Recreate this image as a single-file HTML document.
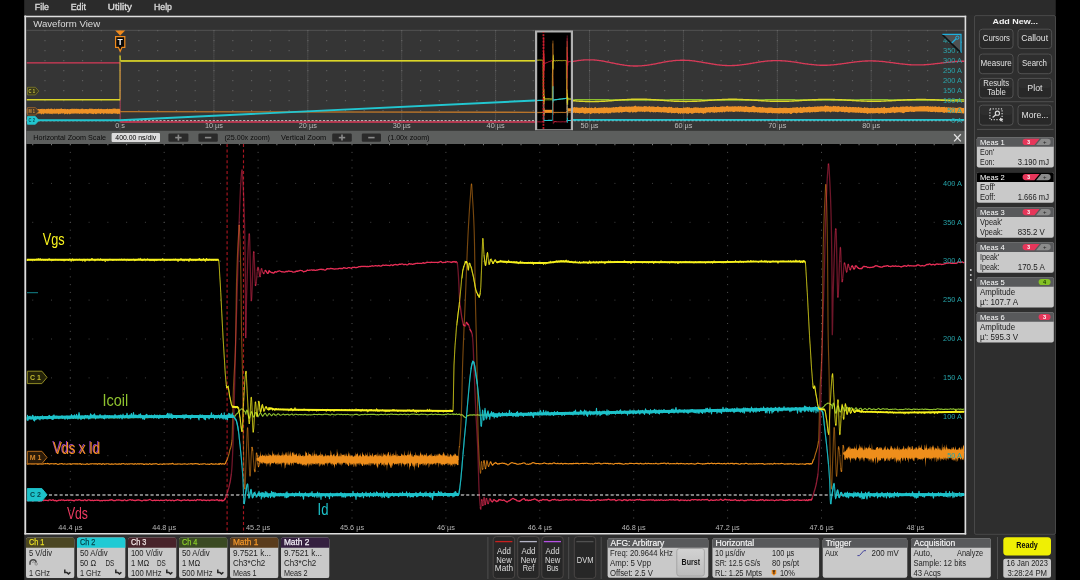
<!DOCTYPE html>
<html><head><meta charset="utf-8"><title>Oscilloscope</title>
<style>html,body{margin:0;padding:0;background:#000;overflow:hidden}svg{display:block;will-change:transform}text{font-family:"Liberation Sans", "DejaVu Sans", sans-serif;}</style>
</head><body>
<svg width="1080" height="580" viewBox="0 0 1080 580">
<rect x="0" y="0" width="1080" height="580" fill="#000" />
<rect x="24.4" y="0" width="1031.1" height="580" fill="#2d2d2d" />
<rect x="24.5" y="0" width="1031" height="15" fill="#2b2b2b" />
<text x="34.8" y="10" font-size="8.6" fill="#e4e4e4" textLength="14.2" lengthAdjust="spacingAndGlyphs" stroke="#e4e4e4" stroke-width="0.3" opacity="0.95">File</text>
<text x="70.7" y="10" font-size="8.6" fill="#e4e4e4" textLength="15.3" lengthAdjust="spacingAndGlyphs" stroke="#e4e4e4" stroke-width="0.3" opacity="0.95">Edit</text>
<text x="107.8" y="10" font-size="8.6" fill="#e4e4e4" textLength="24" lengthAdjust="spacingAndGlyphs" stroke="#e4e4e4" stroke-width="0.3" opacity="0.95">Utility</text>
<text x="154" y="10" font-size="8.6" fill="#e4e4e4" textLength="18" lengthAdjust="spacingAndGlyphs" stroke="#e4e4e4" stroke-width="0.3" opacity="0.95">Help</text>
<rect x="25" y="15.5" width="941.3" height="519" fill="#333333" />
<rect x="26.5" y="17" width="938" height="13.3" fill="#323232" />
<text x="33.2" y="26.7" font-size="9.4" fill="#dcdcdc" textLength="67" lengthAdjust="spacingAndGlyphs" >Waveform View</text>
<rect x="26.5" y="30.3" width="938.0" height="100.50000000000001" fill="#353535" />
<line x1="26.5" y1="30.3" x2="964.5" y2="30.3" stroke="#5a5a5a" stroke-width="0.8" />
<rect x="26.5" y="130.8" width="938" height="13.3" fill="#5c5e5d" />
<text x="33.3" y="139.6" font-size="7.6" fill="#0c0c0c" textLength="72.7" lengthAdjust="spacingAndGlyphs" >Horizontal Zoom Scale</text>
<rect x="111.6" y="133" width="48.4" height="9" fill="#dcdcdc" rx="1" />
<text x="135.8" y="139.8" font-size="7.4" fill="#000" text-anchor="middle" textLength="41" lengthAdjust="spacingAndGlyphs" >400.00 ns/div</text>
<rect x="168.4" y="133.5" width="20" height="8.3" fill="#2a2a2a" rx="1.2" />
<line x1="175.20000000000002" y1="137.6" x2="181.6" y2="137.6" stroke="#8a8a8a" stroke-width="1.6" />
<line x1="178.4" y1="134.6" x2="178.4" y2="140.6" stroke="#8a8a8a" stroke-width="1.6" />
<rect x="198.4" y="133.5" width="19.4" height="8.3" fill="#2a2a2a" rx="1.2" />
<line x1="204.9" y1="137.6" x2="211.29999999999998" y2="137.6" stroke="#8a8a8a" stroke-width="1.6" />
<text x="224.4" y="139.6" font-size="7.6" fill="#0c0c0c" textLength="45.6" lengthAdjust="spacingAndGlyphs" >(25.00x zoom)</text>
<text x="281" y="139.6" font-size="7.6" fill="#0c0c0c" textLength="45.2" lengthAdjust="spacingAndGlyphs" >Vertical Zoom</text>
<rect x="332.2" y="133.5" width="19.6" height="8.3" fill="#2a2a2a" rx="1.2" />
<line x1="338.8" y1="137.6" x2="345.2" y2="137.6" stroke="#8a8a8a" stroke-width="1.6" />
<line x1="342.0" y1="134.6" x2="342.0" y2="140.6" stroke="#8a8a8a" stroke-width="1.6" />
<rect x="361.8" y="133.5" width="19.2" height="8.3" fill="#2a2a2a" rx="1.2" />
<line x1="368.20000000000005" y1="137.6" x2="374.6" y2="137.6" stroke="#8a8a8a" stroke-width="1.6" />
<text x="387.8" y="139.6" font-size="7.6" fill="#0c0c0c" textLength="41.7" lengthAdjust="spacingAndGlyphs" >(1.00x zoom)</text>
<line x1="954.1" y1="134.2" x2="960.8" y2="141.4" stroke="#e4e4e4" stroke-width="1.25" />
<line x1="960.8" y1="134.2" x2="954.1" y2="141.4" stroke="#e4e4e4" stroke-width="1.25" />
<rect x="26.5" y="144" width="938.0" height="389" fill="#000" />
<clipPath id="pc"><rect x="26.5" y="144" width="938.0" height="389"/></clipPath>
<g clip-path="url(#pc)">
<line x1="70.3" y1="151.88" x2="70.3" y2="531" stroke="#525252" stroke-width="1" stroke-dasharray="1 6.780"/>
<line x1="164.2" y1="151.88" x2="164.2" y2="531" stroke="#525252" stroke-width="1" stroke-dasharray="1 6.780"/>
<line x1="258.1" y1="151.88" x2="258.1" y2="531" stroke="#525252" stroke-width="1" stroke-dasharray="1 6.780"/>
<line x1="352.0" y1="151.88" x2="352.0" y2="531" stroke="#525252" stroke-width="1" stroke-dasharray="1 6.780"/>
<line x1="445.9" y1="151.88" x2="445.9" y2="531" stroke="#525252" stroke-width="1" stroke-dasharray="1 6.780"/>
<line x1="539.8" y1="151.88" x2="539.8" y2="531" stroke="#525252" stroke-width="1" stroke-dasharray="1 6.780"/>
<line x1="633.7" y1="151.88" x2="633.7" y2="531" stroke="#525252" stroke-width="1" stroke-dasharray="1 6.780"/>
<line x1="727.6" y1="151.88" x2="727.6" y2="531" stroke="#525252" stroke-width="1" stroke-dasharray="1 6.780"/>
<line x1="821.5" y1="151.88" x2="821.5" y2="531" stroke="#525252" stroke-width="1" stroke-dasharray="1 6.780"/>
<line x1="915.4" y1="151.88" x2="915.4" y2="531" stroke="#525252" stroke-width="1" stroke-dasharray="1 6.780"/>
<line x1="32.24" y1="183.4" x2="964.5" y2="183.4" stroke="#525252" stroke-width="1" stroke-dasharray="1 17.780" opacity="0.8"/>
<line x1="32.24" y1="222.3" x2="964.5" y2="222.3" stroke="#525252" stroke-width="1" stroke-dasharray="1 17.780" opacity="0.8"/>
<line x1="32.24" y1="261.2" x2="964.5" y2="261.2" stroke="#525252" stroke-width="1" stroke-dasharray="1 17.780" opacity="0.8"/>
<line x1="32.24" y1="300.1" x2="964.5" y2="300.1" stroke="#525252" stroke-width="1" stroke-dasharray="1 17.780" opacity="0.8"/>
<line x1="32.24" y1="339.0" x2="964.5" y2="339.0" stroke="#525252" stroke-width="1" stroke-dasharray="1 17.780" opacity="0.8"/>
<line x1="32.24" y1="377.9" x2="964.5" y2="377.9" stroke="#525252" stroke-width="1" stroke-dasharray="1 17.780" opacity="0.8"/>
<line x1="32.24" y1="416.8" x2="964.5" y2="416.8" stroke="#525252" stroke-width="1" stroke-dasharray="1 17.780" opacity="0.8"/>
<line x1="32.24" y1="455.7" x2="964.5" y2="455.7" stroke="#525252" stroke-width="1" stroke-dasharray="1 17.780" opacity="0.8"/>
<line x1="32.24" y1="494.6" x2="964.5" y2="494.6" stroke="#525252" stroke-width="1" stroke-dasharray="1 17.780" opacity="0.8"/>
<line x1="32.24" y1="144.6" x2="964.5" y2="144.6" stroke="#777" stroke-width="1.2" stroke-dasharray="1 17.780"/>
<line x1="27" y1="292.6" x2="38" y2="292.6" stroke="#0f6a70" stroke-width="1.2" />
<line x1="27.5" y1="495" x2="964.5" y2="495" stroke="#7e7e7e" stroke-width="1.9" stroke-dasharray="3.1 2.25"/>
<line x1="227.1" y1="144" x2="227.1" y2="533" stroke="#a81620" stroke-width="1.15" stroke-dasharray="3 2.4"/>
<line x1="243.5" y1="144" x2="243.5" y2="533" stroke="#a81620" stroke-width="1.15" stroke-dasharray="3 2.4"/>
<polyline points="26.5,418.0 27,417.9 27.5,417.8 28,417.5 28.5,417.4 29,417.5 29.5,418.1 30,418.2 30.5,417.8 31,417.6 31.5,417.8 32,418.0 32.5,418.1 33,417.9 33.5,417.9 34,417.8 34.5,417.8 35,417.8 35.5,417.7 36,417.8 36.5,417.7 37,417.5 37.5,417.5 38,417.3 38.5,417.4 39,417.2 39.5,417.5 40,417.6 40.5,417.7 41,417.8 41.5,417.9 42,417.9 42.5,417.5 43,417.5 43.5,417.5 44,417.7 44.5,417.7 45,417.7 45.5,417.7 46,417.7 46.5,417.9 47,417.8 47.5,417.9 48,417.9 48.5,418.2 49,418.0 49.5,417.9 50,417.8 50.5,417.9 51,417.9 51.5,417.8 52,417.7 52.5,417.6 53,417.5 53.5,417.6 54,417.6 54.5,417.5 55,417.5 55.5,417.7 56,418.1 56.5,417.8 57,417.5 57.5,417.5 58,417.7 58.5,417.8 59,417.7 59.5,417.7 60,417.6 60.5,417.7 61,417.6 61.5,417.7 62,417.7 62.5,418.0 63,418.0 63.5,417.8 64,417.6 64.5,417.6 65,417.5 65.5,417.8 66,417.8 66.5,417.9 67,417.8 67.5,417.9 68,417.8 68.5,417.8 69,417.8 69.5,417.8 70,417.7 70.5,417.4 71,417.5 71.5,417.6 72,417.8 72.5,417.7 73,417.6 73.5,417.6 74,417.7 74.5,417.7 75,417.9 75.5,418.0 76,417.7 76.5,417.6 77,417.5 77.5,417.8 78,417.9 78.5,418.0 79,417.9 79.5,418.1 80,418.0 80.5,417.9 81,417.7 81.5,417.5 82,417.8 82.5,417.8 83,418.2 83.5,418.1 84,418.0 84.5,417.7 85,417.5 85.5,417.5 86,417.6 86.5,417.8 87,417.6 87.5,417.5 88,417.5 88.5,417.7 89,417.8 89.5,417.6 90,417.4 90.5,417.6 91,417.6 91.5,417.7 92,417.3 92.5,417.6 93,417.6 93.5,417.7 94,417.7 94.5,417.6 95,417.6 95.5,417.4 96,417.5 96.5,417.6 97,417.7 97.5,417.6 98,417.5 98.5,417.5 99,417.6 99.5,417.4 100,417.2 100.5,417.2 101,417.5 101.5,417.7 102,417.6 102.5,417.6 103,417.6 103.5,417.6 104,417.7 104.5,417.7 105,417.7 105.5,417.5 106,417.5 106.5,417.4 107,417.4 107.5,417.4 108,417.6 108.5,417.8 109,417.8 109.5,417.9 110,417.7 110.5,417.6 111,417.5 111.5,417.8 112,417.8 112.5,417.8 113,417.5 113.5,417.6 114,417.5 114.5,417.7 115,417.5 115.5,417.8 116,417.6 116.5,417.6 117,417.5 117.5,417.7 118,417.8 118.5,417.8 119,417.7 119.5,417.6 120,417.5 120.5,417.5 121,417.3 121.5,417.3 122,417.1 122.5,417.0 123,417.3 123.5,417.5 124,417.7 124.5,417.8 125,417.7 125.5,417.6 126,417.4 126.5,417.4 127,417.6 127.5,417.9 128,417.7 128.5,417.5 129,417.2 129.5,417.5 130,417.6 130.5,417.8 131,417.6 131.5,417.5 132,417.4 132.5,417.6 133,417.5 133.5,417.7 134,417.6 134.5,417.5 135,417.2 135.5,417.1 136,417.2 136.5,417.2 137,417.4 137.5,417.5 138,417.7 138.5,417.5 139,417.1 139.5,417.1 140,417.5 140.5,417.7 141,417.6 141.5,417.4 142,417.4 142.5,417.5 143,417.4 143.5,417.6 144,417.7 144.5,417.7 145,417.8 145.5,417.5 146,417.6 146.5,417.4 147,417.8 147.5,417.7 148,417.6 148.5,417.5 149,417.3 149.5,417.5 150,417.2 150.5,417.5 151,417.4 151.5,417.6 152,417.5 152.5,417.3 153,417.0 153.5,417.2 154,417.3 154.5,417.5 155,417.2 155.5,417.3 156,417.3 156.5,417.5 157,417.4 157.5,417.5 158,417.4 158.5,417.5 159,417.4 159.5,417.3 160,417.4 160.5,417.6 161,417.4 161.5,417.2 162,417.1 162.5,417.2 163,417.1 163.5,416.9 164,417.0 164.5,417.2 165,417.4 165.5,417.3 166,417.3 166.5,417.0 167,417.0 167.5,416.9 168,417.2 168.5,417.3 169,417.4 169.5,417.1 170,417.1 170.5,416.9 171,417.1 171.5,417.1 172,417.0 172.5,417.2 173,417.1 173.5,417.3 174,417.1 174.5,417.3 175,417.3 175.5,417.6 176,417.4 176.5,417.3 177,417.1 177.5,417.0 178,417.0 178.5,417.0 179,417.0 179.5,417.0 180,417.0 180.5,416.9 181,417.0 181.5,416.8 182,417.2 182.5,417.1 183,417.4 183.5,417.0 184,417.1 184.5,416.9 185,417.2 185.5,417.3 186,417.1 186.5,417.1 187,416.8 187.5,417.1 188,417.0 188.5,417.0 189,416.9 189.5,417.0 190,417.0 190.5,416.8 191,416.8 191.5,416.8 192,416.8 192.5,416.9 193,417.0 193.5,417.1 194,417.0 194.5,417.1 195,417.2 195.5,416.8 196,416.7 196.5,416.7 197,416.9 197.5,417.2 198,417.0 198.5,417.0 199,416.8 199.5,417.0 200,417.1 200.5,417.1 201,416.7 201.5,416.7 202,416.7 202.5,416.8 203,416.9 203.5,416.9 204,417.2 204.5,417.0 205,416.7 205.5,416.5 206,416.7 206.5,416.7 207,416.8 207.5,416.7 208,416.7 208.5,416.5 209,416.7 209.5,417.1 210,416.9 210.5,416.7 211,416.3 211.5,416.5 212,416.6 212.5,416.5 213,416.4 213.5,416.3 214,416.5 214.5,416.8 215,416.7 215.5,416.7 216,416.7 216.5,416.7 217,416.6 217.5,416.5 218,416.9 218.25,416.9 218.5,416.8 218.75,416.5 219,416.4 219.25,416.6 219.5,416.4 219.75,416.3 220,416.3 220.25,416.6 220.5,416.7 220.75,416.7 221,416.5 221.25,416.5 221.5,416.3 221.75,416.3 222,416.3 222.25,416.3 222.5,416.4 222.75,416.5 223,416.4 223.25,416.5 223.5,416.7 223.75,416.8 224,416.8 224.25,416.7 224.5,416.5 224.75,416.3 225,416.2 225.25,416.1 225.5,416.2 225.75,416.2 226,416.5 226.25,416.6 226.5,416.7 226.75,416.6 227,416.7 227.25,416.6 227.5,416.7 227.75,416.5 228,416.6 228.25,416.4 228.5,416.5 228.75,416.5 229,416.5 229.25,416.3 229.5,416.1 229.75,416.2 230,416.3 230.25,416.5 230.5,416.7 230.75,416.9 231,416.8 231.25,416.5 231.5,416.2 231.75,416.3 232,416.4 232.25,416.5 232.5,416.3 232.75,416.3 233,416.0 233.25,416.0 233.5,416.0 233.75,416.3 234,416.2 234.25,416.1 234.5,416.1 234.75,416.3 235,416.2 235.25,416.0 235.5,415.5 235.75,415.0 236,414.5 236.25,414.1 236.5,413.9 236.75,413.8 237,413.8 237.25,413.6 237.5,413.2 237.75,413.0 238,412.6 238.25,412.1 238.5,411.7 238.75,411.4 239,411.2 239.25,410.8 239.5,410.2 239.75,410.1 240,410.0 240.25,410.0 240.5,410.0 240.75,409.6 241,409.4 241.25,408.9 241.5,408.9 241.75,409.0 242,409.0 242.25,408.9 242.5,409.1 242.75,409.4 243,409.8 243.25,409.7 243.5,410.0 243.75,410.4 244,410.8 244.25,411.0 244.5,411.0 244.75,411.4 245,411.6 245.25,412.0 245.5,412.4 245.75,414.3 246,413.0 246.25,411.9 246.5,410.8 246.75,410.2 247,410.0 247.25,410.4 247.5,411.4 247.75,412.6 248,413.8 248.25,415.1 248.5,416.3 248.75,417.4 249,418.0 249.25,418.4 249.5,418.1 249.75,417.4 250,416.2 250.25,415.3 250.5,414.3 250.75,413.5 251,412.5 251.25,411.8 251.5,411.6 251.75,411.8 252,412.4 252.25,413.2 252.5,414.1 252.75,415.1 253,416.1 253.25,416.6 253.5,417.0 253.75,416.9 254,416.9 254.25,416.3 254.5,415.8 254.75,415.1 255,414.2 255.25,413.2 255.5,412.5 255.75,412.5 256,412.6 256.25,412.8 256.5,413.1 256.75,413.6 257,414.3 257.25,415.2 257.5,415.9 257.75,416.3 258,416.3 258.25,416.3 258.5,416.1 258.75,415.7 259,415.3 259.25,414.5 259.5,414.0 259.75,413.4 260,413.2 260.25,413.0 260.5,413.1 260.75,413.2 261,413.4 261.25,413.9 261.5,414.5 261.75,415.1 262,415.3 262.25,415.9 262.5,416.1 262.75,416.3 263,415.7 263.25,415.3 263.5,415.0 263.75,414.8 264,414.5 264.25,414.1 264.5,413.6 264.75,413.2 265,413.2 265.25,413.2 265.5,413.5 265.75,413.9 266,414.3 266.25,414.7 266.5,415.2 266.75,415.6 267,415.9 267.25,415.9 267.5,415.8 267.75,415.5 268,415.0 268.25,414.5 268.5,414.0 268.75,413.8 269,413.7 269.25,413.6 269.5,413.6 269.75,413.9 270,414.1 270.25,414.4 270.5,414.7 270.75,414.9 271,415.2 271.25,415.5 271.5,415.7 271.75,415.8 272,415.4 272.25,415.1 272.5,414.7 272.75,414.4 273,414.1 273.25,413.9 273.5,413.9 273.75,413.9 274,414.0 274.25,414.0 274.5,414.5 274.75,414.7 275,415.2 275.5,415.1 276,415.2 276.5,415.0 277,414.6 277.5,414.2 278,413.8 278.5,413.9 279,414.2 279.5,414.6 280,415.1 280.5,415.2 281,415.1 281.5,414.9 282,414.7 282.5,414.4 283,414.1 283.5,414.1 284,414.5 284.5,414.9 285,415.0 285.5,414.6 286,414.7 286.5,414.5 287,414.4 287.5,414.2 288,414.2 288.5,414.8 289,415.1 289.5,415.2 290,414.7 290.5,414.7 291,414.4 291.5,414.1 292,414.0 292.5,414.3 293,414.9 293.5,415.1 294,415.0 294.5,414.6 295,414.3 295.5,414.2 296,414.2 296.5,414.4 297,414.5 297.5,414.8 298,414.8 298.5,414.9 299,414.6 299.5,414.5 300,414.5 300.5,414.6 301,414.5 301.5,414.6 302,414.6 302.5,414.7 303,414.7 303.5,414.9 304,414.8 304.5,414.5 305,414.3 305.5,414.5 306,414.7 306.5,415.0 307,414.7 307.5,414.9 308,414.7 308.5,415.0 309,414.7 309.5,414.7 310,414.7 310.5,415.0 311,414.9 311.5,414.7 312,414.7 312.5,414.8 313,414.7 313.5,414.4 314,414.4 314.5,414.3 315,414.5 315.5,414.5 316,414.5 316.5,414.5 317,414.6 317.5,414.8 318,414.5 318.5,414.3 319,414.4 319.5,414.4 320,414.5 320.5,414.5 321,414.6 321.5,414.6 322,414.5 322.5,414.7 323,414.8 323.5,414.6 324,414.3 324.5,414.2 325,414.1 325.5,414.3 326,414.4 326.5,414.3 327,414.3 327.5,414.2 328,414.5 328.5,414.6 329,414.6 329.5,414.8 330,415.1 330.5,415.0 331,414.8 331.5,414.3 332,414.1 332.5,414.3 333,414.5 333.5,414.7 334,414.7 334.5,414.8 335,414.9 335.5,415.0 336,414.7 336.5,414.5 337,414.2 337.5,414.3 338,414.3 338.5,414.3 339,414.3 339.5,414.5 340,414.7 340.5,414.5 341,414.2 341.5,414.2 342,414.5 342.5,414.6 343,414.7 343.5,414.6 344,414.5 344.5,414.5 345,414.4 345.5,414.8 346,414.6 346.5,414.6 347,414.4 347.5,414.4 348,414.5 348.5,414.5 349,414.7 349.5,414.7 350,414.9 350.5,414.7 351,414.9 351.5,414.8 352,414.8 352.5,414.9 353,415.0 353.5,415.0 354,414.7 354.5,414.5 355,414.4 355.5,414.5 356,414.4 356.5,414.4 357,414.3 357.5,414.6 358,414.7 358.5,415.0 359,415.1 359.5,415.0 360,415.1 360.5,414.8 361,414.8 361.5,414.5 362,414.5 362.5,414.6 363,414.7 363.5,414.7 364,414.5 364.5,414.4 365,414.3 365.5,414.2 366,414.4 366.5,414.6 367,414.7 367.5,414.4 368,414.3 368.5,414.5 369,414.5 369.5,414.5 370,414.2 370.5,414.5 371,414.4 371.5,414.4 372,414.3 372.5,414.4 373,414.2 373.5,414.4 374,414.3 374.5,414.4 375,414.5 375.5,414.6 376,414.9 376.5,414.8 377,414.8 377.5,414.5 378,414.8 378.5,414.9 379,414.9 379.5,414.6 380,414.4 380.5,414.5 381,414.4 381.5,414.4 382,414.4 382.5,414.6 383,414.8 383.5,414.8 384,414.6 384.5,414.3 385,414.2 385.5,414.1 386,414.5 386.5,414.7 387,414.8 387.5,414.5 388,414.3 388.5,414.2 389,414.5 389.5,414.5 390,414.3 390.5,414.1 391,414.1 391.5,414.1 392,414.1 392.5,414.1 393,414.5 393.5,414.5 394,414.5 394.5,414.3 395,414.3 395.5,414.5 396,414.4 396.5,414.2 397,414.4 397.5,414.6 398,414.8 398.5,414.8 399,414.6 399.5,414.5 400,414.1 400.5,414.3 401,414.4 401.5,414.5 402,414.4 402.5,414.6 403,414.6 403.5,414.4 404,414.3 404.5,414.1 405,414.3 405.5,414.3 406,414.7 406.5,414.6 407,414.4 407.5,414.2 408,414.1 408.5,414.5 409,414.6 409.5,414.9 410,414.6 410.5,414.4 411,414.3 411.5,414.1 412,414.1 412.5,414.0 413,414.2 413.5,414.1 414,413.9 414.5,414.1 415,414.2 415.5,414.5 416,414.4 416.5,414.5 417,414.4 417.5,414.3 418,414.4 418.5,414.7 419,414.8 419.5,414.8 420,414.4 420.5,414.4 421,414.1 421.5,414.1 422,414.1 422.5,414.3 423,414.5 423.5,414.3 424,414.2 424.5,414.2 425,414.3 425.5,414.4 426,414.4 426.5,414.6 427,414.6 427.5,414.9 428,414.7 428.5,414.7 429,414.5 429.5,414.5 430,414.4 430.5,414.5 431,414.2 431.5,414.0 432,414.1 432.5,414.5 433,414.8 433.5,414.5 434,414.5 434.5,414.3 435,414.2 435.5,414.1 436,414.3 436.5,414.4 437,414.6 437.5,414.5 438,414.4 438.5,414.2 439,414.4 439.5,414.5 440,414.6 440.5,414.5 441,414.5 441.5,414.7 442,414.7 442.5,414.7 443,414.5 443.5,414.6 444,414.6 444.5,414.7 445,414.4 445.5,414.4 446,414.3 446.5,414.6 447,414.2 447.5,413.9 448,413.8 448.5,414.0 449,414.3 449.5,414.3 450,414.5 450.5,414.4 451,414.2 451.5,414.2 452,414.2 452.25,414.2 452.5,413.9 452.75,414.3 453,414.4 453.25,414.6 453.5,414.0 453.75,413.9 454,413.9 454.25,414.2 454.5,414.4 454.75,414.4 455,414.4 455.25,414.4 455.5,414.5 455.75,414.4 456,414.0 456.25,414.0 456.5,413.8 456.75,414.1 457,414.2 457.25,414.6 457.5,414.5 457.75,414.6 458,414.5 458.25,414.5 458.5,414.3 458.75,414.4 459,414.4 459.25,414.4 459.5,414.1 459.75,414.1 460,414.5 460.25,414.7 460.5,415.1 460.75,415.3 461,415.1 461.25,414.8 461.5,414.5 461.75,414.7 462,414.6 462.25,414.8 462.5,414.9 462.75,415.3 463,415.6 463.25,415.6 463.5,416.1 463.75,416.6 464,416.8 464.25,416.7 464.5,416.7 464.75,417.1 465,417.4 465.25,417.5 465.5,417.6 465.75,417.6 466,417.6 466.25,417.2 466.5,416.7 466.75,416.2 467,416.1 467.25,415.9 467.5,415.7 467.75,415.5 468,415.5 468.25,415.7 468.5,415.4 468.75,415.3 469,415.1 469.25,415.3 469.5,415.2 469.75,414.9 470,414.8 470.25,414.7 470.5,414.9 470.75,415.1 471,415.3 471.25,415.1 471.5,414.9 471.75,414.8 472,415.1 472.25,415.2 472.5,415.2 472.75,414.9 473,414.8 473.25,414.7 473.5,414.9 473.75,414.9 474,414.9 474.25,414.8 474.5,414.8 474.75,414.8 475,415.1 475.25,415.1 475.5,415.2 475.75,415.1 476,415.0 476.25,415.1 476.5,414.9 476.75,415.1 477,414.9 477.25,414.9 477.5,414.6 477.75,414.7 478,414.9 478.25,414.9 478.5,415.1 478.75,415.1 479,415.1 479.25,415.1 479.5,415.1 479.75,415.4 480,414.8 480.25,415.1 480.5,415.0 480.75,415.3 481,415.1 481.25,414.9 481.5,415.0 481.75,415.0 482,415.2 482.25,415.0 482.5,414.8 482.75,414.8 483,415.0 483.25,415.2 483.5,415.1 483.75,414.9 484,415.0 484.25,415.2 484.5,415.2 484.75,415.0 485,415.2 485.25,415.0 485.5,415.1 485.75,414.8 486,415.2 486.25,415.1 486.5,414.9 486.75,414.6 487,414.6 487.25,414.8 487.5,414.9 487.75,414.8 488,414.6 488.25,414.5 488.5,414.5 488.75,414.6 489,414.8 489.25,414.7 489.5,415.0 489.75,414.8 490,415.0 490.25,414.9 490.5,415.3 490.75,415.3 491,415.1 491.25,415.0 491.5,414.9 491.75,415.2 492,415.2 492.25,415.0 492.5,415.0 492.75,415.0 493,415.0 493.25,414.8 493.5,414.8 493.75,414.8 494,414.8 494.25,415.1 494.5,415.2 494.75,415.2 495,414.9 495.25,414.9 495.5,414.7 495.75,414.8 496,414.8 496.25,414.9 496.5,414.9 496.75,414.9 497,414.9 497.25,414.9 497.5,415.0 497.75,414.9 498,415.0 498.25,414.9 498.5,415.0 498.75,414.9 499,415.1 499.25,415.0 499.5,415.0 499.75,414.7 500,414.7 500.5,414.8 501,414.9 501.5,414.9 502,414.8 502.5,414.7 503,414.5 503.5,414.5 504,414.7 504.5,415.0 505,415.1 505.5,415.2 506,415.1 506.5,414.9 507,414.8 507.5,414.7 508,414.3 508.5,414.3 509,414.5 509.5,414.8 510,414.7 510.5,414.7 511,414.8 511.5,414.8 512,414.7 512.5,414.6 513,414.7 513.5,415.0 514,414.8 514.5,414.7 515,414.4 515.5,414.4 516,414.6 516.5,414.7 517,414.7 517.5,414.3 518,414.5 518.5,414.4 519,414.3 519.5,414.2 520,414.3 520.5,414.5 521,414.5 521.5,414.3 522,414.2 522.5,414.2 523,414.1 523.5,414.2 524,414.0 524.5,414.1 525,414.3 525.5,414.4 526,414.5 526.5,414.5 527,414.5 527.5,414.2 528,414.2 528.5,414.0 529,414.2 529.5,414.0 530,414.0 530.5,413.8 531,413.7 531.5,413.9 532,413.9 532.5,414.0 533,414.1 533.5,413.9 534,413.9 534.5,413.9 535,414.3 535.5,414.3 536,414.2 536.5,414.1 537,414.2 537.5,414.6 538,414.7 538.5,414.5 539,414.4 539.5,414.2 540,414.1 540.5,414.0 541,414.1 541.5,413.9 542,414.0 542.5,413.7 543,414.2 543.5,414.1 544,414.2 544.5,414.1 545,414.1 545.5,414.3 546,414.0 546.5,413.9 547,413.6 547.5,413.7 548,413.8 548.5,414.0 549,414.1 549.5,414.1 550,414.2 550.5,414.2 551,414.0 551.5,413.8 552,413.6 552.5,413.6 553,413.7 553.5,413.6 554,413.4 554.5,413.5 555,413.6 555.5,413.7 556,413.6 556.5,413.6 557,413.3 557.5,413.4 558,413.5 558.5,413.7 559,413.9 559.5,413.8 560,413.8 560.5,413.7 561,413.6 561.5,413.6 562,413.7 562.5,413.5 563,413.3 563.5,412.9 564,413.1 564.5,413.0 565,413.2 565.5,413.2 566,413.5 566.5,413.7 567,413.6 567.5,413.4 568,413.3 568.5,413.4 569,413.4 569.5,413.0 570,413.2 570.5,413.3 571,413.4 571.5,413.1 572,412.9 572.5,413.1 573,413.2 573.5,413.2 574,413.1 574.5,413.2 575,413.5 575.5,413.7 576,413.6 576.5,413.5 577,413.3 577.5,413.4 578,413.4 578.5,413.3 579,413.1 579.5,413.0 580,413.2 580.5,413.2 581,413.1 581.5,413.1 582,413.4 582.5,413.3 583,413.2 583.5,413.1 584,413.2 584.5,413.3 585,413.0 585.5,413.0 586,413.0 586.5,413.3 587,413.4 587.5,413.2 588,412.8 588.5,412.6 589,412.8 589.5,413.1 590,413.3 590.5,413.3 591,413.1 591.5,412.9 592,412.7 592.5,412.9 593,412.8 593.5,412.9 594,412.8 594.5,413.1 595,413.0 595.5,413.0 596,412.7 596.5,412.9 597,412.8 597.5,412.9 598,412.7 598.5,412.6 599,412.6 599.5,412.6 600,412.8 600.5,412.8 601,412.8 601.5,412.8 602,412.8 602.5,412.5 603,412.4 603.5,412.3 604,412.5 604.5,412.4 605,412.6 605.5,412.7 606,412.6 606.5,412.7 607,412.7 607.5,413.0 608,412.8 608.5,412.8 609,412.5 609.5,412.7 610,412.7 610.5,412.7 611,412.9 611.5,412.8 612,412.8 612.5,412.6 613,412.6 613.5,412.6 614,412.3 614.5,412.5 615,412.3 615.5,412.4 616,412.3 616.5,412.4 617,412.4 617.5,412.5 618,412.8 618.5,413.0 619,412.9 619.5,412.5 620,412.3 620.5,412.4 621,412.6 621.5,412.8 622,412.8 622.5,412.8 623,412.6 623.5,412.4 624,412.1 624.5,412.1 625,412.2 625.5,412.3 626,412.2 626.5,412.2 627,412.3 627.5,412.4 628,412.1 628.5,411.9 629,411.9 629.5,412.3 630,412.3 630.5,412.4 631,412.2 631.5,412.3 632,412.3 632.5,412.3 633,412.3 633.5,412.2 634,412.3 634.5,412.2 635,412.2 635.5,412.0 636,411.9 636.5,412.0 637,412.2 637.5,412.1 638,411.9 638.5,411.9 639,412.1 639.5,412.2 640,412.1 640.5,412.1 641,412.2 641.5,412.0 642,411.8 642.5,411.8 643,411.8 643.5,412.1 644,411.9 644.5,411.8 645,411.9 645.5,412.0 646,411.9 646.5,411.7 647,411.7 647.5,411.8 648,411.9 648.5,411.7 649,411.7 649.5,411.7 650,411.9 650.5,412.0 651,411.8 651.5,411.5 652,411.6 652.5,411.6 653,411.8 653.5,411.6 654,411.8 654.5,411.8 655,411.7 655.5,411.6 656,411.9 656.5,412.2 657,412.2 657.5,412.0 658,411.5 658.5,411.6 659,411.6 659.5,411.7 660,411.9 660.5,411.9 661,412.0 661.5,411.5 662,411.3 662.5,411.3 663,411.5 663.5,411.4 664,411.2 664.5,411.5 665,411.7 665.5,411.9 666,411.7 666.5,411.8 667,411.4 667.5,411.2 668,411.3 668.5,411.7 669,411.9 669.5,411.6 670,411.2 670.5,411.1 671,411.2 671.5,411.3 672,411.5 672.5,411.6 673,411.6 673.5,411.6 674,411.4 674.5,411.5 675,411.3 675.5,411.6 676,411.4 676.5,411.4 677,411.3 677.5,411.5 678,411.4 678.5,411.1 679,411.0 679.5,411.1 680,411.1 680.5,411.1 681,411.1 681.5,411.3 682,411.1 682.5,411.3 683,411.1 683.5,411.4 684,411.2 684.5,411.5 685,411.2 685.5,411.4 686,411.0 686.5,411.2 687,411.2 687.5,411.2 688,411.4 688.5,411.4 689,411.3 689.5,411.4 690,411.4 690.5,411.4 691,411.2 691.5,411.0 692,411.0 692.5,411.1 693,411.3 693.5,411.3 694,411.1 694.5,410.9 695,410.7 695.5,410.8 696,410.9 696.5,410.9 697,410.9 697.5,410.7 698,410.8 698.5,410.8 699,410.8 699.5,410.8 700,410.9 700.5,411.1 701,410.9 701.5,410.8 702,410.7 702.5,410.8 703,411.0 703.5,411.2 704,411.1 704.5,411.0 705,410.9 705.5,411.1 706,410.9 706.5,410.9 707,410.6 707.5,410.5 708,410.5 708.5,410.7 709,410.8 709.5,410.8 710,410.8 710.5,410.9 711,411.0 711.5,410.8 712,410.9 712.5,410.7 713,410.8 713.5,410.5 714,410.6 714.5,410.5 715,410.6 715.5,410.4 716,410.4 716.5,410.6 717,410.8 717.5,410.7 718,410.5 718.5,410.3 719,410.3 719.5,410.2 720,410.2 720.5,410.4 721,410.6 721.5,410.6 722,410.4 722.5,410.4 723,410.5 723.5,410.7 724,410.6 724.5,410.4 725,410.1 725.5,410.0 726,410.2 726.5,410.2 727,410.2 727.5,410.2 728,410.3 728.5,410.5 729,410.4 729.5,410.3 730,410.3 730.5,410.4 731,410.3 731.5,410.2 732,410.1 732.5,410.0 733,410.1 733.5,410.0 734,410.2 734.5,410.2 735,410.3 735.5,410.1 736,410.1 736.5,410.2 737,410.1 737.5,410.3 738,410.2 738.5,410.0 739,409.7 739.5,409.3 740,409.6 740.5,409.8 741,410.1 741.5,410.0 742,409.9 742.5,409.9 743,409.9 743.5,409.9 744,409.9 744.5,410.1 745,410.2 745.5,410.2 746,410.3 746.5,410.5 747,410.6 747.5,410.5 748,410.2 748.5,410.0 749,409.6 749.5,409.6 750,409.8 750.5,409.9 751,409.8 751.5,409.8 752,410.1 752.5,410.5 753,410.1 753.5,409.9 754,409.7 754.5,409.8 755,409.8 755.5,410.0 756,410.0 756.5,409.9 757,409.5 757.5,409.6 758,409.5 758.5,409.6 759,409.7 759.5,409.8 760,409.8 760.5,409.8 761,409.8 761.5,410.0 762,409.8 762.5,409.5 763,409.4 763.5,409.6 764,409.9 764.5,410.0 765,410.1 765.5,410.0 766,409.8 766.5,409.7 767,409.5 767.5,409.5 768,409.4 768.5,409.5 769,409.7 769.5,409.6 770,409.8 770.5,409.6 771,409.7 771.5,409.4 772,409.7 772.5,409.5 773,409.7 773.5,409.1 774,409.1 774.5,409.2 775,409.6 775.5,409.6 776,409.5 776.5,409.8 777,409.7 777.5,409.5 778,409.2 778.5,409.4 779,409.3 779.5,409.2 780,408.9 780.5,409.0 781,409.2 781.5,409.5 782,409.2 782.5,409.1 783,408.9 783.5,409.2 784,409.4 784.5,409.4 785,409.2 785.5,409.1 786,409.1 786.5,409.3 787,409.5 787.5,409.5 788,409.3 788.5,409.3 789,409.4 789.5,409.6 790,409.3 790.5,409.2 791,409.2 791.5,409.2 792,409.0 792.5,408.9 793,408.8 793.5,409.0 794,409.1 794.5,409.2 795,408.9 795.5,408.8 796,408.7 796.5,408.9 797,409.0 797.5,409.3 798,409.2 798.5,409.2 799,408.8 799.5,409.0 800,409.1 800.5,409.2 801,408.9 801.5,408.9 802,408.9 802.5,409.1 803,409.0 803.5,409.0 804,408.8 804.25,408.9 804.5,409.0 804.75,409.2 805,409.2 805.25,409.2 805.5,409.1 805.75,409.1 806,409.1 806.25,409.1 806.5,408.8 806.75,408.7 807,408.6 807.25,408.6 807.5,408.8 807.75,409.0 808,409.4 808.25,409.3 808.5,409.3 808.75,408.9 809,409.0 809.25,408.6 809.5,408.8 809.75,408.7 810,409.0 810.25,409.0 810.5,409.1 810.75,408.9 811,408.8 811.25,408.6 811.5,408.7 811.75,408.7 812,408.6 812.25,408.7 812.5,408.6 812.75,408.7 813,408.5 813.25,408.6 813.5,408.7 813.75,408.7 814,408.6 814.25,408.4 814.5,408.4 814.75,408.4 815,408.6 815.25,408.8 815.5,408.8 815.75,408.9 816,408.9 816.25,408.9 816.5,408.8 816.75,408.5 817,408.8 817.25,408.4 817.5,408.5 817.75,408.3 818,408.7 818.25,408.7 818.5,408.5 818.75,408.4 819,408.3 819.1,408.7 819.25,408.8 819.5,408.9 819.75,408.7 820,408.6 820.25,408.4 820.5,408.5 820.75,408.4 821,408.4 821.25,408.3 821.5,408.1 821.75,408.0 822,407.8 822.25,408.0 822.5,408.1 822.75,408.0 823,407.4 823.25,407.0 823.5,406.8 823.75,406.6 824,406.4 824.25,406.1 824.5,405.7 824.75,405.1 825,405.0 825.1,405.2 825.25,405.1 825.5,404.8 825.75,404.3 826,404.3 826.25,404.1 826.5,403.9 826.75,403.7 827,403.8 827.25,403.6 827.5,403.2 827.75,403.1 828,403.1 828.25,403.2 828.5,403.2 828.7,403.2 828.75,403.3 829,403.2 829.25,403.4 829.5,403.4 829.75,403.7 830,404.0 830.25,404.4 830.5,404.3 830.75,404.5 831,404.4 831.25,404.7 831.5,405.0 831.75,405.5 832,405.8 832.1,406.0 832.25,408.6 832.5,407.2 832.75,405.5 833,403.9 833.25,403.1 833.5,403.1 833.75,403.8 834,404.6 834.25,405.6 834.5,406.9 834.75,408.5 835,410.1 835.1,410.8 835.25,411.6 835.5,412.7 835.75,413.2 836,413.2 836.25,412.6 836.5,411.8 836.75,410.5 837,408.9 837.25,407.4 837.5,406.5 837.75,406.0 838,405.8 838.25,405.9 838.5,406.4 838.75,407.1 839,408.3 839.25,409.6 839.5,410.9 839.75,411.5 840,411.8 840.25,411.9 840.5,411.8 840.75,411.2 841,410.7 841.25,409.7 841.5,409.1 841.75,408.1 842,407.4 842.25,406.6 842.5,406.6 842.75,406.8 843,407.1 843.25,407.5 843.5,408.2 843.75,409.1 844,410.1 844.25,410.7 844.5,411.1 844.75,411.2 845,411.1 845.25,410.9 845.5,410.3 845.75,409.6 846,408.9 846.25,408.3 846.5,407.6 846.75,407.3 847,407.0 847.25,407.3 847.5,407.7 847.75,408.3 848,409.0 848.25,409.6 848.5,410.2 848.75,410.6 849,410.8 849.25,411.0 849.5,411.0 849.75,410.6 850,410.1 850.25,409.2 850.5,408.5 850.75,407.9 851,407.9 851.25,407.9 851.5,407.9 851.75,407.8 852,408.0 852.25,408.5 852.5,409.2 852.75,409.6 853,409.7 853.25,409.9 853.5,410.0 853.75,410.3 854,410.3 854.25,410.4 854.5,410.1 854.75,409.8 855,409.0 855.25,408.6 855.5,408.2 855.75,408.0 856,407.8 856.25,407.7 856.5,408.3 856.75,408.7 857,409.0 857.25,409.2 857.5,409.7 857.75,409.9 858,410.3 858.25,410.1 858.5,410.2 858.75,409.9 859,409.6 859.25,409.1 859.5,408.7 859.75,408.5 860,408.4 860.25,408.4 860.5,408.2 860.75,408.2 861,408.3 861.25,408.7 861.5,409.0 861.75,409.4 862,409.8 862.5,410.0 863,409.8 863.5,409.5 864,409.1 864.5,408.8 865,408.6 865.5,408.7 866,409.2 866.5,409.4 867,409.8 867.5,409.9 868,409.4 868.5,408.7 869,408.3 869.5,408.5 870,408.6 870.5,409.0 871,409.2 871.5,409.6 872,409.5 872.5,409.6 873,409.1 873.5,409.1 874,408.8 874.5,409.3 875,409.4 875.5,409.8 876,409.6 876.5,409.5 877,409.4 877.5,409.1 878,408.5 878.5,408.4 879,408.6 879.5,409.2 880,409.4 880.5,409.6 881,409.4 881.5,409.3 882,409.1 882.5,408.9 883,408.5 883.5,408.8 884,409.0 884.5,409.2 885,409.0 885.5,409.0 886,409.2 886.5,408.9 887,408.9 887.5,408.9 888,409.3 888.5,409.5 889,409.8 889.5,409.6 890,409.4 890.5,409.2 891,409.4 891.5,409.5 892,409.4 892.5,409.1 893,409.2 893.5,409.3 894,409.3 894.5,409.2 895,408.9 895.5,409.1 896,409.1 896.5,409.4 897,409.5 897.5,409.7 898,409.7 898.5,409.7 899,409.8 899.5,409.5 900,409.4 900.5,409.5 901,409.6 901.5,409.5 902,409.4 902.5,409.6 903,409.6 903.5,409.5 904,409.3 904.5,409.2 905,409.1 905.5,408.9 906,408.9 906.5,409.1 907,409.4 907.5,409.4 908,409.3 908.5,409.0 909,408.9 909.5,409.2 910,409.2 910.5,409.5 911,409.5 911.5,409.8 912,409.6 912.5,409.6 913,409.1 913.5,409.1 914,408.9 914.5,409.3 915,409.4 915.5,409.5 916,409.3 916.5,409.2 917,409.1 917.5,409.3 918,409.4 918.5,409.6 919,409.5 919.5,409.4 920,409.2 920.5,409.2 921,409.2 921.5,409.2 922,409.1 922.5,409.1 923,409.3 923.5,409.5 924,409.6 924.5,409.3 925,409.0 925.5,409.1 926,409.1 926.5,409.5 927,409.3 927.5,409.4 928,409.3 928.5,409.5 929,409.7 929.5,409.6 930,409.8 930.5,409.5 931,409.5 931.5,409.5 932,409.6 932.5,409.7 933,409.6 933.5,409.3 934,409.2 934.5,409.3 935,409.5 935.5,409.6 936,409.3 936.5,409.3 937,408.9 937.5,408.8 938,408.8 938.5,409.0 939,409.0 939.5,409.1 940,409.2 940.5,409.4 941,409.0 941.5,409.1 942,409.1 942.5,409.4 943,409.5 943.5,409.5 944,409.4 944.5,409.3 945,409.4 945.5,409.1 946,409.1 946.5,409.2 947,409.4 947.5,409.4 948,409.3 948.5,409.3 949,409.3 949.5,409.2 950,409.0 950.5,408.9 951,408.9 951.5,409.2 952,409.2 952.5,409.1 953,409.0 953.5,408.8 954,409.2 954.5,409.2 955,409.5 955.5,409.4 956,409.5 956.5,409.3 957,409.3 957.5,409.2 958,409.3 958.5,408.9 959,409.1 959.5,409.2 960,409.4 960.5,409.0 961,409.1 961.5,409.2 962,409.5 962.5,409.4 963,409.3 963.5,409.3 964,409.1 964.5,409.0" fill="none" stroke="#8fc22f" stroke-width="1.1" stroke-linejoin="round" opacity="1" />
<polyline points="26.5,463.4 27,463.7 27.5,464.1 28,464.0 28.5,463.9 29,463.8 29.5,463.8 30,463.7 30.5,463.8 31,463.8 31.5,463.8 32,463.9 32.5,464.0 33,463.9 33.5,463.9 34,463.8 34.5,464.0 35,463.8 35.5,463.7 36,463.4 36.5,463.7 37,464.0 37.5,464.3 38,464.2 38.5,464.1 39,463.9 39.5,463.9 40,463.9 40.5,463.8 41,463.8 41.5,464.0 42,464.2 42.5,464.0 43,463.9 43.5,463.8 44,463.8 44.5,463.7 45,463.7 45.5,463.5 46,463.8 46.5,463.7 47,463.7 47.5,463.4 48,463.6 48.5,463.6 49,464.0 49.5,464.1 50,463.9 50.5,463.7 51,463.6 51.5,463.8 52,463.7 52.5,463.7 53,463.8 53.5,463.8 54,463.8 54.5,463.8 55,463.8 55.5,463.6 56,463.8 56.5,463.7 57,464.0 57.5,464.2 58,464.5 58.5,464.3 59,464.1 59.5,463.8 60,464.0 60.5,463.8 61,463.7 61.5,463.6 62,463.6 62.5,463.9 63,464.0 63.5,464.2 64,464.0 64.5,463.9 65,464.0 65.5,464.0 66,464.0 66.5,464.2 67,464.2 67.5,464.1 68,463.8 68.5,464.0 69,464.0 69.5,463.9 70,463.9 70.5,464.1 71,464.4 71.5,464.1 72,464.0 72.5,463.8 73,463.9 73.5,463.7 74,463.7 74.5,463.8 75,464.1 75.5,463.8 76,463.8 76.5,463.8 77,464.1 77.5,463.9 78,463.8 78.5,464.0 79,464.0 79.5,463.9 80,463.6 80.5,463.8 81,464.2 81.5,464.4 82,464.1 82.5,464.0 83,464.0 83.5,464.2 84,464.2 84.5,464.2 85,464.3 85.5,464.3 86,464.2 86.5,463.9 87,463.8 87.5,463.8 88,464.2 88.5,464.3 89,464.3 89.5,464.1 90,464.0 90.5,463.9 91,463.9 91.5,463.9 92,463.8 92.5,463.7 93,463.8 93.5,464.0 94,463.8 94.5,463.9 95,463.8 95.5,464.0 96,463.7 96.5,463.9 97,463.9 97.5,464.4 98,464.0 98.5,463.8 99,463.6 99.5,463.9 100,463.9 100.5,463.9 101,463.9 101.5,464.3 102,464.3 102.5,464.0 103,463.5 103.5,463.8 104,464.0 104.5,464.4 105,464.1 105.5,464.0 106,463.9 106.5,463.8 107,463.8 107.5,463.7 108,463.7 108.5,463.9 109,464.1 109.5,464.0 110,464.1 110.5,464.3 111,464.4 111.5,463.9 112,463.9 112.5,464.1 113,464.2 113.5,464.3 114,464.0 114.5,464.0 115,463.8 115.5,463.9 116,463.9 116.5,464.2 117,464.1 117.5,464.2 118,464.0 118.5,464.1 119,463.9 119.5,463.9 120,464.1 120.5,464.3 121,464.1 121.5,463.9 122,463.6 122.5,463.7 123,463.7 123.5,463.6 124,463.8 124.5,464.0 125,464.2 125.5,464.1 126,464.0 126.5,463.8 127,464.0 127.5,464.3 128,464.1 128.5,464.0 129,463.7 129.5,464.1 130,464.0 130.5,463.8 131,463.7 131.5,463.7 132,463.9 132.5,463.9 133,463.9 133.5,464.2 134,464.1 134.5,464.1 135,463.6 135.5,463.7 136,464.0 136.5,464.2 137,464.1 137.5,463.7 138,463.8 138.5,463.8 139,464.1 139.5,463.9 140,463.9 140.5,463.8 141,463.7 141.5,463.9 142,463.8 142.5,464.0 143,463.9 143.5,464.4 144,464.4 144.5,464.5 145,464.1 145.5,464.0 146,463.9 146.5,464.1 147,464.0 147.5,464.1 148,464.3 148.5,464.3 149,464.0 149.5,463.6 150,463.7 150.5,464.1 151,464.3 151.5,464.4 152,464.1 152.5,464.1 153,463.9 153.5,463.9 154,464.0 154.5,463.9 155,464.0 155.5,463.8 156,463.6 156.5,463.7 157,463.9 157.5,464.2 158,464.3 158.5,464.5 159,464.5 159.5,464.1 160,464.0 160.5,464.0 161,464.1 161.5,464.2 162,464.3 162.5,464.4 163,464.1 163.5,463.9 164,464.0 164.5,464.1 165,464.1 165.5,464.0 166,464.0 166.5,464.0 167,463.9 167.5,464.0 168,464.1 168.5,464.1 169,463.9 169.5,463.9 170,463.8 170.5,463.9 171,463.9 171.5,463.9 172,463.5 172.5,463.4 173,463.6 173.5,463.9 174,464.2 174.5,464.2 175,464.2 175.5,464.1 176,464.0 176.5,464.2 177,464.1 177.5,464.1 178,463.8 178.5,464.0 179,464.0 179.5,464.0 180,463.9 180.5,464.1 181,464.2 181.5,464.2 182,464.0 182.5,464.2 183,464.0 183.5,464.0 184,463.8 184.5,463.8 185,463.8 185.5,464.0 186,464.0 186.5,464.2 187,464.2 187.5,464.3 188,464.0 188.5,463.9 189,464.0 189.5,464.0 190,463.9 190.5,463.7 191,463.6 191.5,463.8 192,463.8 192.5,464.2 193,463.9 193.5,464.0 194,463.8 194.5,463.8 195,463.6 195.5,463.5 196,463.6 196.5,463.8 197,463.9 197.5,463.7 198,463.8 198.5,464.1 199,464.4 199.5,464.5 200,464.2 200.5,464.0 201,464.0 201.5,464.1 202,464.2 202.5,463.9 203,464.0 203.5,463.9 204,463.8 204.5,463.7 205,463.8 205.5,464.1 206,464.2 206.5,464.3 207,464.2 207.5,464.1 208,464.0 208.5,464.3 209,464.4 209.5,464.4 210,464.1 210.5,464.0 211,463.7 211.5,463.6 212,463.9 212.5,464.1 213,464.1 213.5,464.0 214,464.1 214.5,464.2 215,464.1 215.5,463.9 216,463.8 216.5,464.0 217,464.1 217.5,464.2 218,464.1 218.25,464.0 218.5,463.8 218.75,464.0 219,464.3 219.25,464.5 219.5,464.0 219.75,463.6 220,463.4 220.25,463.5 220.5,463.5 220.75,463.7 221,463.9 221.25,464.0 221.5,464.1 221.75,464.0 222,463.9 222.25,463.8 222.5,463.8 222.75,463.7 223,463.9 223.25,463.9 223.5,463.9 223.75,463.9 224,464.0 224.25,464.1 224.5,464.2 224.75,464.0 225,463.8 225.25,463.6 225.5,463.3 225.75,462.5 226,461.9 226.25,461.3 226.5,461.1 226.75,460.4 226.9,460.2 227,460.1 227.25,459.4" fill="none" stroke="#ee8e1b" stroke-width="1.15" stroke-linejoin="round" opacity="1.0" />
<polyline points="227.25,459.4 227.5,458.8 227.75,457.8 228,456.9 228.25,455.9 228.5,455.5 228.75,454.6 229,453.7 229.25,452.6 229.5,451.7 229.7,450.8 229.75,450.3 230,449.6 230.25,448.8 230.5,448.4 230.75,447.5 231,446.5 231.25,445.4 231.5,443.6 231.75,441.9 232,439.6" fill="none" stroke="#ee8e1b" stroke-width="1.15" stroke-linejoin="round" opacity="0.72" />
<polyline points="232,439.6 232.25,434.4 232.5,425.0 232.7,417.1 232.75,415.1 233,403.2 233.2,394.8 233.25,393.0 233.5,386.5 233.75,381.0 234,376.4 234.25,372.1 234.5,368.1 234.75,363.7 235,358.2 235.25,352.3 235.5,344.8 235.75,332.8 236,315.9 236.25,298.4 236.5,283.8 236.6,279.8 236.75,274.7 237,267.3 237.25,260.5 237.5,254.3 237.75,248.6 238,243.6 238.25,239.0 238.5,235.1 238.75,230.4 239,226.5" fill="none" stroke="#ee8e1b" stroke-width="1.15" stroke-linejoin="round" opacity="0.5" />
<polyline points="239,226.5 239.2,225.0" fill="none" stroke="#ee8e1b" stroke-width="1.15" stroke-linejoin="round" opacity="0.72" />
<polyline points="239.2,225.0 239.25,224.9" fill="none" stroke="#ee8e1b" stroke-width="1.15" stroke-linejoin="round" opacity="1.0" />
<polyline points="239.25,224.9 239.5,228.2 239.75,233.6 239.8,234.8 240,240.1 240.25,248.8 240.5,259.6 240.75,271.9 240.9,279.9 241,286.6 241.25,309.5 241.5,330.1 241.75,342.9 242,352.6 242.25,361.7 242.5,373.6 242.6,379.7 242.75,394.0 243,422.1 243.1,429.7 243.25,438.1 243.5,451.4 243.75,463.3 244,473.1 244.25,481.0 244.5,486.4 244.75,488.9" fill="none" stroke="#ee8e1b" stroke-width="1.15" stroke-linejoin="round" opacity="0.5" />
<polyline points="244.75,488.9 244.8,489.1" fill="none" stroke="#ee8e1b" stroke-width="1.15" stroke-linejoin="round" opacity="1.0" />
<polyline points="244.8,489.1 245,487.7" fill="none" stroke="#ee8e1b" stroke-width="1.15" stroke-linejoin="round" opacity="0.72" />
<polyline points="245,487.7 245.25,483.4 245.5,476.6 245.75,469.1 246,462.1 246.1,460.0 246.25,456.7 246.5,449.8 246.75,442.3 247,435.5 247.25,430.6 247.5,428.0" fill="none" stroke="#ee8e1b" stroke-width="1.15" stroke-linejoin="round" opacity="0.5" />
<polyline points="247.5,428.0 247.6,427.8 247.75,428.5" fill="none" stroke="#ee8e1b" stroke-width="1.15" stroke-linejoin="round" opacity="0.72" />
<polyline points="247.75,428.5 248,433.1 248.25,439.9 248.5,447.5 248.75,454.1 248.8,455.1 249,459.6 249.25,465.2 249.5,470.5 249.75,474.1" fill="none" stroke="#ee8e1b" stroke-width="1.15" stroke-linejoin="round" opacity="0.5" />
<polyline points="249.75,474.1 250,476.0 250.25,474.9" fill="none" stroke="#ee8e1b" stroke-width="1.15" stroke-linejoin="round" opacity="0.72" />
<polyline points="250.25,474.9 250.5,471.6 250.75,466.9 251,461.3 251.25,455.9 251.5,451.2 251.75,448.0" fill="none" stroke="#ee8e1b" stroke-width="1.15" stroke-linejoin="round" opacity="0.5" />
<polyline points="251.75,448.0 252,447.0" fill="none" stroke="#ee8e1b" stroke-width="1.15" stroke-linejoin="round" opacity="0.72" />
<polyline points="252,447.0 252.25,447.5" fill="none" stroke="#ee8e1b" stroke-width="1.15" stroke-linejoin="round" opacity="1.0" />
<polyline points="252.25,447.5 252.5,448.9 252.75,451.2" fill="none" stroke="#ee8e1b" stroke-width="1.15" stroke-linejoin="round" opacity="0.72" />
<polyline points="252.75,451.2 253,454.1 253.25,457.3 253.5,460.3 253.75,463.0 254,466.0 254.25,468.5" fill="none" stroke="#ee8e1b" stroke-width="1.15" stroke-linejoin="round" opacity="0.5" />
<polyline points="254.25,468.5 254.5,470.6 254.75,471.6" fill="none" stroke="#ee8e1b" stroke-width="1.15" stroke-linejoin="round" opacity="0.72" />
<polyline points="254.75,471.6 254.9,471.7 255,471.6" fill="none" stroke="#ee8e1b" stroke-width="1.15" stroke-linejoin="round" opacity="1.0" />
<polyline points="255,471.6 255.25,469.6" fill="none" stroke="#ee8e1b" stroke-width="1.15" stroke-linejoin="round" opacity="0.72" />
<polyline points="255.25,469.6 255.5,465.9 255.75,461.6 256,457.4 256.25,454.3" fill="none" stroke="#ee8e1b" stroke-width="1.15" stroke-linejoin="round" opacity="0.5" />
<polyline points="256.25,454.3 256.5,452.8" fill="none" stroke="#ee8e1b" stroke-width="1.15" stroke-linejoin="round" opacity="0.72" />
<polyline points="256.5,452.8 256.75,453.4" fill="none" stroke="#ee8e1b" stroke-width="1.15" stroke-linejoin="round" opacity="1.0" />
<polyline points="256.75,453.4 257,454.9 257.25,457.0" fill="none" stroke="#ee8e1b" stroke-width="1.15" stroke-linejoin="round" opacity="0.72" />
<polyline points="257.25,457.0 257.5,459.3 257.75,461.9" fill="none" stroke="#ee8e1b" stroke-width="1.15" stroke-linejoin="round" opacity="0.5" />
<polyline points="257.75,461.9 258,464.3 258.25,465.9" fill="none" stroke="#ee8e1b" stroke-width="1.15" stroke-linejoin="round" opacity="0.72" />
<polyline points="258.25,465.9 258.5,466.7 258.75,466.2" fill="none" stroke="#ee8e1b" stroke-width="1.15" stroke-linejoin="round" opacity="1.0" />
<polyline points="258.75,466.2 259,465.3 259.25,464.2 259.5,462.7 259.75,461.2 260,459.5 260.25,458.6" fill="none" stroke="#ee8e1b" stroke-width="1.15" stroke-linejoin="round" opacity="0.72" />
<polyline points="260.25,458.6 260.5,458.3 260.75,458.6 261,458.7 261.25,458.6 261.5,458.6 261.75,458.7 262,458.6 262.25,458.6 262.5,458.5 262.75,458.7 263,458.8 263.25,458.7 263.5,458.7 263.75,458.6 264,458.9 264.25,458.8 264.5,458.7 264.75,458.6 265,458.8 265.25,458.9 265.5,459.0 265.75,458.7 266,458.6 266.25,458.3 266.5,458.4 266.75,458.1 267,458.4 267.25,458.3 267.5,458.5 267.75,458.2 268,458.7 268.25,458.6 268.5,458.8 268.75,458.4 269,458.4 269.25,458.6 269.5,458.8 269.75,458.7 270,458.4 270.25,458.4 270.5,458.8 270.75,458.8 271,458.9 271.25,458.8 271.5,459.2 271.75,459.2 272,458.9 272.25,458.5 272.5,458.6 272.75,458.8 273,458.7 273.25,458.4 273.5,458.3 273.75,458.5 274,458.6 274.25,458.8 274.5,459.0 274.75,458.7 275,458.6 275.5,458.4 276,458.5 276.5,458.6 277,458.5 277.5,458.4 278,458.5 278.5,458.8 279,459.1 279.5,459.0 280,458.8 280.5,458.9 281,458.7 281.5,459.0 282,458.9 282.5,459.0 283,458.9 283.5,458.8 284,458.7 284.5,458.9 285,458.6 285.5,458.8 286,458.5 286.5,459.1 287,459.0 287.5,459.4 288,459.1 288.5,459.2 289,459.1 289.5,459.2 290,459.0 290.5,458.6 291,458.4 291.5,458.1 292,458.4 292.5,458.6 293,458.9 293.5,459.0 294,459.2 294.5,459.0 295,459.0 295.5,458.8 296,458.7 296.5,458.4 297,458.5 297.5,458.5 298,458.7 298.5,458.6 299,458.5 299.5,459.0 300,459.1 300.5,459.1 301,458.7 301.5,458.7 302,458.7 302.5,458.9 303,458.7 303.5,459.0 304,458.8 304.5,458.8 305,459.2 305.5,459.2 306,459.1 306.5,458.6 307,458.5 307.5,458.9 308,459.0 308.5,459.0 309,459.1 309.5,459.0 310,459.0 310.5,458.9 311,459.0 311.5,459.1 312,458.8 312.5,458.7 313,458.7 313.5,458.9 314,459.0 314.5,458.9 315,458.7 315.5,458.6 316,459.0 316.5,459.1 317,459.2 317.5,458.9 318,459.1 318.5,458.9 319,459.1 319.5,458.9 320,458.9 320.5,459.1 321,459.3 321.5,459.2 322,459.1 322.5,459.0 323,459.4 323.5,459.0 324,459.0 324.5,458.8 325,458.9 325.5,458.7 326,459.1 326.5,459.2 327,459.3 327.5,458.8 328,459.0 328.5,459.2 329,459.4 329.5,459.0 330,459.0 330.5,459.0 331,459.0 331.5,459.2 332,459.3 332.5,459.4 333,459.0 333.5,459.0 334,459.3 334.5,459.5 335,459.4 335.5,459.2 336,459.4 336.5,459.3 337,459.4 337.5,459.2 338,459.2 338.5,459.3 339,459.5 339.5,459.2 340,459.1 340.5,459.0 341,459.5 341.5,459.5 342,459.4 342.5,459.3 343,459.4 343.5,459.2 344,459.3 344.5,459.4 345,459.7 345.5,459.7 346,459.5 346.5,459.5 347,459.9 347.5,459.8 348,459.7 348.5,459.5 349,459.3 349.5,459.0 350,458.9 350.5,459.3 351,459.8 351.5,459.8 352,459.8 352.5,459.5 353,459.5 353.5,459.2 354,459.1 354.5,458.9 355,458.9 355.5,459.0 356,458.9 356.5,459.0 357,459.2 357.5,459.2 358,459.1 358.5,459.1 359,459.3 359.5,459.4 360,459.5 360.5,459.6 361,459.6 361.5,459.5 362,459.5 362.5,459.5 363,459.3 363.5,459.3 364,459.4 364.5,459.5 365,459.6 365.5,459.4 366,459.6 366.5,459.7 367,459.8 367.5,459.6 368,459.4 368.5,459.4 369,459.3 369.5,459.4 370,459.2 370.5,459.4 371,459.2 371.5,459.6 372,459.4 372.5,459.7 373,459.6 373.5,459.3 374,459.5 374.5,459.6 375,459.8 375.5,459.4 376,459.4 376.5,459.5 377,459.4 377.5,459.7 378,459.6 378.5,459.8 379,459.7 379.5,459.7 380,459.8 380.5,459.5 381,459.4 381.5,459.2 382,459.4 382.5,459.7 383,459.7 383.5,459.7 384,459.4 384.5,459.6 385,459.5 385.5,459.4 386,459.4 386.5,459.3 387,459.4 387.5,459.4 388,459.5 388.5,459.7 389,459.6 389.5,459.5 390,459.2 390.5,459.3 391,459.2 391.5,459.3 392,459.4 392.5,459.7 393,459.8 393.5,459.8 394,459.6 394.5,459.7 395,459.8 395.5,459.8 396,459.6 396.5,459.3 397,459.4 397.5,459.4 398,459.8 398.5,460.0 399,459.9 399.5,459.7 400,459.5 400.5,459.4 401,459.4 401.5,459.3 402,459.6 402.5,459.6 403,459.6 403.5,459.8 404,459.8 404.5,459.7 405,459.3 405.5,459.6 406,459.6 406.5,459.8 407,459.6 407.5,459.8 408,459.6 408.5,459.3 409,459.2 409.5,459.1 410,459.4 410.5,459.7 411,459.8 411.5,460.0 412,459.5 412.5,460.0 413,459.9 413.5,460.1 414,459.7 414.5,459.6 415,459.7 415.5,459.7 416,459.7 416.5,459.5 417,459.4 417.5,459.6 418,459.7 418.5,459.6 419,459.5 419.5,459.8 420,459.9 420.5,460.1 421,459.8 421.5,459.9 422,459.6 422.5,459.4 423,459.3 423.5,459.5 424,459.9 424.5,460.1 425,459.9 425.5,459.7 426,459.4 426.5,459.5 427,459.7 427.5,459.9 428,459.7 428.5,459.7 429,459.7 429.5,459.8 430,459.8 430.5,459.8 431,459.6 431.5,459.5 432,459.2 432.5,459.3 433,459.4 433.5,459.6 434,459.8 434.5,460.0 435,460.3 435.5,460.1 436,459.9 436.5,459.7 437,459.9 437.5,460.1 438,459.9 438.5,459.8 439,459.3 439.5,459.4 440,459.6 440.5,459.9 441,460.3 441.5,460.3 442,460.1 442.5,459.7 443,459.6 443.5,459.9 444,459.9 444.5,459.7 445,459.5 445.5,459.6 446,459.9 446.5,459.8 447,459.8 447.5,459.7 448,459.8 448.5,460.0 449,459.8 449.5,459.5 450,459.2 450.5,459.3 451,459.5 451.5,459.8 452,459.9 452.25,459.9 452.5,459.6 452.75,459.5 453,459.5 453.25,459.6 453.5,459.6 453.75,459.5 454,459.7 454.25,459.7 454.5,459.5 454.75,459.4 455,459.5 455.25,459.8 455.5,459.8 455.75,459.8 456,459.6 456.25,459.6 456.5,459.9 456.75,459.6 457,459.8 457.25,459.4 457.5,459.8 457.75,459.5 458,459.6 458.25,459.5 458.4,459.8" fill="none" stroke="#ee8e1b" stroke-width="1.15" stroke-linejoin="round" opacity="1.0" />
<polyline points="458.4,459.8 458.5,457.9 458.6,455.1 458.75,452.5 459,449.6 459.25,447.7" fill="none" stroke="#ee8e1b" stroke-width="1.15" stroke-linejoin="round" opacity="0.5" />
<polyline points="459.25,447.7 459.5,445.8" fill="none" stroke="#ee8e1b" stroke-width="1.15" stroke-linejoin="round" opacity="0.72" />
<polyline points="459.5,445.8 459.75,443.0 460,439.5 460.25,435.9 460.5,432.3 460.75,427.8 461,422.3 461.25,416.4 461.5,409.8 461.75,401.2 462,390.0 462.25,378.5 462.5,368.3 462.6,364.8 462.75,360.3 463,353.2 463.25,346.9 463.5,340.8 463.75,334.8 464,328.8 464.25,323.2 464.5,317.8 464.75,312.7 465,307.0 465.25,301.2 465.3,299.8 465.5,295.1 465.75,289.0 466,282.8 466.25,276.3 466.5,269.8 466.75,263.5 467,257.4 467.25,251.3 467.5,245.5 467.75,240.2 468,235.0 468.25,230.5 468.5,225.6 468.75,221.4 469,216.9 469.25,212.7 469.5,208.6 469.75,204.8 470,201.6 470.25,198.2 470.5,195.0 470.75,191.2 471,187.7 471.25,185.0" fill="none" stroke="#ee8e1b" stroke-width="1.15" stroke-linejoin="round" opacity="0.5" />
<polyline points="471.25,185.0 471.5,184.0 471.75,185.4" fill="none" stroke="#ee8e1b" stroke-width="1.15" stroke-linejoin="round" opacity="0.72" />
<polyline points="471.75,185.4 472,188.8 472.25,193.2 472.4,195.9 472.5,197.8 472.75,201.5 473,205.4 473.25,209.7 473.5,214.5 473.75,219.8 474,226.0 474.25,233.2 474.3,235.0 474.5,243.6 474.75,258.5 475,275.4 475.25,291.5 475.4,299.8 475.5,304.7 475.75,315.5 476,324.9 476.25,334.0 476.5,343.1 476.75,353.2 477,364.8 477.25,380.6 477.5,399.5 477.75,417.4 478,430.1 478.25,437.9 478.5,444.4 478.75,450.1 479,455.4 479.25,459.9 479.5,463.2 479.75,466.4 480,469.5 480.25,472.0" fill="none" stroke="#ee8e1b" stroke-width="1.15" stroke-linejoin="round" opacity="0.5" />
<polyline points="480.25,472.0 480.5,473.1 480.75,471.4" fill="none" stroke="#ee8e1b" stroke-width="1.15" stroke-linejoin="round" opacity="0.72" />
<polyline points="480.75,471.4 481,467.3 481.25,463.5" fill="none" stroke="#ee8e1b" stroke-width="1.15" stroke-linejoin="round" opacity="0.5" />
<polyline points="481.25,463.5 481.5,461.6 481.75,463.1" fill="none" stroke="#ee8e1b" stroke-width="1.15" stroke-linejoin="round" opacity="0.72" />
<polyline points="481.75,463.1 482,465.5 482.25,468.2" fill="none" stroke="#ee8e1b" stroke-width="1.15" stroke-linejoin="round" opacity="0.5" />
<polyline points="482.25,468.2 482.5,469.5 482.75,469.2 483,467.8" fill="none" stroke="#ee8e1b" stroke-width="1.15" stroke-linejoin="round" opacity="0.72" />
<polyline points="483,467.8 483.25,465.6 483.5,463.4" fill="none" stroke="#ee8e1b" stroke-width="1.15" stroke-linejoin="round" opacity="0.5" />
<polyline points="483.5,463.4 483.75,461.4 484,460.5" fill="none" stroke="#ee8e1b" stroke-width="1.15" stroke-linejoin="round" opacity="0.72" />
<polyline points="484,460.5 484.25,461.2" fill="none" stroke="#ee8e1b" stroke-width="1.15" stroke-linejoin="round" opacity="1.0" />
<polyline points="484.25,461.2 484.5,462.8 484.75,464.8 485,466.5 485.25,467.8" fill="none" stroke="#ee8e1b" stroke-width="1.15" stroke-linejoin="round" opacity="0.72" />
<polyline points="485.25,467.8 485.5,468.7 485.75,467.9" fill="none" stroke="#ee8e1b" stroke-width="1.15" stroke-linejoin="round" opacity="1.0" />
<polyline points="485.75,467.9 486,466.5 486.25,464.5 486.5,462.8 486.75,461.3" fill="none" stroke="#ee8e1b" stroke-width="1.15" stroke-linejoin="round" opacity="0.72" />
<polyline points="486.75,461.3 487,460.9 487.25,461.4" fill="none" stroke="#ee8e1b" stroke-width="1.15" stroke-linejoin="round" opacity="1.0" />
<polyline points="487.25,461.4 487.5,462.6 487.75,463.9 488,465.1 488.25,466.2" fill="none" stroke="#ee8e1b" stroke-width="1.15" stroke-linejoin="round" opacity="0.72" />
<polyline points="488.25,466.2 488.5,466.5 488.75,466.2 489,465.5" fill="none" stroke="#ee8e1b" stroke-width="1.15" stroke-linejoin="round" opacity="1.0" />
<polyline points="489,465.5 489.25,464.9 489.5,464.2 489.75,463.5 490,463.1" fill="none" stroke="#ee8e1b" stroke-width="1.15" stroke-linejoin="round" opacity="0.72" />
<polyline points="490,463.1 490.25,462.3 490.5,461.8 490.75,461.8 491,462.5 491.25,463.3 491.5,463.8 491.75,464.1 492,464.4 492.25,465.0 492.5,465.2 492.75,465.2 493,464.6 493.25,464.5 493.5,464.2 493.75,464.0 494,463.5 494.25,463.2 494.5,463.3 494.75,463.3 495,463.3 495.25,462.9 495.5,462.7 495.75,462.4 496,462.6 496.25,462.9 496.5,463.4 496.75,463.4 497,463.6 497.25,463.6 497.5,464.1 497.75,464.0 498,464.1 498.25,463.9 498.5,463.8 498.75,463.7 499,463.9 499.25,464.0 499.5,463.8 499.75,463.5 500,463.4 500.5,463.5 501,463.5 501.5,463.3 502,463.0 502.5,463.1 503,463.3 503.5,463.3 504,463.3 504.5,463.4 505,463.6 505.5,463.9 506,463.8 506.5,464.0 507,464.5 507.5,464.9 508,465.0 508.5,464.7 509,464.4 509.5,463.8 510,463.6 510.5,463.3 511,463.0 511.5,462.7 512,462.6 512.5,462.7 513,462.9 513.5,463.2 514,463.3 514.5,463.3 515,463.4 515.5,463.4 516,463.7 516.5,463.9 517,464.1 517.5,464.3 518,464.2 518.5,464.2 519,463.9 519.5,463.9 520,463.9 520.5,463.9 521,463.7 521.5,463.5 522,463.5 522.5,463.4 523,463.0 523.5,463.0 524,462.8 524.5,463.2 525,463.2 525.5,463.7 526,464.0 526.5,464.2 527,464.2 527.5,464.1 528,464.3 528.5,464.4 529,464.2 529.5,463.9 530,463.8 530.5,463.8 531,463.8 531.5,463.4 532,463.0 532.5,462.9 533,462.6 533.5,462.8 534,462.9 534.5,463.1 535,463.3 535.5,463.4 536,463.7 536.5,463.6 537,463.5 537.5,463.5 538,463.5 538.5,463.6 539,463.8 539.5,463.9 540,463.9 540.5,463.7 541,463.8 541.5,463.7 542,463.7 542.5,463.5 543,463.4 543.5,463.2 544,462.9 544.5,463.0 545,463.1 545.5,463.5 546,463.5 546.5,463.6 547,463.7 547.5,463.7 548,463.7 548.5,463.9 549,463.6 549.5,463.6 550,463.4 550.5,463.6 551,463.5 551.5,463.8 552,463.7 552.5,463.7 553,463.1 553.5,463.0 554,462.8 554.5,463.1 555,463.4 555.5,463.5 556,463.6 556.5,463.7 557,463.6 557.5,463.4 558,463.4 558.5,463.6 559,463.7 559.5,463.8 560,463.6 560.5,463.6 561,463.4 561.5,463.3 562,463.6 562.5,463.9 563,464.1 563.5,463.8 564,463.6 564.5,463.5 565,463.4 565.5,463.6 566,463.5 566.5,463.7 567,463.5 567.5,463.7 568,463.7 568.5,464.0 569,463.7 569.5,463.6 570,463.6 570.5,463.5 571,463.8 571.5,463.6 572,463.9 572.5,463.6 573,463.6 573.5,463.4 574,463.6 574.5,463.5 575,463.5 575.5,463.4 576,463.6 576.5,463.4 577,463.4 577.5,463.3 578,463.4 578.5,463.6 579,463.9 579.5,463.8 580,463.7 580.5,463.5 581,463.5 581.5,463.5 582,463.4 582.5,463.5 583,463.4 583.5,463.7 584,463.3 584.5,463.5 585,463.4 585.5,463.5 586,463.2 586.5,463.2 587,463.1 587.5,463.5 588,463.5 588.5,463.7 589,463.6 589.5,463.7 590,463.7 590.5,463.8 591,463.8 591.5,463.7 592,463.8 592.5,463.9 593,464.1 593.5,464.0 594,463.8 594.5,463.5 595,463.4 595.5,463.1 596,463.2 596.5,463.4 597,463.4 597.5,463.4 598,463.1 598.5,463.1 599,463.0 599.5,463.4 600,463.4 600.5,463.8 601,463.8 601.5,463.9 602,463.8 602.5,463.7 603,463.6 603.5,463.2 604,463.2 604.5,463.2 605,463.4 605.5,463.3 606,463.3 606.5,463.6 607,463.5 607.5,463.3 608,463.4 608.5,463.6 609,463.9 609.5,463.7 610,463.4 610.5,463.5 611,463.7 611.5,463.8 612,463.7 612.5,463.7 613,464.1 613.5,464.2 614,464.1 614.5,463.8 615,463.5 615.5,463.5 616,463.4 616.5,463.5 617,463.6 617.5,463.6 618,463.4 618.5,463.4 619,463.4 619.5,463.6 620,463.4 620.5,463.6 621,463.5 621.5,463.9 622,463.7 622.5,464.0 623,464.1 623.5,464.2 624,464.2 624.5,464.0 625,463.8 625.5,463.5 626,463.5 626.5,463.7 627,463.9 627.5,463.8 628,464.0 628.5,463.8 629,463.6 629.5,463.3 630,463.4 630.5,463.4 631,463.5 631.5,463.4 632,463.5 632.5,463.5 633,463.5 633.5,463.7 634,463.7 634.5,463.8 635,463.5 635.5,463.5 636,463.3 636.5,463.3 637,463.5 637.5,463.4 638,463.8 638.5,463.6 639,464.0 639.5,463.8 640,463.4 640.5,463.3 641,463.3 641.5,463.8 642,463.7 642.5,463.8 643,463.8 643.5,463.8 644,463.9 644.5,463.8 645,463.6 645.5,463.2 646,463.4 646.5,463.8 647,463.7 647.5,463.6 648,463.4 648.5,463.4 649,463.5 649.5,463.6 650,463.7 650.5,463.6 651,463.7 651.5,463.5 652,463.7 652.5,463.7 653,463.7 653.5,463.5 654,463.7 654.5,463.8 655,463.7 655.5,463.4 656,463.2 656.5,463.5 657,463.7 657.5,463.9 658,463.9 658.5,463.8 659,463.8 659.5,463.7 660,463.8 660.5,463.4 661,463.4 661.5,463.3 662,463.4 662.5,463.5 663,463.3 663.5,463.4 664,463.0 664.5,463.2 665,463.1 665.5,463.7 666,463.7 666.5,463.9 667,463.3 667.5,463.2 668,463.0 668.5,463.5 669,463.7 669.5,463.9 670,463.7 670.5,463.6 671,463.6 671.5,463.7 672,463.7 672.5,463.7 673,463.5 673.5,463.7 674,463.6 674.5,463.6 675,463.7 675.5,463.8 676,463.9 676.5,463.4 677,463.2 677.5,463.4 678,463.6 678.5,463.9 679,463.6 679.5,463.7 680,463.6 680.5,463.7 681,463.3 681.5,463.5 682,463.6 682.5,463.8 683,463.7 683.5,463.6 684,463.8 684.5,463.8 685,464.0 685.5,463.9 686,463.7 686.5,463.6 687,463.6 687.5,463.6 688,463.8 688.5,463.9 689,464.1 689.5,463.7 690,463.8 690.5,463.6 691,463.7 691.5,463.4 692,463.7 692.5,463.8 693,463.9 693.5,463.9 694,464.0 694.5,464.1 695,464.1 695.5,464.0 696,463.9 696.5,463.6 697,463.5 697.5,463.1 698,463.3 698.5,463.3 699,463.5 699.5,463.5 700,463.6 700.5,463.7 701,463.7 701.5,463.8 702,463.9 702.5,464.1 703,463.9 703.5,463.9 704,463.9 704.5,463.8 705,463.9 705.5,463.6 706,463.6 706.5,463.6 707,463.6 707.5,463.3 708,463.2 708.5,463.4 709,463.6 709.5,463.8 710,463.5 710.5,463.5 711,463.3 711.5,463.1 712,463.4 712.5,463.4 713,463.8 713.5,463.6 714,463.5 714.5,463.4 715,463.5 715.5,463.8 716,463.8 716.5,463.6 717,463.5 717.5,463.4 718,463.5 718.5,463.3 719,463.4 719.5,463.4 720,463.7 720.5,463.7 721,463.6 721.5,463.5 722,463.7 722.5,463.8 723,463.8 723.5,463.6 724,463.5 724.5,463.4 725,463.8 725.5,463.8 726,463.9 726.5,463.9 727,463.5 727.5,463.3 728,463.2 728.5,463.4 729,463.9 729.5,463.8 730,463.7 730.5,463.4 731,463.4 731.5,463.5 732,463.4 732.5,463.6 733,463.4 733.5,463.9 734,463.8 734.5,464.0 735,463.5 735.5,463.5 736,463.3 736.5,463.6 737,463.5 737.5,463.8 738,463.7 738.5,463.9 739,464.1 739.5,464.2 740,464.2 740.5,463.9 741,463.6 741.5,463.6 742,463.7 742.5,463.8 743,463.7 743.5,463.8 744,464.0 744.5,463.9 745,463.6 745.5,463.3 746,463.3 746.5,463.4 747,463.5 747.5,463.7 748,464.0 748.5,464.1 749,464.0 749.5,463.8 750,463.9 750.5,463.9 751,463.9 751.5,463.9 752,464.0 752.5,464.0 753,463.9 753.5,463.7 754,463.8 754.5,463.8 755,463.9 755.5,463.8 756,463.8 756.5,463.5 757,463.8 757.5,463.8 758,463.8 758.5,463.6 759,463.6 759.5,463.8 760,463.7 760.5,463.7 761,463.6 761.5,463.7 762,463.6 762.5,463.6 763,463.8 763.5,463.8 764,464.2 764.5,464.3 765,464.3 765.5,464.0 766,464.0 766.5,464.0 767,463.9 767.5,463.9 768,463.8 768.5,463.8 769,463.7 769.5,463.9 770,464.1 770.5,463.7 771,463.8 771.5,463.7 772,464.1 772.5,464.1 773,464.0 773.5,463.9 774,463.4 774.5,463.4 775,463.6 775.5,463.8 776,463.8 776.5,463.7 777,463.7 777.5,463.7 778,463.6 778.5,463.8 779,463.8 779.5,463.8 780,463.7 780.5,463.6 781,463.6 781.5,463.4 782,463.5 782.5,463.5 783,463.7 783.5,463.8 784,464.1 784.5,464.1 785,464.2 785.5,464.0 786,463.9 786.5,464.0 787,463.9 787.5,464.1 788,463.8 788.5,464.1 789,463.8 789.5,463.9 790,463.9 790.5,463.8 791,463.6 791.5,463.7 792,464.1 792.5,464.2 793,464.1 793.5,463.9 794,463.7 794.5,463.7 795,463.7 795.5,463.9 796,464.1 796.5,464.1 797,464.2 797.5,464.1 798,464.1 798.5,464.4 799,464.2 799.5,464.2 800,463.8 800.5,464.0 801,464.0 801.5,464.0 802,464.0 802.5,463.9 803,464.0 803.5,464.0 804,464.2 804.25,464.3 804.5,464.2 804.75,464.1 805,464.3 805.25,464.2 805.5,464.3 805.75,464.0 806,463.8 806.25,463.6 806.5,463.7 806.75,463.9 807,463.9 807.25,463.8 807.5,463.7 807.75,463.6 808,463.7 808.25,463.5 808.5,463.6 808.75,463.8 809,464.1 809.25,464.2 809.5,464.1 809.75,464.0 810,463.6 810.25,463.7 810.5,463.6 810.75,464.0 811,464.1 811.1,464.2 811.25,463.9 811.5,463.7 811.75,463.5 812,463.5 812.25,462.9 812.5,462.2 812.75,461.5 813,460.8 813.25,460.1 813.5,459.6 813.75,459.2" fill="none" stroke="#ee8e1b" stroke-width="1.15" stroke-linejoin="round" opacity="1.0" />
<polyline points="813.75,459.2 814,459.0 814.25,458.1 814.5,457.3 814.75,456.3 815,455.4 815.25,454.6 815.5,453.6 815.75,452.9 816,452.2 816.25,451.6 816.3,451.5 816.5,450.6 816.75,449.6 817,448.6 817.25,448.0 817.5,447.1 817.75,446.0 818,444.5 818.25,442.9 818.5,441.2" fill="none" stroke="#ee8e1b" stroke-width="1.15" stroke-linejoin="round" opacity="0.72" />
<polyline points="818.5,441.2 818.6,440.1 818.75,437.3 819,428.8 819.25,419.0 819.3,417.3 819.5,408.4 819.75,396.9 819.8,395.1 820,389.2 820.25,383.5 820.5,378.7 820.75,374.8 821,370.9 821.25,367.0 821.5,362.1 821.75,356.2 822,348.7 822.1,345.1 822.25,336.7 822.5,314.0 822.75,286.8 823,262.0 823.2,248.8 823.25,246.6 823.5,236.6 823.75,228.1 824,220.9 824.25,214.5 824.5,208.6 824.75,203.0 825,197.9 825.1,196.3 825.25,193.0 825.5,187.6 825.75,184.3" fill="none" stroke="#ee8e1b" stroke-width="1.15" stroke-linejoin="round" opacity="0.5" />
<polyline points="825.75,184.3 825.8,184.3" fill="none" stroke="#ee8e1b" stroke-width="1.15" stroke-linejoin="round" opacity="1.0" />
<polyline points="825.8,184.3 826,186.2 826.25,191.9 826.4,195.9 826.5,198.7 826.75,206.9 827,217.9 827.25,231.7 827.5,249.0 827.75,281.6 828,320.4 828.1,330.0 828.25,339.6 828.5,350.9 828.75,359.8 829,369.3 829.2,380.0 829.25,384.0 829.5,411.6 829.7,430.2 829.75,432.7 830,446.2 830.25,458.4 830.5,469.4 830.75,478.4 831,484.9 831.25,488.3" fill="none" stroke="#ee8e1b" stroke-width="1.15" stroke-linejoin="round" opacity="0.5" />
<polyline points="831.25,488.3 831.4,488.8 831.5,488.4" fill="none" stroke="#ee8e1b" stroke-width="1.15" stroke-linejoin="round" opacity="0.72" />
<polyline points="831.5,488.4 831.75,485.2 832,479.6 832.25,472.3 832.5,465.1 832.7,459.7 832.75,458.3 833,452.0 833.25,445.0 833.5,438.3 833.75,432.4 834,428.7" fill="none" stroke="#ee8e1b" stroke-width="1.15" stroke-linejoin="round" opacity="0.5" />
<polyline points="834,428.7 834.2,427.7" fill="none" stroke="#ee8e1b" stroke-width="1.15" stroke-linejoin="round" opacity="0.72" />
<polyline points="834.2,427.7 834.25,427.6" fill="none" stroke="#ee8e1b" stroke-width="1.15" stroke-linejoin="round" opacity="1.0" />
<polyline points="834.25,427.6 834.5,430.8 834.75,436.8 835,444.2 835.25,451.1 835.4,454.5 835.5,457.0 835.75,463.2 836,468.9 836.25,473.5 836.5,476.0" fill="none" stroke="#ee8e1b" stroke-width="1.15" stroke-linejoin="round" opacity="0.5" />
<polyline points="836.5,476.0 836.6,476.2 836.75,475.8" fill="none" stroke="#ee8e1b" stroke-width="1.15" stroke-linejoin="round" opacity="0.72" />
<polyline points="836.75,475.8 837,473.2 837.25,469.0 837.5,464.2 837.75,458.8 838,453.9 838.25,449.5" fill="none" stroke="#ee8e1b" stroke-width="1.15" stroke-linejoin="round" opacity="0.5" />
<polyline points="838.25,449.5 838.5,447.2" fill="none" stroke="#ee8e1b" stroke-width="1.15" stroke-linejoin="round" opacity="0.72" />
<polyline points="838.5,447.2 838.6,446.8 838.75,447.1" fill="none" stroke="#ee8e1b" stroke-width="1.15" stroke-linejoin="round" opacity="1.0" />
<polyline points="838.75,447.1 839,448.5 839.25,450.4" fill="none" stroke="#ee8e1b" stroke-width="1.15" stroke-linejoin="round" opacity="0.72" />
<polyline points="839.25,450.4 839.5,452.5 839.75,455.3 840,458.5 840.25,462.1 840.5,464.9 840.75,467.9" fill="none" stroke="#ee8e1b" stroke-width="1.15" stroke-linejoin="round" opacity="0.5" />
<polyline points="840.75,467.9 841,469.8 841.25,471.3" fill="none" stroke="#ee8e1b" stroke-width="1.15" stroke-linejoin="round" opacity="0.72" />
<polyline points="841.25,471.3 841.5,471.7" fill="none" stroke="#ee8e1b" stroke-width="1.15" stroke-linejoin="round" opacity="1.0" />
<polyline points="841.5,471.7 841.75,469.9" fill="none" stroke="#ee8e1b" stroke-width="1.15" stroke-linejoin="round" opacity="0.72" />
<polyline points="841.75,469.9 842,465.6 842.25,459.7 842.5,453.4 842.75,448.2 843,445.4" fill="none" stroke="#ee8e1b" stroke-width="1.15" stroke-linejoin="round" opacity="0.5" />
<polyline points="843,445.4 843.1,445.1" fill="none" stroke="#ee8e1b" stroke-width="1.15" stroke-linejoin="round" opacity="0.72" />
<polyline points="843.1,445.1 843.25,445.3" fill="none" stroke="#ee8e1b" stroke-width="1.15" stroke-linejoin="round" opacity="1.0" />
<polyline points="843.25,445.3 843.5,446.4 843.75,448.8" fill="none" stroke="#ee8e1b" stroke-width="1.15" stroke-linejoin="round" opacity="0.72" />
<polyline points="843.75,448.8 844,451.6 844.25,454.5 844.5,456.7" fill="none" stroke="#ee8e1b" stroke-width="1.15" stroke-linejoin="round" opacity="0.5" />
<polyline points="844.5,456.7 844.75,458.5 845,459.4" fill="none" stroke="#ee8e1b" stroke-width="1.15" stroke-linejoin="round" opacity="0.72" />
<polyline points="845,459.4 845.1,459.5 845.25,459.3" fill="none" stroke="#ee8e1b" stroke-width="1.15" stroke-linejoin="round" opacity="1.0" />
<polyline points="845.25,459.3 845.5,458.6 845.75,457.5 846,455.9 846.25,454.2 846.5,452.9 846.75,452.1" fill="none" stroke="#ee8e1b" stroke-width="1.15" stroke-linejoin="round" opacity="0.72" />
<polyline points="846.75,452.1 847,451.6 847.1,451.5 847.25,451.3 847.5,451.5 847.75,451.5 848,451.4 848.25,451.3 848.5,451.3 848.75,451.5 849,451.4 849.25,451.3 849.5,451.4 849.75,451.4 850,451.5 850.25,451.4 850.5,451.7 850.75,451.5 851,451.8 851.25,451.4 851.5,451.6 851.75,451.2 852,451.4 852.25,451.5 852.5,451.9 852.75,452.0 853,451.9 853.25,451.6 853.5,451.5 853.75,451.5 854,451.5 854.25,451.5 854.5,451.6 854.75,451.4 855,451.4 855.25,451.5 855.5,451.7 855.75,451.8 856,451.6 856.25,451.2 856.5,451.1 856.75,451.1 857,451.3 857.25,451.2 857.5,451.5 857.75,451.6 858,451.9 858.25,451.8 858.5,451.6 858.75,451.4 859,451.5 859.25,451.5 859.5,451.3 859.75,451.1 860,451.2 860.25,451.6 860.5,451.5 860.75,451.8 861,451.4 861.25,451.4 861.5,451.2 861.75,451.5 862,451.6 862.5,451.8 863,452.0 863.5,452.2 864,452.0 864.5,451.9 865,451.6 865.5,451.8 866,451.4 866.5,451.3 867,451.1 867.5,451.3 868,451.6 868.5,451.5 869,451.4 869.5,451.1 870,451.2 870.5,451.2 871,451.5 871.5,451.6 872,451.5 872.5,451.1 873,451.1 873.5,451.4 874,451.5 874.5,451.4 875,451.1 875.5,451.5 876,451.3 876.5,451.4 877,451.3 877.5,451.5 878,451.7 878.5,451.7 879,451.5 879.5,451.4 880,451.2 880.5,451.6 881,451.8 881.5,452.1 882,452.2 882.5,452.1 883,452.1 883.5,452.0 884,452.0 884.5,451.9 885,451.8 885.5,451.9 886,451.7 886.5,451.4 887,451.1 887.5,451.4 888,451.6 888.5,451.6 889,451.3 889.5,451.4 890,451.5 890.5,451.8 891,451.7 891.5,451.8 892,451.5 892.5,451.6 893,451.9 893.5,452.0 894,451.9 894.5,451.7 895,451.6 895.5,451.5 896,451.3 896.5,451.5 897,451.4 897.5,451.6 898,451.6 898.5,451.8 899,451.6 899.5,451.6 900,451.3 900.5,451.5 901,451.3 901.5,451.8 902,451.6 902.5,451.7 903,451.6 903.5,451.9 904,451.9 904.5,451.8 905,451.6 905.5,451.3 906,451.2 906.5,451.1 907,451.3 907.5,451.3 908,451.5 908.5,451.5 909,451.7 909.5,451.6 910,451.6 910.5,451.5 911,451.7 911.5,451.9 912,452.2 912.5,452.0 913,451.9 913.5,451.7 914,451.7 914.5,451.7 915,451.4 915.5,451.3 916,451.2 916.5,451.3 917,451.5 917.5,451.7 918,451.9 918.5,451.8 919,451.9 919.5,452.0 920,452.1 920.5,451.9 921,452.0 921.5,451.8 922,451.6 922.5,451.2 923,451.5 923.5,451.8 924,451.9 924.5,451.4 925,451.4 925.5,451.3 926,451.4 926.5,451.5 927,451.7 927.5,452.2 928,452.0 928.5,452.1 929,451.8 929.5,451.9 930,451.8 930.5,452.0 931,451.9 931.5,451.8 932,451.8 932.5,451.8 933,451.8 933.5,451.8 934,451.9 934.5,452.2 935,452.2 935.5,451.8 936,451.7 936.5,452.0 937,452.3 937.5,452.1 938,451.9 938.5,451.9 939,452.2 939.5,452.1 940,452.3 940.5,452.3 941,452.2 941.5,452.2 942,452.0 942.5,452.3 943,452.2 943.5,452.2 944,452.2 944.5,452.1 945,452.0 945.5,451.9 946,451.9 946.5,452.1 947,452.2 947.5,452.0 948,452.1 948.5,452.0 949,452.4 949.5,452.4 950,452.4 950.5,452.4 951,452.1 951.5,452.3 952,452.5 952.5,452.8 953,452.5 953.5,452.4 954,452.2 954.5,452.5 955,452.4 955.5,452.3 956,452.0 956.5,452.0 957,452.2 957.5,452.3 958,452.5 958.5,452.4 959,452.5 959.5,452.5 960,452.6 960.5,452.7 961,452.7 961.5,452.6 962,452.4 962.5,452.5 963,452.6 963.5,452.6 964,452.6 964.5,452.7" fill="none" stroke="#ee8e1b" stroke-width="1.15" stroke-linejoin="round" opacity="1.0" />
<polygon points="256.5,458.3 256.9,457.4 257.4,458.3 257.8,454.4 258.3,457.7 258.7,457.7 259.2,454.9 259.6,457.2 260.1,455.5 260.5,450.8 261.0,456.4 261.4,455.5 261.9,456.0 262.3,455.1 262.8,454.2 263.2,455.7 263.7,455.5 264.1,456.1 264.6,454.4 265.0,456.2 265.5,456.6 265.9,453.1 266.4,455.4 266.8,455.5 267.3,456.2 267.7,455.4 268.2,452.2 268.6,456.0 269.1,456.1 269.5,454.3 270.0,454.6 270.4,455.5 270.9,454.6 271.3,455.3 271.8,456.4 272.2,455.1 272.7,450.1 273.1,454.3 273.6,454.4 274.0,452.8 274.5,456.0 274.9,455.0 275.4,455.6 275.8,454.2 276.3,454.4 276.7,456.5 277.2,453.4 277.6,454.9 278.1,456.2 278.5,451.6 279.0,456.2 279.4,454.5 279.9,455.3 280.3,455.3 280.8,456.2 281.2,454.8 281.7,456.1 282.1,450.9 282.6,455.1 283.0,455.5 283.5,452.9 283.9,456.5 284.4,454.4 284.8,454.9 285.3,452.0 285.7,454.6 286.2,455.0 286.6,452.7 287.1,451.7 287.5,455.5 288.0,455.9 288.4,455.3 288.9,450.8 289.3,453.9 289.8,455.9 290.2,450.7 290.7,453.4 291.1,456.6 291.6,455.8 292.0,452.7 292.5,452.8 292.9,452.0 293.4,454.9 293.8,451.6 294.3,453.7 294.7,455.2 295.2,454.8 295.6,454.8 296.1,453.5 296.5,453.3 297.0,455.3 297.4,455.9 297.9,456.2 298.3,455.4 298.8,453.8 299.2,452.7 299.7,456.7 300.1,453.9 300.6,454.9 301.0,456.2 301.5,456.0 301.9,456.0 302.4,456.1 302.8,454.8 303.3,454.9 303.7,456.4 304.2,456.4 304.6,455.4 305.1,456.2 305.5,450.8 306.0,452.4 306.4,453.3 306.9,452.0 307.3,455.9 307.8,455.3 308.2,455.5 308.7,451.5 309.1,454.0 309.6,454.3 310.0,453.7 310.5,454.5 310.9,454.9 311.4,456.6 311.8,455.2 312.3,452.0 312.7,456.3 313.2,454.9 313.6,456.4 314.1,449.6 314.5,454.8 315.0,453.6 315.4,454.2 315.9,456.3 316.3,454.8 316.8,453.3 317.2,455.2 317.7,456.0 318.1,455.7 318.6,455.6 319.0,455.1 319.5,454.6 319.9,455.6 320.4,451.1 320.8,456.2 321.3,455.4 321.7,454.0 322.2,453.7 322.6,455.3 323.1,454.8 323.5,456.7 324.0,456.0 324.4,456.5 324.9,455.2 325.3,453.2 325.8,455.7 326.2,456.5 326.7,454.9 327.1,455.6 327.6,454.9 328.0,456.0 328.5,454.8 328.9,455.8 329.4,456.4 329.8,454.9 330.3,455.3 330.7,450.1 331.2,451.9 331.6,454.8 332.1,455.6 332.5,456.4 333.0,454.8 333.4,454.3 333.9,454.4 334.3,456.4 334.8,453.1 335.2,456.1 335.7,456.4 336.1,454.9 336.6,455.5 337.0,448.2 337.5,454.4 337.9,451.8 338.4,456.7 338.8,455.9 339.3,456.4 339.7,455.1 340.2,452.5 340.6,455.9 341.1,456.7 341.5,453.1 342.0,455.2 342.4,454.4 342.9,455.3 343.3,454.6 343.8,455.1 344.2,454.0 344.7,456.4 345.1,453.3 345.6,456.4 346.0,455.3 346.5,453.0 346.9,456.2 347.4,456.3 347.8,456.1 348.3,450.9 348.7,455.0 349.2,452.7 349.6,455.3 350.1,456.8 350.5,454.2 351.0,456.6 351.4,454.9 351.9,456.0 352.3,455.5 352.8,456.4 353.2,456.7 353.7,456.5 354.1,456.4 354.6,454.9 355.0,456.4 355.5,451.9 355.9,456.4 356.4,454.0 356.8,454.2 357.3,453.9 357.7,452.3 358.2,456.5 358.6,456.5 359.1,454.4 359.5,455.6 360.0,455.7 360.4,452.7 360.9,456.2 361.3,456.5 361.8,456.6 362.2,454.0 362.7,451.6 363.1,455.1 363.6,454.2 364.0,455.3 364.5,456.6 364.9,455.5 365.4,452.8 365.8,456.3 366.3,454.5 366.7,455.0 367.2,456.7 367.6,451.5 368.1,456.4 368.5,456.5 369.0,455.6 369.4,456.7 369.9,451.6 370.3,455.6 370.8,455.1 371.2,456.5 371.7,455.4 372.1,454.1 372.6,452.8 373.0,456.6 373.5,456.8 373.9,454.7 374.4,455.2 374.8,455.5 375.3,454.6 375.7,455.1 376.2,454.1 376.6,455.2 377.1,456.8 377.5,454.9 378.0,451.7 378.4,456.6 378.9,455.2 379.3,453.9 379.8,456.3 380.2,456.0 380.7,455.2 381.1,452.5 381.6,456.4 382.0,456.6 382.5,456.5 382.9,454.0 383.4,452.6 383.8,456.0 384.3,454.1 384.7,455.0 385.2,453.4 385.6,455.6 386.1,455.6 386.5,456.4 387.0,453.3 387.4,455.6 387.9,452.7 388.3,451.7 388.8,452.6 389.2,456.7 389.7,454.6 390.1,456.8 390.6,451.7 391.0,455.5 391.5,456.4 391.9,454.2 392.4,453.8 392.8,456.0 393.3,455.4 393.7,452.6 394.2,455.3 394.6,454.9 395.1,455.8 395.5,454.7 396.0,449.8 396.4,456.8 396.9,454.3 397.3,453.9 397.8,456.8 398.2,454.9 398.7,456.3 399.1,455.6 399.6,455.9 400.0,456.2 400.5,455.8 400.9,456.1 401.4,453.9 401.8,453.3 402.3,455.8 402.7,454.3 403.2,454.7 403.6,455.3 404.1,456.6 404.5,450.2 405.0,454.8 405.4,455.4 405.9,455.1 406.3,456.1 406.8,455.3 407.2,454.4 407.7,455.1 408.1,449.9 408.6,455.1 409.0,455.5 409.5,453.5 409.9,455.4 410.4,450.3 410.8,453.3 411.3,454.4 411.7,456.4 412.2,453.6 412.6,456.6 413.1,456.7 413.5,456.7 414.0,455.0 414.4,455.1 414.9,455.5 415.3,455.6 415.8,451.6 416.2,456.1 416.7,454.8 417.1,454.7 417.6,456.0 418.0,455.5 418.5,456.6 418.9,454.2 419.4,455.4 419.8,456.7 420.3,451.1 420.7,453.5 421.2,453.4 421.6,455.4 422.1,455.3 422.5,454.1 423.0,455.6 423.4,456.5 423.9,454.2 424.3,455.4 424.8,453.9 425.2,455.2 425.7,455.5 426.1,452.9 426.6,453.4 427.0,456.7 427.5,455.7 427.9,456.4 428.4,455.0 428.8,456.3 429.3,454.5 429.7,455.6 430.2,453.8 430.6,455.1 431.1,456.8 431.5,452.6 432.0,456.3 432.4,455.1 432.9,456.6 433.3,455.7 433.8,455.9 434.2,456.1 434.7,454.8 435.1,453.8 435.6,456.6 436.0,455.8 436.5,453.9 436.9,456.6 437.4,453.6 437.8,455.9 438.3,455.3 438.7,453.7 439.2,453.7 439.6,453.6 440.1,455.1 440.5,454.3 441.0,455.7 441.4,455.2 441.9,455.2 442.3,453.5 442.8,456.4 443.2,452.3 443.7,452.3 444.1,455.3 444.6,452.9 445.0,456.2 445.5,455.9 445.9,455.3 446.4,455.6 446.8,455.7 447.3,456.7 447.7,453.1 448.2,454.0 448.6,456.8 449.1,456.8 449.5,456.5 450.0,454.6 450.4,454.6 450.9,453.9 451.3,456.7 451.8,454.4 452.2,455.6 452.7,456.8 453.1,455.9 453.6,454.5 454.0,455.1 454.5,452.9 454.9,455.7 455.4,453.4 455.8,454.1 456.3,455.5 456.7,456.1 457.2,455.2 457.6,456.0 458.1,455.9 458.5,456.9 458.5,465.2 458.1,465.0 457.6,464.9 457.2,465.4 456.7,463.4 456.3,464.6 455.8,464.1 455.4,463.4 454.9,467.3 454.5,463.7 454.0,463.5 453.6,464.8 453.1,464.2 452.7,463.6 452.2,466.9 451.8,464.4 451.3,465.7 450.9,463.9 450.4,467.0 450.0,463.1 449.5,465.1 449.1,464.3 448.6,465.8 448.2,463.3 447.7,462.7 447.3,465.6 446.8,463.8 446.4,463.6 445.9,463.8 445.5,464.5 445.0,463.5 444.6,465.6 444.1,464.9 443.7,464.0 443.2,464.2 442.8,466.2 442.3,464.3 441.9,463.8 441.4,465.4 441.0,464.4 440.5,462.7 440.1,465.6 439.6,463.1 439.2,463.6 438.7,463.1 438.3,468.0 437.8,463.1 437.4,462.7 436.9,462.8 436.5,463.2 436.0,465.3 435.6,463.0 435.1,465.4 434.7,462.9 434.2,463.4 433.8,463.6 433.3,464.3 432.9,463.8 432.4,465.6 432.0,463.5 431.5,464.8 431.1,463.3 430.6,464.0 430.2,465.1 429.7,463.2 429.3,466.2 428.8,468.1 428.4,463.0 427.9,463.2 427.5,463.6 427.0,464.6 426.6,465.8 426.1,463.9 425.7,466.4 425.2,462.8 424.8,465.6 424.3,464.5 423.9,462.7 423.4,464.8 423.0,466.2 422.5,463.1 422.1,464.6 421.6,463.7 421.2,463.9 420.7,463.8 420.3,465.6 419.8,464.6 419.4,463.4 418.9,467.3 418.5,467.8 418.0,467.3 417.6,463.0 417.1,462.7 416.7,463.3 416.2,466.4 415.8,466.3 415.3,462.7 414.9,466.0 414.4,471.1 414.0,464.1 413.5,467.0 413.1,466.6 412.6,465.7 412.2,464.0 411.7,462.5 411.3,463.5 410.8,466.0 410.4,466.1 409.9,466.9 409.5,470.4 409.0,463.3 408.6,462.9 408.1,464.3 407.7,462.6 407.2,467.8 406.8,463.0 406.3,464.0 405.9,464.3 405.4,464.7 405.0,464.3 404.5,467.1 404.1,463.7 403.6,464.8 403.2,463.4 402.7,464.1 402.3,462.5 401.8,463.8 401.4,467.7 400.9,462.9 400.5,462.8 400.0,465.8 399.6,463.4 399.1,462.9 398.7,463.5 398.2,466.5 397.8,463.8 397.3,463.4 396.9,464.2 396.4,464.6 396.0,463.2 395.5,464.2 395.1,464.1 394.6,465.0 394.2,464.2 393.7,462.7 393.3,463.6 392.8,463.5 392.4,466.8 391.9,464.4 391.5,468.0 391.0,467.4 390.6,467.9 390.1,465.8 389.7,463.8 389.2,466.1 388.8,462.7 388.3,462.5 387.9,465.8 387.4,464.1 387.0,471.3 386.5,464.5 386.1,464.7 385.6,465.5 385.2,464.3 384.7,462.6 384.3,467.5 383.8,462.9 383.4,466.2 382.9,464.5 382.5,464.5 382.0,464.7 381.6,466.1 381.1,462.5 380.7,463.6 380.2,462.6 379.8,464.4 379.3,464.8 378.9,463.2 378.4,464.2 378.0,468.3 377.5,466.3 377.1,469.1 376.6,462.4 376.2,466.6 375.7,464.0 375.3,462.9 374.8,464.9 374.4,465.3 373.9,463.6 373.5,463.0 373.0,465.2 372.6,463.0 372.1,463.8 371.7,462.7 371.2,464.7 370.8,466.4 370.3,463.3 369.9,462.6 369.4,465.0 369.0,466.1 368.5,464.7 368.1,463.1 367.6,465.3 367.2,464.3 366.7,463.8 366.3,465.8 365.8,464.7 365.4,464.2 364.9,464.4 364.5,466.0 364.0,463.7 363.6,463.4 363.1,465.5 362.7,466.1 362.2,465.9 361.8,465.3 361.3,464.0 360.9,464.4 360.4,463.6 360.0,462.6 359.5,465.9 359.1,462.6 358.6,465.2 358.2,462.7 357.7,463.7 357.3,463.6 356.8,467.5 356.4,463.3 355.9,463.7 355.5,467.5 355.0,464.9 354.6,462.9 354.1,466.8 353.7,466.9 353.2,463.1 352.8,463.9 352.3,464.6 351.9,465.7 351.4,463.2 351.0,465.5 350.5,464.5 350.1,463.3 349.6,462.6 349.2,465.5 348.7,466.2 348.3,465.9 347.8,464.8 347.4,464.5 346.9,463.9 346.5,462.7 346.0,465.2 345.6,464.0 345.1,462.5 344.7,463.1 344.2,462.8 343.8,462.6 343.3,462.9 342.9,463.3 342.4,464.9 342.0,462.6 341.5,466.4 341.1,462.8 340.6,463.9 340.2,465.6 339.7,462.4 339.3,464.7 338.8,464.3 338.4,462.4 337.9,462.7 337.5,462.8 337.0,464.1 336.6,466.0 336.1,463.5 335.7,464.3 335.2,464.2 334.8,466.1 334.3,468.4 333.9,464.2 333.4,465.0 333.0,463.9 332.5,463.0 332.1,466.2 331.6,464.3 331.2,463.6 330.7,464.4 330.3,462.8 329.8,462.4 329.4,462.7 328.9,463.8 328.5,463.4 328.0,462.6 327.6,466.9 327.1,462.5 326.7,464.6 326.2,462.5 325.8,463.6 325.3,463.2 324.9,463.6 324.4,465.7 324.0,465.3 323.5,464.1 323.1,464.7 322.6,466.0 322.2,463.4 321.7,464.7 321.3,463.3 320.8,466.1 320.4,464.4 319.9,463.1 319.5,466.3 319.0,466.7 318.6,462.9 318.1,463.3 317.7,464.9 317.2,463.2 316.8,463.3 316.3,465.0 315.9,462.6 315.4,464.9 315.0,463.9 314.5,464.3 314.1,463.7 313.6,463.4 313.2,465.0 312.7,462.7 312.3,464.9 311.8,462.7 311.4,465.7 310.9,465.0 310.5,463.1 310.0,465.9 309.6,464.7 309.1,463.5 308.7,468.3 308.2,463.2 307.8,463.3 307.3,464.5 306.9,464.5 306.4,465.6 306.0,466.7 305.5,464.7 305.1,464.8 304.6,464.0 304.2,466.5 303.7,464.1 303.3,465.3 302.8,464.9 302.4,466.1 301.9,463.6 301.5,464.1 301.0,465.8 300.6,463.7 300.1,463.7 299.7,464.2 299.2,462.4 298.8,464.4 298.3,464.0 297.9,463.2 297.4,464.3 297.0,464.1 296.5,462.7 296.1,462.3 295.6,463.2 295.2,462.8 294.7,462.5 294.3,463.0 293.8,462.3 293.4,466.0 292.9,463.0 292.5,463.8 292.0,462.4 291.6,464.3 291.1,466.2 290.7,462.5 290.2,463.1 289.8,464.2 289.3,465.8 288.9,464.5 288.4,464.9 288.0,462.7 287.5,465.5 287.1,462.3 286.6,463.5 286.2,464.8 285.7,464.8 285.3,467.8 284.8,468.8 284.4,463.1 283.9,462.5 283.5,462.5 283.0,464.0 282.6,462.8 282.1,462.8 281.7,467.9 281.2,462.5 280.8,463.0 280.3,464.7 279.9,463.1 279.4,464.5 279.0,463.7 278.5,464.8 278.1,462.3 277.6,465.4 277.2,462.3 276.7,465.1 276.3,463.1 275.8,463.5 275.4,464.5 274.9,462.7 274.5,462.3 274.0,462.7 273.6,463.9 273.1,462.9 272.7,462.9 272.2,463.3 271.8,464.0 271.3,462.6 270.9,464.1 270.4,465.4 270.0,467.2 269.5,463.2 269.1,462.4 268.6,464.8 268.2,462.8 267.7,463.4 267.3,464.1 266.8,467.1 266.4,463.0 265.9,464.6 265.5,462.9 265.0,463.2 264.6,462.7 264.1,463.9 263.7,462.6 263.2,462.6 262.8,462.3 262.3,464.6 261.9,463.4 261.4,462.6 261.0,464.6 260.5,462.7 260.1,461.8 259.6,461.9 259.2,462.0 258.7,461.5 258.3,461.1 257.8,460.8 257.4,460.8 256.9,460.4 256.5,462.3" fill="#ee8e1b" opacity="1" />
<polygon points="843.1,452.8 843.6,452.1 844.0,452.4 844.5,451.9 844.9,450.7 845.4,451.7 845.8,450.7 846.3,449.9 846.7,449.6 847.2,447.2 847.6,450.0 848.1,447.1 848.5,447.7 849.0,446.0 849.4,449.8 849.9,445.6 850.3,450.1 850.8,447.2 851.2,448.6 851.7,449.0 852.1,448.4 852.6,448.8 853.0,448.2 853.5,448.7 853.9,449.2 854.4,448.1 854.8,445.9 855.3,449.6 855.7,447.7 856.2,449.9 856.6,443.6 857.1,450.3 857.5,450.2 858.0,449.5 858.4,447.5 858.9,449.3 859.3,447.4 859.8,443.4 860.2,448.7 860.7,446.0 861.1,447.2 861.6,448.4 862.0,444.9 862.5,449.6 862.9,447.4 863.4,450.2 863.8,450.2 864.3,445.0 864.7,449.7 865.2,449.6 865.6,447.7 866.1,447.1 866.5,448.3 867.0,447.4 867.4,449.4 867.9,448.1 868.3,446.4 868.8,448.8 869.2,443.8 869.7,448.6 870.1,448.1 870.6,448.1 871.0,448.7 871.5,450.2 871.9,442.9 872.4,449.3 872.8,449.8 873.3,450.3 873.7,448.7 874.2,449.4 874.6,449.9 875.1,449.7 875.5,450.1 876.0,448.0 876.4,447.9 876.9,446.8 877.3,447.1 877.8,446.9 878.2,447.7 878.7,449.4 879.1,447.7 879.6,447.3 880.0,449.2 880.5,447.5 880.9,446.9 881.4,448.7 881.8,447.1 882.3,449.5 882.7,450.3 883.2,449.2 883.6,450.2 884.1,446.2 884.5,449.0 885.0,447.0 885.4,445.4 885.9,449.8 886.3,449.4 886.8,449.7 887.2,449.1 887.7,447.1 888.1,448.4 888.6,449.0 889.0,449.9 889.5,449.3 889.9,450.1 890.4,445.2 890.8,449.1 891.3,446.1 891.7,445.7 892.2,449.4 892.6,447.8 893.1,447.9 893.5,450.3 894.0,448.7 894.4,448.7 894.9,446.5 895.3,450.3 895.8,447.5 896.2,449.5 896.7,449.3 897.1,445.3 897.6,447.1 898.0,449.7 898.5,449.6 898.9,447.5 899.4,447.6 899.8,450.4 900.3,449.2 900.7,449.0 901.2,450.2 901.6,448.4 902.1,449.6 902.5,448.1 903.0,449.2 903.4,446.8 903.9,445.5 904.3,448.7 904.8,450.1 905.2,448.5 905.7,447.9 906.1,449.5 906.6,448.3 907.0,448.7 907.5,446.2 907.9,450.4 908.4,446.5 908.8,445.2 909.3,447.5 909.7,447.6 910.2,446.7 910.6,450.3 911.1,445.5 911.5,449.3 912.0,449.0 912.4,446.1 912.9,446.2 913.3,449.7 913.8,449.7 914.2,449.4 914.7,448.0 915.1,449.8 915.6,447.5 916.0,448.7 916.5,447.0 916.9,447.3 917.4,450.1 917.8,448.5 918.3,448.7 918.7,445.9 919.2,445.2 919.6,448.0 920.1,447.8 920.5,448.0 921.0,446.8 921.4,444.0 921.9,448.9 922.3,449.4 922.8,448.7 923.2,450.1 923.7,449.8 924.1,450.3 924.6,445.4 925.0,444.6 925.5,449.0 925.9,447.9 926.4,443.2 926.8,447.8 927.3,448.5 927.7,450.3 928.2,449.1 928.6,447.7 929.1,449.4 929.5,448.1 930.0,446.2 930.4,449.8 930.9,445.4 931.3,450.4 931.8,446.8 932.2,447.6 932.7,445.0 933.1,447.6 933.6,444.8 934.0,448.9 934.5,450.5 934.9,447.2 935.4,447.7 935.8,448.7 936.3,448.3 936.7,448.6 937.2,449.9 937.6,445.7 938.1,445.8 938.5,448.1 939.0,449.6 939.4,447.4 939.9,450.1 940.3,450.2 940.8,448.1 941.2,450.4 941.7,450.2 942.1,443.0 942.6,449.9 943.0,447.0 943.5,446.9 943.9,450.0 944.4,447.3 944.8,444.6 945.3,450.2 945.7,448.2 946.2,444.0 946.6,447.3 947.1,447.6 947.5,449.8 948.0,447.5 948.4,449.5 948.9,449.0 949.3,448.5 949.8,449.3 950.2,449.7 950.7,448.7 951.1,450.3 951.6,446.9 952.0,449.5 952.5,448.8 952.9,446.9 953.4,447.0 953.8,448.6 954.3,448.7 954.7,450.2 955.2,448.0 955.6,446.1 956.1,450.2 956.5,449.6 957.0,449.5 957.4,449.6 957.9,449.7 958.3,449.7 958.8,447.9 959.2,448.0 959.7,446.9 960.1,448.3 960.6,449.6 961.0,450.3 961.5,446.0 961.9,449.7 962.4,449.0 962.8,447.4 963.3,444.4 963.7,445.7 964.2,447.3 964.2,463.6 963.7,457.5 963.3,460.0 962.8,459.6 962.4,460.0 961.9,458.3 961.5,458.0 961.0,460.7 960.6,459.1 960.1,459.3 959.7,457.6 959.2,458.2 958.8,458.0 958.3,458.3 957.9,461.7 957.4,460.2 957.0,458.1 956.5,459.3 956.1,462.3 955.6,459.9 955.2,457.5 954.7,461.1 954.3,459.7 953.8,458.6 953.4,461.0 952.9,459.4 952.5,460.5 952.0,457.7 951.6,457.8 951.1,460.3 950.7,457.1 950.2,458.5 949.8,457.7 949.3,457.4 948.9,460.5 948.4,457.5 948.0,459.4 947.5,457.6 947.1,459.3 946.6,457.8 946.2,460.9 945.7,459.8 945.3,457.3 944.8,459.8 944.4,458.5 943.9,457.3 943.5,459.9 943.0,460.3 942.6,458.6 942.1,459.0 941.7,458.3 941.2,459.8 940.8,461.5 940.3,457.9 939.9,459.9 939.4,457.4 939.0,457.2 938.5,460.9 938.1,458.8 937.6,458.6 937.2,461.1 936.7,462.3 936.3,457.4 935.8,457.5 935.4,457.7 934.9,462.0 934.5,457.3 934.0,458.7 933.6,457.1 933.1,458.7 932.7,458.6 932.2,457.9 931.8,461.8 931.3,457.7 930.9,458.6 930.4,458.8 930.0,459.8 929.5,457.5 929.1,460.3 928.6,457.2 928.2,458.4 927.7,457.8 927.3,458.8 926.8,457.5 926.4,458.1 925.9,459.7 925.5,467.4 925.0,459.4 924.6,457.5 924.1,457.6 923.7,458.7 923.2,458.9 922.8,458.2 922.3,461.0 921.9,458.5 921.4,459.9 921.0,458.4 920.5,460.3 920.1,458.8 919.6,459.4 919.2,459.0 918.7,458.5 918.3,459.8 917.8,460.8 917.4,457.9 916.9,458.2 916.5,457.2 916.0,458.7 915.6,457.7 915.1,457.6 914.7,458.1 914.2,461.5 913.8,460.6 913.3,460.9 912.9,457.6 912.4,459.8 912.0,459.6 911.5,457.4 911.1,459.1 910.6,459.4 910.2,458.7 909.7,457.4 909.3,459.4 908.8,457.9 908.4,463.0 907.9,459.9 907.5,459.5 907.0,457.4 906.6,457.7 906.1,457.9 905.7,460.4 905.2,461.3 904.8,458.7 904.3,457.7 903.9,457.4 903.4,459.2 903.0,461.0 902.5,460.4 902.1,458.4 901.6,457.4 901.2,458.6 900.7,459.6 900.3,464.2 899.8,459.9 899.4,460.6 898.9,462.0 898.5,460.6 898.0,458.8 897.6,461.6 897.1,459.4 896.7,463.4 896.2,460.9 895.8,457.3 895.3,460.2 894.9,462.3 894.4,457.7 894.0,457.6 893.5,458.9 893.1,459.2 892.6,459.2 892.2,459.2 891.7,459.8 891.3,457.2 890.8,458.1 890.4,458.9 889.9,461.3 889.5,461.1 889.0,458.1 888.6,461.0 888.1,459.8 887.7,457.3 887.2,461.6 886.8,458.1 886.3,458.9 885.9,460.2 885.4,461.3 885.0,460.2 884.5,462.1 884.1,458.7 883.6,457.6 883.2,459.0 882.7,457.8 882.3,459.9 881.8,458.0 881.4,458.0 880.9,460.5 880.5,460.1 880.0,460.7 879.6,461.0 879.1,459.3 878.7,459.7 878.2,461.6 877.8,463.4 877.3,461.8 876.9,457.6 876.4,457.0 876.0,460.3 875.5,465.0 875.1,457.8 874.6,458.6 874.2,458.6 873.7,463.2 873.3,461.1 872.8,459.5 872.4,463.1 871.9,459.6 871.5,458.0 871.0,463.4 870.6,458.3 870.1,460.0 869.7,458.7 869.2,461.2 868.8,461.3 868.3,457.8 867.9,459.8 867.4,458.0 867.0,458.6 866.5,458.4 866.1,458.1 865.6,457.6 865.2,458.0 864.7,458.1 864.3,462.1 863.8,458.1 863.4,462.1 862.9,457.8 862.5,457.2 862.0,460.4 861.6,457.9 861.1,457.2 860.7,461.3 860.2,457.6 859.8,461.9 859.3,458.5 858.9,457.8 858.4,459.3 858.0,457.4 857.5,457.0 857.1,457.4 856.6,457.8 856.2,459.7 855.7,459.4 855.3,461.3 854.8,458.0 854.4,458.6 853.9,460.1 853.5,458.1 853.0,457.7 852.6,459.4 852.1,457.7 851.7,459.0 851.2,457.5 850.8,463.5 850.3,459.7 849.9,459.8 849.4,457.9 849.0,457.5 848.5,456.9 848.1,458.9 847.6,459.8 847.2,457.8 846.7,458.5 846.3,457.8 845.8,457.1 845.4,457.8 844.9,458.8 844.5,455.6 844.0,454.9 843.6,454.5 843.1,454.2" fill="#ee8e1b" opacity="1" />
<polyline points="26.5,500.5 27,500.5 27.5,500.6 28,500.6 28.5,500.5 29,499.8 29.5,499.7 30,499.7 30.5,500.1 31,500.0 31.5,500.1 32,500.5 32.5,500.9 33,501.0 33.5,500.7 34,500.4 34.5,500.0 35,500.3 35.5,500.3 36,500.4 36.5,500.3 37,500.2 37.5,500.2 38,500.4 38.5,501.0 39,501.2 39.5,501.2 40,500.7 40.5,500.5 41,500.7 41.5,500.6 42,500.7 42.5,500.3 43,500.5 43.5,500.4 44,500.5 44.5,500.2 45,500.2 45.5,500.3 46,500.4 46.5,500.3 47,500.3 47.5,500.5 48,500.8 48.5,500.2 49,500.2 49.5,499.8 50,499.9 50.5,499.9 51,500.4 51.5,500.3 52,500.1 52.5,499.8 53,500.0 53.5,500.0 54,500.5 54.5,500.6 55,500.7 55.5,500.3 56,500.6 56.5,501.0 57,501.0 57.5,500.7 58,500.5 58.5,500.4 59,500.2 59.5,500.2 60,500.3 60.5,500.4 61,499.9 61.5,499.9 62,500.1 62.5,500.2 63,500.1 63.5,499.9 64,500.3 64.5,500.5 65,500.5 65.5,500.3 66,500.3 66.5,500.4 67,500.1 67.5,500.1 68,500.0 68.5,500.5 69,500.2 69.5,500.4 70,500.2 70.5,500.1 71,500.2 71.5,500.2 72,500.5 72.5,500.3 73,500.5 73.5,500.6 74,500.9 74.5,500.8 75,500.3 75.5,499.9 76,499.8 76.5,499.9 77,500.3 77.5,500.2 78,500.2 78.5,499.9 79,499.7 79.5,499.8 80,499.9 80.5,500.2 81,500.6 81.5,500.5 82,500.3 82.5,500.3 83,500.6 83.5,500.7 84,500.1 84.5,499.8 85,499.8 85.5,500.1 86,500.6 86.5,500.5 87,500.7 87.5,500.2 88,500.0 88.5,499.8 89,499.9 89.5,500.0 90,500.2 90.5,500.4 91,500.6 91.5,500.3 92,500.3 92.5,500.1 93,500.6 93.5,500.6 94,500.6 94.5,500.2 95,500.3 95.5,500.3 96,500.3 96.5,500.2 97,500.1 97.5,500.3 98,500.2 98.5,500.3 99,500.2 99.5,500.7 100,500.8 100.5,500.8 101,500.4 101.5,500.5 102,500.7 102.5,500.9 103,500.4 103.5,500.3 104,500.3 104.5,500.5 105,500.4 105.5,500.5 106,500.4 106.5,500.4 107,500.4 107.5,500.3 108,500.6 108.5,500.3 109,500.4 109.5,500.0 110,500.1 110.5,499.8 111,500.1 111.5,499.6 112,499.9 112.5,500.0 113,500.5 113.5,500.7 114,500.4 114.5,500.6 115,500.6 115.5,500.6 116,500.2 116.5,499.9 117,500.1 117.5,500.2 118,499.9 118.5,500.0 119,499.9 119.5,500.2 120,500.2 120.5,500.2 121,500.6 121.5,500.5 122,500.5 122.5,500.5 123,500.6 123.5,500.5 124,500.1 124.5,499.8 125,500.0 125.5,500.3 126,500.6 126.5,500.6 127,500.7 127.5,500.4 128,500.2 128.5,500.2 129,500.0 129.5,499.8 130,499.5 130.5,499.7 131,500.0 131.5,500.3 132,499.9 132.5,499.9 133,500.1 133.5,500.3 134,500.3 134.5,500.5 135,500.4 135.5,500.5 136,500.4 136.5,500.1 137,500.3 137.5,499.9 138,500.1 138.5,499.8 139,500.1 139.5,500.2 140,500.4 140.5,500.4 141,500.6 141.5,500.8 142,500.9 142.5,500.8 143,500.5 143.5,500.2 144,500.1 144.5,500.2 145,500.5 145.5,500.1 146,500.6 146.5,500.2 147,500.5 147.5,500.2 148,500.2 148.5,500.1 149,499.6 149.5,499.6 150,499.4 150.5,499.7 151,500.0 151.5,500.3 152,500.5 152.5,500.7 153,500.7 153.5,500.5 154,500.2 154.5,500.1 155,500.4 155.5,500.5 156,500.5 156.5,500.2 157,500.3 157.5,500.3 158,500.3 158.5,500.2 159,500.5 159.5,500.7 160,500.5 160.5,500.2 161,500.1 161.5,500.3 162,500.4 162.5,500.4 163,500.6 163.5,500.4 164,500.4 164.5,500.4 165,500.2 165.5,500.0 166,499.7 166.5,500.2 167,500.4 167.5,500.7 168,500.4 168.5,500.3 169,500.1 169.5,500.2 170,500.2 170.5,500.6 171,500.5 171.5,500.6 172,500.3 172.5,500.2 173,500.2 173.5,500.5 174,500.9 174.5,500.7 175,500.5 175.5,500.2 176,500.3 176.5,500.1 177,499.9 177.5,499.7 178,499.9 178.5,500.0 179,500.3 179.5,500.2 180,500.3 180.5,500.7 181,500.7 181.5,500.8 182,500.3 182.5,500.4 183,500.2 183.5,500.2 184,500.0 184.5,499.9 185,500.0 185.5,500.3 186,500.5 186.5,500.3 187,500.3 187.5,499.8 188,500.0 188.5,500.0 189,500.4 189.5,500.5 190,500.4 190.5,500.5 191,500.3 191.5,500.4 192,500.2 192.5,500.3 193,500.5 193.5,500.4 194,500.3 194.5,500.0 195,500.1 195.5,500.7 196,500.7 196.5,500.3 197,499.7 197.5,499.5 198,499.8 198.5,499.9 199,500.0 199.5,500.0 200,499.7 200.5,499.8 201,499.8 201.5,500.3 202,500.5 202.5,500.5 203,500.2 203.5,500.0 204,500.3 204.5,500.1 205,500.1 205.5,500.3 206,500.5 206.5,500.6 207,500.3 207.5,500.1 208,500.2 208.5,500.2 209,500.5 209.5,500.4 210,500.5 210.5,500.2 211,500.1 211.5,499.9 212,500.2 212.5,500.0 213,500.0 213.5,500.1 214,500.2 214.5,500.3 215,500.1 215.5,500.2 216,500.2 216.5,499.9 217,499.7 217.5,499.7 218,500.2 218.25,500.5 218.5,500.4 218.75,500.6 219,500.4 219.25,500.7 219.5,500.2 219.75,500.1 220,500.3 220.25,500.3 220.5,500.4 220.75,500.4 221,500.7 221.25,500.5 221.5,500.2 221.75,500.0 222,500.5 222.25,501.0 222.5,500.9 222.75,500.7 223,500.4 223.25,500.6 223.5,500.5 223.75,500.5 224,500.2 224.25,499.8 224.5,499.2 224.75,499.1 225,499.3 225.25,498.6 225.5,497.7" fill="none" stroke="#e62e56" stroke-width="1.3" stroke-linejoin="round" opacity="1.0" />
<polyline points="225.5,497.7 225.75,496.9 226,496.1 226.25,495.7 226.5,495.1 226.75,494.3 227,493.5 227.25,492.4 227.5,492.3 227.75,491.4 228,490.5 228.25,489.4 228.5,488.7 228.75,487.9 229,487.0 229.25,485.6 229.5,484.6 229.75,483.5 230,482.8 230.25,481.4 230.5,479.9 230.75,478.0 231,476.4 231.25,474.5 231.4,473.2" fill="none" stroke="#e62e56" stroke-width="1.3" stroke-linejoin="round" opacity="0.62" />
<polyline points="231.4,473.2 231.5,472.5 231.75,469.8 232,466.1 232.25,461.2 232.5,456.2 232.75,450.4 233,444.2 233.25,436.2 233.5,428.2 233.75,418.8 234,410.0 234.25,400.8 234.5,391.0 234.75,380.3 235,369.8 235.25,359.4 235.5,349.4 235.6,345.1 235.75,339.4 236,330.7 236.25,322.0 236.5,313.6 236.75,304.9 237,297.0 237.25,288.6 237.5,280.4 237.75,271.5 238,262.4 238.25,253.2 238.5,244.1 238.75,235.2 239,226.9 239.25,219.8 239.4,215.7 239.5,213.1 239.75,205.8 240,199.6 240.25,193.6 240.5,188.6 240.75,183.9 241,180.0 241.25,176.6 241.5,173.4 241.75,171.0" fill="none" stroke="#e62e56" stroke-width="1.3" stroke-linejoin="round" opacity="0.48" />
<polyline points="241.75,171.0 242,169.9 242.25,171.2" fill="none" stroke="#e62e56" stroke-width="1.3" stroke-linejoin="round" opacity="0.62" />
<polyline points="242.25,171.2 242.5,174.9 242.75,179.3 242.9,182.1 243,183.8 243.25,188.1 243.5,193.4 243.75,198.7 244,205.8 244.25,213.4 244.3,215.3 244.5,222.2 244.75,233.2 245,247.3 245.25,266.2 245.4,280.2 245.5,299.7 245.7,338.1" fill="none" stroke="#e62e56" stroke-width="1.3" stroke-linejoin="round" opacity="0.48" />
<polyline points="245.7,338.1 245.75,337.7" fill="none" stroke="#e62e56" stroke-width="1.3" stroke-linejoin="round" opacity="0.62" />
<polyline points="245.75,337.7 246,328.6 246.25,313.1 246.5,300.3 246.75,291.6 247,283.2 247.25,275.1 247.5,267.0 247.75,259.3 248,252.2 248.25,246.4 248.5,241.6 248.75,237.7 249,235.0" fill="none" stroke="#e62e56" stroke-width="1.3" stroke-linejoin="round" opacity="0.48" />
<polyline points="249,235.0 249.25,233.8" fill="none" stroke="#e62e56" stroke-width="1.3" stroke-linejoin="round" opacity="0.62" />
<polyline points="249.25,233.8 249.3,233.6" fill="none" stroke="#e62e56" stroke-width="1.3" stroke-linejoin="round" opacity="1.0" />
<polyline points="249.3,233.6 249.5,235.3 249.75,241.9 250,252.4 250.25,264.8 250.5,277.3 250.75,288.8 251,297.1 251.25,301.1" fill="none" stroke="#e62e56" stroke-width="1.3" stroke-linejoin="round" opacity="0.48" />
<polyline points="251.25,301.1 251.3,301.1" fill="none" stroke="#e62e56" stroke-width="1.3" stroke-linejoin="round" opacity="1.0" />
<polyline points="251.3,301.1 251.5,300.5" fill="none" stroke="#e62e56" stroke-width="1.3" stroke-linejoin="round" opacity="0.62" />
<polyline points="251.5,300.5 251.75,297.2 252,291.9 252.25,285.4 252.5,278.2 252.75,271.0 253,263.9 253.25,258.1 253.5,253.6" fill="none" stroke="#e62e56" stroke-width="1.3" stroke-linejoin="round" opacity="0.48" />
<polyline points="253.5,253.6 253.75,251.7" fill="none" stroke="#e62e56" stroke-width="1.3" stroke-linejoin="round" opacity="0.62" />
<polyline points="253.75,251.7 253.8,251.5" fill="none" stroke="#e62e56" stroke-width="1.3" stroke-linejoin="round" opacity="1.0" />
<polyline points="253.8,251.5 254,253.2" fill="none" stroke="#e62e56" stroke-width="1.3" stroke-linejoin="round" opacity="0.62" />
<polyline points="254,253.2 254.25,257.9 254.5,264.8 254.75,271.9 255,278.8 255.25,283.8" fill="none" stroke="#e62e56" stroke-width="1.3" stroke-linejoin="round" opacity="0.48" />
<polyline points="255.25,283.8 255.5,285.8" fill="none" stroke="#e62e56" stroke-width="1.3" stroke-linejoin="round" opacity="0.62" />
<polyline points="255.5,285.8 255.75,285.5" fill="none" stroke="#e62e56" stroke-width="1.3" stroke-linejoin="round" opacity="1.0" />
<polyline points="255.75,285.5 256,283.9 256.25,282.0" fill="none" stroke="#e62e56" stroke-width="1.3" stroke-linejoin="round" opacity="0.62" />
<polyline points="256.25,282.0 256.5,279.8 256.75,277.2 257,274.4 257.25,271.2" fill="none" stroke="#e62e56" stroke-width="1.3" stroke-linejoin="round" opacity="0.48" />
<polyline points="257.25,271.2 257.5,269.2 257.75,267.5" fill="none" stroke="#e62e56" stroke-width="1.3" stroke-linejoin="round" opacity="0.62" />
<polyline points="257.75,267.5 258,267.4 258.25,267.7" fill="none" stroke="#e62e56" stroke-width="1.3" stroke-linejoin="round" opacity="1.0" />
<polyline points="258.25,267.7 258.5,268.7 258.75,269.8 259,271.3 259.25,273.2 259.5,275.1 259.75,276.3" fill="none" stroke="#e62e56" stroke-width="1.3" stroke-linejoin="round" opacity="0.62" />
<polyline points="259.75,276.3 260,276.5 260.25,275.7" fill="none" stroke="#e62e56" stroke-width="1.3" stroke-linejoin="round" opacity="1.0" />
<polyline points="260.25,275.7 260.5,274.4 260.75,272.3 261,270.7 261.25,269.4" fill="none" stroke="#e62e56" stroke-width="1.3" stroke-linejoin="round" opacity="0.62" />
<polyline points="261.25,269.4 261.5,268.8 261.75,269.1 262,269.3" fill="none" stroke="#e62e56" stroke-width="1.3" stroke-linejoin="round" opacity="1.0" />
<polyline points="262,269.3 262.25,270.5 262.5,271.4 262.75,272.3 263,272.9" fill="none" stroke="#e62e56" stroke-width="1.3" stroke-linejoin="round" opacity="0.62" />
<polyline points="263,272.9 263.25,273.0 263.5,273.3 263.75,273.5 264,273.2 264.25,272.7" fill="none" stroke="#e62e56" stroke-width="1.3" stroke-linejoin="round" opacity="1.0" />
<polyline points="264.25,272.7 264.5,272.0 264.75,271.4" fill="none" stroke="#e62e56" stroke-width="1.3" stroke-linejoin="round" opacity="0.62" />
<polyline points="264.75,271.4 265,270.8 265.25,270.5 265.5,270.4 265.75,270.5 266,271.0 266.25,271.2 266.5,272.0 266.75,272.0 267,272.7 267.25,272.9 267.5,273.3 267.75,273.4 268,273.0 268.25,273.1 268.5,272.6 268.75,271.5 269,270.6 269.25,270.7 269.5,271.2 269.75,271.5 270,271.5 270.25,271.7 270.5,272.0 270.75,272.1 271,272.1 271.25,272.5 271.5,272.7 271.75,272.6 272,272.7 272.25,272.4 272.5,272.6 272.75,272.7 273,273.0 273.25,273.2 273.5,273.0 273.75,273.1 274,273.0 274.25,272.6 274.5,272.4 274.75,271.8 275,271.7 275.5,271.7 276,272.1 276.5,272.2 277,271.7 277.5,271.3 278,271.4 278.5,271.2 279,271.0 279.5,270.8 280,271.0 280.5,271.3 281,271.5 281.5,271.8 282,271.7 282.5,271.9 283,271.8 283.5,271.9 284,272.1 284.5,272.1 285,272.0 285.5,271.7 286,271.4 286.5,271.5 287,271.5 287.5,271.7 288,271.2 288.5,271.0 289,271.0 289.5,271.2 290,271.4 290.5,271.4 291,271.3 291.5,271.4 292,271.4 292.5,272.0 293,272.2 293.5,272.2 294,272.1 294.5,271.9 295,271.8 295.5,271.8 296,271.2 296.5,271.4 297,271.1 297.5,271.4 298,271.0 298.5,271.0 299,270.8 299.5,270.7 300,270.4 300.5,270.3 301,270.5 301.5,270.7 302,270.7 302.5,270.9 303,271.4 303.5,271.9 304,271.6 304.5,271.5 305,271.3 305.5,271.4 306,271.2 306.5,270.7 307,270.4 307.5,270.0 308,270.4 308.5,270.3 309,270.4 309.5,270.1 310,270.1 310.5,270.2 311,270.0 311.5,269.8 312,270.0 312.5,270.1 313,270.3 313.5,269.9 314,270.0 314.5,270.1 315,270.4 315.5,270.3 316,270.3 316.5,270.0 317,270.3 317.5,269.9 318,269.9 318.5,269.7 319,269.6 319.5,269.5 320,269.3 320.5,269.3 321,269.2 321.5,269.4 322,269.5 322.5,269.5 323,269.4 323.5,269.5 324,269.8 324.5,270.0 325,270.1 325.5,270.1 326,269.7 326.5,269.3 327,268.6 327.5,268.9 328,268.7 328.5,268.9 329,268.8 329.5,268.9 330,268.7 330.5,268.4 331,268.7 331.5,268.5 332,268.6 332.5,268.6 333,268.9 333.5,268.9 334,269.0 334.5,269.1 335,269.1 335.5,268.8 336,268.9 336.5,268.8 337,268.9 337.5,268.8 338,268.9 338.5,268.6 339,268.5 339.5,268.3 340,268.4 340.5,268.5 341,268.4 341.5,268.5 342,268.6 342.5,268.6 343,268.3 343.5,267.7 344,267.7 344.5,267.8 345,268.2 345.5,268.0 346,268.3 346.5,268.4 347,268.3 347.5,268.1 348,267.7 348.5,267.7 349,267.6 349.5,267.6 350,267.8 350.5,268.0 351,268.2 351.5,268.3 352,267.7 352.5,267.3 353,267.3 353.5,267.3 354,267.5 354.5,267.2 355,267.3 355.5,267.7 356,267.7 356.5,267.6 357,267.3 357.5,267.3 358,267.1 358.5,266.8 359,266.6 359.5,266.7 360,266.8 360.5,266.6 361,266.4 361.5,266.4 362,266.5 362.5,266.4 363,266.3 363.5,266.3 364,266.6 364.5,266.4 365,266.3 365.5,266.3 366,266.7 366.5,266.5 367,266.6 367.5,266.4 368,266.6 368.5,266.6 369,266.5 369.5,266.3 370,266.1 370.5,266.3 371,266.3 371.5,266.0 372,265.7 372.5,265.8 373,266.2 373.5,266.2 374,266.0 374.5,265.8 375,265.9 375.5,265.7 376,265.7 376.5,265.8 377,265.9 377.5,266.0 378,265.8 378.5,265.6 379,265.5 379.5,265.8 380,266.1 380.5,266.2 381,266.2 381.5,265.9 382,265.7 382.5,265.2 383,265.2 383.5,265.1 384,265.3 384.5,265.4 385,265.4 385.5,265.2 386,265.1 386.5,265.1 387,265.3 387.5,265.4 388,265.3 388.5,265.3 389,265.4 389.5,265.6 390,265.6 390.5,265.1 391,264.8 391.5,264.8 392,265.1 392.5,265.5 393,265.4 393.5,265.2 394,264.7 394.5,264.7 395,264.6 395.5,264.5 396,264.6 396.5,264.7 397,265.1 397.5,264.8 398,264.8 398.5,264.7 399,264.4 399.5,264.1 400,264.1 400.5,264.4 401,264.3 401.5,264.0 402,263.8 402.5,264.0 403,264.3 403.5,264.4 404,264.8 404.5,264.4 405,264.4 405.5,264.3 406,264.4 406.5,264.8 407,264.8 407.5,264.8 408,264.7 408.5,264.1 409,263.7 409.5,263.6 410,263.9 410.5,264.1 411,263.9 411.5,264.0 412,264.2 412.5,264.4 413,264.3 413.5,264.0 414,264.0 414.5,263.9 415,263.7 415.5,263.5 416,263.5 416.5,263.3 417,263.3 417.5,263.2 418,263.5 418.5,263.3 419,263.4 419.5,263.4 420,263.4 420.5,263.3 421,263.3 421.5,263.5 422,263.3 422.5,262.9 423,262.8 423.5,262.7 424,263.3 424.5,263.1 425,263.1 425.5,262.8 426,262.8 426.5,262.5 427,262.4 427.5,262.3 428,262.5 428.5,262.3 429,262.3 429.5,262.3 430,262.5 430.5,262.5 431,262.3 431.5,262.2 432,262.4 432.5,262.4 433,262.3 433.5,262.4 434,262.3 434.5,262.5 435,262.3 435.5,262.4 436,262.3 436.5,262.4 437,262.4 437.5,262.5 438,262.5 438.5,262.4 439,262.1 439.5,262.1 440,261.7 440.5,261.5 441,261.5 441.5,261.8 442,262.4 442.5,262.5 443,262.7 443.5,262.4 444,262.3 444.5,262.3 445,262.5 445.5,262.4 446,262.2 446.5,262.0 447,261.8 447.5,261.5 448,261.7 448.5,261.8 449,261.9 449.5,261.9 450,261.8 450.5,262.1 451,262.3 451.5,262.5 452,262.2 452.25,261.6 452.5,261.9 452.75,262.1 453,262.1 453.25,262.0 453.5,261.6 453.75,261.7 454,261.5 454.25,261.7 454.5,261.6 454.75,262.0 455,262.0 455.25,262.3 455.5,261.9 455.75,261.7 456,261.5 456.25,261.6 456.5,262.0 456.75,262.0 456.9,262.0 457,261.9" fill="none" stroke="#e62e56" stroke-width="1.3" stroke-linejoin="round" opacity="1.0" />
<polyline points="457,261.9 457.25,263.2 457.5,264.6" fill="none" stroke="#e62e56" stroke-width="1.3" stroke-linejoin="round" opacity="0.62" />
<polyline points="457.5,264.6 457.75,267.2 458,269.6 458.25,273.1 458.5,276.9 458.75,281.9 459,287.3 459.25,293.2 459.5,297.7 459.7,300.1 459.75,300.4 460,303.2 460.25,305.7" fill="none" stroke="#e62e56" stroke-width="1.3" stroke-linejoin="round" opacity="0.48" />
<polyline points="460.25,305.7 460.5,307.8 460.75,309.7 461,311.8 461.25,313.6 461.5,315.5 461.75,317.1 462,318.5 462.25,319.7 462.5,321.0 462.75,322.0 463,323.3 463.25,324.1" fill="none" stroke="#e62e56" stroke-width="1.3" stroke-linejoin="round" opacity="0.62" />
<polyline points="463.25,324.1 463.5,325.1 463.6,324.7 463.75,325.1 464,325.2 464.25,325.6 464.5,325.5 464.75,325.5 465,325.8 465.25,325.9 465.5,325.6" fill="none" stroke="#e62e56" stroke-width="1.3" stroke-linejoin="round" opacity="1.0" />
<polyline points="465.5,325.6 465.75,324.7 466,323.7" fill="none" stroke="#e62e56" stroke-width="1.3" stroke-linejoin="round" opacity="0.62" />
<polyline points="466,323.7 466.25,322.8 466.5,322.3 466.75,322.4 467,322.8 467.25,323.1 467.5,323.6 467.75,324.1 468,324.6 468.1,324.3 468.25,324.4 468.5,324.9 468.75,325.5" fill="none" stroke="#e62e56" stroke-width="1.3" stroke-linejoin="round" opacity="1.0" />
<polyline points="468.75,325.5 469,325.8 469.25,326.8 469.5,327.8 469.75,328.7" fill="none" stroke="#e62e56" stroke-width="1.3" stroke-linejoin="round" opacity="0.62" />
<polyline points="469.75,328.7 470,329.3 470.25,329.9 470.5,330.5 470.75,330.7 471,331.1 471.25,331.8 471.5,332.4" fill="none" stroke="#e62e56" stroke-width="1.3" stroke-linejoin="round" opacity="1.0" />
<polyline points="471.5,332.4 471.75,332.9 472,333.7 472.25,334.6 472.5,336.9" fill="none" stroke="#e62e56" stroke-width="1.3" stroke-linejoin="round" opacity="0.62" />
<polyline points="472.5,336.9 472.75,339.6 473,343.4 473.1,344.9 473.25,347.9 473.5,354.5 473.7,360.1 473.75,361.3 474,368.1 474.25,374.7 474.3,376.2 474.5,380.7 474.75,386.8 475,392.6 475.25,398.4 475.5,403.9 475.75,409.4 476,414.9 476.25,420.0 476.5,424.3 476.75,429.0 477,433.4 477.25,438.3 477.5,443.3 477.6,445.4 477.75,449.0 478,456.1 478.25,464.6 478.5,473.3 478.75,481.9 479,489.2 479.25,494.3 479.3,494.9 479.5,497.8 479.75,501.1 480,504.3 480.25,506.8" fill="none" stroke="#e62e56" stroke-width="1.3" stroke-linejoin="round" opacity="0.48" />
<polyline points="480.25,506.8 480.5,508.7 480.75,509.4" fill="none" stroke="#e62e56" stroke-width="1.3" stroke-linejoin="round" opacity="0.62" />
<polyline points="480.75,509.4 480.8,509.4" fill="none" stroke="#e62e56" stroke-width="1.3" stroke-linejoin="round" opacity="1.0" />
<polyline points="480.8,509.4 481,508.3" fill="none" stroke="#e62e56" stroke-width="1.3" stroke-linejoin="round" opacity="0.62" />
<polyline points="481,508.3 481.25,505.0 481.5,501.2" fill="none" stroke="#e62e56" stroke-width="1.3" stroke-linejoin="round" opacity="0.48" />
<polyline points="481.5,501.2 481.75,499.2" fill="none" stroke="#e62e56" stroke-width="1.3" stroke-linejoin="round" opacity="0.62" />
<polyline points="481.75,499.2 481.8,499.3" fill="none" stroke="#e62e56" stroke-width="1.3" stroke-linejoin="round" opacity="1.0" />
<polyline points="481.8,499.3 482,500.3 482.25,502.3" fill="none" stroke="#e62e56" stroke-width="1.3" stroke-linejoin="round" opacity="0.62" />
<polyline points="482.25,502.3 482.5,504.6" fill="none" stroke="#e62e56" stroke-width="1.3" stroke-linejoin="round" opacity="0.48" />
<polyline points="482.5,504.6 482.75,505.8" fill="none" stroke="#e62e56" stroke-width="1.3" stroke-linejoin="round" opacity="0.62" />
<polyline points="482.75,505.8 482.8,505.9" fill="none" stroke="#e62e56" stroke-width="1.3" stroke-linejoin="round" opacity="1.0" />
<polyline points="482.8,505.9 483,505.3 483.25,503.6" fill="none" stroke="#e62e56" stroke-width="1.3" stroke-linejoin="round" opacity="0.62" />
<polyline points="483.25,503.6 483.5,501.1" fill="none" stroke="#e62e56" stroke-width="1.3" stroke-linejoin="round" opacity="0.48" />
<polyline points="483.5,501.1 483.75,498.9 484,497.4 484.25,497.8 484.5,500.1 484.75,502.7 485,504.7 485.2,504.9" fill="none" stroke="#e62e56" stroke-width="1.3" stroke-linejoin="round" opacity="0.62" />
<polyline points="485.2,504.9 485.25,505.0" fill="none" stroke="#e62e56" stroke-width="1.3" stroke-linejoin="round" opacity="1.0" />
<polyline points="485.25,505.0 485.5,503.8 485.75,501.9 486,499.7 486.25,498.5 486.5,498.4" fill="none" stroke="#e62e56" stroke-width="1.3" stroke-linejoin="round" opacity="0.62" />
<polyline points="486.5,498.4 486.75,499.1" fill="none" stroke="#e62e56" stroke-width="1.3" stroke-linejoin="round" opacity="1.0" />
<polyline points="486.75,499.1 487,500.0 487.25,500.8 487.5,502.1 487.75,503.0" fill="none" stroke="#e62e56" stroke-width="1.3" stroke-linejoin="round" opacity="0.62" />
<polyline points="487.75,503.0 488,503.6 488.25,503.2 488.5,502.7" fill="none" stroke="#e62e56" stroke-width="1.3" stroke-linejoin="round" opacity="1.0" />
<polyline points="488.5,502.7 488.75,501.9 489,501.0 489.25,500.0 489.5,499.4" fill="none" stroke="#e62e56" stroke-width="1.3" stroke-linejoin="round" opacity="0.62" />
<polyline points="489.5,499.4 489.75,499.0 490,499.2 490.25,499.0 490.5,499.5 490.75,499.8 491,500.7 491.25,500.9 491.5,501.2 491.75,501.3 492,501.8 492.25,501.8 492.5,501.9 492.75,501.5 493,501.0 493.25,500.4 493.5,499.8 493.75,499.8 494,499.7 494.25,499.9 494.5,499.9 494.75,500.0 495,500.5 495.25,500.4 495.5,500.8 495.75,500.9 496,501.1 496.25,501.2 496.5,501.2 496.75,501.6 497,501.3 497.25,501.3 497.5,500.9 497.75,500.9 498,500.9 498.25,500.9 498.5,500.4 498.75,499.7 499,499.4 499.25,499.8 499.5,499.8 499.75,499.6 500,499.6 500.5,499.8 501,500.2 501.5,500.0 502,500.3 502.5,500.4 503,500.3 503.5,500.0 504,500.0 504.5,500.4 505,500.8 505.5,501.1 506,501.3 506.5,501.8 507,502.0 507.5,501.9 508,501.4 508.5,500.9 509,500.8 509.5,500.6 510,500.3 510.5,500.1 511,499.5 511.5,499.4 512,498.9 512.5,498.7 513,498.4 513.5,498.7 514,498.9 514.5,499.4 515,499.4 515.5,499.6 516,499.8 516.5,500.3 517,500.8 517.5,500.9 518,500.9 518.5,501.1 519,501.2 519.5,501.3 520,500.8 520.5,500.8 521,500.1 521.5,500.0 522,499.3 522.5,499.3 523,499.0 523.5,498.8 524,498.6 524.5,499.0 525,499.6 525.5,500.3 526,500.3 526.5,500.0 527,500.0 527.5,500.0 528,500.5 528.5,500.5 529,500.4 529.5,500.2 530,500.4 530.5,500.4 531,500.3 531.5,499.8 532,499.7 532.5,499.7 533,499.7 533.5,499.3 534,499.1 534.5,499.0 535,498.9 535.5,499.3 536,499.6 536.5,500.0 537,499.9 537.5,500.2 538,500.8 538.5,501.1 539,501.2 539.5,500.6 540,500.4 540.5,500.2 541,500.5 541.5,500.4 542,500.0 542.5,499.6 543,499.4 543.5,499.7 544,499.8 544.5,499.9 545,499.7 545.5,499.9 546,499.8 546.5,499.8 547,499.4 547.5,499.9 548,500.2 548.5,500.7 549,500.6 549.5,500.8 550,500.5 550.5,500.7 551,500.2 551.5,500.2 552,499.6 552.5,499.7 553,499.6 553.5,499.8 554,499.6 554.5,499.4 555,499.4 555.5,499.7 556,500.1 556.5,500.1 557,500.1 557.5,499.8 558,499.8 558.5,500.0 559,500.5 559.5,500.4 560,500.4 560.5,500.3 561,500.5 561.5,500.1 562,499.9 562.5,499.8 563,500.0 563.5,500.1 564,499.9 564.5,499.8 565,499.7 565.5,499.9 566,499.7 566.5,499.6 567,499.5 567.5,499.8 568,500.1 568.5,500.0 569,500.2 569.5,499.8 570,499.9 570.5,499.7 571,500.0 571.5,500.0 572,499.9 572.5,499.8 573,499.8 573.5,499.5 574,499.3 574.5,499.2 575,499.6 575.5,500.0 576,500.5 576.5,500.4 577,500.2 577.5,499.8 578,499.9 578.5,500.2 579,500.0 579.5,499.9 580,499.9 580.5,499.9 581,499.7 581.5,499.9 582,499.8 582.5,500.0 583,499.7 583.5,500.2 584,500.3 584.5,500.1 585,500.0 585.5,499.8 586,500.3 586.5,500.3 587,500.4 587.5,500.3 588,500.0 588.5,500.0 589,500.0 589.5,500.1 590,500.5 590.5,500.5 591,500.7 591.5,500.7 592,500.5 592.5,500.3 593,500.2 593.5,500.1 594,500.0 594.5,500.2 595,500.3 595.5,500.6 596,500.1 596.5,500.0 597,499.7 597.5,499.7 598,499.7 598.5,499.8 599,499.8 599.5,500.2 600,500.4 600.5,500.4 601,500.0 601.5,500.0 602,500.2 602.5,500.2 603,500.2 603.5,499.9 604,499.9 604.5,500.0 605,499.8 605.5,499.8 606,499.6 606.5,500.0 607,499.9 607.5,499.6 608,499.3 608.5,499.2 609,499.4 609.5,499.7 610,499.9 610.5,499.9 611,500.1 611.5,499.8 612,499.8 612.5,499.7 613,499.9 613.5,499.8 614,499.5 614.5,499.6 615,499.9 615.5,500.6 616,500.6 616.5,500.7 617,500.4 617.5,500.2 618,500.0 618.5,499.8 619,499.9 619.5,499.8 620,499.8 620.5,500.0 621,500.2 621.5,500.5 622,500.4 622.5,500.5 623,500.4 623.5,500.0 624,499.6 624.5,499.7 625,500.0 625.5,499.9 626,500.0 626.5,500.0 627,500.5 627.5,500.5 628,500.4 628.5,500.1 629,499.8 629.5,499.8 630,499.7 630.5,499.9 631,500.3 631.5,500.2 632,500.2 632.5,500.0 633,500.1 633.5,500.2 634,500.1 634.5,500.4 635,500.1 635.5,500.0 636,499.9 636.5,499.7 637,499.7 637.5,499.5 638,499.8 638.5,499.9 639,499.6 639.5,499.4 640,499.6 640.5,500.0 641,500.0 641.5,500.0 642,499.9 642.5,500.3 643,500.1 643.5,500.3 644,500.1 644.5,500.4 645,500.4 645.5,500.2 646,500.0 646.5,499.8 647,500.2 647.5,500.0 648,499.9 648.5,499.8 649,500.1 649.5,500.0 650,499.8 650.5,499.8 651,499.8 651.5,500.0 652,500.0 652.5,500.2 653,499.7 653.5,499.8 654,500.0 654.5,500.6 655,500.6 655.5,500.1 656,500.1 656.5,500.0 657,500.5 657.5,500.2 658,500.1 658.5,499.9 659,500.2 659.5,500.3 660,500.3 660.5,499.8 661,499.8 661.5,499.9 662,500.1 662.5,500.2 663,500.3 663.5,500.3 664,500.2 664.5,500.1 665,500.2 665.5,500.3 666,500.3 666.5,500.0 667,500.0 667.5,500.2 668,500.1 668.5,500.1 669,499.8 669.5,499.7 670,499.6 670.5,499.8 671,500.0 671.5,499.9 672,499.9 672.5,499.9 673,499.8 673.5,499.6 674,499.9 674.5,500.2 675,500.1 675.5,500.0 676,499.9 676.5,499.9 677,499.8 677.5,499.6 678,499.8 678.5,499.9 679,500.6 679.5,500.6 680,500.5 680.5,500.0 681,499.9 681.5,500.1 682,500.2 682.5,500.2 683,500.1 683.5,500.2 684,500.5 684.5,500.4 685,500.2 685.5,500.0 686,500.3 686.5,500.5 687,500.6 687.5,500.3 688,500.2 688.5,500.1 689,500.2 689.5,500.5 690,500.7 690.5,500.2 691,500.1 691.5,499.7 692,499.7 692.5,499.6 693,499.7 693.5,500.0 694,499.7 694.5,499.6 695,499.6 695.5,499.6 696,499.7 696.5,499.8 697,500.0 697.5,500.0 698,500.0 698.5,499.9 699,499.6 699.5,499.7 700,500.0 700.5,500.2 701,500.1 701.5,500.0 702,499.6 702.5,499.6 703,499.5 703.5,499.8 704,499.9 704.5,499.9 705,499.7 705.5,499.7 706,499.8 706.5,499.6 707,499.5 707.5,499.4 708,500.0 708.5,500.3 709,500.6 709.5,500.6 710,500.4 710.5,500.1 711,499.7 711.5,500.0 712,500.1 712.5,500.4 713,500.3 713.5,500.3 714,500.2 714.5,500.2 715,500.3 715.5,500.1 716,499.9 716.5,499.7 717,500.0 717.5,500.2 718,500.2 718.5,500.2 719,500.1 719.5,499.9 720,499.6 720.5,499.2 721,499.5 721.5,499.6 722,500.0 722.5,500.4 723,500.4 723.5,500.3 724,499.9 724.5,499.5 725,499.4 725.5,499.3 726,499.8 726.5,499.8 727,499.7 727.5,499.8 728,499.9 728.5,500.0 729,499.8 729.5,499.7 730,500.0 730.5,500.4 731,500.2 731.5,500.3 732,500.0 732.5,500.3 733,500.3 733.5,500.1 734,500.2 734.5,499.8 735,499.9 735.5,499.6 736,500.1 736.5,500.5 737,500.7 737.5,500.5 738,500.2 738.5,500.4 739,500.5 739.5,500.7 740,500.4 740.5,500.1 741,500.0 741.5,500.2 742,500.1 742.5,500.2 743,500.2 743.5,500.5 744,500.8 744.5,500.6 745,500.5 745.5,500.5 746,500.5 746.5,500.5 747,500.2 747.5,499.8 748,500.0 748.5,500.0 749,500.2 749.5,500.1 750,500.0 750.5,499.9 751,499.7 751.5,499.8 752,500.1 752.5,500.2 753,500.4 753.5,500.4 754,500.3 754.5,500.2 755,500.1 755.5,500.1 756,500.2 756.5,500.6 757,500.6 757.5,500.4 758,500.2 758.5,500.1 759,500.5 759.5,500.1 760,500.0 760.5,499.6 761,500.0 761.5,500.0 762,499.9 762.5,499.6 763,499.6 763.5,500.1 764,500.7 764.5,500.6 765,500.4 765.5,500.0 766,499.9 766.5,500.0 767,500.2 767.5,500.4 768,500.2 768.5,500.2 769,500.3 769.5,500.3 770,500.2 770.5,500.2 771,500.2 771.5,500.0 772,500.1 772.5,500.1 773,500.1 773.5,500.2 774,500.5 774.5,500.8 775,500.5 775.5,500.3 776,500.0 776.5,500.0 777,500.0 777.5,500.2 778,500.3 778.5,500.1 779,500.2 779.5,499.8 780,500.0 780.5,499.8 781,499.9 781.5,499.8 782,499.9 782.5,500.0 783,500.3 783.5,500.1 784,500.4 784.5,500.4 785,500.4 785.5,500.5 786,500.1 786.5,500.3 787,500.1 787.5,500.4 788,500.1 788.5,499.9 789,499.6 789.5,499.9 790,500.1 790.5,500.2 791,500.2 791.5,500.0 792,499.8 792.5,499.8 793,500.0 793.5,500.4 794,500.4 794.5,500.5 795,500.1 795.5,500.3 796,499.9 796.5,500.2 797,499.9 797.5,499.9 798,499.8 798.5,500.2 799,500.2 799.5,500.4 800,500.2 800.5,500.4 801,500.3 801.5,500.4 802,500.2 802.5,500.1 803,500.1 803.5,500.2 804,500.2 804.25,500.0 804.5,500.2 804.75,500.0 805,500.2 805.25,500.2 805.5,500.5 805.75,500.4 806,500.2 806.25,500.2 806.5,499.8 806.75,500.1 807,500.2 807.25,500.5 807.5,500.4 807.75,500.3 808,500.5 808.25,500.0 808.5,499.8 808.75,499.7 809,500.0 809.25,500.0 809.5,500.0 809.75,499.6 810,499.7 810.25,499.6 810.5,500.0 810.6,500.0 810.75,500.1 811,500.0 811.25,500.1 811.5,499.6 811.75,499.4 812,498.6 812.25,497.9" fill="none" stroke="#e62e56" stroke-width="1.3" stroke-linejoin="round" opacity="1.0" />
<polyline points="812.25,497.9 812.5,496.8 812.75,496.2 813,495.3 813.25,494.9 813.5,494.0 813.75,493.3 814,492.1 814.25,491.3 814.5,490.5 814.6,490.4 814.75,489.8 815,488.9 815.25,488.0 815.5,486.9 815.75,486.1 816,485.1 816.25,484.0 816.5,482.5 816.75,481.2 817,479.7 817.25,478.5 817.5,477.1 817.75,475.4 818,473.2" fill="none" stroke="#e62e56" stroke-width="1.3" stroke-linejoin="round" opacity="0.62" />
<polyline points="818,473.2 818.25,470.7 818.5,467.5 818.75,463.1 819,457.7 819.1,455.4 819.25,452.5 819.5,446.5 819.75,439.1 820,430.9 820.25,422.1 820.5,413.5 820.6,409.7 820.75,404.3 821,394.9 821.25,384.4 821.5,373.7 821.75,363.0 822,353.1 822.2,345.3 822.25,343.6 822.5,334.5 822.75,325.8 823,317.3 823.25,308.6 823.5,300.7 823.75,291.8 824,283.2 824.1,279.7 824.25,274.4 824.5,265.1 824.75,255.0 825,244.8 825.25,234.9 825.5,225.3 825.75,216.8 826,209.3 826.25,202.6 826.5,195.9 826.75,189.7 827,183.9 827.25,178.9 827.5,174.6 827.6,173.7 827.75,171.5 828,168.1 828.25,165.0" fill="none" stroke="#e62e56" stroke-width="1.3" stroke-linejoin="round" opacity="0.48" />
<polyline points="828.25,165.0 828.5,163.7" fill="none" stroke="#e62e56" stroke-width="1.3" stroke-linejoin="round" opacity="0.62" />
<polyline points="828.5,163.7 828.6,163.7" fill="none" stroke="#e62e56" stroke-width="1.3" stroke-linejoin="round" opacity="1.0" />
<polyline points="828.6,163.7 828.75,164.2" fill="none" stroke="#e62e56" stroke-width="1.3" stroke-linejoin="round" opacity="0.62" />
<polyline points="828.75,164.2 829,167.3 829.25,171.5 829.5,176.1 829.75,180.6 830,185.4 830.25,191.0 830.5,197.0 830.75,204.4 830.9,209.1 831,212.8 831.25,222.9 831.5,235.9 831.75,253.0 832,275.7 832.25,331.3 832.3,334.7 832.5,329.9 832.75,315.3 833,300.1 833.1,296.0 833.25,290.9 833.5,282.6 833.75,274.0 834,265.7 834.25,257.9 834.5,250.5 834.75,243.8 835,237.9 835.25,233.2 835.5,230.2" fill="none" stroke="#e62e56" stroke-width="1.3" stroke-linejoin="round" opacity="0.48" />
<polyline points="835.5,230.2 835.75,228.7" fill="none" stroke="#e62e56" stroke-width="1.3" stroke-linejoin="round" opacity="0.62" />
<polyline points="835.75,228.7 835.9,228.6" fill="none" stroke="#e62e56" stroke-width="1.3" stroke-linejoin="round" opacity="1.0" />
<polyline points="835.9,228.6 836,229.0" fill="none" stroke="#e62e56" stroke-width="1.3" stroke-linejoin="round" opacity="0.62" />
<polyline points="836,229.0 836.25,233.8 836.5,243.1 836.75,255.2 837,268.0 837.25,280.1 837.5,290.0 837.75,296.1" fill="none" stroke="#e62e56" stroke-width="1.3" stroke-linejoin="round" opacity="0.48" />
<polyline points="837.75,296.1 837.9,297.4" fill="none" stroke="#e62e56" stroke-width="1.3" stroke-linejoin="round" opacity="0.62" />
<polyline points="837.9,297.4 838,297.0" fill="none" stroke="#e62e56" stroke-width="1.3" stroke-linejoin="round" opacity="1.0" />
<polyline points="838,297.0 838.25,294.4 838.5,289.8 838.75,283.7 839,276.7 839.25,269.2 839.5,261.9 839.75,255.6 840,251.1 840.25,248.0" fill="none" stroke="#e62e56" stroke-width="1.3" stroke-linejoin="round" opacity="0.48" />
<polyline points="840.25,248.0 840.4,247.4 840.5,247.7" fill="none" stroke="#e62e56" stroke-width="1.3" stroke-linejoin="round" opacity="0.62" />
<polyline points="840.5,247.7 840.75,251.3 841,257.4 841.25,264.3 841.5,271.9 841.75,278.0 842,281.9" fill="none" stroke="#e62e56" stroke-width="1.3" stroke-linejoin="round" opacity="0.48" />
<polyline points="842,281.9 842.1,282.0" fill="none" stroke="#e62e56" stroke-width="1.3" stroke-linejoin="round" opacity="0.62" />
<polyline points="842.1,282.0 842.25,281.8" fill="none" stroke="#e62e56" stroke-width="1.3" stroke-linejoin="round" opacity="1.0" />
<polyline points="842.25,281.8 842.5,280.5 842.75,278.8" fill="none" stroke="#e62e56" stroke-width="1.3" stroke-linejoin="round" opacity="0.62" />
<polyline points="842.75,278.8 843,276.3 843.25,273.7 843.5,270.6 843.75,267.8 844,264.9" fill="none" stroke="#e62e56" stroke-width="1.3" stroke-linejoin="round" opacity="0.48" />
<polyline points="844,264.9 844.25,263.4 844.5,262.6" fill="none" stroke="#e62e56" stroke-width="1.3" stroke-linejoin="round" opacity="0.62" />
<polyline points="844.5,262.6 844.6,263.0 844.75,263.5" fill="none" stroke="#e62e56" stroke-width="1.3" stroke-linejoin="round" opacity="1.0" />
<polyline points="844.75,263.5 845,264.1 845.25,265.4 845.5,266.5 845.75,268.3 846,269.9 846.25,271.0 846.5,271.6" fill="none" stroke="#e62e56" stroke-width="1.3" stroke-linejoin="round" opacity="0.62" />
<polyline points="846.5,271.6 846.6,272.1 846.75,272.1" fill="none" stroke="#e62e56" stroke-width="1.3" stroke-linejoin="round" opacity="1.0" />
<polyline points="846.75,272.1 847,271.3 847.25,269.0 847.5,267.1 847.75,265.4 848,264.6" fill="none" stroke="#e62e56" stroke-width="1.3" stroke-linejoin="round" opacity="0.62" />
<polyline points="848,264.6 848.1,264.4 848.25,264.4 848.5,264.9" fill="none" stroke="#e62e56" stroke-width="1.3" stroke-linejoin="round" opacity="1.0" />
<polyline points="848.5,264.9 848.75,265.8 849,267.0 849.25,267.7 849.5,268.1 849.75,268.5" fill="none" stroke="#e62e56" stroke-width="1.3" stroke-linejoin="round" opacity="0.62" />
<polyline points="849.75,268.5 850,269.1 850.1,269.6 850.25,269.8 850.5,269.4 850.75,269.1" fill="none" stroke="#e62e56" stroke-width="1.3" stroke-linejoin="round" opacity="1.0" />
<polyline points="850.75,269.1 851,268.3 851.25,267.4" fill="none" stroke="#e62e56" stroke-width="1.3" stroke-linejoin="round" opacity="0.62" />
<polyline points="851.25,267.4 851.5,266.7 851.75,266.2 852,266.2 852.1,265.8 852.25,265.7 852.5,265.9 852.75,266.6 853,267.2 853.25,267.8 853.5,268.5 853.75,269.0 854,268.9 854.1,269.0 854.25,268.8 854.5,268.8 854.75,268.2 855,267.7 855.25,266.0 855.5,265.8 855.75,265.8 856,266.1 856.1,266.2 856.25,266.1 856.5,266.0 856.75,266.2 857,266.8 857.25,267.3 857.5,267.5 857.75,267.4 858,267.6 858.1,267.6 858.25,268.0 858.5,268.3 858.75,268.4 859,268.4 859.25,268.3 859.5,268.6 859.75,268.8 860,268.8 860.25,268.8 860.5,268.6 860.75,268.4 861,268.2 861.1,268.1 861.25,268.3 861.5,268.5 861.75,268.7 862,268.2 862.5,267.7 863,266.8 863.5,266.7 864,266.2 864.5,266.6 865,266.7 865.5,266.7 866,266.6 866.5,266.6 867,267.2 867.5,267.4 868,267.5 868.5,267.3 869,267.4 869.5,267.6 870,267.6 870.5,267.3 871,267.4 871.5,267.3 872,267.3 872.5,267.1 873,267.0 873.5,267.1 874,266.6 874.5,266.6 875,266.0 875.5,265.9 876,265.6 876.5,265.8 877,266.0 877.5,266.0 878,266.3 878.5,266.4 879,266.8 879.5,266.7 880,266.9 880.5,267.0 881,267.1 881.5,267.2 882,267.2 882.5,266.9 883,266.6 883.5,266.4 884,266.2 884.5,266.3 885,266.1 885.5,266.1 886,266.0 886.5,266.1 887,265.7 887.5,265.6 888,265.6 888.5,266.3 889,266.4 889.5,266.3 890,266.3 890.5,266.6 891,266.5 891.5,266.3 892,266.0 892.5,265.9 893,266.0 893.5,266.1 894,266.3 894.5,266.3 895,265.9 895.5,266.0 896,266.0 896.5,266.3 897,266.3 897.5,266.3 898,266.2 898.5,266.2 899,266.4 899.5,266.3 900,266.5 900.5,266.7 901,267.0 901.5,266.9 902,266.6 902.5,266.3 903,266.4 903.5,266.0 904,266.1 904.5,265.7 905,265.9 905.5,265.9 906,266.2 906.5,266.4 907,266.0 907.5,265.7 908,265.2 908.5,265.4 909,265.7 909.5,265.9 910,266.0 910.5,265.7 911,265.7 911.5,265.8 912,266.0 912.5,265.8 913,265.9 913.5,265.9 914,266.2 914.5,265.9 915,265.8 915.5,265.8 916,266.0 916.5,265.5 917,265.1 917.5,265.0 918,265.0 918.5,265.0 919,265.1 919.5,265.5 920,265.8 920.5,265.9 921,266.0 921.5,265.7 922,265.7 922.5,265.5 923,265.8 923.5,265.8 924,265.8 924.5,265.9 925,265.6 925.5,265.3 926,264.9 926.5,264.7 927,264.4 927.5,264.5 928,264.4 928.5,264.6 929,264.2 929.5,263.8 930,264.0 930.5,264.3 931,264.8 931.5,264.6 932,264.9 932.5,264.4 933,264.4 933.5,264.3 934,264.6 934.5,264.9 935,265.0 935.5,264.6 936,264.2 936.5,264.0 937,264.0 937.5,264.0 938,264.3 938.5,264.2 939,264.3 939.5,264.2 940,264.1 940.5,264.2 941,264.3 941.5,264.5 942,264.5 942.5,264.3 943,264.4 943.5,264.2 944,264.0 944.5,263.8 945,263.6 945.5,263.7 946,263.4 946.5,263.2 947,263.0 947.5,263.3 948,263.0 948.5,263.2 949,262.8 949.5,262.9 950,263.0 950.5,263.0 951,263.4 951.5,263.2 952,263.4 952.5,263.2 953,263.3 953.5,263.4 954,263.3 954.5,263.2 955,263.3 955.5,263.2 956,263.5 956.5,263.1 957,263.0 957.5,262.3 958,262.2 958.5,261.9 959,262.1 959.5,262.3 960,262.5 960.5,262.5 961,262.2 961.5,262.1 962,261.9 962.5,261.9 963,262.3 963.5,262.6 964,262.6 964.5,262.1" fill="none" stroke="#e62e56" stroke-width="1.3" stroke-linejoin="round" opacity="1.0" />
<polyline points="26.5,417.9 70,417.1 117.5,416.7 179,416.4 232.5,416.4 233,416.5 233.75,416.9" fill="none" stroke="#1dc2ca" stroke-width="3.0" stroke-linejoin="round" opacity="1" />
<polyline points="233.75,416.9 234.5,417.7 235.5,419.1 236.25,420.4 237.25,424.1 238.5,431.3" fill="none" stroke="#1dc2ca" stroke-width="1.3" stroke-linejoin="round" opacity="0.85" />
<polyline points="238.5,431.3 240.75,452.1 242.25,468.9 243,480.0 243.75,501.1 244,504.0" fill="none" stroke="#1dc2ca" stroke-width="1.1" stroke-linejoin="round" opacity="0.62" />
<polyline points="244,504.0 244.25,503.5 244.5,502.0" fill="none" stroke="#1dc2ca" stroke-width="1.3" stroke-linejoin="round" opacity="0.85" />
<polyline points="244.5,502.0 245.25,495.7" fill="none" stroke="#1dc2ca" stroke-width="1.1" stroke-linejoin="round" opacity="0.62" />
<polyline points="245.25,495.7 246.5,487.6 247,485.0 247.25,484.3 247.5,484.0 247.75,485.0" fill="none" stroke="#1dc2ca" stroke-width="1.3" stroke-linejoin="round" opacity="0.85" />
<polyline points="247.75,485.0 248.5,494.4 248.75,497.0" fill="none" stroke="#1dc2ca" stroke-width="1.1" stroke-linejoin="round" opacity="0.62" />
<polyline points="248.75,497.0 249,498.0 249.25,497.7 249.5,496.8 250.5,491.2 250.75,490.3 251,490.0 251.25,490.6 252.25,496.9 252.5,497.5 252.75,497.3 253,496.7 254,493.3 254.25,492.7 254.5,492.5" fill="none" stroke="#1dc2ca" stroke-width="1.3" stroke-linejoin="round" opacity="0.85" />
<polyline points="254.5,492.5 254.75,492.7" fill="none" stroke="#1dc2ca" stroke-width="3.0" stroke-linejoin="round" opacity="1" />
<polyline points="254.75,492.7 255,493.0 256,495.5 256.25,495.8" fill="none" stroke="#1dc2ca" stroke-width="1.3" stroke-linejoin="round" opacity="0.85" />
<polyline points="256.25,495.8 256.5,496.0 257,495.7" fill="none" stroke="#1dc2ca" stroke-width="3.0" stroke-linejoin="round" opacity="1" />
<polyline points="257,495.7 258,494.3" fill="none" stroke="#1dc2ca" stroke-width="1.3" stroke-linejoin="round" opacity="0.85" />
<polyline points="258,494.3 258.5,494.0 262.5,494.7 458.6,494.5" fill="none" stroke="#1dc2ca" stroke-width="3.0" stroke-linejoin="round" opacity="1" />
<polyline points="458.6,494.5 458.75,494.3 459,493.2 459.75,488.3" fill="none" stroke="#1dc2ca" stroke-width="1.3" stroke-linejoin="round" opacity="0.85" />
<polyline points="459.75,488.3 461,477.4 464.25,439.9 470,377.7 471,369.4" fill="none" stroke="#1dc2ca" stroke-width="1.1" stroke-linejoin="round" opacity="0.62" />
<polyline points="471,369.4 471.75,364.9 472.5,362.1 472.75,361.7" fill="none" stroke="#1dc2ca" stroke-width="1.3" stroke-linejoin="round" opacity="0.85" />
<polyline points="472.75,361.7 473.1,361.4" fill="none" stroke="#1dc2ca" stroke-width="3.0" stroke-linejoin="round" opacity="1" />
<polyline points="473.1,361.4 473.5,361.8 474,363.1 474.75,366.6 477.25,383.8" fill="none" stroke="#1dc2ca" stroke-width="1.3" stroke-linejoin="round" opacity="0.85" />
<polyline points="477.25,383.8 478.25,392.7 479.9,410.0 481,424.6" fill="none" stroke="#1dc2ca" stroke-width="1.1" stroke-linejoin="round" opacity="0.62" />
<polyline points="481,424.6 481.3,426.0 481.5,425.0" fill="none" stroke="#1dc2ca" stroke-width="1.3" stroke-linejoin="round" opacity="0.85" />
<polyline points="481.5,425.0 482.5,411.3" fill="none" stroke="#1dc2ca" stroke-width="1.1" stroke-linejoin="round" opacity="0.62" />
<polyline points="482.5,411.3 482.6,411.0 482.75,411.5" fill="none" stroke="#1dc2ca" stroke-width="1.3" stroke-linejoin="round" opacity="0.85" />
<polyline points="482.75,411.5 483.5,419.2" fill="none" stroke="#1dc2ca" stroke-width="1.1" stroke-linejoin="round" opacity="0.62" />
<polyline points="483.5,419.2 483.7,420.0 484,418.7" fill="none" stroke="#1dc2ca" stroke-width="1.3" stroke-linejoin="round" opacity="0.85" />
<polyline points="484,418.7 484.75,411.4" fill="none" stroke="#1dc2ca" stroke-width="1.1" stroke-linejoin="round" opacity="0.62" />
<polyline points="484.75,411.4 485,410.5 485.25,411.2 486,416.6 486.3,417.5 486.5,417.3 486.75,416.4 487.5,413.0 487.8,412.5" fill="none" stroke="#1dc2ca" stroke-width="1.3" stroke-linejoin="round" opacity="0.85" />
<polyline points="487.8,412.5 488,412.6" fill="none" stroke="#1dc2ca" stroke-width="3.0" stroke-linejoin="round" opacity="1" />
<polyline points="488,412.6 488.25,413.2 489,415.5 489.25,416.1 489.5,416.3" fill="none" stroke="#1dc2ca" stroke-width="1.3" stroke-linejoin="round" opacity="0.85" />
<polyline points="489.5,416.3 490,415.9" fill="none" stroke="#1dc2ca" stroke-width="3.0" stroke-linejoin="round" opacity="1" />
<polyline points="490,415.9 491,414.2" fill="none" stroke="#1dc2ca" stroke-width="1.3" stroke-linejoin="round" opacity="0.85" />
<polyline points="491,414.2 491.5,413.8 492,414.0 493.5,415.1 494,415.3 498,414.8 510,414.5 809.25,408.7 819.25,408.6 820,408.8 820.75,409.4" fill="none" stroke="#1dc2ca" stroke-width="3.0" stroke-linejoin="round" opacity="1" />
<polyline points="820.75,409.4 821.5,410.3 822.25,411.5 822.75,412.5 823.25,415.4" fill="none" stroke="#1dc2ca" stroke-width="1.3" stroke-linejoin="round" opacity="0.85" />
<polyline points="823.25,415.4 827,448.7 828.75,467.6 829.6,480.0 830.25,498.6 830.6,504.0" fill="none" stroke="#1dc2ca" stroke-width="1.1" stroke-linejoin="round" opacity="0.62" />
<polyline points="830.6,504.0 830.75,503.8 831,502.7" fill="none" stroke="#1dc2ca" stroke-width="1.3" stroke-linejoin="round" opacity="0.85" />
<polyline points="831,502.7 832,494.6" fill="none" stroke="#1dc2ca" stroke-width="1.1" stroke-linejoin="round" opacity="0.62" />
<polyline points="832,494.6 833.25,486.7 833.75,484.5 834.1,484.0 834.25,484.4" fill="none" stroke="#1dc2ca" stroke-width="1.3" stroke-linejoin="round" opacity="0.85" />
<polyline points="834.25,484.4 834.5,486.5 835.25,496.1" fill="none" stroke="#1dc2ca" stroke-width="1.1" stroke-linejoin="round" opacity="0.62" />
<polyline points="835.25,496.1 835.6,498.0 836,497.2 837,491.7 837.25,490.6 837.6,490.0 837.75,490.2 838,491.3 838.75,496.5 839.1,497.5 839.5,497.0 840.5,493.6 840.75,492.9 841.1,492.5 841.5,492.9 842.5,495.2 842.75,495.7 843.1,496.0" fill="none" stroke="#1dc2ca" stroke-width="1.3" stroke-linejoin="round" opacity="0.85" />
<polyline points="843.1,496.0 843.5,495.8" fill="none" stroke="#1dc2ca" stroke-width="3.0" stroke-linejoin="round" opacity="1" />
<polyline points="843.5,495.8 844.5,494.4" fill="none" stroke="#1dc2ca" stroke-width="1.3" stroke-linejoin="round" opacity="0.85" />
<polyline points="844.5,494.4 845.1,494.0 849.1,494.7 964.5,494.6" fill="none" stroke="#1dc2ca" stroke-width="3.0" stroke-linejoin="round" opacity="1" />
<polyline points="26.5,418.4 27,420.2 27.5,415.2 28,420.4 28.5,417.8 29,416.6 29.5,416.6 30,416.2 30.5,417.5 31,419.1 31.5,418.7 32,418.7 32.5,415.2 33,415.4 33.5,420.1 34,419.2 34.5,421.0 35,419.5 35.5,416.2 36,419.6 36.5,418.6 37,418.0 37.5,416.4 38,417.7 38.5,417.4 39,419.0 39.5,417.8 40,420.0 40.5,416.5 41,418.3 41.5,418.3 42,416.3 42.5,415.8 43,419.1 43.5,418.3 44,417.3 44.5,418.1 45,416.5 45.5,417.9 46,416.6 46.5,417.8 47,419.0 47.5,417.0 48,418.8 48.5,415.9 49,417.0 49.5,415.4 50,417.3 50.5,417.6 51,417.1 51.5,417.0 52,419.4 52.5,419.5 53,415.6 53.5,419.1 54,414.8 54.5,416.3 55,417.1 55.5,417.5 56,415.8 56.5,416.3 57,417.4 57.5,416.3 58,416.3 58.5,418.3 59,418.7 59.5,417.2 60,417.3 60.5,417.2 61,416.6 61.5,416.5 62,415.7 62.5,418.2 63,417.1 63.5,417.0 64,417.5 64.5,418.0 65,419.3 65.5,416.8 66,416.6 66.5,417.5 67,415.9 67.5,419.1 68,418.6 68.5,418.2 69,417.0 69.5,418.3 70,418.7 70.5,417.9 71,416.7 71.5,414.6 72,418.5 72.5,416.6 73,415.8 73.5,418.4 74,417.6 74.5,414.9 75,416.9 75.5,416.7 76,418.5 76.5,414.2 77,416.5 77.5,416.8 78,419.2 78.5,415.4 79,412.6 79.5,414.9 80,417.4 80.5,418.2 81,419.6 81.5,417.6 82,415.8 82.5,418.3 83,417.0 83.5,416.7 84,417.0 84.5,418.9 85,415.6 85.5,415.4 86,416.8 86.5,416.8 87,415.7 87.5,415.6 88,417.5 88.5,418.9 89,418.0 89.5,417.9 90,418.8 90.5,413.9 91,414.6 91.5,415.8 92,415.1 92.5,415.4 93,417.0 93.5,414.9 94,416.2 94.5,413.8 95,415.4 95.5,418.9 96,416.0 96.5,417.3 97,417.9 97.5,416.1 98,417.7 98.5,417.1 99,417.9 99.5,415.9 100,414.6 100.5,415.3 101,416.0 101.5,417.6 102,416.5 102.5,416.2 103,416.5 103.5,418.4 104,415.9 104.5,419.0 105,414.9 105.5,415.9 106,418.0 106.5,417.5 107,415.5 107.5,416.6 108,415.7 108.5,418.0 109,417.5 109.5,415.6 110,417.3 110.5,416.2 111,416.6 111.5,416.8 112,415.9 112.5,417.3 113,417.4 113.5,417.3 114,418.3 114.5,416.3 115,414.5 115.5,415.9 116,417.0 116.5,416.7 117,417.5 117.5,417.9 118,416.5 118.5,416.5 119,415.2 119.5,418.2 120,416.2 120.5,415.0 121,415.0 121.5,416.0 122,419.0 122.5,417.8 123,414.1 123.5,416.4 124,417.0 124.5,417.6 125,417.1 125.5,415.6 126,417.2 126.5,415.8 127,413.2 127.5,415.5 128,415.6 128.5,418.0 129,418.2 129.5,415.0 130,416.8 130.5,416.7 131,414.4 131.5,413.5 132,416.4 132.5,416.8 133,415.7 133.5,412.5 134,416.5 134.5,415.7 135,415.2 135.5,416.1 136,414.9 136.5,417.4 137,416.6 137.5,415.7 138,417.0 138.5,416.5 139,414.3 139.5,416.3 140,415.9 140.5,413.9 141,415.6 141.5,417.2 142,415.6 142.5,418.6 143,419.1 143.5,416.1 144,417.3 144.5,419.5 145,416.0 145.5,415.2 146,415.9 146.5,414.4 147,414.5 147.5,416.8 148,415.9 148.5,416.9 149,417.2 149.5,415.4 150,416.2 150.5,416.1 151,415.5 151.5,415.2 152,417.0 152.5,416.3 153,417.0 153.5,418.0 154,418.0 154.5,414.8 155,415.2 155.5,416.1 156,416.7 156.5,417.9 157,415.0 157.5,415.8 158,416.8 158.5,418.3 159,418.5 159.5,415.0 160,416.1 160.5,415.3 161,417.7 161.5,417.1 162,415.9 162.5,415.5 163,416.9 163.5,417.9 164,415.3 164.5,416.0 165,416.6 165.5,416.5 166,417.0 166.5,414.9 167,415.6 167.5,413.3 168,416.5 168.5,418.1 169,413.4 169.5,415.5 170,417.8 170.5,416.2 171,413.6 171.5,418.2 172,414.3 172.5,418.5 173,415.6 173.5,415.4 174,416.5 174.5,416.4 175,417.3 175.5,417.2 176,416.2 176.5,418.4 177,417.5 177.5,416.8 178,416.6 178.5,416.3 179,416.3 179.5,417.4 180,417.1 180.5,416.5 181,417.9 181.5,416.0 182,417.1 182.5,417.7 183,414.7 183.5,416.0 184,418.9 184.5,415.0 185,418.1 185.5,414.8 186,417.0 186.5,414.8 187,415.5 187.5,415.9 188,415.6 188.5,417.9 189,417.7 189.5,417.7 190,416.7 190.5,418.9 191,418.0 191.5,416.9 192,414.8 192.5,417.4 193,417.4 193.5,416.6 194,417.5 194.5,417.6 195,416.0 195.5,417.3 196,416.9 196.5,416.9 197,415.9 197.5,415.7 198,416.6 198.5,418.6 199,419.9 199.5,415.9 200,414.8 200.5,415.9 201,415.2 201.5,415.8 202,417.0 202.5,415.0 203,417.3 203.5,417.6 204,418.7 204.5,419.1 205,417.9 205.5,419.8 206,415.7 206.5,416.8 207,416.7 207.5,417.1 208,417.9 208.5,415.9 209,419.0 209.5,418.3 210,416.9 210.5,417.1 211,415.0 211.5,412.7 212,416.3 212.5,416.9 213,416.8 213.5,414.8 214,415.7 214.5,419.0 215,417.5 215.5,417.3 216,416.0 216.5,417.5 217,418.3 217.5,417.6 218,415.8 218.25,416.8 218.5,415.1 218.75,416.0 219,417.3 219.25,415.6 219.5,416.1 219.75,418.6 220,416.2 220.25,417.6 220.5,416.0 220.75,414.7 221,416.4 221.25,415.9 221.5,413.4 221.75,414.6 222,415.8 222.25,418.6 222.5,415.6 222.75,416.4 223,417.4 223.25,416.9 223.5,415.9 223.75,419.0 224,418.4 224.25,412.8 224.5,417.9 224.75,417.2 225,417.9 225.25,416.6 225.5,417.7 225.75,419.3 226,419.0 226.25,419.1 226.5,418.0 226.75,417.8 227,417.8 227.25,414.8 227.5,419.8 227.75,416.8 228,416.9 228.25,416.6 228.5,417.1 228.75,413.3 229,416.8 229.25,414.5 229.5,415.0 229.75,413.7 230,413.9 230.25,417.3 230.5,415.7 230.75,416.3 231,416.2 231.25,414.7 231.5,415.4 231.75,414.5 232,416.0 232.25,413.1 232.5,415.8 232.75,416.8 233,416.9 233.25,417.0 233.5,416.9 233.75,416.6 234,417.5 234.25,417.6 234.5,417.8 234.75,417.6 235,418.5 235.25,419.2 235.5,419.4 235.75,419.4 236,420.1 236.25,420.4 236.5,421.2 236.75,422.3" fill="none" stroke="#1dc2ca" stroke-width="1.1" stroke-linejoin="round" opacity="1" />
<polyline points="236.75,422.3 237,423.1 237.25,424.2 237.5,425.5 237.75,426.3 238,427.6 238.25,429.7 238.5,431.1 238.75,433.6 239,434.9 239.25,438.3 239.5,440.2 239.75,443.3 240,444.1 240.25,446.7 240.5,450.2 240.75,452.1 241,454.7 241.25,457.3 241.5,460.1 241.75,463.1 242,465.4" fill="none" stroke="#1dc2ca" stroke-width="1.1" stroke-linejoin="round" opacity="0.8" />
<polyline points="242,465.4 242.25,468.8 242.5,472.7 242.75,476.0 243,479.8 243.25,486.2 243.5,494.6 243.75,501.0" fill="none" stroke="#1dc2ca" stroke-width="1.1" stroke-linejoin="round" opacity="0.6" />
<polyline points="243.75,501.0 244,503.9" fill="none" stroke="#1dc2ca" stroke-width="1.1" stroke-linejoin="round" opacity="0.8" />
<polyline points="244,503.9 244.25,503.6" fill="none" stroke="#1dc2ca" stroke-width="1.1" stroke-linejoin="round" opacity="1" />
<polyline points="244.25,503.6 244.5,502.4 244.75,500.6 245,497.8 245.25,495.9 245.5,494.4 245.75,491.8 246,490.9 246.25,489.3 246.5,487.5 246.75,485.8 247,485.2" fill="none" stroke="#1dc2ca" stroke-width="1.1" stroke-linejoin="round" opacity="0.8" />
<polyline points="247,485.2 247.25,484.7 247.5,484.0" fill="none" stroke="#1dc2ca" stroke-width="1.1" stroke-linejoin="round" opacity="1" />
<polyline points="247.5,484.0 247.75,484.9 248,487.6" fill="none" stroke="#1dc2ca" stroke-width="1.1" stroke-linejoin="round" opacity="0.8" />
<polyline points="248,487.6 248.25,491.6 248.5,494.8" fill="none" stroke="#1dc2ca" stroke-width="1.1" stroke-linejoin="round" opacity="0.6" />
<polyline points="248.5,494.8 248.75,497.0 249,497.6" fill="none" stroke="#1dc2ca" stroke-width="1.1" stroke-linejoin="round" opacity="0.8" />
<polyline points="249,497.6 249.25,497.2 249.5,496.6" fill="none" stroke="#1dc2ca" stroke-width="1.1" stroke-linejoin="round" opacity="1" />
<polyline points="249.5,496.6 249.75,495.4 250,494.1 250.25,492.1 250.5,491.2" fill="none" stroke="#1dc2ca" stroke-width="1.1" stroke-linejoin="round" opacity="0.8" />
<polyline points="250.5,491.2 250.75,490.6 251,489.4 251.25,491.4" fill="none" stroke="#1dc2ca" stroke-width="1.1" stroke-linejoin="round" opacity="1" />
<polyline points="251.25,491.4 251.5,492.2 251.75,494.0 252,495.1 252.25,496.6" fill="none" stroke="#1dc2ca" stroke-width="1.1" stroke-linejoin="round" opacity="0.8" />
<polyline points="252.25,496.6 252.5,497.9 252.75,497.6 253,495.8 253.25,496.4 253.5,495.3 253.75,494.3 254,492.9 254.25,492.8 254.5,492.3 254.75,492.9 255,493.7 255.25,493.9 255.5,494.6 255.75,494.8 256,495.1 256.25,495.9 256.5,496.4 256.75,496.5 257,495.7 257.25,495.5 257.5,494.9 257.75,494.0 258,494.4 258.25,494.2 258.5,493.4 258.75,493.8 259,491.4 259.25,494.2 259.5,496.2 259.75,494.2 260,495.2 260.25,495.0 260.5,493.3 260.75,494.8 261,493.3 261.25,499.0 261.5,495.0 261.75,493.1 262,492.4 262.25,497.0 262.5,495.7 262.75,495.4 263,492.7 263.25,493.9 263.5,493.0 263.75,496.4 264,494.0 264.25,497.7 264.5,495.5 264.75,494.3 265,496.8 265.25,491.6 265.5,493.5 265.75,494.2 266,496.4 266.25,496.4 266.5,495.3 266.75,492.1 267,494.0 267.25,493.1 267.5,496.6 267.75,494.1 268,495.6 268.25,497.5 268.5,494.7 268.75,495.8 269,494.2 269.25,494.8 269.5,494.8 269.75,494.8 270,494.9 270.25,494.2 270.5,497.6 270.75,493.8 271,495.1 271.25,494.3 271.5,491.4 271.75,496.2 272,495.1 272.25,492.7 272.5,493.7 272.75,492.3 273,495.2 273.25,497.1 273.5,496.6 273.75,492.8 274,492.2 274.25,495.5 274.5,497.3 274.75,494.8 275,496.3 275.5,492.7 276,494.6 276.5,495.4 277,494.1 277.5,494.4 278,495.8 278.5,493.8 279,493.3 279.5,495.9 280,495.1 280.5,493.2 281,495.4 281.5,493.9 282,495.7 282.5,494.7 283,494.3 283.5,493.6 284,495.0 284.5,494.7 285,497.6 285.5,494.7 286,492.7 286.5,497.8 287,491.7 287.5,497.2 288,493.4 288.5,496.8 289,494.5 289.5,495.5 290,494.8 290.5,494.6 291,495.5 291.5,493.8 292,495.4 292.5,493.1 293,493.6 293.5,494.0 294,494.6 294.5,496.5 295,493.5 295.5,493.4 296,493.0 296.5,494.1 297,495.6 297.5,493.6 298,494.3 298.5,493.8 299,494.8 299.5,491.7 300,495.6 300.5,496.1 301,493.5 301.5,494.6 302,493.3 302.5,496.2 303,495.7 303.5,499.1 304,494.4 304.5,493.4 305,494.0 305.5,492.8 306,495.0 306.5,495.2 307,496.1 307.5,495.3 308,494.1 308.5,496.7 309,495.6 309.5,496.0 310,493.0 310.5,493.5 311,493.8 311.5,494.1 312,491.5 312.5,496.5 313,494.4 313.5,496.0 314,495.9 314.5,497.0 315,495.6 315.5,495.3 316,493.6 316.5,494.9 317,497.4 317.5,492.1 318,493.7 318.5,495.2 319,497.2 319.5,493.1 320,494.1 320.5,495.0 321,499.4 321.5,493.5 322,494.6 322.5,495.9 323,493.7 323.5,495.4 324,495.4 324.5,494.3 325,495.3 325.5,497.4 326,495.0 326.5,494.2 327,493.7 327.5,495.2 328,496.4 328.5,495.0 329,495.3 329.5,498.8 330,493.7 330.5,493.2 331,495.2 331.5,494.5 332,495.7 332.5,496.7 333,495.4 333.5,494.5 334,495.6 334.5,495.6 335,494.7 335.5,494.0 336,495.8 336.5,494.5 337,493.1 337.5,495.8 338,494.0 338.5,494.0 339,495.8 339.5,493.6 340,494.6 340.5,493.3 341,492.5 341.5,495.3 342,497.1 342.5,493.5 343,496.5 343.5,496.4 344,497.1 344.5,493.2 345,493.8 345.5,497.3 346,494.7 346.5,494.8 347,495.9 347.5,495.7 348,494.0 348.5,494.5 349,495.8 349.5,495.2 350,493.7 350.5,496.7 351,496.1 351.5,494.3 352,494.0 352.5,496.2 353,491.2 353.5,495.0 354,493.9 354.5,493.8 355,496.2 355.5,495.3 356,499.4 356.5,494.5 357,495.4 357.5,492.8 358,496.4 358.5,494.0 359,495.2 359.5,496.8 360,496.6 360.5,495.6 361,496.8 361.5,494.2 362,493.5 362.5,492.6 363,495.7 363.5,497.8 364,494.4 364.5,494.9 365,494.4 365.5,495.6 366,492.1 366.5,496.1 367,496.5 367.5,493.8 368,493.3 368.5,493.5 369,495.7 369.5,497.0 370,493.4 370.5,492.5 371,495.0 371.5,495.2 372,495.9 372.5,493.8 373,495.9 373.5,496.5 374,492.4 374.5,494.4 375,495.7 375.5,496.0 376,494.0 376.5,491.9 377,493.6 377.5,492.7 378,494.0 378.5,496.3 379,493.8 379.5,494.9 380,493.0 380.5,496.2 381,493.8 381.5,493.2 382,497.6 382.5,495.3 383,495.8 383.5,491.8 384,496.9 384.5,497.3 385,494.6 385.5,494.3 386,493.9 386.5,496.4 387,492.4 387.5,495.2 388,497.7 388.5,495.0 389,497.7 389.5,494.8 390,494.3 390.5,496.1 391,494.6 391.5,494.9 392,494.1 392.5,492.9 393,494.3 393.5,495.8 394,496.4 394.5,494.6 395,495.2 395.5,493.3 396,494.5 396.5,494.5 397,494.5 397.5,494.8 398,495.3 398.5,496.6 399,495.9 399.5,495.5 400,492.9 400.5,493.5 401,494.8 401.5,494.9 402,495.8 402.5,492.1 403,495.0 403.5,494.9 404,494.2 404.5,493.6 405,495.1 405.5,494.5 406,495.4 406.5,491.7 407,493.4 407.5,497.0 408,495.1 408.5,493.6 409,494.3 409.5,492.8 410,496.9 410.5,496.9 411,496.1 411.5,496.5 412,495.4 412.5,496.7 413,495.7 413.5,496.9 414,494.7 414.5,494.6 415,493.9 415.5,494.0 416,492.4 416.5,496.7 417,496.8 417.5,495.8 418,496.2 418.5,495.1 419,495.5 419.5,492.7 420,494.6 420.5,492.1 421,493.7 421.5,494.3 422,494.3 422.5,493.2 423,496.6 423.5,496.2 424,494.0 424.5,492.9 425,494.0 425.5,496.1 426,491.9 426.5,495.9 427,494.5 427.5,494.1 428,496.2 428.5,494.7 429,494.2 429.5,496.6 430,492.4 430.5,497.1 431,493.5 431.5,493.5 432,497.1 432.5,499.7 433,496.5 433.5,493.5 434,491.5 434.5,495.1 435,494.7 435.5,493.8 436,494.5 436.5,493.7 437,496.0 437.5,494.6 438,494.4 438.5,491.4 439,495.1 439.5,492.5 440,495.8 440.5,494.6 441,491.7 441.5,494.2 442,492.9 442.5,495.5 443,495.3 443.5,496.2 444,493.5 444.5,495.4 445,492.6 445.5,495.1 446,494.3 446.5,495.0 447,494.6 447.5,496.2 448,494.1 448.5,494.4 449,496.7 449.5,494.5 450,493.9 450.5,493.3 451,494.7 451.5,494.6 452,495.6 452.25,494.4 452.5,495.7 452.75,494.2 453,497.0 453.25,494.6 453.5,495.6 453.75,495.2 454,492.7 454.25,496.2 454.5,494.0 454.75,496.0 455,491.7 455.25,491.9 455.5,491.6 455.75,491.9 456,494.0 456.25,494.5 456.5,493.1 456.75,494.1 457,493.6 457.25,495.7 457.5,495.6 457.75,495.0 458,495.5 458.25,495.2 458.5,494.8 458.6,494.0 458.75,494.2" fill="none" stroke="#1dc2ca" stroke-width="1.1" stroke-linejoin="round" opacity="1" />
<polyline points="458.75,494.2 459,493.1 459.25,492.0 459.5,490.2 459.75,488.7 460,485.9 460.25,485.0 460.5,482.2 460.75,480.3 461,477.6 461.25,474.5 461.5,471.8 461.75,469.6 462,466.9 462.25,463.2 462.5,460.2 462.75,456.8" fill="none" stroke="#1dc2ca" stroke-width="1.1" stroke-linejoin="round" opacity="0.8" />
<polyline points="462.75,456.8 463,454.3" fill="none" stroke="#1dc2ca" stroke-width="1.1" stroke-linejoin="round" opacity="0.6" />
<polyline points="463,454.3 463.25,451.3 463.5,448.5 463.75,445.9 464,442.6 464.25,439.5 464.5,437.0 464.75,434.5 465,432.0 465.2,430.1 465.25,429.5 465.5,427.3 465.75,424.4 466,421.5 466.25,419.1 466.5,417.0 466.75,413.2 467,411.6 467.25,407.6 467.5,405.2 467.75,401.4 468,399.1 468.25,396.8 468.5,393.0 468.75,390.3 469,388.0 469.25,385.3 469.5,382.1 469.75,379.7 470,377.8 470.25,375.6 470.5,373.6 470.75,371.2 471,369.7 471.25,368.2 471.5,365.8 471.75,365.3 472,364.0" fill="none" stroke="#1dc2ca" stroke-width="1.1" stroke-linejoin="round" opacity="0.8" />
<polyline points="472,364.0 472.25,363.3 472.5,362.0 472.75,361.6 473,361.5 473.1,361.2 473.25,361.8 473.5,361.8 473.75,361.9 474,363.2 474.25,363.7" fill="none" stroke="#1dc2ca" stroke-width="1.1" stroke-linejoin="round" opacity="1" />
<polyline points="474.25,363.7 474.5,364.7 474.75,366.2 475,368.0 475.25,369.6 475.5,371.2 475.75,373.2 476,375.5 476.25,376.2 476.5,378.6 476.75,380.3 477,381.6 477.25,383.6 477.5,385.9 477.75,388.0 478,390.0 478.25,393.0 478.5,395.3 478.75,398.0 479,401.0 479.25,402.6 479.5,406.1 479.75,408.6 479.9,409.7 480,411.1" fill="none" stroke="#1dc2ca" stroke-width="1.1" stroke-linejoin="round" opacity="0.8" />
<polyline points="480,411.1 480.25,414.4 480.5,417.9 480.75,422.2" fill="none" stroke="#1dc2ca" stroke-width="1.1" stroke-linejoin="round" opacity="0.6" />
<polyline points="480.75,422.2 481,424.4 481.25,425.2" fill="none" stroke="#1dc2ca" stroke-width="1.1" stroke-linejoin="round" opacity="0.8" />
<polyline points="481.25,425.2 481.3,426.3" fill="none" stroke="#1dc2ca" stroke-width="1.1" stroke-linejoin="round" opacity="1" />
<polyline points="481.3,426.3 481.5,424.9" fill="none" stroke="#1dc2ca" stroke-width="1.1" stroke-linejoin="round" opacity="0.8" />
<polyline points="481.5,424.9 481.75,422.0 482,417.7 482.25,413.6" fill="none" stroke="#1dc2ca" stroke-width="1.1" stroke-linejoin="round" opacity="0.6" />
<polyline points="482.25,413.6 482.5,411.1" fill="none" stroke="#1dc2ca" stroke-width="1.1" stroke-linejoin="round" opacity="0.8" />
<polyline points="482.5,411.1 482.6,410.1 482.75,411.3" fill="none" stroke="#1dc2ca" stroke-width="1.1" stroke-linejoin="round" opacity="1" />
<polyline points="482.75,411.3 483,412.0" fill="none" stroke="#1dc2ca" stroke-width="1.1" stroke-linejoin="round" opacity="0.8" />
<polyline points="483,412.0 483.25,417.5" fill="none" stroke="#1dc2ca" stroke-width="1.1" stroke-linejoin="round" opacity="0.6" />
<polyline points="483.25,417.5 483.5,418.1" fill="none" stroke="#1dc2ca" stroke-width="1.1" stroke-linejoin="round" opacity="0.8" />
<polyline points="483.5,418.1 483.7,419.0 483.75,420.1" fill="none" stroke="#1dc2ca" stroke-width="1.1" stroke-linejoin="round" opacity="1" />
<polyline points="483.75,420.1 484,417.0 484.25,415.3 484.5,412.9 484.75,412.0" fill="none" stroke="#1dc2ca" stroke-width="1.1" stroke-linejoin="round" opacity="0.8" />
<polyline points="484.75,412.0 485,408.4 485.25,412.3" fill="none" stroke="#1dc2ca" stroke-width="1.1" stroke-linejoin="round" opacity="1" />
<polyline points="485.25,412.3 485.5,412.6 485.75,414.1 486,417.0" fill="none" stroke="#1dc2ca" stroke-width="1.1" stroke-linejoin="round" opacity="0.8" />
<polyline points="486,417.0 486.25,418.9 486.3,419.2 486.5,415.7 486.75,418.4" fill="none" stroke="#1dc2ca" stroke-width="1.1" stroke-linejoin="round" opacity="1" />
<polyline points="486.75,418.4 487,415.3 487.25,415.9 487.5,411.5" fill="none" stroke="#1dc2ca" stroke-width="1.1" stroke-linejoin="round" opacity="0.8" />
<polyline points="487.5,411.5 487.75,412.3 487.8,412.3 488,410.8 488.25,412.5 488.5,415.2 488.75,416.4 489,416.5 489.25,416.5 489.5,415.6 489.75,419.2 490,413.9 490.25,413.7 490.5,413.9 490.75,414.8 491,413.5 491.25,415.0 491.5,411.5 491.75,415.0 492,416.5 492.25,415.4 492.5,413.9 492.75,413.7 493,416.3 493.25,412.5 493.5,414.0 493.75,412.8 494,415.1 494.25,418.0 494.5,414.6 494.75,416.8 495,413.6 495.25,414.4 495.5,414.3 495.75,416.6 496,413.8 496.25,414.0 496.5,415.0 496.75,417.2 497,415.0 497.25,417.4 497.5,415.4 497.75,414.4 498,416.5 498.25,413.9 498.5,413.4 498.75,414.9 499,412.5 499.25,413.0 499.5,413.6 499.75,414.8 500,416.2 500.5,416.4 501,414.4 501.5,415.0 502,414.2 502.5,412.6 503,415.3 503.5,413.6 504,415.7 504.5,413.8 505,413.1 505.5,415.1 506,413.8 506.5,412.7 507,416.1 507.5,415.0 508,415.0 508.5,414.7 509,413.7 509.5,410.4 510,413.7 510.5,413.9 511,415.1 511.5,412.6 512,415.2 512.5,414.5 513,416.6 513.5,413.4 514,414.4 514.5,414.8 515,415.3 515.5,416.3 516,415.1 516.5,412.3 517,416.8 517.5,411.5 518,415.3 518.5,416.3 519,413.3 519.5,414.3 520,414.2 520.5,412.7 521,414.9 521.5,412.9 522,414.8 522.5,415.2 523,415.9 523.5,416.3 524,414.9 524.5,415.0 525,413.9 525.5,414.1 526,415.5 526.5,415.4 527,414.9 527.5,414.2 528,415.7 528.5,412.5 529,413.4 529.5,414.5 530,415.8 530.5,412.3 531,412.6 531.5,412.4 532,415.2 532.5,415.3 533,416.3 533.5,417.4 534,412.3 534.5,413.8 535,413.3 535.5,412.5 536,414.1 536.5,413.2 537,414.2 537.5,413.5 538,411.9 538.5,414.9 539,414.8 539.5,413.3 540,410.8 540.5,410.6 541,411.9 541.5,414.5 542,414.9 542.5,414.0 543,414.0 543.5,410.2 544,414.4 544.5,412.9 545,413.5 545.5,412.4 546,410.9 546.5,414.9 547,414.4 547.5,412.3 548,411.5 548.5,412.9 549,415.1 549.5,414.6 550,413.8 550.5,415.1 551,414.2 551.5,412.3 552,414.7 552.5,413.6 553,412.5 553.5,415.4 554,414.3 554.5,411.6 555,414.8 555.5,413.9 556,413.1 556.5,413.0 557,412.1 557.5,411.5 558,414.0 558.5,414.3 559,413.1 559.5,414.0 560,413.0 560.5,413.0 561,414.3 561.5,414.3 562,415.6 562.5,412.9 563,414.0 563.5,413.3 564,413.8 564.5,415.3 565,414.1 565.5,412.3 566,412.8 566.5,412.6 567,413.1 567.5,412.5 568,412.7 568.5,413.2 569,413.9 569.5,412.2 570,413.5 570.5,413.4 571,414.6 571.5,413.7 572,414.1 572.5,413.7 573,415.0 573.5,413.1 574,411.2 574.5,413.8 575,411.9 575.5,410.1 576,413.9 576.5,413.2 577,413.5 577.5,413.9 578,412.9 578.5,414.7 579,413.3 579.5,412.7 580,413.2 580.5,410.2 581,413.9 581.5,411.0 582,413.7 582.5,412.9 583,413.2 583.5,411.9 584,415.5 584.5,410.1 585,412.9 585.5,411.8 586,410.8 586.5,415.1 587,413.3 587.5,416.5 588,414.1 588.5,413.7 589,413.8 589.5,411.1 590,411.1 590.5,415.0 591,414.1 591.5,411.9 592,413.1 592.5,413.2 593,414.7 593.5,413.4 594,411.9 594.5,414.1 595,412.1 595.5,413.7 596,412.1 596.5,408.4 597,415.2 597.5,411.5 598,414.3 598.5,413.7 599,412.1 599.5,411.2 600,415.6 600.5,413.2 601,414.6 601.5,413.3 602,414.1 602.5,413.1 603,411.0 603.5,411.7 604,413.3 604.5,411.1 605,412.3 605.5,412.6 606,414.3 606.5,415.0 607,409.8 607.5,413.3 608,415.3 608.5,410.7 609,411.1 609.5,414.3 610,412.9 610.5,411.9 611,412.9 611.5,413.7 612,412.8 612.5,413.2 613,412.9 613.5,413.2 614,412.9 614.5,413.2 615,412.4 615.5,414.2 616,412.2 616.5,411.9 617,410.6 617.5,411.5 618,412.8 618.5,412.3 619,413.4 619.5,410.9 620,411.7 620.5,409.7 621,412.1 621.5,413.9 622,413.2 622.5,411.9 623,413.2 623.5,412.9 624,411.2 624.5,411.0 625,411.1 625.5,413.1 626,413.2 626.5,413.0 627,412.0 627.5,415.1 628,412.1 628.5,413.1 629,412.6 629.5,413.8 630,409.9 630.5,413.1 631,412.0 631.5,412.2 632,410.8 632.5,411.2 633,414.0 633.5,413.5 634,410.2 634.5,412.6 635,411.5 635.5,413.7 636,412.9 636.5,413.3 637,412.1 637.5,412.3 638,411.2 638.5,410.0 639,411.3 639.5,413.9 640,414.0 640.5,410.9 641,410.9 641.5,411.0 642,411.0 642.5,410.4 643,411.1 643.5,413.0 644,413.1 644.5,414.4 645,411.8 645.5,408.9 646,411.2 646.5,410.4 647,411.4 647.5,410.9 648,413.3 648.5,410.7 649,411.9 649.5,414.4 650,411.8 650.5,409.5 651,413.1 651.5,412.5 652,412.6 652.5,412.8 653,410.4 653.5,410.4 654,412.0 654.5,409.4 655,410.6 655.5,413.4 656,409.9 656.5,412.2 657,413.2 657.5,411.6 658,411.1 658.5,413.5 659,409.7 659.5,414.0 660,410.4 660.5,411.7 661,410.1 661.5,410.1 662,413.0 662.5,411.7 663,412.3 663.5,409.7 664,411.1 664.5,409.8 665,411.5 665.5,412.2 666,412.2 666.5,412.3 667,410.6 667.5,412.3 668,410.9 668.5,413.4 669,411.2 669.5,413.2 670,410.9 670.5,412.4 671,411.8 671.5,409.3 672,412.4 672.5,410.1 673,408.9 673.5,411.6 674,413.0 674.5,412.4 675,410.2 675.5,408.9 676,407.5 676.5,410.4 677,410.6 677.5,411.1 678,413.1 678.5,411.0 679,409.7 679.5,409.7 680,409.9 680.5,410.3 681,411.7 681.5,410.8 682,411.1 682.5,411.4 683,411.5 683.5,412.1 684,412.8 684.5,409.8 685,410.7 685.5,411.0 686,410.9 686.5,412.3 687,412.2 687.5,410.2 688,413.5 688.5,411.8 689,412.1 689.5,410.2 690,412.2 690.5,410.6 691,409.7 691.5,411.2 692,409.6 692.5,409.5 693,411.7 693.5,412.1 694,410.0 694.5,412.4 695,412.7 695.5,412.6 696,411.5 696.5,410.5 697,413.1 697.5,410.4 698,411.6 698.5,412.5 699,413.4 699.5,411.4 700,411.3 700.5,411.7 701,411.2 701.5,412.5 702,412.4 702.5,413.4 703,410.8 703.5,411.9 704,409.9 704.5,410.3 705,412.9 705.5,410.5 706,408.2 706.5,410.1 707,410.1 707.5,408.2 708,411.1 708.5,412.0 709,410.0 709.5,412.2 710,407.8 710.5,411.8 711,410.7 711.5,413.9 712,410.8 712.5,410.7 713,410.7 713.5,410.2 714,410.1 714.5,411.7 715,411.1 715.5,411.1 716,411.0 716.5,409.7 717,413.3 717.5,409.2 718,411.9 718.5,410.4 719,412.1 719.5,410.3 720,412.1 720.5,411.3 721,412.2 721.5,413.4 722,410.9 722.5,410.8 723,407.2 723.5,410.6 724,411.8 724.5,410.2 725,410.6 725.5,410.3 726,407.8 726.5,411.7 727,409.5 727.5,408.6 728,411.8 728.5,411.0 729,411.2 729.5,410.6 730,409.5 730.5,411.7 731,409.2 731.5,410.8 732,409.0 732.5,408.8 733,411.5 733.5,409.3 734,412.6 734.5,408.5 735,411.8 735.5,409.9 736,411.4 736.5,411.3 737,407.7 737.5,411.1 738,409.8 738.5,409.0 739,411.7 739.5,410.8 740,410.8 740.5,412.2 741,411.7 741.5,410.4 742,409.1 742.5,412.3 743,409.3 743.5,407.9 744,412.9 744.5,413.1 745,407.9 745.5,410.7 746,408.2 746.5,411.0 747,409.5 747.5,408.2 748,411.4 748.5,408.9 749,410.6 749.5,409.1 750,412.5 750.5,411.6 751,409.4 751.5,407.0 752,410.5 752.5,408.7 753,411.7 753.5,412.2 754,410.0 754.5,411.2 755,408.1 755.5,410.8 756,412.2 756.5,408.0 757,410.9 757.5,410.2 758,411.1 758.5,410.0 759,409.7 759.5,411.5 760,409.9 760.5,410.5 761,407.9 761.5,410.3 762,410.7 762.5,409.6 763,409.7 763.5,406.9 764,408.3 764.5,409.3 765,409.3 765.5,412.8 766,410.8 766.5,408.0 767,412.9 767.5,407.7 768,408.0 768.5,408.4 769,409.6 769.5,413.3 770,409.2 770.5,410.4 771,407.5 771.5,409.0 772,413.2 772.5,411.4 773,410.9 773.5,411.7 774,410.4 774.5,410.3 775,408.0 775.5,407.4 776,408.6 776.5,409.0 777,408.4 777.5,410.5 778,412.1 778.5,409.5 779,407.2 779.5,407.7 780,410.9 780.5,410.6 781,409.8 781.5,410.3 782,411.0 782.5,409.5 783,409.8 783.5,408.9 784,406.5 784.5,409.5 785,409.3 785.5,409.9 786,408.5 786.5,409.9 787,409.8 787.5,408.7 788,407.8 788.5,408.3 789,409.7 789.5,410.5 790,411.8 790.5,409.1 791,409.9 791.5,410.9 792,407.7 792.5,410.1 793,408.5 793.5,408.6 794,410.2 794.5,408.8 795,409.6 795.5,407.5 796,409.0 796.5,407.8 797,408.6 797.5,413.2 798,409.1 798.5,408.7 799,408.4 799.5,407.9 800,411.6 800.5,408.0 801,412.4 801.5,408.6 802,410.7 802.5,409.1 803,408.0 803.5,408.6 804,410.8 804.25,408.6 804.5,406.1 804.75,411.6 805,407.8 805.25,408.4 805.5,411.0 805.75,406.4 806,408.1 806.25,409.8 806.5,409.8 806.75,409.7 807,407.4 807.25,410.2 807.5,408.2 807.75,409.1 808,407.4 808.25,411.4 808.5,408.3 808.75,408.7 809,408.0 809.25,409.4 809.5,406.8 809.75,408.6 810,408.4 810.25,411.2 810.5,408.3 810.75,408.5 811,409.0 811.25,410.3 811.5,411.8 811.75,409.4 812,409.5 812.25,411.2 812.5,408.9 812.75,409.4 813,407.9 813.25,408.6 813.5,407.6 813.75,412.0 814,409.9 814.25,409.8 814.5,407.3 814.75,408.9 815,407.7 815.25,407.7 815.5,406.7 815.75,407.8 816,412.7 816.25,407.8 816.5,409.8 816.75,410.2 817,409.4 817.25,409.9 817.5,407.2 817.75,411.1 818,411.9 818.25,408.8 818.5,407.7 818.75,407.5 819,406.7 819.1,409.6 819.25,409.0 819.5,409.3 819.75,408.3 820,409.2 820.25,409.3 820.5,409.1 820.75,409.1 821,409.8 821.25,410.8 821.5,409.8 821.75,410.5 822,410.9 822.25,411.4 822.5,412.3 822.6,411.9 822.75,411.7" fill="none" stroke="#1dc2ca" stroke-width="1.1" stroke-linejoin="round" opacity="1" />
<polyline points="822.75,411.7 823,413.3 823.25,415.0 823.5,417.7 823.75,420.0 824,422.0 824.25,425.1 824.5,426.5 824.6,427.9 824.75,429.7 825,430.7 825.25,433.6 825.5,435.8 825.75,437.4 826,439.7 826.25,441.3 826.5,444.2 826.6,444.6 826.75,446.2 827,448.9 827.25,451.0 827.5,453.2 827.75,456.2 828,458.8 828.1,459.7 828.25,461.0 828.5,464.5" fill="none" stroke="#1dc2ca" stroke-width="1.1" stroke-linejoin="round" opacity="0.8" />
<polyline points="828.5,464.5 828.75,467.9 829,470.6 829.25,474.2 829.5,478.1 829.6,480.2 829.75,482.8 830,491.3 830.25,499.4 830.5,503.7" fill="none" stroke="#1dc2ca" stroke-width="1.1" stroke-linejoin="round" opacity="0.6" />
<polyline points="830.5,503.7 830.6,504.0" fill="none" stroke="#1dc2ca" stroke-width="1.1" stroke-linejoin="round" opacity="0.8" />
<polyline points="830.6,504.0 830.75,504.0" fill="none" stroke="#1dc2ca" stroke-width="1.1" stroke-linejoin="round" opacity="1" />
<polyline points="830.75,504.0 831,502.9 831.25,500.8 831.5,498.7 831.75,496.5 832,494.8 832.1,494.7 832.25,493.2 832.5,492.3 832.75,489.5 833,488.5 833.25,486.4 833.5,485.5" fill="none" stroke="#1dc2ca" stroke-width="1.1" stroke-linejoin="round" opacity="0.8" />
<polyline points="833.5,485.5 833.75,484.5 834,483.3 834.1,483.9 834.25,484.6" fill="none" stroke="#1dc2ca" stroke-width="1.1" stroke-linejoin="round" opacity="1" />
<polyline points="834.25,484.6 834.5,486.6" fill="none" stroke="#1dc2ca" stroke-width="1.1" stroke-linejoin="round" opacity="0.8" />
<polyline points="834.5,486.6 834.75,489.1 835,492.5" fill="none" stroke="#1dc2ca" stroke-width="1.1" stroke-linejoin="round" opacity="0.6" />
<polyline points="835,492.5 835.25,496.3 835.5,497.5" fill="none" stroke="#1dc2ca" stroke-width="1.1" stroke-linejoin="round" opacity="0.8" />
<polyline points="835.5,497.5 835.6,498.8 835.75,498.0 836,497.3" fill="none" stroke="#1dc2ca" stroke-width="1.1" stroke-linejoin="round" opacity="1" />
<polyline points="836,497.3 836.25,496.0 836.5,494.3 836.75,493.2 837,491.7 837.25,491.2" fill="none" stroke="#1dc2ca" stroke-width="1.1" stroke-linejoin="round" opacity="0.8" />
<polyline points="837.25,491.2 837.5,490.1 837.6,490.1 837.75,490.6" fill="none" stroke="#1dc2ca" stroke-width="1.1" stroke-linejoin="round" opacity="1" />
<polyline points="837.75,490.6 838,491.7 838.25,492.3 838.5,495.6 838.75,495.9" fill="none" stroke="#1dc2ca" stroke-width="1.1" stroke-linejoin="round" opacity="0.8" />
<polyline points="838.75,495.9 839,497.0 839.1,497.4 839.25,497.1 839.5,497.7 839.75,496.3 840,495.0 840.25,494.3 840.5,493.3 840.75,492.7 841,492.7 841.1,492.7 841.25,492.5 841.5,492.4 841.75,493.1 842,494.3 842.25,494.9 842.5,495.1 842.75,496.0 843,495.3 843.1,495.8 843.25,496.0 843.5,495.9 843.75,495.9 844,495.2 844.25,494.9 844.5,494.5 844.75,493.8 845,494.0 845.1,496.2 845.25,495.1 845.5,493.6 845.75,494.1 846,496.7 846.25,496.6 846.5,497.1 846.75,496.3 847,494.2 847.25,494.2 847.5,492.1 847.75,496.5 848,496.5 848.25,498.0 848.5,493.6 848.75,497.4 849,495.6 849.1,495.0 849.25,495.2 849.5,493.1 849.75,494.7 850,493.3 850.25,494.1 850.5,495.2 850.75,494.1 851,495.9 851.25,493.8 851.5,494.0 851.75,494.0 852,495.1 852.25,495.2 852.5,496.3 852.75,494.4 853,493.9 853.25,495.3 853.5,497.5 853.75,496.2 854,492.1 854.25,495.0 854.5,494.3 854.75,494.6 855,496.1 855.25,495.0 855.5,494.7 855.75,492.5 856,494.7 856.25,493.8 856.5,495.3 856.75,496.5 857,493.6 857.25,494.5 857.5,495.8 857.75,492.5 858,493.8 858.25,492.7 858.5,494.0 858.75,494.7 859,494.4 859.25,497.0 859.5,496.1 859.75,495.2 860,496.6 860.25,497.7 860.5,494.3 860.75,494.6 861,495.4 861.25,496.5 861.5,491.9 861.75,494.8 862,498.9 862.5,495.0 863,497.8 863.5,498.6 864,496.1 864.5,498.4 865,495.0 865.5,492.3 866,494.2 866.5,497.2 867,499.0 867.5,495.8 868,492.5 868.5,495.0 869,491.9 869.5,495.1 870,497.4 870.5,493.6 871,493.6 871.5,494.2 872,494.4 872.5,495.8 873,495.5 873.5,496.1 874,493.4 874.5,496.8 875,495.9 875.5,493.6 876,494.2 876.5,494.0 877,492.3 877.5,497.9 878,495.9 878.5,495.0 879,496.7 879.5,494.7 880,494.7 880.5,496.9 881,493.4 881.5,493.6 882,492.4 882.5,493.9 883,496.5 883.5,494.1 884,497.3 884.5,494.1 885,495.2 885.5,493.3 886,496.0 886.5,498.0 887,494.5 887.5,492.5 888,494.8 888.5,496.0 889,493.6 889.5,497.8 890,492.9 890.5,495.8 891,497.1 891.5,495.3 892,496.8 892.5,495.6 893,494.3 893.5,494.2 894,497.7 894.5,492.2 895,495.2 895.5,493.6 896,494.2 896.5,496.2 897,493.5 897.5,492.5 898,496.7 898.5,496.8 899,494.9 899.5,493.5 900,493.3 900.5,495.3 901,495.5 901.5,495.6 902,495.8 902.5,494.8 903,495.7 903.5,494.7 904,495.4 904.5,494.4 905,495.2 905.5,493.3 906,494.4 906.5,493.0 907,495.6 907.5,493.9 908,493.7 908.5,493.8 909,493.4 909.5,493.3 910,495.6 910.5,495.5 911,496.1 911.5,493.8 912,495.1 912.5,491.7 913,496.1 913.5,493.2 914,496.7 914.5,495.8 915,497.9 915.5,495.5 916,493.7 916.5,498.1 917,496.7 917.5,496.5 918,497.5 918.5,494.7 919,491.2 919.5,494.5 920,493.9 920.5,495.8 921,494.2 921.5,495.7 922,493.5 922.5,496.5 923,495.8 923.5,493.7 924,496.9 924.5,497.1 925,495.7 925.5,493.9 926,495.4 926.5,495.0 927,494.1 927.5,494.7 928,494.6 928.5,492.7 929,494.7 929.5,493.2 930,494.7 930.5,494.5 931,496.1 931.5,494.0 932,495.0 932.5,492.5 933,496.5 933.5,498.1 934,494.6 934.5,495.6 935,495.8 935.5,494.5 936,496.2 936.5,494.0 937,494.6 937.5,494.7 938,493.8 938.5,492.6 939,496.3 939.5,494.9 940,493.6 940.5,493.0 941,494.5 941.5,493.2 942,495.6 942.5,494.8 943,495.4 943.5,496.3 944,495.0 944.5,495.7 945,496.5 945.5,495.5 946,491.3 946.5,496.5 947,495.1 947.5,495.6 948,497.1 948.5,494.4 949,495.5 949.5,491.5 950,497.0 950.5,494.6 951,494.4 951.5,494.3 952,495.6 952.5,491.9 953,497.6 953.5,494.9 954,494.6 954.5,496.9 955,496.1 955.5,495.5 956,493.3 956.5,496.4 957,495.1 957.5,493.5 958,494.4 958.5,495.1 959,493.6 959.5,496.0 960,493.9 960.5,496.1 961,495.1 961.5,495.4 962,493.2 962.5,494.8 963,495.6 963.5,495.2 964,494.1 964.5,495.2" fill="none" stroke="#1dc2ca" stroke-width="1.1" stroke-linejoin="round" opacity="1" />
<polyline points="26.5,259.8 218.5,259.8" fill="none" stroke="#f8f21e" stroke-width="1.9" stroke-linejoin="round" opacity="1" />
<polyline points="218.5,259.8 218.75,260.8" fill="none" stroke="#f8f21e" stroke-width="1.1" stroke-linejoin="round" opacity="0.7" />
<polyline points="218.75,260.8 219.25,266.9 220.75,292.7 223.25,341.1 225.25,373.0 226.25,384.8" fill="none" stroke="#f8f21e" stroke-width="1.0" stroke-linejoin="round" opacity="0.45" />
<polyline points="226.25,384.8 226.75,387.6 227,388.0 228,386.5 228.25,387.0 229.25,393.5 230.5,400.1 231.25,403.8 232,406.2 232.25,406.6" fill="none" stroke="#f8f21e" stroke-width="1.1" stroke-linejoin="round" opacity="0.7" />
<polyline points="232.25,406.6 232.5,406.8 237.75,407.1 238,407.1" fill="none" stroke="#f8f21e" stroke-width="1.9" stroke-linejoin="round" opacity="1" />
<polyline points="238,407.1 238.25,407.4 238.75,409.3 240,417.3 241.5,429.7 241.75,430.9 242,431.3 242.25,429.9" fill="none" stroke="#f8f21e" stroke-width="1.1" stroke-linejoin="round" opacity="0.7" />
<polyline points="242.25,429.9 242.5,426.2 243.5,404.3 244.75,382.4 245.5,374.0" fill="none" stroke="#f8f21e" stroke-width="1.0" stroke-linejoin="round" opacity="0.45" />
<polyline points="245.5,374.0 245.75,372.1 246,371.3 246.25,373.3" fill="none" stroke="#f8f21e" stroke-width="1.1" stroke-linejoin="round" opacity="0.7" />
<polyline points="246.25,373.3 248.25,412.8 249,422.3" fill="none" stroke="#f8f21e" stroke-width="1.0" stroke-linejoin="round" opacity="0.45" />
<polyline points="249,422.3 249.3,423.3 249.5,422.6" fill="none" stroke="#f8f21e" stroke-width="1.1" stroke-linejoin="round" opacity="0.7" />
<polyline points="249.5,422.6 249.75,419.9 250.75,402.1 251,398.9" fill="none" stroke="#f8f21e" stroke-width="1.0" stroke-linejoin="round" opacity="0.45" />
<polyline points="251,398.9 251.3,397.3 251.5,398.4" fill="none" stroke="#f8f21e" stroke-width="1.1" stroke-linejoin="round" opacity="0.7" />
<polyline points="251.5,398.4 251.75,402.3 252.75,427.3 253,431.2" fill="none" stroke="#f8f21e" stroke-width="1.0" stroke-linejoin="round" opacity="0.45" />
<polyline points="253,431.2 253.2,432.3 253.5,430.9" fill="none" stroke="#f8f21e" stroke-width="1.1" stroke-linejoin="round" opacity="0.7" />
<polyline points="253.5,430.9 253.75,427.9 254.75,409.6 255.25,403.0" fill="none" stroke="#f8f21e" stroke-width="1.0" stroke-linejoin="round" opacity="0.45" />
<polyline points="255.25,403.0 255.5,402.0 255.75,403.1" fill="none" stroke="#f8f21e" stroke-width="1.1" stroke-linejoin="round" opacity="0.7" />
<polyline points="255.75,403.1 256.75,415.5" fill="none" stroke="#f8f21e" stroke-width="1.0" stroke-linejoin="round" opacity="0.45" />
<polyline points="256.75,415.5 257,416.6 257.25,415.8 257.5,413.7" fill="none" stroke="#f8f21e" stroke-width="1.1" stroke-linejoin="round" opacity="0.7" />
<polyline points="257.5,413.7 258.5,402.4" fill="none" stroke="#f8f21e" stroke-width="1.0" stroke-linejoin="round" opacity="0.45" />
<polyline points="258.5,402.4 258.8,401.3 259,401.7 259.25,403.2 260,409.8 260.25,411.5 260.5,412.1 260.75,411.7 261,410.8 262,405.8 262.3,405.3 262.5,405.5 262.75,406.3 263.5,409.7 263.75,410.5 264,410.8" fill="none" stroke="#f8f21e" stroke-width="1.1" stroke-linejoin="round" opacity="0.7" />
<polyline points="264,410.8 264.25,410.6" fill="none" stroke="#f8f21e" stroke-width="1.9" stroke-linejoin="round" opacity="1" />
<polyline points="264.25,410.6 264.5,410.2 265.5,407.4 265.75,407.0" fill="none" stroke="#f8f21e" stroke-width="1.1" stroke-linejoin="round" opacity="0.7" />
<polyline points="265.75,407.0 266,406.8" fill="none" stroke="#f8f21e" stroke-width="1.9" stroke-linejoin="round" opacity="1" />
<polyline points="266,406.8 266.5,407.3 267.5,409.3 268,409.8" fill="none" stroke="#f8f21e" stroke-width="1.1" stroke-linejoin="round" opacity="0.7" />
<polyline points="268,409.8 268.5,409.6 270,408.5 270.5,408.3 271.5,408.4 273.5,409.1 274.5,409.3 292,409.7 453,411.0" fill="none" stroke="#f8f21e" stroke-width="1.9" stroke-linejoin="round" opacity="1" />
<polyline points="453,411.0 453.25,404.8 454,365.0 455.25,342.9 456.75,325.4" fill="none" stroke="#f8f21e" stroke-width="1.0" stroke-linejoin="round" opacity="0.45" />
<polyline points="456.75,325.4 459.5,302.0" fill="none" stroke="#f8f21e" stroke-width="1.1" stroke-linejoin="round" opacity="0.7" />
<polyline points="459.5,302.0 461.75,278.7" fill="none" stroke="#f8f21e" stroke-width="1.0" stroke-linejoin="round" opacity="0.45" />
<polyline points="461.75,278.7 462.75,271.2 464.25,265.1 465,263.0 465.5,262.2" fill="none" stroke="#f8f21e" stroke-width="1.1" stroke-linejoin="round" opacity="0.7" />
<polyline points="465.5,262.2 465.9,262.0 467,262.0" fill="none" stroke="#f8f21e" stroke-width="1.9" stroke-linejoin="round" opacity="1" />
<polyline points="467,262.0 467.25,262.8 468,268.9 468.3,270.0 468.5,269.3 469.25,263.1" fill="none" stroke="#f8f21e" stroke-width="1.1" stroke-linejoin="round" opacity="0.7" />
<polyline points="469.25,263.1 469.5,263.1" fill="none" stroke="#f8f21e" stroke-width="1.9" stroke-linejoin="round" opacity="1" />
<polyline points="469.5,263.1 470,264.1 470.75,266.2 472,270.7 473.25,276.1 475.25,286.9 476,290.0 477,293.0 477.75,294.6 478.75,296.0" fill="none" stroke="#f8f21e" stroke-width="1.1" stroke-linejoin="round" opacity="0.7" />
<polyline points="478.75,296.0 479.25,296.3 479.5,296.1" fill="none" stroke="#f8f21e" stroke-width="1.9" stroke-linejoin="round" opacity="1" />
<polyline points="479.5,296.1 479.75,295.4 480.25,292.8" fill="none" stroke="#f8f21e" stroke-width="1.1" stroke-linejoin="round" opacity="0.7" />
<polyline points="480.25,292.8 480.75,287.7 482.5,242.9 482.75,239.1" fill="none" stroke="#f8f21e" stroke-width="1.0" stroke-linejoin="round" opacity="0.45" />
<polyline points="482.75,239.1 482.9,238.4" fill="none" stroke="#f8f21e" stroke-width="1.1" stroke-linejoin="round" opacity="0.7" />
<polyline points="482.9,238.4 483.25,241.6 484,255.0" fill="none" stroke="#f8f21e" stroke-width="1.0" stroke-linejoin="round" opacity="0.45" />
<polyline points="484,255.0 485,263.9 485.25,265.1 485.5,265.5 485.75,265.0 486,263.5 487,255.0 487.25,253.5 487.5,253.0 487.75,253.9" fill="none" stroke="#f8f21e" stroke-width="1.1" stroke-linejoin="round" opacity="0.7" />
<polyline points="487.75,253.9 488.75,263.6" fill="none" stroke="#f8f21e" stroke-width="1.0" stroke-linejoin="round" opacity="0.45" />
<polyline points="488.75,263.6 489,264.5 489.25,264.3 489.5,263.6 490.5,259.9 490.75,259.2 491,259.0" fill="none" stroke="#f8f21e" stroke-width="1.1" stroke-linejoin="round" opacity="0.7" />
<polyline points="491,259.0 491.25,259.2" fill="none" stroke="#f8f21e" stroke-width="1.9" stroke-linejoin="round" opacity="1" />
<polyline points="491.25,259.2 491.5,259.6 492.5,262.4 492.75,262.8" fill="none" stroke="#f8f21e" stroke-width="1.1" stroke-linejoin="round" opacity="0.7" />
<polyline points="492.75,262.8 493,263.0 493.5,262.6" fill="none" stroke="#f8f21e" stroke-width="1.9" stroke-linejoin="round" opacity="1" />
<polyline points="493.5,262.6 494.5,260.9" fill="none" stroke="#f8f21e" stroke-width="1.1" stroke-linejoin="round" opacity="0.7" />
<polyline points="494.5,260.9 495,260.5 495.5,260.8" fill="none" stroke="#f8f21e" stroke-width="1.9" stroke-linejoin="round" opacity="1" />
<polyline points="495.5,260.8 496.5,262.0" fill="none" stroke="#f8f21e" stroke-width="1.1" stroke-linejoin="round" opacity="0.7" />
<polyline points="496.5,262.0 497,262.3 497.75,262.2 499.5,261.6 501,261.5 505.5,261.7 518.5,262.8 540.5,263.0 547.5,262.9 558,261.5 562,261.3 566,261.5 575.5,262.4 580,262.6 617.5,262.0 702.5,262.3 755,261.6 805.1,261.5" fill="none" stroke="#f8f21e" stroke-width="1.9" stroke-linejoin="round" opacity="1" />
<polyline points="805.1,261.5 805.25,261.9 805.5,263.8" fill="none" stroke="#f8f21e" stroke-width="1.1" stroke-linejoin="round" opacity="0.7" />
<polyline points="805.5,263.8 806,271.2 807.25,292.3 809.5,335.3 811.5,367.5 812.25,378.4 813,385.9" fill="none" stroke="#f8f21e" stroke-width="1.0" stroke-linejoin="round" opacity="0.45" />
<polyline points="813,385.9 813.25,387.3 813.5,387.9" fill="none" stroke="#f8f21e" stroke-width="1.1" stroke-linejoin="round" opacity="0.7" />
<polyline points="813.5,387.9 813.75,387.9" fill="none" stroke="#f8f21e" stroke-width="1.9" stroke-linejoin="round" opacity="1" />
<polyline points="813.75,387.9 814.25,386.9 814.6,386.5 814.75,386.7 815,387.6 816,394.4 817.75,404.8 818.25,407.2 818.75,408.7 819.1,409.1" fill="none" stroke="#f8f21e" stroke-width="1.1" stroke-linejoin="round" opacity="0.7" />
<polyline points="819.1,409.1 824.6,409.4" fill="none" stroke="#f8f21e" stroke-width="1.9" stroke-linejoin="round" opacity="1" />
<polyline points="824.6,409.4 825,410.1 825.5,412.5 826.75,420.6 828,431.3 828.5,433.5" fill="none" stroke="#f8f21e" stroke-width="1.1" stroke-linejoin="round" opacity="0.7" />
<polyline points="828.5,433.5 828.6,433.6" fill="none" stroke="#f8f21e" stroke-width="1.9" stroke-linejoin="round" opacity="1" />
<polyline points="828.6,433.6 828.75,433.1" fill="none" stroke="#f8f21e" stroke-width="1.1" stroke-linejoin="round" opacity="0.7" />
<polyline points="828.75,433.1 829,430.2 830,408.5 831.25,386.1 832,377.3" fill="none" stroke="#f8f21e" stroke-width="1.0" stroke-linejoin="round" opacity="0.45" />
<polyline points="832,377.3 832.25,375.0 832.6,373.6 832.75,374.4" fill="none" stroke="#f8f21e" stroke-width="1.1" stroke-linejoin="round" opacity="0.7" />
<polyline points="832.75,374.4 833,378.4 834.75,413.3 835.5,423.8" fill="none" stroke="#f8f21e" stroke-width="1.0" stroke-linejoin="round" opacity="0.45" />
<polyline points="835.5,423.8 835.75,425.3 835.9,425.6 836.25,423.5" fill="none" stroke="#f8f21e" stroke-width="1.1" stroke-linejoin="round" opacity="0.7" />
<polyline points="836.25,423.5 837.5,402.3 837.75,400.0" fill="none" stroke="#f8f21e" stroke-width="1.0" stroke-linejoin="round" opacity="0.45" />
<polyline points="837.75,400.0 837.9,399.6 838.25,402.7" fill="none" stroke="#f8f21e" stroke-width="1.1" stroke-linejoin="round" opacity="0.7" />
<polyline points="838.25,402.7 839.25,427.5 839.5,432.3" fill="none" stroke="#f8f21e" stroke-width="1.0" stroke-linejoin="round" opacity="0.45" />
<polyline points="839.5,432.3 839.8,434.6 840,434.0" fill="none" stroke="#f8f21e" stroke-width="1.1" stroke-linejoin="round" opacity="0.7" />
<polyline points="840,434.0 840.25,431.6 841.5,409.4 842,404.5" fill="none" stroke="#f8f21e" stroke-width="1.0" stroke-linejoin="round" opacity="0.45" />
<polyline points="842,404.5 842.1,404.3 842.25,404.7 842.5,406.9" fill="none" stroke="#f8f21e" stroke-width="1.1" stroke-linejoin="round" opacity="0.7" />
<polyline points="842.5,406.9 843.25,416.9" fill="none" stroke="#f8f21e" stroke-width="1.0" stroke-linejoin="round" opacity="0.45" />
<polyline points="843.25,416.9 843.6,418.9 843.75,418.6 844,417.0" fill="none" stroke="#f8f21e" stroke-width="1.1" stroke-linejoin="round" opacity="0.7" />
<polyline points="844,417.0 845,405.5" fill="none" stroke="#f8f21e" stroke-width="1.0" stroke-linejoin="round" opacity="0.45" />
<polyline points="845,405.5 845.25,403.9 845.4,403.6 845.75,404.8 846.75,413.2 847.1,414.4 847.5,413.5 848.5,408.5 848.9,407.6 849.25,408.2 850.25,412.5 850.6,413.1 851,412.7 852,410.0 852.25,409.4 852.6,409.1" fill="none" stroke="#f8f21e" stroke-width="1.1" stroke-linejoin="round" opacity="0.7" />
<polyline points="852.6,409.1 853,409.4" fill="none" stroke="#f8f21e" stroke-width="1.9" stroke-linejoin="round" opacity="1" />
<polyline points="853,409.4 854,411.5 854.25,411.9" fill="none" stroke="#f8f21e" stroke-width="1.1" stroke-linejoin="round" opacity="0.7" />
<polyline points="854.25,411.9 854.6,412.1 855.25,411.8" fill="none" stroke="#f8f21e" stroke-width="1.9" stroke-linejoin="round" opacity="1" />
<polyline points="855.25,411.8 856.5,410.8" fill="none" stroke="#f8f21e" stroke-width="1.1" stroke-linejoin="round" opacity="0.7" />
<polyline points="856.5,410.8 857.1,410.6 858,410.7 860.25,411.5 861.1,411.6 897.5,412.6 934.5,412.3 964.5,411.7" fill="none" stroke="#f8f21e" stroke-width="1.9" stroke-linejoin="round" opacity="1" />
<polyline points="26.5,259.8 27,260.4 27.5,261.0 28,260.1 28.5,259.4 29,259.4 29.5,259.8 30,260.0 30.5,260.1 31,259.3 31.5,259.7 32,260.5 32.5,260.1 33,260.1 33.5,259.6 34,259.8 34.5,260.4 35,260.1 35.5,259.6 36,260.0 36.5,259.7 37,258.7 37.5,259.3 38,259.7 38.5,258.6 39,258.5 39.5,259.2 40,259.0 40.5,258.6 41,259.1 41.5,260.2 42,260.1 42.5,259.3 43,259.6 43.5,260.3 44,260.0 44.5,259.9 45,260.5 45.5,260.2 46,259.3 46.5,259.6 47,260.1 47.5,260.4 48,259.7 48.5,258.9 49,259.1 49.5,258.6 50,259.1 50.5,260.1 51,259.7 51.5,260.1 52,260.8 52.5,260.5 53,260.3 53.5,260.4 54,259.6 54.5,259.5 55,260.4 55.5,259.3 56,259.1 56.5,259.8 57,260.0 57.5,260.0 58,259.6 58.5,260.0 59,259.6 59.5,259.7 60,260.0 60.5,260.0 61,259.8 61.5,260.1 62,260.6 62.5,260.0 63,260.0 63.5,260.7 64,261.2 64.5,259.9 65,259.5 65.5,260.4 66,260.0 66.5,259.3 67,259.9 67.5,259.8 68,259.5 68.5,260.7 69,259.7 69.5,258.9 70,259.1 70.5,259.3 71,260.6 71.5,261.4 72,259.9 72.5,258.7 73,259.9 73.5,260.9 74,260.7 74.5,259.6 75,259.6 75.5,259.9 76,259.7 76.5,259.4 77,259.6 77.5,260.1 78,259.9 78.5,259.7 79,259.1 79.5,259.0 80,260.1 80.5,260.3 81,259.0 81.5,259.8 82,260.7 82.5,261.0 83,260.8 83.5,259.6 84,258.9 84.5,259.7 85,261.6 85.5,260.6 86,259.1 86.5,259.8 87,259.7 87.5,259.3 88,259.5 88.5,259.7 89,260.4 89.5,260.3 90,260.2 90.5,260.0 91,259.8 91.5,259.0 92,258.1 92.5,259.5 93,259.9 93.5,259.8 94,260.3 94.5,260.7 95,260.8 95.5,260.6 96,260.2 96.5,259.4 97,259.1 97.5,259.2 98,259.0 98.5,259.0 99,259.5 99.5,259.9 100,259.8 100.5,258.7 101,258.9 101.5,259.9 102,260.4 102.5,260.6 103,259.8 103.5,259.2 104,260.4 104.5,261.1 105,261.0 105.5,261.6 106,260.4 106.5,259.6 107,260.2 107.5,260.3 108,260.3 108.5,260.1 109,260.0 109.5,259.2 110,259.0 110.5,259.4 111,259.5 111.5,259.6 112,259.9 112.5,260.5 113,260.3 113.5,260.1 114,260.0 114.5,259.6 115,259.5 115.5,259.5 116,259.7 116.5,260.0 117,260.1 117.5,259.5 118,259.6 118.5,259.9 119,259.1 119.5,259.4 120,259.4 120.5,259.7 121,259.7 121.5,259.0 122,258.9 122.5,260.0 123,260.4 123.5,259.3 124,259.3 124.5,259.1 125,259.9 125.5,259.9 126,259.3 126.5,260.3 127,259.4 127.5,259.3 128,260.4 128.5,260.5 129,260.1 129.5,260.4 130,260.3 130.5,260.0 131,259.9 131.5,260.0 132,259.7 132.5,259.7 133,259.9 133.5,259.1 134,259.5 134.5,260.8 135,261.0 135.5,260.0 136,259.9 136.5,259.9 137,259.5 137.5,259.8 138,258.8 138.5,258.8 139,259.4 139.5,259.0 140,258.8 140.5,258.4 141,258.7 141.5,259.7 142,261.0 142.5,260.6 143,260.3 143.5,260.2 144,258.8 144.5,259.0 145,260.1 145.5,259.8 146,259.7 146.5,260.2 147,259.7 147.5,258.7 148,259.0 148.5,259.6 149,259.5 149.5,260.1 150,261.1 150.5,260.4 151,259.9 151.5,260.6 152,260.6 152.5,260.6 153,260.1 153.5,260.0 154,261.1 154.5,261.1 155,259.9 155.5,259.8 156,260.7 156.5,260.6 157,259.7 157.5,260.3 158,259.9 158.5,259.5 159,260.0 159.5,259.2 160,259.8 160.5,260.5 161,259.4 161.5,259.5 162,259.9 162.5,258.7 163,258.6 163.5,259.6 164,260.2 164.5,260.2 165,259.9 165.5,260.0 166,259.9 166.5,260.2 167,260.4 167.5,260.0 168,260.2 168.5,259.6 169,259.0 169.5,260.2 170,260.7 170.5,259.8 171,259.8 171.5,259.7 172,259.7 172.5,259.6 173,259.6 173.5,259.2 174,259.7 174.5,260.2 175,258.8 175.5,259.0 176,259.5 176.5,259.7 177,259.3 177.5,259.5 178,261.7 178.5,260.9 179,259.4 179.5,259.8 180,259.7 180.5,259.0 181,258.4 181.5,259.5 182,260.0 182.5,260.5 183,260.2 183.5,259.6 184,261.2 184.5,260.8 185,259.0 185.5,259.4 186,259.8 186.5,260.2 187,260.3 187.5,259.5 188,259.5 188.5,261.1 189,261.6 189.5,259.1 190,258.4 190.5,259.3 191,259.7 191.5,260.0 192,260.6 192.5,261.1 193,260.6 193.5,260.3 194,259.9 194.5,259.9 195,260.6 195.5,260.7 196,259.9 196.5,260.2 197,260.5 197.5,259.9 198,259.4 198.5,259.2 199,259.2 199.5,258.2 200,259.0 200.5,260.5 201,260.0 201.5,260.2 202,260.5 202.5,260.2 203,258.8 203.5,258.5 204,259.9 204.5,260.8 205,261.4 205.5,261.3 206,259.9 206.5,258.2 207,259.0 207.5,260.1 208,260.3 208.5,260.2 209,259.8 209.5,259.2 210,259.3 210.5,259.8 211,259.8 211.5,260.2 212,260.0 212.5,259.9 213,259.9 213.5,260.1 214,260.4 214.5,259.8 215,259.3 215.5,260.3 216,260.6 216.5,260.2 217,260.4 217.5,259.7 218,259.2 218.25,259.5 218.5,260.0" fill="none" stroke="#f8f21e" stroke-width="0.9" stroke-linejoin="round" opacity="1" />
<polyline points="218.5,260.0 218.75,261.2" fill="none" stroke="#f8f21e" stroke-width="0.9" stroke-linejoin="round" opacity="0.7" />
<polyline points="218.75,261.2 219,263.0 219.25,266.1 219.5,270.9 219.75,276.4 220,279.4 220.25,282.9 220.5,288.0 220.75,292.6 221,297.4 221.25,302.4 221.5,308.4 221.75,313.5 222,318.0 222.25,323.1 222.5,327.4 222.75,332.3 223,337.0 223.25,340.6 223.5,344.6 223.75,348.7 224,353.1 224.25,357.3 224.5,360.8 224.75,365.6 225,370.3 225.25,374.0 225.5,377.4 225.75,379.9 226,382.3 226.25,384.5" fill="none" stroke="#f8f21e" stroke-width="0.9" stroke-linejoin="round" opacity="0.5" />
<polyline points="226.25,384.5 226.5,386.8 226.75,388.1" fill="none" stroke="#f8f21e" stroke-width="0.9" stroke-linejoin="round" opacity="0.7" />
<polyline points="226.75,388.1 227,387.4 227.25,387.1 227.5,386.6 227.75,386.2 228,386.0 228.25,385.8" fill="none" stroke="#f8f21e" stroke-width="0.9" stroke-linejoin="round" opacity="1" />
<polyline points="228.25,385.8 228.5,387.6 228.75,389.9 229,390.9 229.25,393.1 229.5,396.4 229.75,396.5 230,397.7 230.25,399.4 230.5,399.6 230.75,401.1 231,401.9 231.25,403.7 231.5,405.6 231.75,405.5 232,405.7" fill="none" stroke="#f8f21e" stroke-width="0.9" stroke-linejoin="round" opacity="0.7" />
<polyline points="232,405.7 232.25,405.8 232.5,405.9 232.75,407.1 233,406.5 233.25,405.9 233.5,406.8 233.75,407.5 234,408.0 234.25,407.3 234.5,406.4 234.75,406.8 235,407.0 235.25,406.6 235.5,407.3 235.75,408.2 236,407.9 236.25,407.0 236.5,407.2 236.75,406.4 237,406.1 237.25,406.5 237.5,407.7 237.75,408.5 238,407.5 238.25,407.4" fill="none" stroke="#f8f21e" stroke-width="0.9" stroke-linejoin="round" opacity="1" />
<polyline points="238.25,407.4 238.5,406.9 238.75,408.5 239,411.8 239.25,412.8 239.5,414.0 239.75,416.4 240,416.9 240.25,418.7 240.5,422.2" fill="none" stroke="#f8f21e" stroke-width="0.9" stroke-linejoin="round" opacity="0.7" />
<polyline points="240.5,422.2 240.75,424.2 241,425.9" fill="none" stroke="#f8f21e" stroke-width="0.9" stroke-linejoin="round" opacity="0.5" />
<polyline points="241,425.9 241.25,428.2 241.5,429.3 241.75,430.2" fill="none" stroke="#f8f21e" stroke-width="0.9" stroke-linejoin="round" opacity="0.7" />
<polyline points="241.75,430.2 242,431.8" fill="none" stroke="#f8f21e" stroke-width="0.9" stroke-linejoin="round" opacity="1" />
<polyline points="242,431.8 242.25,429.8" fill="none" stroke="#f8f21e" stroke-width="0.9" stroke-linejoin="round" opacity="0.7" />
<polyline points="242.25,429.8 242.5,426.1 242.75,421.3 243,414.0 243.25,408.3 243.5,403.8 243.75,399.5 244,394.7 244.25,390.5 244.5,386.4 244.75,382.2 245,379.2 245.25,376.1 245.5,374.4" fill="none" stroke="#f8f21e" stroke-width="0.9" stroke-linejoin="round" opacity="0.5" />
<polyline points="245.5,374.4 245.75,372.7 246,371.2 246.25,372.6" fill="none" stroke="#f8f21e" stroke-width="0.9" stroke-linejoin="round" opacity="0.7" />
<polyline points="246.25,372.6 246.5,378.2 246.75,385.1 247,389.5 247.25,393.6 247.5,398.1 247.75,402.4 248,407.4 248.25,412.6 248.5,417.1 248.75,419.8" fill="none" stroke="#f8f21e" stroke-width="0.9" stroke-linejoin="round" opacity="0.5" />
<polyline points="248.75,419.8 249,422.3 249.25,424.0" fill="none" stroke="#f8f21e" stroke-width="0.9" stroke-linejoin="round" opacity="0.7" />
<polyline points="249.25,424.0 249.3,423.7" fill="none" stroke="#f8f21e" stroke-width="0.9" stroke-linejoin="round" opacity="1" />
<polyline points="249.3,423.7 249.5,423.1" fill="none" stroke="#f8f21e" stroke-width="0.9" stroke-linejoin="round" opacity="0.7" />
<polyline points="249.5,423.1 249.75,420.3 250,415.8 250.25,411.4 250.5,406.7 250.75,402.5 251,398.7" fill="none" stroke="#f8f21e" stroke-width="0.9" stroke-linejoin="round" opacity="0.5" />
<polyline points="251,398.7 251.25,397.4" fill="none" stroke="#f8f21e" stroke-width="0.9" stroke-linejoin="round" opacity="0.7" />
<polyline points="251.25,397.4 251.3,397.6" fill="none" stroke="#f8f21e" stroke-width="0.9" stroke-linejoin="round" opacity="1" />
<polyline points="251.3,397.6 251.5,397.9" fill="none" stroke="#f8f21e" stroke-width="0.9" stroke-linejoin="round" opacity="0.7" />
<polyline points="251.5,397.9 251.75,401.5 252,407.7 252.25,415.7 252.5,422.6 252.75,428.2 253,430.9" fill="none" stroke="#f8f21e" stroke-width="0.9" stroke-linejoin="round" opacity="0.5" />
<polyline points="253,430.9 253.2,431.2" fill="none" stroke="#f8f21e" stroke-width="0.9" stroke-linejoin="round" opacity="0.7" />
<polyline points="253.2,431.2 253.25,431.7" fill="none" stroke="#f8f21e" stroke-width="0.9" stroke-linejoin="round" opacity="1" />
<polyline points="253.25,431.7 253.5,430.2" fill="none" stroke="#f8f21e" stroke-width="0.9" stroke-linejoin="round" opacity="0.7" />
<polyline points="253.5,430.2 253.75,428.0 254,424.5 254.25,419.2 254.5,414.4 254.75,409.3 255,404.8 255.25,402.2" fill="none" stroke="#f8f21e" stroke-width="0.9" stroke-linejoin="round" opacity="0.5" />
<polyline points="255.25,402.2 255.5,401.8 255.75,403.5" fill="none" stroke="#f8f21e" stroke-width="0.9" stroke-linejoin="round" opacity="0.7" />
<polyline points="255.75,403.5 256,406.2 256.25,410.1 256.5,412.7 256.75,414.6" fill="none" stroke="#f8f21e" stroke-width="0.9" stroke-linejoin="round" opacity="0.5" />
<polyline points="256.75,414.6 257,416.4 257.25,415.2 257.5,412.8" fill="none" stroke="#f8f21e" stroke-width="0.9" stroke-linejoin="round" opacity="0.7" />
<polyline points="257.5,412.8 257.75,411.1 258,408.7 258.25,405.7 258.5,403.0" fill="none" stroke="#f8f21e" stroke-width="0.9" stroke-linejoin="round" opacity="0.5" />
<polyline points="258.5,403.0 258.75,401.3" fill="none" stroke="#f8f21e" stroke-width="0.9" stroke-linejoin="round" opacity="0.7" />
<polyline points="258.75,401.3 258.8,401.7 259,402.0" fill="none" stroke="#f8f21e" stroke-width="0.9" stroke-linejoin="round" opacity="1" />
<polyline points="259,402.0 259.25,403.2 259.5,406.1" fill="none" stroke="#f8f21e" stroke-width="0.9" stroke-linejoin="round" opacity="0.7" />
<polyline points="259.5,406.1 259.75,408.1" fill="none" stroke="#f8f21e" stroke-width="0.9" stroke-linejoin="round" opacity="0.5" />
<polyline points="259.75,408.1 260,409.4 260.25,411.2 260.5,412.4" fill="none" stroke="#f8f21e" stroke-width="0.9" stroke-linejoin="round" opacity="0.7" />
<polyline points="260.5,412.4 260.75,412.2" fill="none" stroke="#f8f21e" stroke-width="0.9" stroke-linejoin="round" opacity="1" />
<polyline points="260.75,412.2 261,411.1 261.25,409.9 261.5,407.7 261.75,405.7 262,405.5" fill="none" stroke="#f8f21e" stroke-width="0.9" stroke-linejoin="round" opacity="0.7" />
<polyline points="262,405.5 262.25,405.0 262.3,404.2 262.5,404.3" fill="none" stroke="#f8f21e" stroke-width="0.9" stroke-linejoin="round" opacity="1" />
<polyline points="262.5,404.3 262.75,405.3 263,406.8 263.25,408.0 263.5,409.3 263.75,411.4" fill="none" stroke="#f8f21e" stroke-width="0.9" stroke-linejoin="round" opacity="0.7" />
<polyline points="263.75,411.4 264,411.5 264.25,411.2 264.5,410.9" fill="none" stroke="#f8f21e" stroke-width="0.9" stroke-linejoin="round" opacity="1" />
<polyline points="264.5,410.9 264.75,409.1 265,408.2 265.25,407.5 265.5,407.3" fill="none" stroke="#f8f21e" stroke-width="0.9" stroke-linejoin="round" opacity="0.7" />
<polyline points="265.5,407.3 265.75,406.8 266,406.9 266.25,407.8 266.5,406.6 266.75,407.2 267,409.4 267.25,409.2 267.5,409.4 267.75,409.3 268,409.1 268.25,409.1 268.5,409.1 268.75,408.9 269,407.2 269.25,408.0 269.5,410.1 269.75,409.4 270,408.6 270.25,408.8 270.5,408.2 270.75,408.4 271,409.4 271.25,408.6 271.5,408.1 271.75,408.9 272,408.1 272.25,408.8 272.5,410.4 272.75,409.3 273,409.3 273.25,409.9 273.5,409.1 273.75,409.8 274,410.0 274.25,409.5 274.5,410.2 274.75,410.6 275,410.3 275.5,409.1 276,408.0 276.5,409.2 277,409.5 277.5,409.0 278,409.0 278.5,408.9 279,408.8 279.5,409.6 280,409.8 280.5,409.0 281,409.4 281.5,410.0 282,409.4 282.5,408.9 283,409.5 283.5,409.7 284,410.1 284.5,409.6 285,409.5 285.5,409.6 286,409.7 286.5,409.8 287,409.3 287.5,409.3 288,409.8 288.5,410.9 289,410.5 289.5,409.6 290,410.5 290.5,409.4 291,408.0 291.5,408.4 292,409.1 292.5,410.8 293,411.1 293.5,410.5 294,410.2 294.5,408.5 295,407.6 295.5,409.2 296,410.4 296.5,409.3 297,409.7 297.5,409.6 298,409.6 298.5,411.0 299,410.1 299.5,409.0 300,409.7 300.5,409.7 301,409.7 301.5,409.7 302,409.7 302.5,410.3 303,409.7 303.5,409.3 304,409.6 304.5,409.1 305,408.9 305.5,409.6 306,410.0 306.5,409.6 307,410.1 307.5,410.5 308,409.2 308.5,410.0 309,411.3 309.5,410.6 310,409.4 310.5,409.5 311,409.6 311.5,409.5 312,410.5 312.5,410.8 313,410.2 313.5,410.2 314,410.1 314.5,410.3 315,410.8 315.5,410.2 316,409.8 316.5,411.1 317,411.3 317.5,410.1 318,410.8 318.5,410.9 319,409.5 319.5,409.8 320,409.9 320.5,409.4 321,409.9 321.5,410.1 322,409.6 322.5,409.4 323,409.5 323.5,410.3 324,410.2 324.5,409.4 325,410.7 325.5,410.7 326,410.5 326.5,411.4 327,410.6 327.5,409.3 328,409.6 328.5,410.6 329,410.9 329.5,410.6 330,410.7 330.5,411.3 331,410.3 331.5,410.3 332,410.9 332.5,409.9 333,409.7 333.5,410.9 334,411.5 334.5,409.8 335,409.3 335.5,410.1 336,410.0 336.5,409.8 337,409.2 337.5,409.9 338,410.1 338.5,409.6 339,409.7 339.5,409.6 340,410.2 340.5,410.7 341,410.1 341.5,409.4 342,409.5 342.5,410.4 343,410.7 343.5,410.4 344,410.2 344.5,409.9 345,410.2 345.5,409.5 346,410.1 346.5,410.6 347,409.6 347.5,410.6 348,411.0 348.5,410.4 349,410.0 349.5,409.3 350,409.6 350.5,410.9 351,410.4 351.5,410.5 352,410.4 352.5,409.4 353,410.2 353.5,410.5 354,410.6 354.5,410.3 355,409.5 355.5,409.0 356,408.9 356.5,409.2 357,409.1 357.5,409.8 358,410.2 358.5,409.1 359,410.6 359.5,411.1 360,409.4 360.5,410.3 361,411.5 361.5,410.3 362,409.1 362.5,409.2 363,410.4 363.5,410.7 364,409.8 364.5,410.0 365,410.9 365.5,410.3 366,409.5 366.5,409.6 367,410.7 367.5,412.2 368,411.7 368.5,410.8 369,410.6 369.5,409.7 370,409.5 370.5,409.9 371,409.2 371.5,409.5 372,409.9 372.5,410.5 373,411.0 373.5,410.9 374,410.1 374.5,410.3 375,410.7 375.5,410.9 376,410.6 376.5,408.7 377,408.9 377.5,411.2 378,411.7 378.5,410.6 379,410.8 379.5,411.1 380,410.9 380.5,410.4 381,410.3 381.5,410.6 382,410.3 382.5,409.7 383,410.0 383.5,411.0 384,411.2 384.5,411.0 385,411.0 385.5,411.9 386,411.8 386.5,411.1 387,411.9 387.5,411.4 388,410.7 388.5,411.1 389,411.8 389.5,411.5 390,410.8 390.5,410.7 391,410.0 391.5,410.5 392,410.9 392.5,409.6 393,409.7 393.5,409.7 394,409.3 394.5,410.1 395,410.1 395.5,410.6 396,410.4 396.5,410.0 397,411.0 397.5,411.5 398,411.7 398.5,411.1 399,410.7 399.5,410.6 400,411.1 400.5,410.8 401,410.6 401.5,410.8 402,410.7 402.5,410.6 403,411.5 403.5,411.3 404,410.5 404.5,410.9 405,411.1 405.5,411.1 406,411.1 406.5,411.3 407,410.4 407.5,410.0 408,410.1 408.5,410.2 409,410.2 409.5,409.7 410,410.2 410.5,411.3 411,411.6 411.5,411.1 412,411.5 412.5,410.9 413,409.3 413.5,409.6 414,410.4 414.5,411.2 415,412.3 415.5,411.1 416,411.3 416.5,412.6 417,411.9 417.5,411.3 418,412.1 418.5,411.9 419,410.6 419.5,410.6 420,410.2 420.5,410.4 421,411.0 421.5,410.9 422,411.1 422.5,410.5 423,410.9 423.5,411.0 424,410.8 424.5,410.5 425,410.3 425.5,410.6 426,410.5 426.5,410.6 427,409.6 427.5,409.3 428,410.4 428.5,411.2 429,410.5 429.5,409.2 430,409.5 430.5,410.4 431,410.5 431.5,410.2 432,410.9 432.5,411.8 433,411.7 433.5,410.8 434,410.5 434.5,410.9 435,410.2 435.5,410.7 436,411.4 436.5,410.8 437,411.4 437.5,412.0 438,411.7 438.5,411.9 439,411.9 439.5,410.7 440,410.2 440.5,411.3 441,411.1 441.5,410.6 442,411.2 442.5,411.8 443,412.3 443.5,412.0 444,411.3 444.5,411.3 445,411.7 445.5,411.2 446,411.6 446.5,411.9 447,410.9 447.5,411.2 448,411.5 448.5,411.2 449,410.6 449.5,410.3 450,410.6 450.5,410.1 451,409.7 451.5,411.1 452,411.9 452.25,411.1 452.5,411.6 452.75,411.5 453,411.2" fill="none" stroke="#f8f21e" stroke-width="0.9" stroke-linejoin="round" opacity="1" />
<polyline points="453,411.2 453.25,404.4 453.5,390.1 453.75,375.1 454,365.0 454.25,360.2 454.5,354.6 454.75,349.2 455,345.4 455.25,342.8 455.5,340.0 455.75,336.6 456,332.5 456.25,328.3 456.5,326.3 456.75,325.0 457,322.7" fill="none" stroke="#f8f21e" stroke-width="0.9" stroke-linejoin="round" opacity="0.5" />
<polyline points="457,322.7 457.25,320.8 457.5,318.9 457.75,316.1 458,313.8 458.25,312.4 458.5,310.8 458.75,308.6 459,307.5 459.25,305.2" fill="none" stroke="#f8f21e" stroke-width="0.9" stroke-linejoin="round" opacity="0.7" />
<polyline points="459.25,305.2 459.5,301.9 459.7,299.6 459.75,298.9 460,297.0 460.25,294.8 460.5,291.8 460.75,289.0 461,286.4 461.25,282.8 461.5,278.7 461.75,278.3" fill="none" stroke="#f8f21e" stroke-width="0.9" stroke-linejoin="round" opacity="0.5" />
<polyline points="461.75,278.3 462,278.0 462.25,274.9 462.5,271.9 462.75,269.8 463,270.0 463.25,268.3 463.5,266.5 463.75,267.2 464,266.5 464.25,265.5 464.5,264.6 464.75,264.7" fill="none" stroke="#f8f21e" stroke-width="0.9" stroke-linejoin="round" opacity="0.7" />
<polyline points="464.75,264.7 465,263.7 465.25,261.4 465.5,261.7 465.75,262.8 465.9,262.6 466,262.5 466.25,262.2 466.5,261.2 466.75,262.1 467,263.4" fill="none" stroke="#f8f21e" stroke-width="0.9" stroke-linejoin="round" opacity="1" />
<polyline points="467,263.4 467.25,264.2 467.5,265.1" fill="none" stroke="#f8f21e" stroke-width="0.9" stroke-linejoin="round" opacity="0.7" />
<polyline points="467.5,265.1 467.75,266.2" fill="none" stroke="#f8f21e" stroke-width="0.9" stroke-linejoin="round" opacity="0.5" />
<polyline points="467.75,266.2 468,267.8 468.25,269.3" fill="none" stroke="#f8f21e" stroke-width="0.9" stroke-linejoin="round" opacity="0.7" />
<polyline points="468.25,269.3 468.3,270.2" fill="none" stroke="#f8f21e" stroke-width="0.9" stroke-linejoin="round" opacity="1" />
<polyline points="468.3,270.2 468.5,269.8 468.75,266.6" fill="none" stroke="#f8f21e" stroke-width="0.9" stroke-linejoin="round" opacity="0.7" />
<polyline points="468.75,266.6 469,263.9" fill="none" stroke="#f8f21e" stroke-width="0.9" stroke-linejoin="round" opacity="0.5" />
<polyline points="469,263.9 469.25,263.1" fill="none" stroke="#f8f21e" stroke-width="0.9" stroke-linejoin="round" opacity="0.7" />
<polyline points="469.25,263.1 469.3,263.1 469.5,263.1 469.75,263.4 470,264.3" fill="none" stroke="#f8f21e" stroke-width="0.9" stroke-linejoin="round" opacity="1" />
<polyline points="470,264.3 470.25,265.1 470.5,265.7 470.75,266.0 471,266.8 471.25,268.0 471.5,267.7 471.75,269.0 472,270.8 472.25,272.1 472.5,273.2 472.75,273.8 473,275.1 473.25,276.2 473.5,277.2 473.75,277.7 474,280.1 474.25,281.6 474.5,282.0 474.75,284.4 475,286.1 475.25,287.3 475.5,288.7 475.75,290.0 476,290.7 476.25,292.3 476.5,292.4 476.75,291.9 477,292.9" fill="none" stroke="#f8f21e" stroke-width="0.9" stroke-linejoin="round" opacity="0.7" />
<polyline points="477,292.9 477.25,293.2 477.5,294.0 477.75,295.4 478,295.3 478.25,294.7 478.5,295.7 478.75,296.6 479,297.4 479.25,297.7 479.3,296.9 479.5,296.1" fill="none" stroke="#f8f21e" stroke-width="0.9" stroke-linejoin="round" opacity="1" />
<polyline points="479.5,296.1 479.75,295.4 480,294.3 480.25,292.0 480.5,290.4" fill="none" stroke="#f8f21e" stroke-width="0.9" stroke-linejoin="round" opacity="0.7" />
<polyline points="480.5,290.4 480.75,287.6 481,282.1 481.25,275.7 481.5,270.6 481.75,264.8 482,257.1 482.25,249.2 482.5,242.1 482.75,238.5" fill="none" stroke="#f8f21e" stroke-width="0.9" stroke-linejoin="round" opacity="0.5" />
<polyline points="482.75,238.5 482.9,238.4 483,238.7" fill="none" stroke="#f8f21e" stroke-width="0.9" stroke-linejoin="round" opacity="0.7" />
<polyline points="483,238.7 483.25,241.4 483.5,246.7 483.75,251.9 484,254.7 484.25,256.8 484.5,259.4" fill="none" stroke="#f8f21e" stroke-width="0.9" stroke-linejoin="round" opacity="0.5" />
<polyline points="484.5,259.4 484.75,261.9 485,263.4 485.25,264.4" fill="none" stroke="#f8f21e" stroke-width="0.9" stroke-linejoin="round" opacity="0.7" />
<polyline points="485.25,264.4 485.5,265.7 485.75,265.3" fill="none" stroke="#f8f21e" stroke-width="0.9" stroke-linejoin="round" opacity="1" />
<polyline points="485.75,265.3 486,263.1 486.25,260.8" fill="none" stroke="#f8f21e" stroke-width="0.9" stroke-linejoin="round" opacity="0.7" />
<polyline points="486.25,260.8 486.5,259.0 486.75,257.2" fill="none" stroke="#f8f21e" stroke-width="0.9" stroke-linejoin="round" opacity="0.5" />
<polyline points="486.75,257.2 487,255.6 487.25,253.9" fill="none" stroke="#f8f21e" stroke-width="0.9" stroke-linejoin="round" opacity="0.7" />
<polyline points="487.25,253.9 487.5,252.3" fill="none" stroke="#f8f21e" stroke-width="0.9" stroke-linejoin="round" opacity="1" />
<polyline points="487.5,252.3 487.75,253.9 488,256.8" fill="none" stroke="#f8f21e" stroke-width="0.9" stroke-linejoin="round" opacity="0.7" />
<polyline points="488,256.8 488.25,259.1 488.5,261.8" fill="none" stroke="#f8f21e" stroke-width="0.9" stroke-linejoin="round" opacity="0.5" />
<polyline points="488.5,261.8 488.75,263.3 489,263.9" fill="none" stroke="#f8f21e" stroke-width="0.9" stroke-linejoin="round" opacity="0.7" />
<polyline points="489,263.9 489.25,264.2 489.5,264.2" fill="none" stroke="#f8f21e" stroke-width="0.9" stroke-linejoin="round" opacity="1" />
<polyline points="489.5,264.2 489.75,263.3 490,260.3 490.25,259.2 490.5,259.9" fill="none" stroke="#f8f21e" stroke-width="0.9" stroke-linejoin="round" opacity="0.7" />
<polyline points="490.5,259.9 490.75,260.0 491,259.9 491.25,260.7 491.5,261.4" fill="none" stroke="#f8f21e" stroke-width="0.9" stroke-linejoin="round" opacity="1" />
<polyline points="491.5,261.4 491.75,261.6 492,262.1 492.25,261.5 492.5,262.1" fill="none" stroke="#f8f21e" stroke-width="0.9" stroke-linejoin="round" opacity="0.7" />
<polyline points="492.5,262.1 492.75,263.5 493,263.0 493.25,262.9 493.5,263.1 493.75,262.2 494,261.5 494.25,261.1 494.5,260.9 494.75,260.5 495,260.6 495.25,259.9 495.5,259.8 495.75,260.2 496,260.4 496.25,261.7 496.5,262.3 496.75,262.2 497,262.3 497.25,263.0 497.5,262.5 497.75,262.1 498,261.8 498.25,261.1 498.5,261.8 498.75,261.5 499,261.4 499.25,262.1 499.5,261.3 499.75,260.9 500,261.3 500.5,260.4 501,260.5 501.5,261.1 502,261.8 502.5,261.8 503,262.0 503.5,262.1 504,262.3 504.5,262.8 505,262.2 505.5,262.3 506,262.6 506.5,262.9 507,263.3 507.5,262.5 508,261.2 508.5,260.2 509,260.6 509.5,262.2 510,262.6 510.5,262.4 511,262.1 511.5,261.8 512,261.9 512.5,262.4 513,261.8 513.5,262.0 514,262.1 514.5,261.8 515,262.2 515.5,262.1 516,262.0 516.5,261.6 517,262.0 517.5,262.1 518,263.4 518.5,263.7 519,262.3 519.5,262.2 520,262.0 520.5,261.2 521,261.5 521.5,262.8 522,262.3 522.5,262.1 523,262.3 523.5,262.3 524,263.0 524.5,263.2 525,263.3 525.5,262.7 526,263.0 526.5,263.1 527,262.8 527.5,263.4 528,263.1 528.5,262.2 529,262.6 529.5,262.7 530,262.0 530.5,262.0 531,262.8 531.5,263.2 532,261.8 532.5,262.2 533,264.2 533.5,264.7 534,263.5 534.5,262.7 535,263.2 535.5,263.6 536,263.4 536.5,262.5 537,262.8 537.5,263.6 538,262.6 538.5,262.2 539,262.9 539.5,263.1 540,263.2 540.5,263.6 541,263.6 541.5,263.2 542,262.3 542.5,262.6 543,263.9 543.5,264.6 544,263.9 544.5,263.0 545,263.6 545.5,264.3 546,263.8 546.5,263.4 547,262.9 547.5,262.8 548,262.7 548.5,262.3 549,262.6 549.5,262.4 550,261.4 550.5,261.2 551,262.3 551.5,262.6 552,262.1 552.5,262.3 553,262.7 553.5,262.9 554,262.1 554.5,261.6 555,261.8 555.5,261.3 556,260.7 556.5,261.0 557,261.2 557.5,262.2 558,262.5 558.5,261.3 559,261.1 559.5,262.1 560,261.8 560.5,260.8 561,260.9 561.5,260.9 562,261.2 562.5,261.8 563,261.1 563.5,260.6 564,262.1 564.5,261.9 565,261.1 565.5,260.9 566,259.8 566.5,260.2 567,262.0 567.5,261.9 568,260.5 568.5,260.9 569,261.9 569.5,262.3 570,262.7 570.5,262.2 571,262.0 571.5,261.3 572,261.7 572.5,262.7 573,262.7 573.5,263.2 574,262.6 574.5,262.1 575,261.9 575.5,261.0 576,261.4 576.5,262.5 577,262.1 577.5,262.3 578,262.9 578.5,262.8 579,262.4 579.5,261.4 580,262.1 580.5,263.2 581,262.8 581.5,262.3 582,262.3 582.5,262.4 583,262.3 583.5,261.4 584,262.0 584.5,262.2 585,261.7 585.5,262.3 586,262.5 586.5,261.9 587,262.3 587.5,263.4 588,263.2 588.5,263.5 589,262.7 589.5,260.7 590,261.2 590.5,263.3 591,263.6 591.5,262.8 592,262.2 592.5,262.5 593,261.7 593.5,261.3 594,261.8 594.5,262.9 595,262.8 595.5,262.8 596,263.1 596.5,261.6 597,262.6 597.5,262.9 598,262.2 598.5,263.4 599,262.9 599.5,261.5 600,262.2 600.5,262.8 601,261.7 601.5,261.2 602,261.6 602.5,262.5 603,262.5 603.5,262.4 604,263.3 604.5,263.6 605,263.4 605.5,263.4 606,262.0 606.5,262.0 607,262.9 607.5,262.2 608,261.6 608.5,260.9 609,260.9 609.5,261.6 610,261.5 610.5,261.2 611,261.4 611.5,262.1 612,262.2 612.5,261.9 613,262.6 613.5,262.5 614,262.2 614.5,261.8 615,261.7 615.5,262.2 616,262.2 616.5,261.9 617,261.3 617.5,261.4 618,261.6 618.5,262.3 619,262.9 619.5,261.9 620,261.7 620.5,262.1 621,262.0 621.5,262.0 622,261.1 622.5,261.8 623,262.7 623.5,261.6 624,260.6 624.5,260.9 625,261.2 625.5,261.3 626,262.1 626.5,263.0 627,262.5 627.5,262.5 628,263.2 628.5,262.3 629,261.0 629.5,261.6 630,262.7 630.5,263.4 631,263.8 631.5,263.0 632,263.2 632.5,262.3 633,261.6 633.5,262.0 634,262.7 634.5,263.1 635,260.9 635.5,261.2 636,262.3 636.5,262.0 637,262.2 637.5,261.9 638,262.5 638.5,262.4 639,261.7 639.5,262.3 640,262.9 640.5,262.2 641,262.4 641.5,262.1 642,262.7 642.5,263.1 643,262.3 643.5,262.4 644,261.8 644.5,261.1 645,261.6 645.5,262.4 646,262.9 646.5,262.9 647,261.8 647.5,261.8 648,262.7 648.5,263.0 649,262.7 649.5,261.7 650,262.1 650.5,262.3 651,262.0 651.5,261.7 652,261.7 652.5,262.1 653,262.3 653.5,263.5 654,263.5 654.5,262.1 655,261.2 655.5,261.3 656,262.0 656.5,262.6 657,262.4 657.5,262.4 658,262.6 658.5,262.7 659,263.2 659.5,262.9 660,262.2 660.5,261.4 661,260.7 661.5,261.2 662,261.3 662.5,261.7 663,262.8 663.5,262.5 664,261.8 664.5,261.7 665,262.0 665.5,262.0 666,262.1 666.5,262.5 667,262.5 667.5,262.7 668,262.6 668.5,262.3 669,263.1 669.5,263.0 670,262.6 670.5,262.6 671,262.0 671.5,261.8 672,261.6 672.5,261.8 673,261.9 673.5,261.7 674,262.6 674.5,262.7 675,262.7 675.5,262.9 676,262.8 676.5,262.4 677,262.0 677.5,263.5 678,263.9 678.5,263.1 679,262.8 679.5,262.8 680,262.1 680.5,261.3 681,262.1 681.5,262.8 682,262.4 682.5,262.0 683,262.0 683.5,262.0 684,261.6 684.5,261.0 685,261.6 685.5,261.4 686,261.0 686.5,261.5 687,261.5 687.5,261.9 688,262.2 688.5,262.0 689,261.8 689.5,261.5 690,262.2 690.5,262.7 691,262.2 691.5,262.2 692,262.5 692.5,262.4 693,263.1 693.5,262.8 694,262.3 694.5,262.7 695,262.4 695.5,261.6 696,262.0 696.5,262.7 697,262.4 697.5,262.3 698,262.3 698.5,261.9 699,262.0 699.5,261.6 700,261.4 700.5,261.6 701,261.4 701.5,262.4 702,262.5 702.5,261.9 703,262.3 703.5,262.4 704,261.9 704.5,261.9 705,262.8 705.5,263.2 706,262.8 706.5,261.9 707,262.0 707.5,261.9 708,261.8 708.5,261.9 709,262.6 709.5,262.3 710,262.0 710.5,263.1 711,261.7 711.5,261.2 712,262.7 712.5,263.4 713,261.9 713.5,261.1 714,261.4 714.5,261.1 715,261.4 715.5,262.7 716,263.0 716.5,262.1 717,261.9 717.5,262.3 718,262.7 718.5,262.0 719,262.3 719.5,262.3 720,261.4 720.5,262.1 721,263.1 721.5,262.7 722,262.0 722.5,262.8 723,262.9 723.5,262.8 724,263.0 724.5,262.6 725,262.4 725.5,262.7 726,262.4 726.5,262.7 727,261.8 727.5,260.6 728,262.2 728.5,262.8 729,261.8 729.5,261.8 730,262.6 730.5,262.2 731,262.0 731.5,262.2 732,261.8 732.5,261.8 733,262.4 733.5,261.9 734,261.2 734.5,262.0 735,261.6 735.5,260.5 736,261.3 736.5,262.1 737,261.7 737.5,261.8 738,261.4 738.5,262.7 739,262.7 739.5,261.1 740,260.9 740.5,260.9 741,262.3 741.5,262.4 742,262.0 742.5,261.8 743,262.3 743.5,262.6 744,261.2 744.5,261.5 745,261.9 745.5,261.8 746,262.0 746.5,261.8 747,261.8 747.5,261.3 748,260.5 748.5,261.4 749,262.0 749.5,261.7 750,261.5 750.5,260.5 751,260.1 751.5,261.7 752,261.9 752.5,261.0 753,260.7 753.5,260.7 754,261.2 754.5,261.3 755,261.4 755.5,261.2 756,261.0 756.5,261.3 757,261.7 757.5,261.6 758,262.3 758.5,262.4 759,261.7 759.5,261.3 760,261.7 760.5,261.5 761,260.3 761.5,260.3 762,261.4 762.5,261.3 763,261.6 763.5,262.1 764,260.8 764.5,260.7 765,262.2 765.5,261.9 766,260.5 766.5,261.1 767,262.4 767.5,262.6 768,261.8 768.5,261.4 769,261.7 769.5,262.2 770,263.0 770.5,262.4 771,262.0 771.5,261.9 772,261.6 772.5,261.3 773,260.7 773.5,261.3 774,261.3 774.5,261.5 775,261.6 775.5,261.3 776,261.5 776.5,261.3 777,261.4 777.5,262.0 778,263.4 778.5,262.4 779,261.1 779.5,261.5 780,261.0 780.5,261.2 781,261.2 781.5,261.0 782,262.0 782.5,261.1 783,260.6 783.5,261.8 784,261.2 784.5,261.3 785,261.9 785.5,261.5 786,261.9 786.5,261.4 787,261.1 787.5,261.6 788,260.9 788.5,260.9 789,261.2 789.5,261.7 790,261.1 790.5,260.7 791,261.1 791.5,262.0 792,261.7 792.5,261.4 793,261.1 793.5,260.8 794,261.5 794.5,261.6 795,261.3 795.5,260.2 796,259.8 796.5,261.3 797,262.1 797.5,261.1 798,261.4 798.5,261.5 799,260.7 799.5,260.5 800,261.4 800.5,262.9 801,261.9 801.5,261.1 802,262.0 802.5,262.9 803,261.3 803.5,260.4 804,261.8 804.25,261.0 804.5,260.9 804.75,261.7 805,261.8 805.1,261.5 805.25,261.7" fill="none" stroke="#f8f21e" stroke-width="0.9" stroke-linejoin="round" opacity="1" />
<polyline points="805.25,261.7 805.5,263.7" fill="none" stroke="#f8f21e" stroke-width="0.9" stroke-linejoin="round" opacity="0.7" />
<polyline points="805.5,263.7 805.75,267.0 806,271.5 806.25,275.5 806.5,279.0 806.6,281.5 806.75,285.0 807,288.8 807.25,292.3 807.5,296.3 807.75,302.2 808,307.6 808.25,311.3 808.5,315.9 808.75,321.3 809,326.0 809.25,330.2 809.5,335.3 809.75,340.3 810,343.6 810.1,344.1 810.25,346.2 810.5,350.8 810.75,355.5 811,359.5 811.25,363.7 811.5,368.0 811.75,371.1 812,373.4 812.25,376.5 812.5,380.1 812.75,383.1" fill="none" stroke="#f8f21e" stroke-width="0.9" stroke-linejoin="round" opacity="0.5" />
<polyline points="812.75,383.1 813,385.9 813.25,388.0 813.5,388.5" fill="none" stroke="#f8f21e" stroke-width="0.9" stroke-linejoin="round" opacity="0.7" />
<polyline points="813.5,388.5 813.6,387.4 813.75,388.4 814,388.6 814.25,386.9 814.5,386.2 814.6,385.7 814.75,386.3" fill="none" stroke="#f8f21e" stroke-width="0.9" stroke-linejoin="round" opacity="1" />
<polyline points="814.75,386.3 815,388.0 815.25,389.9 815.5,392.1 815.75,393.6 816,395.4 816.1,395.4 816.25,395.4 816.5,396.9 816.75,398.1 817,399.6 817.25,401.6 817.5,403.5 817.75,405.0 818,405.1 818.25,406.3 818.5,408.7 818.75,408.5" fill="none" stroke="#f8f21e" stroke-width="0.9" stroke-linejoin="round" opacity="0.7" />
<polyline points="818.75,408.5 819,407.8 819.1,408.7 819.25,408.5 819.5,408.2 819.75,408.9 820,408.5 820.25,408.7 820.5,409.5 820.75,408.8 821,408.6 821.25,409.7 821.5,409.6 821.75,409.3 822,409.7 822.25,409.4 822.5,409.6 822.75,409.9 823,409.0 823.25,409.0 823.5,409.9 823.75,410.1 824,409.4 824.25,409.2 824.5,410.2 824.6,410.1 824.75,410.1 825,411.2" fill="none" stroke="#f8f21e" stroke-width="0.9" stroke-linejoin="round" opacity="1" />
<polyline points="825,411.2 825.25,411.7 825.5,412.7 825.75,414.2 826,416.0 826.25,417.8 826.5,418.7 826.6,419.3 826.75,420.5 827,422.7" fill="none" stroke="#f8f21e" stroke-width="0.9" stroke-linejoin="round" opacity="0.7" />
<polyline points="827,422.7 827.25,425.2 827.5,426.8" fill="none" stroke="#f8f21e" stroke-width="0.9" stroke-linejoin="round" opacity="0.5" />
<polyline points="827.5,426.8 827.75,428.5 828,431.2 828.25,433.1 828.5,433.8" fill="none" stroke="#f8f21e" stroke-width="0.9" stroke-linejoin="round" opacity="0.7" />
<polyline points="828.5,433.8 828.6,434.8" fill="none" stroke="#f8f21e" stroke-width="0.9" stroke-linejoin="round" opacity="1" />
<polyline points="828.6,434.8 828.75,434.8" fill="none" stroke="#f8f21e" stroke-width="0.9" stroke-linejoin="round" opacity="0.7" />
<polyline points="828.75,434.8 829,430.7 829.25,425.8 829.5,420.8 829.75,414.7 830,407.8 830.1,405.8 830.25,404.0 830.5,400.3 830.75,394.8 831,390.0 831.25,386.8 831.5,383.1 831.6,381.9 831.75,379.9 832,377.9" fill="none" stroke="#f8f21e" stroke-width="0.9" stroke-linejoin="round" opacity="0.5" />
<polyline points="832,377.9 832.25,375.6 832.5,374.3" fill="none" stroke="#f8f21e" stroke-width="0.9" stroke-linejoin="round" opacity="0.7" />
<polyline points="832.5,374.3 832.6,374.1" fill="none" stroke="#f8f21e" stroke-width="0.9" stroke-linejoin="round" opacity="1" />
<polyline points="832.6,374.1 832.75,374.2" fill="none" stroke="#f8f21e" stroke-width="0.9" stroke-linejoin="round" opacity="0.7" />
<polyline points="832.75,374.2 833,378.1 833.25,383.8 833.5,389.5 833.6,392.2 833.75,394.3 834,397.5 834.25,402.9 834.5,409.4 834.75,414.6 835,418.7 835.25,422.4 835.5,424.1" fill="none" stroke="#f8f21e" stroke-width="0.9" stroke-linejoin="round" opacity="0.5" />
<polyline points="835.5,424.1 835.75,425.1" fill="none" stroke="#f8f21e" stroke-width="0.9" stroke-linejoin="round" opacity="0.7" />
<polyline points="835.75,425.1 835.9,424.4 836,423.9" fill="none" stroke="#f8f21e" stroke-width="0.9" stroke-linejoin="round" opacity="1" />
<polyline points="836,423.9 836.25,423.5" fill="none" stroke="#f8f21e" stroke-width="0.9" stroke-linejoin="round" opacity="0.7" />
<polyline points="836.25,423.5 836.5,419.6 836.75,413.8 837,409.1 837.25,405.6 837.5,403.0 837.75,401.8" fill="none" stroke="#f8f21e" stroke-width="0.9" stroke-linejoin="round" opacity="0.5" />
<polyline points="837.75,401.8 837.9,401.5 838,399.9" fill="none" stroke="#f8f21e" stroke-width="0.9" stroke-linejoin="round" opacity="0.7" />
<polyline points="838,399.9 838.25,401.0 838.5,406.9 838.75,414.9 839,421.0 839.25,426.5 839.5,431.8 839.75,434.4" fill="none" stroke="#f8f21e" stroke-width="0.9" stroke-linejoin="round" opacity="0.5" />
<polyline points="839.75,434.4 839.8,434.6" fill="none" stroke="#f8f21e" stroke-width="0.9" stroke-linejoin="round" opacity="1" />
<polyline points="839.8,434.6 840,434.2" fill="none" stroke="#f8f21e" stroke-width="0.9" stroke-linejoin="round" opacity="0.7" />
<polyline points="840,434.2 840.25,432.4 840.5,428.5 840.75,423.8 841,419.8 841.25,414.2 841.5,408.5 841.75,406.0" fill="none" stroke="#f8f21e" stroke-width="0.9" stroke-linejoin="round" opacity="0.5" />
<polyline points="841.75,406.0 842,405.6" fill="none" stroke="#f8f21e" stroke-width="0.9" stroke-linejoin="round" opacity="0.7" />
<polyline points="842,405.6 842.1,405.3" fill="none" stroke="#f8f21e" stroke-width="0.9" stroke-linejoin="round" opacity="1" />
<polyline points="842.1,405.3 842.25,405.4 842.5,407.3" fill="none" stroke="#f8f21e" stroke-width="0.9" stroke-linejoin="round" opacity="0.7" />
<polyline points="842.5,407.3 842.75,410.5 843,414.0 843.25,417.0" fill="none" stroke="#f8f21e" stroke-width="0.9" stroke-linejoin="round" opacity="0.5" />
<polyline points="843.25,417.0 843.5,419.3" fill="none" stroke="#f8f21e" stroke-width="0.9" stroke-linejoin="round" opacity="0.7" />
<polyline points="843.5,419.3 843.6,419.3 843.75,419.5" fill="none" stroke="#f8f21e" stroke-width="0.9" stroke-linejoin="round" opacity="1" />
<polyline points="843.75,419.5 844,418.2" fill="none" stroke="#f8f21e" stroke-width="0.9" stroke-linejoin="round" opacity="0.7" />
<polyline points="844,418.2 844.25,414.6 844.5,411.5 844.75,407.8 845,405.3" fill="none" stroke="#f8f21e" stroke-width="0.9" stroke-linejoin="round" opacity="0.5" />
<polyline points="845,405.3 845.25,405.7" fill="none" stroke="#f8f21e" stroke-width="0.9" stroke-linejoin="round" opacity="0.7" />
<polyline points="845.25,405.7 845.4,405.2 845.5,404.3" fill="none" stroke="#f8f21e" stroke-width="0.9" stroke-linejoin="round" opacity="1" />
<polyline points="845.5,404.3 845.75,405.1 846,407.2" fill="none" stroke="#f8f21e" stroke-width="0.9" stroke-linejoin="round" opacity="0.7" />
<polyline points="846,407.2 846.25,409.3 846.5,411.5" fill="none" stroke="#f8f21e" stroke-width="0.9" stroke-linejoin="round" opacity="0.5" />
<polyline points="846.5,411.5 846.75,413.5 847,414.1" fill="none" stroke="#f8f21e" stroke-width="0.9" stroke-linejoin="round" opacity="0.7" />
<polyline points="847,414.1 847.1,414.4 847.25,414.4" fill="none" stroke="#f8f21e" stroke-width="0.9" stroke-linejoin="round" opacity="1" />
<polyline points="847.25,414.4 847.5,412.8 847.75,412.6 848,412.1 848.25,409.0 848.5,408.3 848.75,408.3" fill="none" stroke="#f8f21e" stroke-width="0.9" stroke-linejoin="round" opacity="0.7" />
<polyline points="848.75,408.3 848.9,407.8 849,408.2 849.25,408.2" fill="none" stroke="#f8f21e" stroke-width="0.9" stroke-linejoin="round" opacity="1" />
<polyline points="849.25,408.2 849.5,407.5 849.75,409.1 850,411.7 850.25,413.2" fill="none" stroke="#f8f21e" stroke-width="0.9" stroke-linejoin="round" opacity="0.7" />
<polyline points="850.25,413.2 850.5,413.3 850.6,412.7 850.75,413.2 851,412.8 851.25,412.0" fill="none" stroke="#f8f21e" stroke-width="0.9" stroke-linejoin="round" opacity="1" />
<polyline points="851.25,412.0 851.5,411.5 851.75,410.4 852,410.4" fill="none" stroke="#f8f21e" stroke-width="0.9" stroke-linejoin="round" opacity="0.7" />
<polyline points="852,410.4 852.25,409.8 852.5,408.8 852.6,409.1 852.75,408.8 853,409.4 853.25,410.7 853.5,411.6 853.75,412.0 854,411.6 854.25,412.2 854.5,411.9 854.6,411.6 854.75,412.5 855,412.6 855.25,411.7 855.5,410.5 855.75,411.6 856,411.9 856.25,410.1 856.5,409.6 856.75,410.2 857,411.3 857.1,411.2 857.25,411.3 857.5,411.4 857.75,411.1 858,411.5 858.25,411.2 858.5,410.9 858.75,411.0 859,410.7 859.25,411.2 859.5,411.2 859.75,411.0 860,411.1 860.25,411.1 860.5,411.3 860.75,411.9 861,412.2 861.1,411.7 861.25,412.5 861.5,411.1 861.75,409.8 862,409.9 862.5,410.4 863,411.9 863.5,412.2 864,412.2 864.5,411.5 865,412.2 865.5,412.7 866,411.8 866.5,411.2 867,411.5 867.5,411.8 868,411.4 868.5,411.7 869,412.0 869.5,411.6 870,412.0 870.5,412.0 871,410.9 871.5,411.5 872,412.1 872.5,412.0 873,411.7 873.5,411.7 874,411.7 874.5,410.9 875,411.5 875.5,411.8 876,411.4 876.5,412.2 877,412.3 877.5,413.3 878,412.6 878.5,411.0 879,411.7 879.5,412.7 880,412.6 880.5,411.3 881,412.0 881.5,412.2 882,411.6 882.5,412.5 883,412.3 883.5,411.7 884,412.2 884.5,412.4 885,412.3 885.5,412.0 886,411.8 886.5,411.7 887,411.1 887.5,412.4 888,413.4 888.5,413.0 889,412.4 889.5,411.9 890,412.3 890.5,411.7 891,412.0 891.5,412.4 892,412.0 892.5,411.7 893,412.3 893.5,413.3 894,413.1 894.5,412.3 895,411.9 895.5,412.9 896,413.0 896.5,412.6 897,412.8 897.5,412.1 898,412.8 898.5,412.4 899,411.8 899.5,412.7 900,411.8 900.5,412.0 901,413.0 901.5,412.9 902,412.2 902.5,412.4 903,413.3 903.5,413.2 904,413.5 904.5,413.8 905,413.4 905.5,413.6 906,412.9 906.5,412.0 907,412.6 907.5,413.1 908,413.5 908.5,413.8 909,413.2 909.5,412.8 910,412.6 910.5,412.3 911,412.2 911.5,412.8 912,412.8 912.5,412.2 913,412.5 913.5,412.4 914,412.2 914.5,411.4 915,411.7 915.5,412.6 916,412.5 916.5,412.8 917,411.9 917.5,412.8 918,413.7 918.5,412.7 919,411.8 919.5,412.0 920,413.0 920.5,412.6 921,412.5 921.5,413.3 922,413.0 922.5,412.0 923,412.8 923.5,413.3 924,412.6 924.5,413.6 925,413.7 925.5,412.6 926,412.6 926.5,412.5 927,412.5 927.5,412.7 928,412.3 928.5,412.1 929,412.6 929.5,412.9 930,413.0 930.5,413.2 931,413.0 931.5,412.9 932,412.6 932.5,412.2 933,412.9 933.5,412.0 934,411.7 934.5,414.1 935,413.1 935.5,412.3 936,412.3 936.5,411.8 937,413.3 937.5,413.8 938,412.6 938.5,411.3 939,411.1 939.5,412.0 940,412.5 940.5,412.1 941,412.4 941.5,412.6 942,412.7 942.5,412.6 943,411.6 943.5,412.2 944,411.6 944.5,411.5 945,412.5 945.5,411.8 946,411.9 946.5,411.8 947,412.0 947.5,412.0 948,411.5 948.5,412.0 949,412.3 949.5,412.5 950,412.7 950.5,411.7 951,412.0 951.5,412.7 952,412.0 952.5,411.5 953,412.6 953.5,412.2 954,411.1 954.5,411.7 955,411.5 955.5,410.3 956,410.0 956.5,411.3 957,412.4 957.5,412.5 958,412.4 958.5,411.5 959,411.6 959.5,412.7 960,412.1 960.5,412.0 961,412.1 961.5,411.7 962,412.1 962.5,411.3 963,411.8 963.5,412.0 964,411.3 964.5,411.5" fill="none" stroke="#f8f21e" stroke-width="0.9" stroke-linejoin="round" opacity="1" />
</g>
<text x="42.8" y="244.9" font-size="16.6" fill="#f8f21e" textLength="21.9" lengthAdjust="spacingAndGlyphs" >Vgs</text>
<text x="102.5" y="405.7" font-size="16.6" fill="#8fc22f" textLength="25.7" lengthAdjust="spacingAndGlyphs" >Icoil</text>
<text x="53.2" y="453.8" font-size="16.6" fill="#ee8e1b" textLength="47" lengthAdjust="spacingAndGlyphs" style="filter:drop-shadow(-0.7px -0.7px 0 #9440c0)">Vds x Id</text>
<text x="66.9" y="518.7" font-size="16.6" fill="#ea3a60" textLength="21.1" lengthAdjust="spacingAndGlyphs" >Vds</text>
<text x="317.6" y="515.1" font-size="16.6" fill="#1dc2ca" textLength="10.9" lengthAdjust="spacingAndGlyphs" >Id</text>
<text x="70.3" y="530.2" font-size="7.3" fill="#b4b4b4" text-anchor="middle" >44.4 µs</text>
<text x="164.2" y="530.2" font-size="7.3" fill="#b4b4b4" text-anchor="middle" >44.8 µs</text>
<text x="258.1" y="530.2" font-size="7.3" fill="#b4b4b4" text-anchor="middle" >45.2 µs</text>
<text x="352.00000000000006" y="530.2" font-size="7.3" fill="#b4b4b4" text-anchor="middle" >45.6 µs</text>
<text x="445.90000000000003" y="530.2" font-size="7.3" fill="#b4b4b4" text-anchor="middle" >46 µs</text>
<text x="539.8" y="530.2" font-size="7.3" fill="#b4b4b4" text-anchor="middle" >46.4 µs</text>
<text x="633.7" y="530.2" font-size="7.3" fill="#b4b4b4" text-anchor="middle" >46.8 µs</text>
<text x="727.6" y="530.2" font-size="7.3" fill="#b4b4b4" text-anchor="middle" >47.2 µs</text>
<text x="821.5" y="530.2" font-size="7.3" fill="#b4b4b4" text-anchor="middle" >47.6 µs</text>
<text x="915.4" y="530.2" font-size="7.3" fill="#b4b4b4" text-anchor="middle" >48 µs</text>
<text x="962" y="185.6" font-size="7.4" fill="#25a2a8" text-anchor="end" >400 A</text>
<text x="962" y="224.5" font-size="7.4" fill="#25a2a8" text-anchor="end" >350 A</text>
<text x="962" y="263.4" font-size="7.4" fill="#25a2a8" text-anchor="end" >300 A</text>
<text x="962" y="302.3" font-size="7.4" fill="#25a2a8" text-anchor="end" >250 A</text>
<text x="962" y="341.2" font-size="7.4" fill="#25a2a8" text-anchor="end" >200 A</text>
<text x="962" y="380.09999999999997" font-size="7.4" fill="#25a2a8" text-anchor="end" >150 A</text>
<text x="962" y="419.0" font-size="7.4" fill="#25a2a8" text-anchor="end" >100 A</text>
<text x="962" y="457.9" font-size="7.4" fill="#25a2a8" text-anchor="end" >50 A</text>
<text x="962" y="496.79999999999995" font-size="7.4" fill="#25a2a8" text-anchor="end" >0 A</text>
<polygon points="27.3,371.2 41.9,371.2 47.0,377.4 41.9,383.6 27.3,383.6" fill="#242208" stroke="#8f8a24" stroke-width="1"/>
<text x="35.5" y="380.0" font-size="7" fill="#c4bc32" text-anchor="middle" font-weight="bold" >C 1</text>
<polygon points="27.3,451.3 41.9,451.3 47.0,457.5 41.9,463.7 27.3,463.7" fill="#2a1a08" stroke="#b46c1c" stroke-width="1"/>
<text x="35.5" y="460.1" font-size="7" fill="#d4862a" text-anchor="middle" font-weight="bold" >M 1</text>
<polygon points="27.3,488.6 41.9,488.6 47.0,494.8 41.9,501.0 27.3,501.0" fill="#1dc2ca" stroke="#1dc2ca" stroke-width="1"/>
<text x="35.5" y="497.40000000000003" font-size="7" fill="#06444a" text-anchor="middle" font-weight="bold" >C 2</text>
<clipPath id="oc"><rect x="26.5" y="30.3" width="938.0" height="100.00000000000001"/></clipPath>
<g clip-path="url(#oc)">
<line x1="26.1" y1="30.3" x2="26.1" y2="130.3" stroke="#626262" stroke-width="1" stroke-dasharray="1.2 0.8" opacity="0.8"/>
<line x1="120.0" y1="30.3" x2="120.0" y2="130.3" stroke="#626262" stroke-width="1" stroke-dasharray="1.2 0.8" opacity="0.8"/>
<line x1="213.9" y1="30.3" x2="213.9" y2="130.3" stroke="#626262" stroke-width="1" stroke-dasharray="1.2 0.8" opacity="0.8"/>
<line x1="307.8" y1="30.3" x2="307.8" y2="130.3" stroke="#626262" stroke-width="1" stroke-dasharray="1.2 0.8" opacity="0.8"/>
<line x1="401.7" y1="30.3" x2="401.7" y2="130.3" stroke="#626262" stroke-width="1" stroke-dasharray="1.2 0.8" opacity="0.8"/>
<line x1="495.6" y1="30.3" x2="495.6" y2="130.3" stroke="#626262" stroke-width="1" stroke-dasharray="1.2 0.8" opacity="0.8"/>
<line x1="589.5" y1="30.3" x2="589.5" y2="130.3" stroke="#626262" stroke-width="1" stroke-dasharray="1.2 0.8" opacity="0.8"/>
<line x1="683.4" y1="30.3" x2="683.4" y2="130.3" stroke="#626262" stroke-width="1" stroke-dasharray="1.2 0.8" opacity="0.8"/>
<line x1="777.3" y1="30.3" x2="777.3" y2="130.3" stroke="#626262" stroke-width="1" stroke-dasharray="1.2 0.8" opacity="0.8"/>
<line x1="871.2" y1="30.3" x2="871.2" y2="130.3" stroke="#626262" stroke-width="1" stroke-dasharray="1.2 0.8" opacity="0.8"/>
<line x1="965.1" y1="30.3" x2="965.1" y2="130.3" stroke="#626262" stroke-width="1" stroke-dasharray="1.2 0.8" opacity="0.8"/>
<line x1="44.38" y1="30.7" x2="964.5" y2="30.7" stroke="#777" stroke-width="1" stroke-dasharray="1.2 17.580" opacity="0.75"/>
<line x1="44.38" y1="40.7" x2="964.5" y2="40.7" stroke="#777" stroke-width="1" stroke-dasharray="1.2 17.580" opacity="0.75"/>
<line x1="44.38" y1="50.7" x2="964.5" y2="50.7" stroke="#777" stroke-width="1" stroke-dasharray="1.2 17.580" opacity="0.75"/>
<line x1="44.38" y1="60.7" x2="964.5" y2="60.7" stroke="#777" stroke-width="1" stroke-dasharray="1.2 17.580" opacity="0.75"/>
<line x1="44.38" y1="70.7" x2="964.5" y2="70.7" stroke="#777" stroke-width="1" stroke-dasharray="1.2 17.580" opacity="0.75"/>
<line x1="44.38" y1="80.7" x2="964.5" y2="80.7" stroke="#777" stroke-width="1" stroke-dasharray="1.2 17.580" opacity="0.75"/>
<line x1="44.38" y1="90.7" x2="964.5" y2="90.7" stroke="#777" stroke-width="1" stroke-dasharray="1.2 17.580" opacity="0.75"/>
<line x1="44.38" y1="100.7" x2="964.5" y2="100.7" stroke="#777" stroke-width="1" stroke-dasharray="1.2 17.580" opacity="0.75"/>
<line x1="44.38" y1="110.7" x2="964.5" y2="110.7" stroke="#777" stroke-width="1" stroke-dasharray="1.2 17.580" opacity="0.75"/>
<line x1="44.38" y1="120.7" x2="964.5" y2="120.7" stroke="#777" stroke-width="1" stroke-dasharray="1.2 17.580" opacity="0.75"/>
<line x1="26.5" y1="120.7" x2="964.5" y2="120.7" stroke="#b0b0b0" stroke-width="1.3" stroke-dasharray="2.2 1.6"/>
<polyline points="26.5,62.9 120,62.9" fill="none" stroke="#d83a58" stroke-width="1.4" stroke-linejoin="round" opacity="1" />
<polyline points="120.3,122.0 535.1,122.0" fill="none" stroke="#d83a58" stroke-width="1.4" stroke-linejoin="round" opacity="1" />
<polyline points="120.2,62.9 120.2,122.0" fill="none" stroke="#d83a58" stroke-width="0.9" stroke-linejoin="round" opacity="0.7" />
<polygon points="26.5,108.9 27.1,108.6 27.7,109.2 28.3,109.1 28.9,108.7 29.5,109.2 30.1,109.0 30.7,108.9 31.3,108.9 31.9,108.5 32.5,109.2 33.1,108.7 33.7,108.8 34.3,108.5 34.9,109.2 35.5,108.4 36.1,109.3 36.7,108.7 37.3,109.0 37.9,109.1 38.5,108.9 39.1,109.0 39.7,109.3 40.3,109.0 40.9,109.1 41.5,108.9 42.1,108.5 42.7,109.2 43.3,108.8 43.9,109.2 44.5,108.7 45.1,109.3 45.7,109.3 46.3,109.1 46.9,108.8 47.5,109.1 48.1,108.8 48.7,108.6 49.3,109.2 49.9,108.7 50.5,108.7 51.1,108.9 51.7,108.3 52.3,109.2 52.9,108.7 53.5,109.3 54.1,109.3 54.7,108.3 55.3,109.2 55.9,109.2 56.5,108.8 57.1,108.7 57.7,108.9 58.3,108.8 58.9,109.1 59.5,108.9 60.1,108.6 60.7,109.0 61.3,108.1 61.9,109.0 62.5,108.9 63.1,108.9 63.7,109.0 64.3,109.3 64.9,108.6 65.5,109.1 66.1,109.2 66.7,109.3 67.3,109.0 67.9,109.1 68.5,109.2 69.1,109.2 69.7,109.2 70.3,108.9 70.9,108.9 71.5,108.7 72.1,108.7 72.7,108.7 73.3,108.8 73.9,109.1 74.5,108.8 75.1,108.7 75.7,109.1 76.3,108.8 76.9,108.7 77.5,109.0 78.1,108.7 78.7,109.1 79.3,109.3 79.9,109.1 80.5,109.3 81.1,108.6 81.7,109.0 82.3,108.7 82.9,108.4 83.5,109.2 84.1,109.1 84.7,109.2 85.3,109.1 85.9,109.1 86.5,108.9 87.1,109.0 87.7,109.2 88.3,109.1 88.9,109.2 89.5,108.3 90.1,109.1 90.7,108.5 91.3,108.4 91.9,109.1 92.5,108.8 93.1,108.8 93.7,109.3 94.3,109.0 94.9,109.0 95.5,108.8 96.1,109.3 96.7,108.8 97.3,109.1 97.9,109.1 98.5,108.4 99.1,108.7 99.7,109.2 100.3,109.1 100.9,108.8 101.5,108.8 102.1,109.3 102.7,109.1 103.3,109.0 103.9,109.3 104.5,108.9 105.1,109.2 105.7,108.9 106.3,109.1 106.9,109.1 107.5,108.4 108.1,109.0 108.7,109.2 109.3,108.9 109.9,108.8 110.5,109.1 111.1,108.9 111.7,109.0 112.3,108.5 112.9,109.3 113.5,108.6 114.1,108.3 114.7,108.8 115.3,108.8 115.9,108.6 116.5,109.3 117.1,108.4 117.7,109.1 118.3,109.0 118.9,108.5 119.5,108.9 120.1,109.2 120.1,114.0 119.5,113.8 118.9,113.9 118.3,113.4 117.7,114.3 117.1,113.8 116.5,113.4 115.9,113.7 115.3,113.5 114.7,113.6 114.1,113.6 113.5,113.3 112.9,113.9 112.3,113.8 111.7,113.8 111.1,114.1 110.5,113.6 109.9,113.7 109.3,113.4 108.7,113.7 108.1,113.8 107.5,113.6 106.9,113.7 106.3,113.8 105.7,113.3 105.1,113.4 104.5,113.5 103.9,113.6 103.3,114.5 102.7,113.3 102.1,113.3 101.5,113.3 100.9,113.9 100.3,113.9 99.7,113.4 99.1,113.4 98.5,113.4 97.9,113.5 97.3,113.4 96.7,113.7 96.1,114.2 95.5,114.0 94.9,113.7 94.3,113.3 93.7,113.9 93.1,114.2 92.5,113.7 91.9,113.9 91.3,113.6 90.7,113.5 90.1,113.5 89.5,113.3 88.9,113.5 88.3,113.7 87.7,114.0 87.1,113.8 86.5,113.8 85.9,113.4 85.3,113.4 84.7,113.5 84.1,113.5 83.5,113.5 82.9,113.4 82.3,114.1 81.7,113.8 81.1,113.4 80.5,113.6 79.9,113.7 79.3,113.9 78.7,113.4 78.1,113.6 77.5,113.5 76.9,114.0 76.3,113.3 75.7,113.6 75.1,113.4 74.5,113.5 73.9,113.7 73.3,113.6 72.7,113.5 72.1,113.8 71.5,113.4 70.9,113.8 70.3,113.9 69.7,114.5 69.1,113.7 68.5,113.3 67.9,114.4 67.3,113.9 66.7,113.4 66.1,114.0 65.5,113.9 64.9,113.4 64.3,114.7 63.7,113.3 63.1,113.3 62.5,113.7 61.9,113.3 61.3,113.4 60.7,113.9 60.1,113.5 59.5,113.7 58.9,114.2 58.3,114.2 57.7,113.4 57.1,113.6 56.5,113.7 55.9,113.6 55.3,113.8 54.7,113.9 54.1,113.3 53.5,113.6 52.9,114.4 52.3,113.6 51.7,114.0 51.1,113.8 50.5,114.0 49.9,113.3 49.3,114.2 48.7,113.4 48.1,113.6 47.5,113.7 46.9,113.5 46.3,113.8 45.7,113.5 45.1,113.3 44.5,113.6 43.9,113.8 43.3,114.6 42.7,113.8 42.1,113.6 41.5,114.4 40.9,114.2 40.3,113.3 39.7,113.4 39.1,113.4 38.5,113.6 37.9,113.5 37.3,113.6 36.7,114.5 36.1,114.0 35.5,113.8 34.9,113.8 34.3,113.8 33.7,114.3 33.1,114.1 32.5,113.6 31.9,113.7 31.3,113.4 30.7,113.9 30.1,113.8 29.5,113.6 28.9,113.8 28.3,113.4 27.7,113.8 27.1,113.5 26.5,113.4" fill="#ee9226" opacity="1" />
<polyline points="120,111.6 535.1,112.3" fill="none" stroke="#b9742a" stroke-width="1.3" stroke-linejoin="round" opacity="1" />
<polyline points="26.5,120.3 120,120.3 535.1,100.5" fill="none" stroke="#22c6d0" stroke-width="1.9" stroke-linejoin="round" opacity="1" />
<polyline points="26.5,99.8 120,99.8" fill="none" stroke="#dcd628" stroke-width="1.5" stroke-linejoin="round" opacity="1" />
<polyline points="120,99.8 120,55.5 120.4,60.0 121,60.9 535.1,60.8" fill="none" stroke="#dcd628" stroke-width="1.0" stroke-linejoin="round" opacity="0.8" />
<polyline points="120.6,60.9 535.1,60.8" fill="none" stroke="#dcd628" stroke-width="1.5" stroke-linejoin="round" opacity="1" />
<polyline points="572.5,99.8 573.5,99.8 574.5,99.8 575.5,99.7 576.5,99.7 577.5,99.7 578.5,99.7 579.5,99.7 580.5,99.7 581.5,99.6 582.5,99.6 583.5,99.6 584.5,99.6 585.5,99.6 586.5,99.6 587.5,99.6 588.5,99.6 589.5,99.6 590.5,99.6 591.5,99.6 592.5,99.6 593.5,99.6 594.5,99.6 595.5,99.6 596.5,99.6 597.5,99.6 598.5,99.6 599.5,99.6 600.5,99.6 601.5,99.6 602.5,99.6 603.5,99.7 604.5,99.7 605.5,99.7 606.5,99.7 607.5,99.7 608.5,99.7 609.5,99.8 610.5,99.8 611.5,99.8 612.5,99.8 613.5,99.9 614.5,99.9 615.5,99.9 616.5,99.9 617.5,99.9 618.5,100.0 619.5,100.0 620.5,100.0 621.5,100.0 622.5,100.0 623.5,100.1 624.5,100.1 625.5,100.1 626.5,100.1 627.5,100.1 628.5,100.2 629.5,100.2 630.5,100.2 631.5,100.2 632.5,100.2 633.5,100.2 634.5,100.2 635.5,100.2 636.5,100.2 637.5,100.2 638.5,100.2 639.5,100.2 640.5,100.2 641.5,100.2 642.5,100.2 643.5,100.2 644.5,100.2 645.5,100.2 646.5,100.2 647.5,100.2 648.5,100.2 649.5,100.1 650.5,100.1 651.5,100.1 652.5,100.1 653.5,100.1 654.5,100.1 655.5,100.0 656.5,100.0 657.5,100.0 658.5,100.0 659.5,100.0 660.5,99.9 661.5,99.9 662.5,99.9 663.5,99.9 664.5,99.9 665.5,99.8 666.5,99.8 667.5,99.8 668.5,99.8 669.5,99.8 670.5,99.7 671.5,99.7 672.5,99.7 673.5,99.7 674.5,99.7 675.5,99.7 676.5,99.6 677.5,99.6 678.5,99.6 679.5,99.6 680.5,99.6 681.5,99.6 682.5,99.6 683.5,99.6 684.5,99.6 685.5,99.6 686.5,99.6 687.5,99.6 688.5,99.6 689.5,99.6 690.5,99.6 691.5,99.6 692.5,99.6 693.5,99.6 694.5,99.6 695.5,99.7 696.5,99.7 697.5,99.7 698.5,99.7 699.5,99.7 700.5,99.7 701.5,99.7 702.5,99.8 703.5,99.8 704.5,99.8 705.5,99.8 706.5,99.8 707.5,99.9 708.5,99.9 709.5,99.9 710.5,99.9 711.5,99.9 712.5,100.0 713.5,100.0 714.5,100.0 715.5,100.0 716.5,100.0 717.5,100.1 718.5,100.1 719.5,100.1 720.5,100.1 721.5,100.1 722.5,100.1 723.5,100.1 724.5,100.1 725.5,100.2 726.5,100.2 727.5,100.2 728.5,100.2 729.5,100.2 730.5,100.2 731.5,100.2 732.5,100.2 733.5,100.2 734.5,100.2 735.5,100.2 736.5,100.2 737.5,100.2 738.5,100.2 739.5,100.2 740.5,100.2 741.5,100.1 742.5,100.1 743.5,100.1 744.5,100.1 745.5,100.1 746.5,100.1 747.5,100.1 748.5,100.0 749.5,100.0 750.5,100.0 751.5,100.0 752.5,100.0 753.5,100.0 754.5,99.9 755.5,99.9 756.5,99.9 757.5,99.9 758.5,99.9 759.5,99.8 760.5,99.8 761.5,99.8 762.5,99.8 763.5,99.8 764.5,99.8 765.5,99.7 766.5,99.7 767.5,99.7 768.5,99.7 769.5,99.7 770.5,99.7 771.5,99.7 772.5,99.7 773.5,99.6 774.5,99.6 775.5,99.6 776.5,99.6 777.5,99.6 778.5,99.6 779.5,99.6 780.5,99.6 781.5,99.6 782.5,99.6 783.5,99.6 784.5,99.6 785.5,99.6 786.5,99.6 787.5,99.7 788.5,99.7 789.5,99.7 790.5,99.7 791.5,99.7 792.5,99.7 793.5,99.7 794.5,99.7 795.5,99.8 796.5,99.8 797.5,99.8 798.5,99.8 799.5,99.8 800.5,99.8 801.5,99.9 802.5,99.9 803.5,99.9 804.5,99.9 805.5,99.9 806.5,100.0 807.5,100.0 808.5,100.0 809.5,100.0 810.5,100.0 811.5,100.0 812.5,100.1 813.5,100.1 814.5,100.1 815.5,100.1 816.5,100.1 817.5,100.1 818.5,100.1 819.5,100.1 820.5,100.1 821.5,100.1 822.5,100.2 823.5,100.2 824.5,100.2 825.5,100.2 826.5,100.2 827.5,100.2 828.5,100.2 829.5,100.2 830.5,100.2 831.5,100.2 832.5,100.1 833.5,100.1 834.5,100.1 835.5,100.1 836.5,100.1 837.5,100.1 838.5,100.1 839.5,100.1 840.5,100.1 841.5,100.0 842.5,100.0 843.5,100.0 844.5,100.0 845.5,100.0 846.5,100.0 847.5,100.0 848.5,99.9 849.5,99.9 850.5,99.9 851.5,99.9 852.5,99.9 853.5,99.8 854.5,99.8 855.5,99.8 856.5,99.8 857.5,99.8 858.5,99.8 859.5,99.8 860.5,99.7 861.5,99.7 862.5,99.7 863.5,99.7 864.5,99.7 865.5,99.7 866.5,99.7 867.5,99.7 868.5,99.7 869.5,99.7 870.5,99.7 871.5,99.7 872.5,99.7 873.5,99.6 874.5,99.6 875.5,99.7 876.5,99.7 877.5,99.7 878.5,99.7 879.5,99.7 880.5,99.7 881.5,99.7 882.5,99.7 883.5,99.7 884.5,99.7 885.5,99.7 886.5,99.7 887.5,99.7 888.5,99.8 889.5,99.8 890.5,99.8 891.5,99.8 892.5,99.8 893.5,99.8 894.5,99.9 895.5,99.9 896.5,99.9 897.5,99.9 898.5,99.9 899.5,99.9 900.5,99.9 901.5,100.0 902.5,100.0 903.5,100.0 904.5,100.0 905.5,100.0 906.5,100.0 907.5,100.0 908.5,100.1 909.5,100.1 910.5,100.1 911.5,100.1 912.5,100.1 913.5,100.1 914.5,100.1 915.5,100.1 916.5,100.1 917.5,100.1 918.5,100.1 919.5,100.1 920.5,100.1 921.5,100.1 922.5,100.1 923.5,100.1 924.5,100.1 925.5,100.1 926.5,100.1 927.5,100.1 928.5,100.1 929.5,100.1 930.5,100.1 931.5,100.1 932.5,100.1 933.5,100.1 934.5,100.0 935.5,100.0 936.5,100.0 937.5,100.0 938.5,100.0 939.5,100.0 940.5,100.0 941.5,99.9 942.5,99.9 943.5,99.9 944.5,99.9 945.5,99.9 946.5,99.9 947.5,99.9 948.5,99.8 949.5,99.8 950.5,99.8 951.5,99.8 952.5,99.8 953.5,99.8 954.5,99.8 955.5,99.7 956.5,99.7 957.5,99.7 958.5,99.7 959.5,99.7 960.5,99.7 961.5,99.7 962.5,99.7 963.5,99.7 964.5,99.7" fill="none" stroke="#8cbf30" stroke-width="1.3" stroke-linejoin="round" opacity="1" />
<polygon points="572.5,107.2 573.5,107.5 574.5,106.9 575.5,107.4 576.5,107.2 577.5,107.6 578.5,107.7 579.5,107.8 580.5,107.8 581.5,107.6 582.5,107.0 583.5,107.4 584.5,108.1 585.5,106.9 586.5,107.8 587.5,108.1 588.5,107.9 589.5,107.5 590.5,108.0 591.5,107.5 592.5,108.1 593.5,108.2 594.5,107.5 595.5,107.1 596.5,108.2 597.5,108.0 598.5,107.8 599.5,107.7 600.5,107.8 601.5,107.5 602.5,107.8 603.5,107.5 604.5,107.1 605.5,107.7 606.5,107.2 607.5,107.6 608.5,107.8 609.5,107.6 610.5,107.7 611.5,107.5 612.5,107.6 613.5,107.1 614.5,107.5 615.5,107.1 616.5,107.0 617.5,107.3 618.5,107.0 619.5,106.4 620.5,106.6 621.5,106.6 622.5,107.0 623.5,106.8 624.5,106.9 625.5,106.5 626.5,106.6 627.5,106.7 628.5,106.4 629.5,106.4 630.5,106.8 631.5,106.5 632.5,106.6 633.5,106.5 634.5,106.0 635.5,105.5 636.5,106.6 637.5,106.4 638.5,106.2 639.5,106.5 640.5,106.6 641.5,106.4 642.5,106.7 643.5,106.4 644.5,105.9 645.5,106.3 646.5,106.2 647.5,106.7 648.5,106.5 649.5,106.1 650.5,106.8 651.5,106.5 652.5,106.5 653.5,106.4 654.5,106.7 655.5,106.9 656.5,106.9 657.5,106.2 658.5,106.6 659.5,107.1 660.5,107.1 661.5,107.2 662.5,107.3 663.5,106.8 664.5,106.8 665.5,107.1 666.5,107.1 667.5,107.6 668.5,107.1 669.5,106.7 670.5,107.3 671.5,106.7 672.5,107.8 673.5,107.8 674.5,107.9 675.5,107.5 676.5,107.8 677.5,107.2 678.5,107.9 679.5,108.1 680.5,107.9 681.5,108.1 682.5,108.2 683.5,107.3 684.5,107.8 685.5,107.5 686.5,107.5 687.5,107.1 688.5,107.5 689.5,107.3 690.5,108.2 691.5,107.8 692.5,108.2 693.5,107.6 694.5,107.5 695.5,107.2 696.5,107.4 697.5,107.4 698.5,107.6 699.5,107.9 700.5,107.5 701.5,107.8 702.5,107.7 703.5,107.8 704.5,107.7 705.5,107.1 706.5,107.2 707.5,107.4 708.5,107.1 709.5,107.2 710.5,107.1 711.5,106.9 712.5,107.0 713.5,106.5 714.5,107.2 715.5,106.2 716.5,106.9 717.5,106.9 718.5,106.9 719.5,107.0 720.5,106.5 721.5,106.5 722.5,106.2 723.5,106.6 724.5,106.4 725.5,106.7 726.5,106.1 727.5,105.8 728.5,106.4 729.5,106.4 730.5,106.5 731.5,106.4 732.5,106.2 733.5,106.6 734.5,106.3 735.5,106.2 736.5,106.5 737.5,106.5 738.5,106.0 739.5,106.6 740.5,105.9 741.5,106.6 742.5,106.6 743.5,106.6 744.5,106.8 745.5,106.1 746.5,106.3 747.5,106.7 748.5,106.7 749.5,106.9 750.5,107.0 751.5,106.7 752.5,105.9 753.5,105.8 754.5,106.3 755.5,106.8 756.5,107.2 757.5,107.2 758.5,107.3 759.5,107.0 760.5,107.1 761.5,107.4 762.5,106.7 763.5,107.4 764.5,107.5 765.5,107.7 766.5,107.8 767.5,107.8 768.5,107.6 769.5,107.5 770.5,107.6 771.5,107.6 772.5,107.7 773.5,108.1 774.5,108.0 775.5,108.0 776.5,108.0 777.5,108.0 778.5,108.0 779.5,107.8 780.5,107.7 781.5,108.0 782.5,108.0 783.5,107.8 784.5,107.7 785.5,107.8 786.5,107.7 787.5,108.0 788.5,108.1 789.5,108.0 790.5,107.7 791.5,108.1 792.5,107.6 793.5,107.5 794.5,107.4 795.5,107.6 796.5,107.3 797.5,106.9 798.5,107.7 799.5,107.7 800.5,106.7 801.5,107.6 802.5,107.6 803.5,106.8 804.5,107.0 805.5,107.4 806.5,107.0 807.5,106.9 808.5,106.7 809.5,106.6 810.5,106.9 811.5,107.1 812.5,106.8 813.5,106.9 814.5,106.6 815.5,106.6 816.5,106.8 817.5,106.3 818.5,106.6 819.5,106.5 820.5,106.3 821.5,106.2 822.5,106.2 823.5,106.5 824.5,106.1 825.5,105.2 826.5,106.1 827.5,105.8 828.5,106.0 829.5,106.4 830.5,106.3 831.5,106.6 832.5,106.5 833.5,105.8 834.5,106.3 835.5,106.0 836.5,106.5 837.5,106.2 838.5,106.1 839.5,106.4 840.5,106.9 841.5,106.4 842.5,106.8 843.5,106.3 844.5,107.0 845.5,106.8 846.5,106.2 847.5,107.0 848.5,107.2 849.5,106.8 850.5,107.1 851.5,107.3 852.5,107.0 853.5,106.9 854.5,107.3 855.5,107.0 856.5,107.2 857.5,107.4 858.5,106.7 859.5,107.6 860.5,107.4 861.5,107.6 862.5,107.9 863.5,107.9 864.5,106.9 865.5,107.7 866.5,107.7 867.5,107.4 868.5,108.1 869.5,108.2 870.5,107.9 871.5,108.1 872.5,108.0 873.5,107.8 874.5,108.2 875.5,108.0 876.5,107.9 877.5,107.5 878.5,107.8 879.5,108.1 880.5,108.1 881.5,107.3 882.5,108.1 883.5,107.3 884.5,106.8 885.5,108.0 886.5,108.0 887.5,107.9 888.5,107.8 889.5,107.9 890.5,107.3 891.5,107.4 892.5,106.9 893.5,106.4 894.5,107.3 895.5,107.2 896.5,106.6 897.5,107.1 898.5,107.3 899.5,107.2 900.5,106.6 901.5,106.8 902.5,106.4 903.5,106.6 904.5,106.8 905.5,106.6 906.5,106.3 907.5,106.2 908.5,106.7 909.5,106.8 910.5,106.0 911.5,106.6 912.5,106.5 913.5,106.7 914.5,106.7 915.5,106.6 916.5,106.6 917.5,106.6 918.5,106.4 919.5,106.2 920.5,106.2 921.5,106.2 922.5,106.3 923.5,106.3 924.5,105.9 925.5,106.4 926.5,106.3 927.5,106.1 928.5,106.2 929.5,106.7 930.5,106.2 931.5,106.8 932.5,106.2 933.5,106.7 934.5,106.5 935.5,106.2 936.5,106.8 937.5,106.9 938.5,106.6 939.5,106.4 940.5,107.2 941.5,106.9 942.5,107.1 943.5,106.9 944.5,106.7 945.5,107.4 946.5,107.0 947.5,107.4 948.5,107.3 949.5,107.6 950.5,107.3 951.5,107.7 952.5,107.5 953.5,107.5 954.5,107.7 955.5,107.8 956.5,108.0 957.5,107.7 958.5,107.5 959.5,107.2 960.5,107.2 961.5,107.7 962.5,108.0 963.5,108.0 964.5,107.6 964.5,113.2 963.5,113.5 962.5,113.3 961.5,113.3 960.5,113.0 959.5,112.9 958.5,113.1 957.5,112.7 956.5,113.2 955.5,112.8 954.5,112.8 953.5,112.7 952.5,113.1 951.5,112.6 950.5,113.3 949.5,112.8 948.5,112.3 947.5,112.6 946.5,112.8 945.5,112.3 944.5,113.1 943.5,112.7 942.5,112.3 941.5,112.1 940.5,112.2 939.5,112.2 938.5,112.2 937.5,112.3 936.5,111.8 935.5,112.4 934.5,111.8 933.5,111.8 932.5,111.9 931.5,111.9 930.5,112.1 929.5,111.6 928.5,112.0 927.5,111.5 926.5,111.4 925.5,111.4 924.5,111.4 923.5,111.6 922.5,111.6 921.5,111.5 920.5,111.5 919.5,111.5 918.5,111.6 917.5,111.6 916.5,111.6 915.5,111.6 914.5,112.0 913.5,111.9 912.5,111.7 911.5,112.0 910.5,111.6 909.5,111.7 908.5,111.9 907.5,111.9 906.5,112.1 905.5,111.9 904.5,112.8 903.5,113.2 902.5,112.9 901.5,112.4 900.5,112.5 899.5,112.3 898.5,112.2 897.5,112.5 896.5,112.4 895.5,112.7 894.5,113.2 893.5,112.5 892.5,112.5 891.5,112.8 890.5,112.9 889.5,113.1 888.5,112.7 887.5,112.7 886.5,113.4 885.5,112.8 884.5,114.1 883.5,113.2 882.5,113.3 881.5,113.0 880.5,113.2 879.5,113.5 878.5,113.6 877.5,113.0 876.5,113.0 875.5,113.2 874.5,113.3 873.5,113.2 872.5,113.4 871.5,113.1 870.5,113.6 869.5,113.2 868.5,113.2 867.5,113.9 866.5,113.3 865.5,112.9 864.5,113.2 863.5,113.1 862.5,112.8 861.5,112.9 860.5,113.1 859.5,112.6 858.5,113.1 857.5,112.5 856.5,112.7 855.5,112.7 854.5,112.6 853.5,112.6 852.5,112.5 851.5,112.3 850.5,112.3 849.5,112.8 848.5,112.8 847.5,112.3 846.5,112.1 845.5,112.3 844.5,112.4 843.5,111.8 842.5,111.9 841.5,112.1 840.5,111.6 839.5,111.6 838.5,112.1 837.5,112.2 836.5,111.7 835.5,112.1 834.5,111.5 833.5,111.7 832.5,111.6 831.5,111.7 830.5,112.4 829.5,111.8 828.5,111.6 827.5,111.7 826.5,111.5 825.5,112.4 824.5,111.6 823.5,111.4 822.5,111.6 821.5,111.5 820.5,111.8 819.5,111.6 818.5,112.1 817.5,111.9 816.5,112.1 815.5,112.2 814.5,112.2 813.5,111.8 812.5,112.4 811.5,111.9 810.5,112.5 809.5,112.8 808.5,112.0 807.5,112.4 806.5,112.6 805.5,112.3 804.5,112.4 803.5,112.4 802.5,113.0 801.5,113.0 800.5,112.9 799.5,112.8 798.5,112.5 797.5,112.9 796.5,113.5 795.5,113.0 794.5,112.7 793.5,112.7 792.5,112.9 791.5,113.9 790.5,114.0 789.5,113.2 788.5,112.9 787.5,113.5 786.5,113.2 785.5,113.4 784.5,113.0 783.5,113.4 782.5,113.4 781.5,113.1 780.5,113.3 779.5,113.4 778.5,113.4 777.5,113.3 776.5,113.3 775.5,113.2 774.5,113.2 773.5,113.0 772.5,113.4 771.5,112.9 770.5,112.8 769.5,112.9 768.5,113.0 767.5,113.6 766.5,112.8 765.5,113.0 764.5,112.6 763.5,112.7 762.5,112.8 761.5,112.8 760.5,112.8 759.5,112.7 758.5,112.3 757.5,112.8 756.5,112.1 755.5,112.3 754.5,112.6 753.5,112.2 752.5,112.1 751.5,112.2 750.5,112.1 749.5,112.5 748.5,112.2 747.5,112.1 746.5,111.7 745.5,112.0 744.5,112.3 743.5,111.8 742.5,111.8 741.5,111.7 740.5,111.5 739.5,111.9 738.5,111.4 737.5,111.7 736.5,111.6 735.5,111.5 734.5,112.0 733.5,111.9 732.5,111.8 731.5,111.4 730.5,111.7 729.5,111.5 728.5,112.0 727.5,111.5 726.5,111.6 725.5,111.7 724.5,112.5 723.5,111.6 722.5,112.5 721.5,112.2 720.5,111.9 719.5,112.5 718.5,111.9 717.5,112.3 716.5,112.7 715.5,112.3 714.5,113.0 713.5,112.5 712.5,112.4 711.5,112.1 710.5,112.7 709.5,112.8 708.5,112.3 707.5,112.6 706.5,112.6 705.5,113.4 704.5,113.0 703.5,114.0 702.5,113.2 701.5,113.0 700.5,112.8 699.5,113.3 698.5,113.3 697.5,112.8 696.5,113.1 695.5,112.8 694.5,113.1 693.5,113.2 692.5,113.7 691.5,113.8 690.5,113.1 689.5,113.1 688.5,113.9 687.5,113.4 686.5,113.7 685.5,113.1 684.5,113.6 683.5,113.3 682.5,113.7 681.5,113.0 680.5,113.9 679.5,113.0 678.5,114.1 677.5,112.9 676.5,112.8 675.5,112.9 674.5,113.2 673.5,113.1 672.5,113.1 671.5,113.5 670.5,112.6 669.5,112.7 668.5,113.0 667.5,113.1 666.5,112.4 665.5,112.6 664.5,112.6 663.5,112.4 662.5,112.1 661.5,112.7 660.5,112.3 659.5,112.2 658.5,112.3 657.5,112.0 656.5,112.1 655.5,112.5 654.5,112.1 653.5,112.5 652.5,111.9 651.5,111.8 650.5,112.4 649.5,112.0 648.5,111.5 647.5,111.7 646.5,111.5 645.5,111.8 644.5,112.2 643.5,111.5 642.5,111.9 641.5,111.6 640.5,111.8 639.5,111.8 638.5,111.4 637.5,111.8 636.5,112.3 635.5,112.4 634.5,112.1 633.5,112.3 632.5,112.7 631.5,111.6 630.5,112.5 629.5,112.5 628.5,112.2 627.5,112.0 626.5,111.8 625.5,111.8 624.5,112.0 623.5,112.0 622.5,112.2 621.5,112.8 620.5,112.0 619.5,112.8 618.5,112.7 617.5,112.3 616.5,112.4 615.5,112.5 614.5,112.7 613.5,112.7 612.5,112.5 611.5,112.6 610.5,113.6 609.5,113.1 608.5,113.4 607.5,113.2 606.5,112.7 605.5,113.2 604.5,113.2 603.5,113.6 602.5,113.1 601.5,113.3 600.5,113.1 599.5,113.7 598.5,113.5 597.5,113.1 596.5,113.3 595.5,113.3 594.5,113.4 593.5,113.1 592.5,113.2 591.5,113.4 590.5,114.3 589.5,113.3 588.5,113.0 587.5,113.4 586.5,113.3 585.5,113.7 584.5,113.7 583.5,113.3 582.5,112.8 581.5,113.0 580.5,113.0 579.5,113.4 578.5,112.9 577.5,113.0 576.5,112.7 575.5,113.3 574.5,112.6 573.5,113.1 572.5,112.8" fill="#ee9226" opacity="1" />
<polyline points="572.5,119.9 573.5,119.9 574.5,119.9 575.5,119.9 576.5,119.9 577.5,119.9 578.5,119.9 579.5,119.9 580.5,119.9 581.5,119.9 582.5,119.9 583.5,119.9 584.5,119.9 585.5,119.9 586.5,119.9 587.5,119.9 588.5,119.9 589.5,119.9 590.5,119.9 591.5,119.9 592.5,119.9 593.5,119.9 594.5,119.9 595.5,119.9 596.5,119.9 597.5,119.9 598.5,119.9 599.5,119.9 600.5,119.9 601.5,119.9 602.5,119.9 603.5,119.9 604.5,119.9 605.5,119.9 606.5,119.9 607.5,119.9 608.5,119.9 609.5,119.9 610.5,119.9 611.5,119.9 612.5,119.9 613.5,119.9 614.5,119.9 615.5,119.9 616.5,119.9 617.5,119.9 618.5,119.9 619.5,119.9 620.5,119.9 621.5,119.9 622.5,119.9 623.5,119.9 624.5,119.9 625.5,119.9 626.5,119.9 627.5,119.9 628.5,119.9 629.5,119.9 630.5,119.9 631.5,119.9 632.5,119.9 633.5,119.9 634.5,119.9 635.5,119.9 636.5,119.9 637.5,119.9 638.5,119.9 639.5,119.9 640.5,119.9 641.5,119.9 642.5,119.9 643.5,119.9 644.5,119.9 645.5,119.9 646.5,119.9 647.5,119.9 648.5,119.9 649.5,119.9 650.5,119.9 651.5,119.9 652.5,119.9 653.5,119.9 654.5,119.9 655.5,119.9 656.5,119.9 657.5,119.9 658.5,119.9 659.5,119.9 660.5,119.9 661.5,119.9 662.5,119.9 663.5,119.9 664.5,119.9 665.5,119.9 666.5,119.9 667.5,119.9 668.5,119.9 669.5,119.9 670.5,119.9 671.5,119.9 672.5,119.9 673.5,119.9 674.5,119.9 675.5,119.9 676.5,119.9 677.5,119.9 678.5,119.9 679.5,119.9 680.5,119.9 681.5,119.9 682.5,119.9 683.5,119.9 684.5,119.9 685.5,119.9 686.5,119.9 687.5,119.9 688.5,119.9 689.5,119.9 690.5,119.9 691.5,119.9 692.5,119.9 693.5,119.9 694.5,119.9 695.5,119.9 696.5,119.9 697.5,119.9 698.5,119.9 699.5,119.9 700.5,119.9 701.5,119.9 702.5,119.9 703.5,119.9 704.5,119.9 705.5,119.9 706.5,119.9 707.5,119.9 708.5,119.9 709.5,119.9 710.5,119.9 711.5,119.9 712.5,119.9 713.5,119.9 714.5,119.9 715.5,119.9 716.5,119.9 717.5,119.9 718.5,119.9 719.5,119.9 720.5,119.9 721.5,119.9 722.5,119.9 723.5,119.9 724.5,119.9 725.5,119.9 726.5,119.9 727.5,119.9 728.5,119.9 729.5,119.9 730.5,119.9 731.5,119.9 732.5,119.9 733.5,119.9 734.5,119.9 735.5,119.9 736.5,119.9 737.5,119.9 738.5,119.9 739.5,119.9 740.5,119.9 741.5,119.9 742.5,119.9 743.5,119.9 744.5,119.9 745.5,119.9 746.5,119.9 747.5,119.9 748.5,119.9 749.5,119.9 750.5,119.9 751.5,119.9 752.5,119.9 753.5,119.9 754.5,119.9 755.5,119.9 756.5,119.9 757.5,119.9 758.5,119.9 759.5,119.9 760.5,119.9 761.5,119.9 762.5,119.9 763.5,119.9 764.5,119.9 765.5,119.9 766.5,119.9 767.5,119.9 768.5,119.9 769.5,119.9 770.5,119.9 771.5,119.9 772.5,119.9 773.5,119.9 774.5,119.9 775.5,119.9 776.5,119.9 777.5,119.9 778.5,119.9 779.5,119.9 780.5,119.9 781.5,119.9 782.5,119.9 783.5,119.9 784.5,119.9 785.5,119.9 786.5,119.9 787.5,119.9 788.5,119.9 789.5,119.9 790.5,119.9 791.5,119.9 792.5,119.9 793.5,119.9 794.5,119.9 795.5,119.9 796.5,119.9 797.5,119.9 798.5,119.9 799.5,119.9 800.5,119.9 801.5,119.9 802.5,119.9 803.5,119.9 804.5,119.9 805.5,119.9 806.5,119.9 807.5,119.9 808.5,119.9 809.5,119.9 810.5,119.9 811.5,119.9 812.5,119.9 813.5,119.9 814.5,119.9 815.5,119.9 816.5,119.9 817.5,119.9 818.5,119.9 819.5,119.9 820.5,119.9 821.5,119.9 822.5,119.9 823.5,119.9 824.5,119.9 825.5,119.9 826.5,119.9 827.5,119.9 828.5,119.9 829.5,119.9 830.5,119.9 831.5,119.9 832.5,119.9 833.5,119.9 834.5,119.9 835.5,119.9 836.5,119.9 837.5,119.9 838.5,119.9 839.5,119.9 840.5,119.9 841.5,119.9 842.5,119.9 843.5,119.9 844.5,119.9 845.5,119.9 846.5,119.9 847.5,119.9 848.5,119.9 849.5,119.9 850.5,119.9 851.5,119.9 852.5,119.9 853.5,119.9 854.5,119.9 855.5,119.9 856.5,119.9 857.5,119.9 858.5,119.9 859.5,119.9 860.5,119.9 861.5,119.9 862.5,119.9 863.5,119.9 864.5,119.9 865.5,119.9 866.5,119.9 867.5,119.9 868.5,119.9 869.5,119.9 870.5,119.9 871.5,119.9 872.5,119.9 873.5,119.9 874.5,119.9 875.5,119.9 876.5,119.9 877.5,119.9 878.5,119.9 879.5,119.9 880.5,119.9 881.5,119.9 882.5,119.9 883.5,119.9 884.5,119.9 885.5,119.9 886.5,119.9 887.5,119.9 888.5,119.9 889.5,119.9 890.5,119.9 891.5,119.9 892.5,119.9 893.5,119.9 894.5,119.9 895.5,119.9 896.5,119.9 897.5,119.9 898.5,119.9 899.5,119.9 900.5,119.9 901.5,119.9 902.5,119.9 903.5,119.9 904.5,119.9 905.5,119.9 906.5,119.9 907.5,119.9 908.5,119.9 909.5,119.9 910.5,119.9 911.5,119.9 912.5,119.9 913.5,119.9 914.5,119.9 915.5,119.9 916.5,119.9 917.5,119.9 918.5,119.9 919.5,119.9 920.5,119.9 921.5,119.9 922.5,119.9 923.5,119.9 924.5,119.9 925.5,119.9 926.5,119.9 927.5,119.9 928.5,119.9 929.5,119.9 930.5,119.9 931.5,119.9 932.5,119.9 933.5,119.9 934.5,119.9 935.5,119.9 936.5,119.9 937.5,119.9 938.5,119.9 939.5,119.9 940.5,119.9 941.5,119.9 942.5,119.9 943.5,119.9 944.5,119.9 945.5,119.9 946.5,119.9 947.5,119.9 948.5,119.9 949.5,119.9 950.5,119.9 951.5,119.9 952.5,119.9 953.5,119.9 954.5,119.9 955.5,119.9 956.5,119.9 957.5,119.9 958.5,119.9 959.5,119.9 960.5,119.9 961.5,119.9 962.5,119.9 963.5,119.9 964.5,119.9" fill="none" stroke="#22c6d0" stroke-width="1.7" stroke-linejoin="round" opacity="1" />
<polyline points="572.5,61.5 573.5,61.3 574.5,61.1 575.5,61.0 576.5,60.8 577.5,60.6 578.5,60.5 579.5,60.4 580.5,60.3 581.5,60.1 582.5,60.1 583.5,60.0 584.5,59.9 585.5,59.9 586.5,59.8 587.5,59.8 588.5,59.8 589.5,59.8 590.5,59.8 591.5,59.8 592.5,59.9 593.5,59.9 594.5,60.0 595.5,60.1 596.5,60.2 597.5,60.3 598.5,60.4 599.5,60.6 600.5,60.7 601.5,60.9 602.5,61.0 603.5,61.2 604.5,61.4 605.5,61.6 606.5,61.8 607.5,62.0 608.5,62.2 609.5,62.4 610.5,62.6 611.5,62.8 612.5,63.0 613.5,63.2 614.5,63.4 615.5,63.6 616.5,63.8 617.5,64.0 618.5,64.2 619.5,64.4 620.5,64.6 621.5,64.7 622.5,64.9 623.5,65.0 624.5,65.2 625.5,65.3 626.5,65.4 627.5,65.6 628.5,65.7 629.5,65.7 630.5,65.8 631.5,65.9 632.5,65.9 633.5,66.0 634.5,66.0 635.5,66.0 636.5,66.0 637.5,66.0 638.5,65.9 639.5,65.9 640.5,65.8 641.5,65.8 642.5,65.7 643.5,65.6 644.5,65.5 645.5,65.4 646.5,65.3 647.5,65.1 648.5,65.0 649.5,64.8 650.5,64.7 651.5,64.5 652.5,64.3 653.5,64.1 654.5,64.0 655.5,63.8 656.5,63.6 657.5,63.4 658.5,63.2 659.5,63.0 660.5,62.8 661.5,62.6 662.5,62.4 663.5,62.2 664.5,62.1 665.5,61.9 666.5,61.7 667.5,61.5 668.5,61.4 669.5,61.2 670.5,61.1 671.5,61.0 672.5,60.8 673.5,60.7 674.5,60.6 675.5,60.5 676.5,60.4 677.5,60.4 678.5,60.3 679.5,60.3 680.5,60.2 681.5,60.2 682.5,60.2 683.5,60.2 684.5,60.2 685.5,60.3 686.5,60.3 687.5,60.4 688.5,60.4 689.5,60.5 690.5,60.6 691.5,60.7 692.5,60.8 693.5,60.9 694.5,61.0 695.5,61.2 696.5,61.3 697.5,61.5 698.5,61.6 699.5,61.8 700.5,61.9 701.5,62.1 702.5,62.3 703.5,62.5 704.5,62.6 705.5,62.8 706.5,63.0 707.5,63.2 708.5,63.4 709.5,63.5 710.5,63.7 711.5,63.9 712.5,64.0 713.5,64.2 714.5,64.4 715.5,64.5 716.5,64.6 717.5,64.8 718.5,64.9 719.5,65.0 720.5,65.1 721.5,65.2 722.5,65.3 723.5,65.4 724.5,65.4 725.5,65.5 726.5,65.5 727.5,65.6 728.5,65.6 729.5,65.6 730.5,65.6 731.5,65.6 732.5,65.5 733.5,65.5 734.5,65.5 735.5,65.4 736.5,65.3 737.5,65.2 738.5,65.2 739.5,65.1 740.5,64.9 741.5,64.8 742.5,64.7 743.5,64.6 744.5,64.4 745.5,64.3 746.5,64.1 747.5,64.0 748.5,63.8 749.5,63.7 750.5,63.5 751.5,63.3 752.5,63.2 753.5,63.0 754.5,62.8 755.5,62.7 756.5,62.5 757.5,62.3 758.5,62.2 759.5,62.0 760.5,61.9 761.5,61.7 762.5,61.6 763.5,61.5 764.5,61.4 765.5,61.2 766.5,61.1 767.5,61.0 768.5,60.9 769.5,60.9 770.5,60.8 771.5,60.7 772.5,60.7 773.5,60.6 774.5,60.6 775.5,60.6 776.5,60.6 777.5,60.6 778.5,60.6 779.5,60.6 780.5,60.7 781.5,60.7 782.5,60.8 783.5,60.8 784.5,60.9 785.5,61.0 786.5,61.1 787.5,61.2 788.5,61.3 789.5,61.4 790.5,61.5 791.5,61.7 792.5,61.8 793.5,61.9 794.5,62.1 795.5,62.2 796.5,62.4 797.5,62.5 798.5,62.7 799.5,62.8 800.5,63.0 801.5,63.2 802.5,63.3 803.5,63.5 804.5,63.6 805.5,63.8 806.5,63.9 807.5,64.0 808.5,64.2 809.5,64.3 810.5,64.4 811.5,64.5 812.5,64.6 813.5,64.7 814.5,64.8 815.5,64.9 816.5,65.0 817.5,65.1 818.5,65.1 819.5,65.2 820.5,65.2 821.5,65.2 822.5,65.2 823.5,65.2 824.5,65.2 825.5,65.2 826.5,65.2 827.5,65.2 828.5,65.1 829.5,65.1 830.5,65.0 831.5,64.9 832.5,64.9 833.5,64.8 834.5,64.7 835.5,64.6 836.5,64.5 837.5,64.4 838.5,64.2 839.5,64.1 840.5,64.0 841.5,63.9 842.5,63.7 843.5,63.6 844.5,63.4 845.5,63.3 846.5,63.1 847.5,63.0 848.5,62.9 849.5,62.7 850.5,62.6 851.5,62.4 852.5,62.3 853.5,62.2 854.5,62.0 855.5,61.9 856.5,61.8 857.5,61.7 858.5,61.6 859.5,61.5 860.5,61.4 861.5,61.3 862.5,61.2 863.5,61.1 864.5,61.1 865.5,61.0 866.5,61.0 867.5,61.0 868.5,60.9 869.5,60.9 870.5,60.9 871.5,60.9 872.5,60.9 873.5,61.0 874.5,61.0 875.5,61.0 876.5,61.1 877.5,61.1 878.5,61.2 879.5,61.3 880.5,61.3 881.5,61.4 882.5,61.5 883.5,61.6 884.5,61.7 885.5,61.8 886.5,62.0 887.5,62.1 888.5,62.2 889.5,62.3 890.5,62.5 891.5,62.6 892.5,62.7 893.5,62.9 894.5,63.0 895.5,63.1 896.5,63.3 897.5,63.4 898.5,63.5 899.5,63.7 900.5,63.8 901.5,63.9 902.5,64.0 903.5,64.1 904.5,64.2 905.5,64.3 906.5,64.4 907.5,64.5 908.5,64.6 909.5,64.7 910.5,64.7 911.5,64.8 912.5,64.8 913.5,64.9 914.5,64.9 915.5,64.9 916.5,64.9 917.5,64.9 918.5,64.9 919.5,64.9 920.5,64.9 921.5,64.9 922.5,64.8 923.5,64.8 924.5,64.7 925.5,64.7 926.5,64.6 927.5,64.5 928.5,64.5 929.5,64.4 930.5,64.3 931.5,64.2 932.5,64.1 933.5,64.0 934.5,63.9 935.5,63.7 936.5,63.6 937.5,63.5 938.5,63.4 939.5,63.3 940.5,63.1 941.5,63.0 942.5,62.9 943.5,62.8 944.5,62.6 945.5,62.5 946.5,62.4 947.5,62.3 948.5,62.2 949.5,62.1 950.5,62.0 951.5,61.9 952.5,61.8 953.5,61.7 954.5,61.6 955.5,61.5 956.5,61.5 957.5,61.4 958.5,61.3 959.5,61.3 960.5,61.3 961.5,61.2 962.5,61.2 963.5,61.2 964.5,61.2" fill="none" stroke="#d83a58" stroke-width="1.35" stroke-linejoin="round" opacity="1" />
<polyline points="572.5,100.7 573.5,100.8 574.5,100.8 575.5,100.9 576.5,101.0 577.5,101.1 578.5,101.1 579.5,101.2 580.5,101.2 581.5,101.3 582.5,101.3 583.5,101.4 584.5,101.4 585.5,101.5 586.5,101.5 587.5,101.5 588.5,101.5 589.5,101.6 590.5,101.6 591.5,101.6 592.5,101.6 593.5,101.6 594.5,101.6 595.5,101.5 596.5,101.5 597.5,101.5 598.5,101.5 599.5,101.4 600.5,101.4 601.5,101.3 602.5,101.3 603.5,101.2 604.5,101.2 605.5,101.1 606.5,101.0 607.5,101.0 608.5,100.9 609.5,100.8 610.5,100.7 611.5,100.7 612.5,100.6 613.5,100.5 614.5,100.4 615.5,100.3 616.5,100.3 617.5,100.2 618.5,100.1 619.5,100.0 620.5,100.0 621.5,99.9 622.5,99.8 623.5,99.7 624.5,99.7 625.5,99.6 626.5,99.6 627.5,99.5 628.5,99.5 629.5,99.4 630.5,99.4 631.5,99.3 632.5,99.3 633.5,99.3 634.5,99.2 635.5,99.2 636.5,99.2 637.5,99.2 638.5,99.2 639.5,99.2 640.5,99.2 641.5,99.2 642.5,99.2 643.5,99.2 644.5,99.3 645.5,99.3 646.5,99.3 647.5,99.4 648.5,99.4 649.5,99.5 650.5,99.5 651.5,99.6 652.5,99.6 653.5,99.7 654.5,99.8 655.5,99.8 656.5,99.9 657.5,100.0 658.5,100.0 659.5,100.1 660.5,100.2 661.5,100.3 662.5,100.3 663.5,100.4 664.5,100.5 665.5,100.6 666.5,100.6 667.5,100.7 668.5,100.8 669.5,100.9 670.5,100.9 671.5,101.0 672.5,101.0 673.5,101.1 674.5,101.2 675.5,101.2 676.5,101.2 677.5,101.3 678.5,101.3 679.5,101.4 680.5,101.4 681.5,101.4 682.5,101.4 683.5,101.4 684.5,101.4 685.5,101.5 686.5,101.5 687.5,101.4 688.5,101.4 689.5,101.4 690.5,101.4 691.5,101.4 692.5,101.3 693.5,101.3 694.5,101.3 695.5,101.2 696.5,101.2 697.5,101.1 698.5,101.1 699.5,101.0 700.5,101.0 701.5,100.9 702.5,100.8 703.5,100.8 704.5,100.7 705.5,100.6 706.5,100.6 707.5,100.5 708.5,100.4 709.5,100.3 710.5,100.3 711.5,100.2 712.5,100.1 713.5,100.1 714.5,100.0 715.5,99.9 716.5,99.9 717.5,99.8 718.5,99.7 719.5,99.7 720.5,99.6 721.5,99.6 722.5,99.5 723.5,99.5 724.5,99.5 725.5,99.4 726.5,99.4 727.5,99.4 728.5,99.3 729.5,99.3 730.5,99.3 731.5,99.3 732.5,99.3 733.5,99.3 734.5,99.3 735.5,99.3 736.5,99.3 737.5,99.4 738.5,99.4 739.5,99.4 740.5,99.4 741.5,99.5 742.5,99.5 743.5,99.6 744.5,99.6 745.5,99.7 746.5,99.7 747.5,99.8 748.5,99.8 749.5,99.9 750.5,99.9 751.5,100.0 752.5,100.1 753.5,100.1 754.5,100.2 755.5,100.3 756.5,100.3 757.5,100.4 758.5,100.5 759.5,100.6 760.5,100.6 761.5,100.7 762.5,100.7 763.5,100.8 764.5,100.9 765.5,100.9 766.5,101.0 767.5,101.0 768.5,101.1 769.5,101.1 770.5,101.2 771.5,101.2 772.5,101.2 773.5,101.3 774.5,101.3 775.5,101.3 776.5,101.3 777.5,101.3 778.5,101.3 779.5,101.3 780.5,101.3 781.5,101.3 782.5,101.3 783.5,101.3 784.5,101.3 785.5,101.3 786.5,101.2 787.5,101.2 788.5,101.2 789.5,101.1 790.5,101.1 791.5,101.1 792.5,101.0 793.5,101.0 794.5,100.9 795.5,100.8 796.5,100.8 797.5,100.7 798.5,100.7 799.5,100.6 800.5,100.5 801.5,100.5 802.5,100.4 803.5,100.3 804.5,100.3 805.5,100.2 806.5,100.2 807.5,100.1 808.5,100.0 809.5,100.0 810.5,99.9 811.5,99.9 812.5,99.8 813.5,99.8 814.5,99.7 815.5,99.7 816.5,99.6 817.5,99.6 818.5,99.5 819.5,99.5 820.5,99.5 821.5,99.5 822.5,99.4 823.5,99.4 824.5,99.4 825.5,99.4 826.5,99.4 827.5,99.4 828.5,99.4 829.5,99.4 830.5,99.4 831.5,99.5 832.5,99.5 833.5,99.5 834.5,99.5 835.5,99.6 836.5,99.6 837.5,99.6 838.5,99.7 839.5,99.7 840.5,99.8 841.5,99.8 842.5,99.9 843.5,99.9 844.5,100.0 845.5,100.0 846.5,100.1 847.5,100.2 848.5,100.2 849.5,100.3 850.5,100.3 851.5,100.4 852.5,100.5 853.5,100.5 854.5,100.6 855.5,100.6 856.5,100.7 857.5,100.8 858.5,100.8 859.5,100.9 860.5,100.9 861.5,101.0 862.5,101.0 863.5,101.0 864.5,101.1 865.5,101.1 866.5,101.1 867.5,101.2 868.5,101.2 869.5,101.2 870.5,101.2 871.5,101.2 872.5,101.2 873.5,101.2 874.5,101.2 875.5,101.2 876.5,101.2 877.5,101.2 878.5,101.2 879.5,101.2 880.5,101.2 881.5,101.1 882.5,101.1 883.5,101.1 884.5,101.0 885.5,101.0 886.5,100.9 887.5,100.9 888.5,100.8 889.5,100.8 890.5,100.7 891.5,100.7 892.5,100.6 893.5,100.6 894.5,100.5 895.5,100.5 896.5,100.4 897.5,100.3 898.5,100.3 899.5,100.2 900.5,100.2 901.5,100.1 902.5,100.1 903.5,100.0 904.5,100.0 905.5,99.9 906.5,99.9 907.5,99.8 908.5,99.8 909.5,99.7 910.5,99.7 911.5,99.7 912.5,99.6 913.5,99.6 914.5,99.6 915.5,99.6 916.5,99.5 917.5,99.5 918.5,99.5 919.5,99.5 920.5,99.5 921.5,99.5 922.5,99.5 923.5,99.5 924.5,99.5 925.5,99.5 926.5,99.6 927.5,99.6 928.5,99.6 929.5,99.6 930.5,99.7 931.5,99.7 932.5,99.7 933.5,99.8 934.5,99.8 935.5,99.9 936.5,99.9 937.5,100.0 938.5,100.0 939.5,100.1 940.5,100.1 941.5,100.2 942.5,100.2 943.5,100.3 944.5,100.3 945.5,100.4 946.5,100.5 947.5,100.5 948.5,100.6 949.5,100.6 950.5,100.7 951.5,100.7 952.5,100.8 953.5,100.8 954.5,100.9 955.5,100.9 956.5,100.9 957.5,101.0 958.5,101.0 959.5,101.0 960.5,101.1 961.5,101.1 962.5,101.1 963.5,101.1 964.5,101.1" fill="none" stroke="#dcd628" stroke-width="1.4" stroke-linejoin="round" opacity="1" />
<rect x="536.1" y="31.4" width="35.8" height="99" fill="#000" stroke="#b0b0b0" stroke-width="2.2" />
<clipPath id="bc"><rect x="537" y="32.2" width="34" height="97.6"/></clipPath>
<g clip-path="url(#bc)">
<line x1="567.47" y1="96.9" x2="567.47" y2="99.5" stroke="#8cbf30" stroke-width="0.90" opacity="0.55"/>
<polyline points="535.16,100.7 535.28,100.7 535.4,100.7 535.52,100.6 535.64,100.6 535.76,100.7 535.88,100.7 536,100.7 536.12,100.7 536.24,100.7 536.36,100.7 536.48,100.7 536.6,100.7 536.72,100.7 536.84,100.6 536.96,100.7 537.08,100.7 537.2,100.7 537.32,100.7 537.44,100.7 537.56,100.6 537.68,100.6 537.8,100.6 537.92,100.6 538.04,100.6 538.16,100.6 538.28,100.6 538.4,100.7 538.52,100.6 538.64,100.6 538.76,100.7 538.88,100.6 539,100.6 539.12,100.6 539.24,100.6 539.36,100.6 539.48,100.6 539.6,100.6 539.72,100.6 539.85,100.6 539.97,100.6 540.09,100.6 540.21,100.5 540.33,100.6 540.45,100.6 540.57,100.5 540.69,100.5 540.81,100.5 540.93,100.5 541.05,100.6 541.17,100.5 541.29,100.5 541.41,100.5 541.53,100.5 541.65,100.5 541.77,100.5 541.89,100.5 542.01,100.5 542.13,100.4 542.25,100.4 542.37,100.4 542.49,100.4 542.61,100.4 542.73,100.4 542.85,100.3 542.97,100.4 543.09,100.4 543.21,100.4 543.33,100.3 543.45,100.1 543.57,99.3 543.69,98.6 543.81,98.9 543.93,99.3 544.05,100.0 544.17,99.9 544.29,99.7 544.41,99.9 544.53,99.9 544.65,99.8 544.77,99.9 544.89,99.9 545.01,99.8 545.13,99.8 545.25,99.9 545.37,99.8 545.49,99.9 545.61,99.9 545.73,99.8 545.85,99.8 545.97,99.9 546.09,99.9 546.21,99.9 546.33,99.9 546.45,99.9 546.57,99.9 546.69,99.8 546.81,99.8 546.93,99.9 547.05,99.8 547.17,99.8 547.29,99.9 547.41,99.9 547.53,99.8 547.65,99.8 547.77,99.8 547.89,99.8 548.01,99.9 548.13,99.9 548.25,99.9 548.37,99.9 548.49,99.9 548.61,99.8 548.73,99.8 548.85,99.8 548.97,99.8 549.09,99.9 549.22,99.9 549.34,99.9 549.46,99.8 549.58,99.8 549.7,99.8 549.82,99.8 549.94,99.8 550.06,99.8 550.18,99.8 550.3,99.8 550.42,99.8 550.54,99.8 550.66,99.8 550.78,99.9 550.9,99.8 551.02,99.8 551.14,99.9 551.26,99.8 551.38,99.8 551.5,99.8 551.62,99.8 551.74,99.9 551.86,99.8 551.98,99.7 552.1,99.8 552.22,99.8 552.34,99.8 552.46,99.9 552.58,100.1 552.7,100.4 552.82,100.0 552.94,100.0 553.06,100.0 553.18,100.0 553.3,100.0 553.42,100.0 553.54,99.9 553.66,99.9 553.78,100.0 553.9,99.9 554.02,100.0 554.14,99.9 554.26,100.0 554.38,99.9 554.5,99.9 554.62,99.9 554.74,99.8 554.86,99.8 554.98,99.8 555.1,99.8 555.22,99.7 555.34,99.7 555.46,99.7 555.58,99.8 555.7,99.7 555.82,99.7 555.94,99.7 556.06,99.7 556.18,99.6 556.3,99.6 556.42,99.6 556.54,99.6 556.66,99.5 556.78,99.6 556.9,99.5 557.02,99.5 557.14,99.6 557.26,99.5 557.38,99.5 557.5,99.5 557.62,99.5 557.74,99.4 557.86,99.4 557.98,99.4 558.1,99.4 558.22,99.3 558.34,99.4 558.46,99.4 558.59,99.4 558.71,99.3 558.83,99.4 558.95,99.4 559.07,99.2 559.19,99.2 559.31,99.3 559.43,99.2 559.55,99.2 559.67,99.2 559.79,99.2 559.91,99.2 560.03,99.1 560.15,99.1 560.27,99.1 560.39,99.2 560.51,99.1 560.63,99.1 560.75,99.1 560.87,99.0 560.99,99.1 561.11,99.1 561.23,99.0 561.35,99.0 561.47,99.0 561.59,99.0 561.71,99.0 561.83,98.9 561.95,98.9 562.07,98.9 562.19,98.9 562.31,98.9 562.43,98.9 562.55,98.9 562.67,98.8 562.79,98.8 562.91,98.8 563.03,98.8 563.15,98.7 563.27,98.8 563.39,98.7 563.51,98.7 563.63,98.6 563.75,98.7 563.87,98.7 563.99,98.7 564.11,98.7 564.23,98.7 564.35,98.6 564.47,98.6 564.59,98.6 564.71,98.6 564.83,98.6 564.95,98.6 565.07,98.5 565.19,98.5 565.31,98.5 565.43,98.5 565.55,98.5 565.67,98.5 565.79,98.4 565.91,98.4 566.03,98.5 566.15,98.4 566.27,98.4 566.39,98.4 566.51,98.4 566.63,98.3 566.75,98.4 566.87,98.3 566.99,98.0 567.11,97.2 567.23,97.0 567.35,97.3" fill="none" stroke="#8cbf30" stroke-width="1.0" stroke-linejoin="round" opacity="1" />
<polyline points="567.59,98.3 567.71,98.6 567.83,98.5 567.95,98.3 568.08,98.5 568.2,98.5 568.32,98.4 568.44,98.5 568.56,98.5 568.68,98.4 568.8,98.5 568.92,98.5 569.04,98.5 569.16,98.5 569.28,98.5 569.4,98.4 569.52,98.4 569.64,98.5 569.76,98.5 569.88,98.5 570,98.6 570.12,98.6 570.24,98.5 570.36,98.5 570.48,98.5 570.6,98.5 570.72,98.5 570.84,98.5 570.96,98.5 571.08,98.5 571.2,98.5 571.32,98.6 571.44,98.5 571.56,98.5 571.68,98.5 571.8,98.5 571.92,98.5 572.04,98.5 572.16,98.4 572.28,98.5 572.4,98.5 572.52,98.5" fill="none" stroke="#8cbf30" stroke-width="1.0" stroke-linejoin="round" opacity="1" />
<rect x="544.3" y="109.8" width="8.1" height="3.2" fill="#ee9226" />
<rect x="567.8" y="108.3" width="4.9" height="3.2" fill="#ee9226" />
<line x1="543.21" y1="108.5" x2="543.21" y2="111.2" stroke="#ee9226" stroke-width="0.90" opacity="0.55"/>
<line x1="543.33" y1="92.6" x2="543.33" y2="108.5" stroke="#ee9226" stroke-width="0.90" opacity="0.55"/>
<line x1="543.45" y1="66.2" x2="543.45" y2="92.6" stroke="#ee9226" stroke-width="0.90" opacity="0.55"/>
<line x1="543.57" y1="51.5" x2="543.57" y2="66.2" stroke="#ee9226" stroke-width="0.90" opacity="0.55"/>
<line x1="543.69" y1="51.9" x2="543.69" y2="89.3" stroke="#ee9226" stroke-width="0.90" opacity="0.55"/>
<line x1="543.81" y1="89.3" x2="543.81" y2="118.7" stroke="#ee9226" stroke-width="0.90" opacity="0.55"/>
<line x1="543.93" y1="103.3" x2="543.93" y2="115.8" stroke="#ee9226" stroke-width="0.90" opacity="0.55"/>
<line x1="544.05" y1="108.3" x2="544.05" y2="115.6" stroke="#ee9226" stroke-width="0.90" opacity="0.55"/>
<line x1="544.17" y1="108.2" x2="544.17" y2="114.3" stroke="#ee9226" stroke-width="0.90" opacity="0.55"/>
<line x1="544.29" y1="109.7" x2="544.29" y2="114.5" stroke="#ee9226" stroke-width="0.90" opacity="0.55"/>
<line x1="552.46" y1="98.6" x2="552.46" y2="111.0" stroke="#ee9226" stroke-width="0.90" opacity="0.55"/>
<line x1="552.58" y1="75.0" x2="552.58" y2="98.6" stroke="#ee9226" stroke-width="0.90" opacity="0.55"/>
<line x1="552.70" y1="56.4" x2="552.70" y2="75.0" stroke="#ee9226" stroke-width="0.90" opacity="0.55"/>
<line x1="552.82" y1="43.4" x2="552.82" y2="56.4" stroke="#ee9226" stroke-width="0.90" opacity="0.55"/>
<line x1="552.94" y1="40.6" x2="552.94" y2="48.4" stroke="#ee9226" stroke-width="0.90" opacity="0.55"/>
<line x1="553.06" y1="48.4" x2="553.06" y2="81.5" stroke="#ee9226" stroke-width="0.90" opacity="0.55"/>
<line x1="553.18" y1="81.5" x2="553.18" y2="112.4" stroke="#ee9226" stroke-width="0.90" opacity="0.55"/>
<line x1="553.30" y1="111.9" x2="553.30" y2="114.9" stroke="#ee9226" stroke-width="0.90" opacity="0.55"/>
<line x1="566.75" y1="106.7" x2="566.75" y2="109.9" stroke="#ee9226" stroke-width="0.90" opacity="0.55"/>
<line x1="566.87" y1="86.4" x2="566.87" y2="106.7" stroke="#ee9226" stroke-width="0.90" opacity="0.55"/>
<line x1="566.99" y1="46.9" x2="566.99" y2="86.4" stroke="#ee9226" stroke-width="0.90" opacity="0.55"/>
<line x1="567.11" y1="41.1" x2="567.11" y2="57.3" stroke="#ee9226" stroke-width="0.90" opacity="0.55"/>
<line x1="567.23" y1="57.3" x2="567.23" y2="114.0" stroke="#ee9226" stroke-width="0.90" opacity="0.55"/>
<line x1="567.35" y1="106.0" x2="567.35" y2="118.8" stroke="#ee9226" stroke-width="0.90" opacity="0.55"/>
<line x1="567.47" y1="103.5" x2="567.47" y2="115.7" stroke="#ee9226" stroke-width="0.90" opacity="0.55"/>
<line x1="567.59" y1="108.2" x2="567.59" y2="115.7" stroke="#ee9226" stroke-width="0.90" opacity="0.55"/>
<line x1="567.71" y1="109.6" x2="567.71" y2="114.5" stroke="#ee9226" stroke-width="0.90" opacity="0.55"/>
<line x1="567.83" y1="107.8" x2="567.83" y2="111.4" stroke="#ee9226" stroke-width="0.90" opacity="0.55"/>
<polyline points="535.16,112.5 535.28,112.5 535.4,112.5 535.52,112.5 535.64,112.5 535.76,112.5 535.88,112.5 536,112.5 536.12,112.5 536.24,112.5 536.36,112.6 536.48,112.5 536.6,112.6 536.72,112.6 536.84,112.6 536.96,112.5 537.08,112.5 537.2,112.5 537.32,112.6 537.44,112.6 537.56,112.6 537.68,112.5 537.8,112.5 537.92,112.6 538.04,112.5 538.16,112.6 538.28,112.5 538.4,112.6 538.52,112.6 538.64,112.6 538.76,112.6 538.88,112.5 539,112.5 539.12,112.6 539.24,112.5 539.36,112.6 539.48,112.5 539.6,112.5 539.72,112.5 539.85,112.6 539.97,112.6 540.09,112.6 540.21,112.5 540.33,112.6 540.45,112.6 540.57,112.6 540.69,112.6 540.81,112.6 540.93,112.5 541.05,112.6 541.17,112.6 541.29,112.6 541.41,112.5 541.53,112.6 541.65,112.5 541.77,112.5 541.89,112.5 542.01,112.6 542.13,112.6 542.25,112.6 542.37,112.6 542.49,112.6 542.61,112.6 542.73,112.6 542.85,112.5 542.97,112.6 543.09,112.0" fill="none" stroke="#ee9226" stroke-width="1.0" stroke-linejoin="round" opacity="1" />
<polyline points="544.41,112.1 544.53,111.2 544.65,111.2 544.77,111.2 544.89,111.2 545.01,111.2 545.13,111.2 545.25,111.3 545.37,111.2 545.49,111.3 545.61,111.3 545.73,111.2 545.85,111.2 545.97,111.2 546.09,111.2 546.21,111.3 546.33,111.2 546.45,111.3 546.57,111.2 546.69,111.3 546.81,111.3 546.93,111.3 547.05,111.3 547.17,111.3 547.29,111.3 547.41,111.3 547.53,111.4 547.65,111.4 547.77,111.4 547.89,111.4 548.01,111.4 548.13,111.4 548.25,111.3 548.37,111.3 548.49,111.4 548.61,111.4 548.73,111.4 548.85,111.4 548.97,111.4 549.09,111.4 549.22,111.4 549.34,111.4 549.46,111.4 549.58,111.4 549.7,111.4 549.82,111.5 549.94,111.4 550.06,111.4 550.18,111.4 550.3,111.4 550.42,111.4 550.54,111.5 550.66,111.5 550.78,111.4 550.9,111.5 551.02,111.5 551.14,111.4 551.26,111.5 551.38,111.4 551.5,111.5 551.62,111.5 551.74,111.5 551.86,111.5 551.98,111.5 552.1,111.4 552.22,111.4 552.34,111.4" fill="none" stroke="#ee9226" stroke-width="1.0" stroke-linejoin="round" opacity="1" />
<polyline points="553.42,113.0 553.54,112.7 553.66,112.5 553.78,112.6 553.9,112.4 554.02,112.5 554.14,112.4 554.26,112.5 554.38,112.7 554.5,112.3 554.62,112.4 554.74,112.6 554.86,112.5 554.98,112.4 555.1,112.5 555.22,112.6 555.34,112.4 555.46,112.4 555.58,112.5 555.7,112.5 555.82,112.4 555.94,112.5 556.06,112.5 556.18,112.4 556.3,112.4 556.42,112.5 556.54,112.5 556.66,112.4 556.78,112.5 556.9,112.5 557.02,112.4 557.14,112.4 557.26,112.5 557.38,112.4 557.5,112.4 557.62,112.5 557.74,112.5 557.86,112.4 557.98,112.4 558.1,112.5 558.22,112.4 558.34,112.4 558.46,112.5 558.59,112.5 558.71,112.4 558.83,112.4 558.95,112.5 559.07,112.5 559.19,112.5 559.31,112.4 559.43,112.5 559.55,112.4 559.67,112.5 559.79,112.5 559.91,112.5 560.03,112.4 560.15,112.5 560.27,112.4 560.39,112.5 560.51,112.4 560.63,112.4 560.75,112.4 560.87,112.5 560.99,112.5 561.11,112.5 561.23,112.5 561.35,112.5 561.47,112.5 561.59,112.5 561.71,112.5 561.83,112.6 561.95,112.4 562.07,112.5 562.19,112.5 562.31,112.5 562.43,112.4 562.55,112.4 562.67,112.5 562.79,112.4 562.91,112.5 563.03,112.5 563.15,112.5 563.27,112.5 563.39,112.5 563.51,112.5 563.63,112.6 563.75,112.5 563.87,112.5 563.99,112.5 564.11,112.5 564.23,112.5 564.35,112.5 564.47,112.5 564.59,112.5 564.71,112.6 564.83,112.5 564.95,112.5 565.07,112.5 565.19,112.5 565.31,112.5 565.43,112.5 565.55,112.6 565.67,112.5 565.79,112.5 565.91,112.5 566.03,112.6 566.15,112.6 566.27,112.6 566.39,112.5 566.51,112.4 566.63,111.1" fill="none" stroke="#ee9226" stroke-width="1.0" stroke-linejoin="round" opacity="1" />
<polyline points="567.95,109.8 568.08,109.4 568.2,109.4 568.32,109.3 568.44,109.4 568.56,109.4 568.68,109.4 568.8,109.3 568.92,109.3 569.04,109.3 569.16,109.3 569.28,109.4 569.4,109.5 569.52,109.4 569.64,109.4 569.76,109.4 569.88,109.4 570,109.4 570.12,109.4 570.24,109.4 570.36,109.3 570.48,109.4 570.6,109.4 570.72,109.3 570.84,109.4 570.96,109.4 571.08,109.4 571.2,109.5 571.32,109.4 571.44,109.5 571.56,109.5 571.68,109.5 571.8,109.5 571.92,109.5 572.04,109.5 572.16,109.6 572.28,109.5 572.4,109.6 572.52,109.6" fill="none" stroke="#ee9226" stroke-width="1.0" stroke-linejoin="round" opacity="1" />
<polyline points="537,112.4 571,112.4" fill="none" stroke="#b9742a" stroke-width="0.9" stroke-linejoin="round" opacity="0.8" />
<line x1="543.21" y1="116.7" x2="543.21" y2="119.8" stroke="#e02848" stroke-width="0.81" opacity="0.55"/>
<line x1="543.33" y1="103.4" x2="543.33" y2="116.7" stroke="#e02848" stroke-width="0.81" opacity="0.55"/>
<line x1="543.45" y1="73.9" x2="543.45" y2="103.4" stroke="#e02848" stroke-width="0.81" opacity="0.55"/>
<line x1="543.57" y1="48.1" x2="543.57" y2="73.9" stroke="#e02848" stroke-width="0.81" opacity="0.55"/>
<line x1="543.69" y1="37.0" x2="543.69" y2="48.1" stroke="#e02848" stroke-width="0.81" opacity="0.55"/>
<line x1="543.81" y1="38.3" x2="543.81" y2="70.3" stroke="#e02848" stroke-width="0.81" opacity="0.55"/>
<line x1="543.93" y1="55.4" x2="543.93" y2="77.8" stroke="#e02848" stroke-width="0.81" opacity="0.55"/>
<line x1="544.05" y1="53.7" x2="544.05" y2="70.5" stroke="#e02848" stroke-width="0.81" opacity="0.55"/>
<line x1="544.17" y1="58.4" x2="544.17" y2="70.5" stroke="#e02848" stroke-width="0.81" opacity="0.55"/>
<line x1="544.29" y1="61.4" x2="544.29" y2="66.8" stroke="#e02848" stroke-width="0.81" opacity="0.55"/>
<line x1="552.34" y1="60.5" x2="552.34" y2="64.5" stroke="#e02848" stroke-width="0.81" opacity="0.55"/>
<line x1="552.46" y1="64.5" x2="552.46" y2="74.4" stroke="#e02848" stroke-width="0.81" opacity="0.55"/>
<line x1="552.58" y1="74.4" x2="552.58" y2="77.0" stroke="#e02848" stroke-width="0.81" opacity="0.55"/>
<line x1="552.94" y1="78.2" x2="552.94" y2="84.4" stroke="#e02848" stroke-width="0.81" opacity="0.55"/>
<line x1="553.06" y1="84.4" x2="553.06" y2="102.4" stroke="#e02848" stroke-width="0.81" opacity="0.55"/>
<line x1="553.18" y1="102.4" x2="553.18" y2="121.3" stroke="#e02848" stroke-width="0.81" opacity="0.55"/>
<line x1="553.30" y1="121.3" x2="553.30" y2="124.1" stroke="#e02848" stroke-width="0.81" opacity="0.55"/>
<line x1="566.75" y1="113.5" x2="566.75" y2="118.4" stroke="#e02848" stroke-width="0.81" opacity="0.55"/>
<line x1="566.87" y1="89.4" x2="566.87" y2="113.5" stroke="#e02848" stroke-width="0.81" opacity="0.55"/>
<line x1="566.99" y1="61.4" x2="566.99" y2="89.4" stroke="#e02848" stroke-width="0.81" opacity="0.55"/>
<line x1="567.11" y1="38.2" x2="567.11" y2="61.4" stroke="#e02848" stroke-width="0.81" opacity="0.55"/>
<line x1="567.23" y1="35.4" x2="567.23" y2="43.9" stroke="#e02848" stroke-width="0.81" opacity="0.55"/>
<line x1="567.35" y1="43.9" x2="567.35" y2="78.1" stroke="#e02848" stroke-width="0.81" opacity="0.55"/>
<line x1="567.47" y1="52.1" x2="567.47" y2="65.9" stroke="#e02848" stroke-width="0.81" opacity="0.55"/>
<line x1="567.59" y1="55.8" x2="567.59" y2="69.6" stroke="#e02848" stroke-width="0.81" opacity="0.55"/>
<line x1="567.71" y1="57.0" x2="567.71" y2="65.7" stroke="#e02848" stroke-width="0.81" opacity="0.55"/>
<line x1="567.83" y1="60.8" x2="567.83" y2="65.4" stroke="#e02848" stroke-width="0.81" opacity="0.55"/>
<polyline points="535.16,121.9 535.28,121.9 535.4,121.9 535.52,121.9 535.64,122.0 535.76,121.9 535.88,121.9 536,121.9 536.12,121.8 536.24,121.9 536.36,122.0 536.48,121.9 536.6,121.9 536.72,121.9 536.84,121.9 536.96,122.0 537.08,121.9 537.2,121.8 537.32,121.9 537.44,121.9 537.56,121.9 537.68,121.9 537.8,121.9 537.92,121.9 538.04,122.0 538.16,122.0 538.28,121.9 538.4,121.9 538.52,121.8 538.64,121.9 538.76,121.8 538.88,121.9 539,121.9 539.12,121.9 539.24,121.8 539.36,121.9 539.48,121.9 539.6,121.8 539.72,122.0 539.85,121.9 539.97,121.8 540.09,121.8 540.21,121.9 540.33,121.9 540.45,121.9 540.57,121.9 540.69,121.9 540.81,121.9 540.93,121.9 541.05,121.9 541.17,121.8 541.29,121.9 541.41,121.9 541.53,121.9 541.65,121.9 541.77,121.9 541.89,121.9 542.01,121.8 542.13,121.9 542.25,121.9 542.37,121.9 542.49,121.9 542.61,121.9 542.73,121.8 542.85,121.9 542.97,121.9 543.09,120.8" fill="none" stroke="#e02848" stroke-width="0.9" stroke-linejoin="round" opacity="1" />
<polyline points="544.41,63.2 544.53,63.1 544.65,63.2 544.77,63.3 544.89,63.2 545.01,63.3 545.13,63.1 545.25,63.0 545.37,63.2 545.49,63.1 545.61,63.0 545.73,63.1 545.85,63.1 545.97,63.0 546.09,62.8 546.21,63.1 546.33,62.9 546.45,62.7 546.57,62.7 546.69,62.7 546.81,62.6 546.93,62.5 547.05,62.6 547.17,62.4 547.29,62.3 547.41,62.4 547.53,62.4 547.65,62.3 547.77,62.2 547.89,62.2 548.01,62.1 548.13,62.1 548.25,62.0 548.37,61.9 548.49,61.8 548.61,61.8 548.73,61.8 548.85,61.7 548.97,61.7 549.09,61.6 549.22,61.6 549.34,61.6 549.46,61.5 549.58,61.5 549.7,61.5 549.82,61.4 549.94,61.3 550.06,61.2 550.18,61.2 550.3,61.3 550.42,61.2 550.54,61.2 550.66,61.1 550.78,61.0 550.9,61.0 551.02,60.9 551.14,60.8 551.26,60.7 551.38,60.7 551.5,60.7 551.62,60.7 551.74,60.7 551.86,60.7 551.98,60.6 552.1,60.7 552.22,60.6" fill="none" stroke="#e02848" stroke-width="0.9" stroke-linejoin="round" opacity="1" />
<polyline points="552.7,76.6 552.82,77.3" fill="none" stroke="#e02848" stroke-width="0.9" stroke-linejoin="round" opacity="1" />
<polyline points="553.42,122.4 553.54,122.2 553.66,122.0 553.78,122.0 553.9,122.0 554.02,121.8 554.14,121.9 554.26,122.0 554.38,122.2 554.5,121.7 554.62,121.6 554.74,121.9 554.86,122.0 554.98,121.6 555.1,121.8 555.22,121.9 555.34,121.8 555.46,121.6 555.58,122.0 555.7,121.9 555.82,121.7 555.94,121.8 556.06,122.0 556.18,121.7 556.3,121.8 556.42,121.9 556.54,121.8 556.66,121.8 556.78,121.8 556.9,121.8 557.02,121.7 557.14,121.9 557.26,121.8 557.38,121.8 557.5,121.9 557.62,121.9 557.74,121.9 557.86,121.9 557.98,121.8 558.1,121.9 558.22,121.8 558.34,121.7 558.46,121.7 558.59,121.8 558.71,121.9 558.83,121.8 558.95,121.9 559.07,121.8 559.19,121.9 559.31,121.8 559.43,121.8 559.55,121.8 559.67,121.8 559.79,121.9 559.91,121.9 560.03,121.8 560.15,121.8 560.27,121.9 560.39,121.9 560.51,121.8 560.63,121.9 560.75,121.9 560.87,121.8 560.99,121.8 561.11,121.8 561.23,121.9 561.35,121.8 561.47,121.9 561.59,121.9 561.71,121.8 561.83,121.7 561.95,121.8 562.07,121.8 562.19,121.8 562.31,121.7 562.43,121.9 562.55,121.9 562.67,121.8 562.79,121.8 562.91,121.7 563.03,121.8 563.15,121.8 563.27,121.8 563.39,121.9 563.51,121.9 563.63,121.9 563.75,121.9 563.87,122.0 563.99,121.8 564.11,121.8 564.23,121.9 564.35,121.9 564.47,121.8 564.59,121.8 564.71,121.9 564.83,121.9 564.95,121.8 565.07,121.9 565.19,121.8 565.31,121.8 565.43,121.9 565.55,121.9 565.67,121.8 565.79,121.8 565.91,121.8 566.03,121.9 566.15,121.9 566.27,121.9 566.39,121.8 566.51,121.6 566.63,119.8" fill="none" stroke="#e02848" stroke-width="0.9" stroke-linejoin="round" opacity="1" />
<polyline points="567.95,62.2 568.08,62.1 568.2,62.0 568.32,61.9 568.44,62.2 568.56,62.1 568.68,61.8 568.8,62.0 568.92,62.0 569.04,61.8 569.16,61.7 569.28,61.9 569.4,61.8 569.52,61.7 569.64,61.7 569.76,61.7 569.88,61.7 570,61.7 570.12,61.8 570.24,61.7 570.36,61.6 570.48,61.6 570.6,61.6 570.72,61.6 570.84,61.5 570.96,61.6 571.08,61.5 571.2,61.2 571.32,61.3 571.44,61.3 571.56,61.2 571.68,61.2 571.8,61.2 571.92,61.0 572.04,60.9 572.16,61.0 572.28,61.0 572.4,60.7 572.52,60.7" fill="none" stroke="#e02848" stroke-width="0.9" stroke-linejoin="round" opacity="1" />
<line x1="543.57" y1="101.5" x2="543.57" y2="106.5" stroke="#22c6d0" stroke-width="1.08" opacity="0.55"/>
<line x1="543.69" y1="106.5" x2="543.69" y2="114.7" stroke="#22c6d0" stroke-width="1.08" opacity="0.55"/>
<line x1="543.81" y1="114.7" x2="543.81" y2="122.8" stroke="#22c6d0" stroke-width="1.08" opacity="0.55"/>
<line x1="543.93" y1="117.7" x2="543.93" y2="120.4" stroke="#22c6d0" stroke-width="1.08" opacity="0.55"/>
<line x1="552.46" y1="114.6" x2="552.46" y2="120.4" stroke="#22c6d0" stroke-width="1.08" opacity="0.55"/>
<line x1="552.58" y1="105.7" x2="552.58" y2="114.6" stroke="#22c6d0" stroke-width="1.08" opacity="0.55"/>
<line x1="552.70" y1="97.4" x2="552.70" y2="105.7" stroke="#22c6d0" stroke-width="1.08" opacity="0.55"/>
<line x1="552.82" y1="89.2" x2="552.82" y2="97.4" stroke="#22c6d0" stroke-width="1.08" opacity="0.55"/>
<line x1="552.94" y1="86.2" x2="552.94" y2="89.2" stroke="#22c6d0" stroke-width="1.08" opacity="0.55"/>
<line x1="553.06" y1="86.3" x2="553.06" y2="90.6" stroke="#22c6d0" stroke-width="1.08" opacity="0.55"/>
<line x1="553.18" y1="90.6" x2="553.18" y2="97.6" stroke="#22c6d0" stroke-width="1.08" opacity="0.55"/>
<line x1="553.30" y1="97.6" x2="553.30" y2="102.5" stroke="#22c6d0" stroke-width="1.08" opacity="0.55"/>
<line x1="566.99" y1="98.8" x2="566.99" y2="103.1" stroke="#22c6d0" stroke-width="1.08" opacity="0.55"/>
<line x1="567.11" y1="103.1" x2="567.11" y2="109.9" stroke="#22c6d0" stroke-width="1.08" opacity="0.55"/>
<line x1="567.23" y1="109.9" x2="567.23" y2="122.7" stroke="#22c6d0" stroke-width="1.08" opacity="0.55"/>
<line x1="567.35" y1="118.1" x2="567.35" y2="122.7" stroke="#22c6d0" stroke-width="1.08" opacity="0.55"/>
<line x1="567.47" y1="117.7" x2="567.47" y2="121.3" stroke="#22c6d0" stroke-width="1.08" opacity="0.55"/>
<polyline points="535.16,100.7 535.28,100.7 535.4,100.7 535.52,100.7 535.64,100.6 535.76,100.6 535.88,100.6 536,100.6 536.12,100.6 536.24,100.6 536.36,100.6 536.48,100.5 536.6,100.5 536.72,100.5 536.84,100.5 536.96,100.5 537.08,100.5 537.2,100.5 537.32,100.5 537.44,100.5 537.56,100.5 537.68,100.5 537.8,100.4 537.92,100.4 538.04,100.4 538.16,100.4 538.28,100.4 538.4,100.4 538.52,100.4 538.64,100.4 538.76,100.4 538.88,100.4 539,100.4 539.12,100.4 539.24,100.4 539.36,100.4 539.48,100.4 539.6,100.4 539.72,100.4 539.85,100.4 539.97,100.4 540.09,100.3 540.21,100.3 540.33,100.3 540.45,100.3 540.57,100.3 540.69,100.3 540.81,100.3 540.93,100.3 541.05,100.3 541.17,100.3 541.29,100.3 541.41,100.3 541.53,100.3 541.65,100.3 541.77,100.3 541.89,100.3 542.01,100.3 542.13,100.3 542.25,100.3 542.37,100.3 542.49,100.3 542.61,100.3 542.73,100.3 542.85,100.3 542.97,100.3 543.09,100.3 543.21,100.3 543.33,100.3 543.45,100.9" fill="none" stroke="#22c6d0" stroke-width="1.2" stroke-linejoin="round" opacity="1" />
<polyline points="544.05,120.2 544.17,120.4 544.29,120.4 544.41,120.3 544.53,120.4 544.65,120.5 544.77,120.5 544.89,120.5 545.01,120.5 545.13,120.5 545.25,120.5 545.37,120.5 545.49,120.5 545.61,120.5 545.73,120.5 545.85,120.5 545.97,120.5 546.09,120.5 546.21,120.5 546.33,120.5 546.45,120.5 546.57,120.5 546.69,120.5 546.81,120.5 546.93,120.5 547.05,120.5 547.17,120.5 547.29,120.5 547.41,120.5 547.53,120.5 547.65,120.5 547.77,120.5 547.89,120.5 548.01,120.4 548.13,120.4 548.25,120.4 548.37,120.4 548.49,120.4 548.61,120.4 548.73,120.4 548.85,120.4 548.97,120.4 549.09,120.4 549.22,120.4 549.34,120.4 549.46,120.4 549.58,120.4 549.7,120.4 549.82,120.4 549.94,120.4 550.06,120.4 550.18,120.4 550.3,120.4 550.42,120.4 550.54,120.4 550.66,120.4 550.78,120.4 550.9,120.4 551.02,120.4 551.14,120.4 551.26,120.4 551.38,120.4 551.5,120.4 551.62,120.4 551.74,120.4 551.86,120.4 551.98,120.4 552.1,120.4 552.22,120.4 552.34,120.4" fill="none" stroke="#22c6d0" stroke-width="1.2" stroke-linejoin="round" opacity="1" />
<polyline points="553.42,99.8 553.54,99.8 553.66,100.0 553.78,99.9 553.9,100.0 554.02,99.9 554.14,99.9 554.26,99.9 554.38,99.9 554.5,99.8 554.62,99.8 554.74,99.8 554.86,99.8 554.98,99.8 555.1,99.8 555.22,99.8 555.34,99.7 555.46,99.7 555.58,99.7 555.7,99.7 555.82,99.7 555.94,99.7 556.06,99.7 556.18,99.6 556.3,99.6 556.42,99.6 556.54,99.6 556.66,99.6 556.78,99.6 556.9,99.6 557.02,99.5 557.14,99.5 557.26,99.5 557.38,99.5 557.5,99.5 557.62,99.5 557.74,99.4 557.86,99.4 557.98,99.4 558.1,99.4 558.22,99.4 558.34,99.4 558.46,99.4 558.59,99.3 558.71,99.3 558.83,99.3 558.95,99.3 559.07,99.3 559.19,99.3 559.31,99.3 559.43,99.2 559.55,99.2 559.67,99.2 559.79,99.2 559.91,99.2 560.03,99.2 560.15,99.1 560.27,99.1 560.39,99.1 560.51,99.1 560.63,99.1 560.75,99.1 560.87,99.1 560.99,99.0 561.11,99.0 561.23,99.0 561.35,99.0 561.47,99.0 561.59,99.0 561.71,99.0 561.83,98.9 561.95,98.9 562.07,98.9 562.19,98.9 562.31,98.9 562.43,98.9 562.55,98.8 562.67,98.8 562.79,98.8 562.91,98.8 563.03,98.8 563.15,98.8 563.27,98.8 563.39,98.7 563.51,98.7 563.63,98.7 563.75,98.7 563.87,98.7 563.99,98.7 564.11,98.7 564.23,98.6 564.35,98.6 564.47,98.6 564.59,98.6 564.71,98.6 564.83,98.6 564.95,98.6 565.07,98.5 565.19,98.5 565.31,98.5 565.43,98.5 565.55,98.5 565.67,98.5 565.79,98.4 565.91,98.4 566.03,98.4 566.15,98.4 566.27,98.4 566.39,98.4 566.51,98.3 566.63,98.3 566.75,98.3 566.87,98.5" fill="none" stroke="#22c6d0" stroke-width="1.2" stroke-linejoin="round" opacity="1" />
<polyline points="567.59,120.2 567.71,120.4 567.83,120.5 567.95,120.4 568.08,120.5 568.2,120.5 568.32,120.5 568.44,120.5 568.56,120.5 568.68,120.5 568.8,120.5 568.92,120.5 569.04,120.5 569.16,120.5 569.28,120.5 569.4,120.5 569.52,120.5 569.64,120.5 569.76,120.5 569.88,120.5 570,120.5 570.12,120.5 570.24,120.5 570.36,120.5 570.48,120.5 570.6,120.4 570.72,120.4 570.84,120.4 570.96,120.4 571.08,120.4 571.2,120.4 571.32,120.4 571.44,120.4 571.56,120.4 571.68,120.4 571.8,120.4 571.92,120.4 572.04,120.4 572.16,120.4 572.28,120.4 572.4,120.4 572.52,120.4" fill="none" stroke="#22c6d0" stroke-width="1.2" stroke-linejoin="round" opacity="1" />
<line x1="542.85" y1="60.1" x2="542.85" y2="72.5" stroke="#dcd628" stroke-width="0.90" opacity="0.55"/>
<line x1="542.97" y1="72.5" x2="542.97" y2="86.1" stroke="#dcd628" stroke-width="0.90" opacity="0.55"/>
<line x1="543.09" y1="86.1" x2="543.09" y2="92.9" stroke="#dcd628" stroke-width="0.90" opacity="0.55"/>
<line x1="543.21" y1="92.5" x2="543.21" y2="96.0" stroke="#dcd628" stroke-width="0.90" opacity="0.55"/>
<line x1="543.69" y1="99.7" x2="543.69" y2="104.3" stroke="#dcd628" stroke-width="0.90" opacity="0.55"/>
<line x1="543.81" y1="89.5" x2="543.81" y2="102.8" stroke="#dcd628" stroke-width="0.90" opacity="0.55"/>
<line x1="543.93" y1="88.7" x2="543.93" y2="100.5" stroke="#dcd628" stroke-width="0.90" opacity="0.55"/>
<line x1="544.05" y1="95.6" x2="544.05" y2="102.0" stroke="#dcd628" stroke-width="0.90" opacity="0.55"/>
<line x1="544.17" y1="95.6" x2="544.17" y2="104.1" stroke="#dcd628" stroke-width="0.90" opacity="0.55"/>
<line x1="544.29" y1="96.6" x2="544.29" y2="100.3" stroke="#dcd628" stroke-width="0.90" opacity="0.55"/>
<line x1="544.41" y1="96.6" x2="544.41" y2="99.5" stroke="#dcd628" stroke-width="0.90" opacity="0.55"/>
<line x1="552.22" y1="80.7" x2="552.22" y2="99.1" stroke="#dcd628" stroke-width="0.90" opacity="0.55"/>
<line x1="552.34" y1="73.2" x2="552.34" y2="80.7" stroke="#dcd628" stroke-width="0.90" opacity="0.55"/>
<line x1="552.46" y1="65.1" x2="552.46" y2="73.2" stroke="#dcd628" stroke-width="0.90" opacity="0.55"/>
<line x1="552.58" y1="61.3" x2="552.58" y2="65.1" stroke="#dcd628" stroke-width="0.90" opacity="0.55"/>
<line x1="552.94" y1="61.6" x2="552.94" y2="64.5" stroke="#dcd628" stroke-width="0.90" opacity="0.55"/>
<line x1="553.06" y1="64.5" x2="553.06" y2="68.4" stroke="#dcd628" stroke-width="0.90" opacity="0.55"/>
<line x1="553.30" y1="55.6" x2="553.30" y2="69.4" stroke="#dcd628" stroke-width="0.90" opacity="0.55"/>
<line x1="553.42" y1="54.6" x2="553.42" y2="61.6" stroke="#dcd628" stroke-width="0.90" opacity="0.55"/>
<line x1="553.54" y1="58.2" x2="553.54" y2="61.6" stroke="#dcd628" stroke-width="0.90" opacity="0.55"/>
<line x1="566.27" y1="60.3" x2="566.27" y2="65.1" stroke="#dcd628" stroke-width="0.90" opacity="0.55"/>
<line x1="566.39" y1="65.1" x2="566.39" y2="79.5" stroke="#dcd628" stroke-width="0.90" opacity="0.55"/>
<line x1="566.51" y1="79.5" x2="566.51" y2="91.1" stroke="#dcd628" stroke-width="0.90" opacity="0.55"/>
<line x1="566.63" y1="91.1" x2="566.63" y2="94.0" stroke="#dcd628" stroke-width="0.90" opacity="0.55"/>
<line x1="566.75" y1="94.0" x2="566.75" y2="98.3" stroke="#dcd628" stroke-width="0.90" opacity="0.55"/>
<line x1="567.11" y1="98.7" x2="567.11" y2="103.0" stroke="#dcd628" stroke-width="0.90" opacity="0.55"/>
<line x1="567.23" y1="96.1" x2="567.23" y2="104.8" stroke="#dcd628" stroke-width="0.90" opacity="0.55"/>
<line x1="567.35" y1="89.5" x2="567.35" y2="96.1" stroke="#dcd628" stroke-width="0.90" opacity="0.55"/>
<line x1="567.47" y1="93.4" x2="567.47" y2="102.3" stroke="#dcd628" stroke-width="0.90" opacity="0.55"/>
<line x1="567.59" y1="96.1" x2="567.59" y2="104.3" stroke="#dcd628" stroke-width="0.90" opacity="0.55"/>
<line x1="567.71" y1="97.5" x2="567.71" y2="104.9" stroke="#dcd628" stroke-width="0.90" opacity="0.55"/>
<line x1="567.83" y1="97.2" x2="567.83" y2="101.0" stroke="#dcd628" stroke-width="0.90" opacity="0.55"/>
<polyline points="535.16,60.1 535.28,60.1 535.4,60.1 535.52,60.0 535.64,59.9 535.76,60.1 535.88,60.1 536,60.0 536.12,60.2 536.24,60.1 536.36,60.1 536.48,60.1 536.6,60.2 536.72,60.1 536.84,60.1 536.96,60.1 537.08,60.1 537.2,60.1 537.32,60.1 537.44,60.1 537.56,60.1 537.68,60.0 537.8,60.2 537.92,60.0 538.04,60.0 538.16,60.1 538.28,60.2 538.4,60.1 538.52,60.1 538.64,60.1 538.76,60.0 538.88,60.0 539,60.0 539.12,60.1 539.24,60.1 539.36,60.1 539.48,60.1 539.6,59.9 539.72,60.1 539.85,60.0 539.97,60.0 540.09,60.2 540.21,60.2 540.33,60.1 540.45,60.1 540.57,60.0 540.69,60.1 540.81,60.1 540.93,60.0 541.05,60.0 541.17,60.1 541.29,60.0 541.41,60.1 541.53,60.1 541.65,60.1 541.77,60.2 541.89,60.2 542.01,60.0 542.13,60.1 542.25,60.1 542.37,60.0 542.49,60.1 542.61,60.1 542.73,60.1" fill="none" stroke="#dcd628" stroke-width="1.0" stroke-linejoin="round" opacity="1" />
<polyline points="543.33,97.3 543.45,97.9 543.57,98.4" fill="none" stroke="#dcd628" stroke-width="1.0" stroke-linejoin="round" opacity="1" />
<polyline points="544.53,98.2 544.65,98.3 544.77,98.4 544.89,98.4 545.01,98.6 545.13,98.4 545.25,98.5 545.37,98.6 545.49,98.6 545.61,98.7 545.73,98.6 545.85,98.5 545.97,98.6 546.09,98.6 546.21,98.6 546.33,98.6 546.45,98.7 546.57,98.7 546.69,98.8 546.81,98.7 546.93,98.6 547.05,98.8 547.17,98.8 547.29,98.8 547.41,98.7 547.53,98.7 547.65,98.7 547.77,98.7 547.89,98.7 548.01,98.7 548.13,98.8 548.25,98.6 548.37,98.7 548.49,98.7 548.61,98.7 548.73,98.8 548.85,98.7 548.97,98.8 549.09,98.7 549.22,98.9 549.34,98.8 549.46,99.0 549.58,99.0 549.7,98.8 549.82,98.7 549.94,98.9 550.06,98.9 550.18,98.9 550.3,98.9 550.42,98.8 550.54,98.9 550.66,99.0 550.78,99.0 550.9,98.9 551.02,98.9 551.14,98.8 551.26,98.8 551.38,98.9 551.5,98.9 551.62,99.0 551.74,99.0 551.86,99.0 551.98,99.0 552.1,98.9" fill="none" stroke="#dcd628" stroke-width="1.0" stroke-linejoin="round" opacity="1" />
<polyline points="552.7,60.9 552.82,61.6" fill="none" stroke="#dcd628" stroke-width="1.0" stroke-linejoin="round" opacity="1" />
<polyline points="553.08,69.1 553.28,69.1" fill="none" stroke="#dcd628" stroke-width="1.0" stroke-linejoin="round" opacity="1" />
<polyline points="553.66,60.5 553.78,60.6 553.9,60.4 554.02,60.5 554.14,60.5 554.26,60.7 554.38,60.6 554.5,60.7 554.62,60.7 554.74,60.8 554.86,60.7 554.98,60.8 555.1,60.9 555.22,60.8 555.34,60.9 555.46,61.0 555.58,60.9 555.7,60.9 555.82,61.0 555.94,60.9 556.06,60.7 556.18,60.7 556.3,60.5 556.42,60.5 556.54,60.4 556.66,60.4 556.78,60.5 556.9,60.7 557.02,60.7 557.14,60.7 557.26,60.8 557.38,60.7 557.5,60.7 557.62,60.8 557.74,60.8 557.86,60.7 557.98,60.7 558.1,60.6 558.22,60.8 558.34,60.7 558.46,60.5 558.59,60.7 558.71,60.6 558.83,60.6 558.95,60.6 559.07,60.5 559.19,60.7 559.31,60.8 559.43,60.6 559.55,60.7 559.67,60.7 559.79,60.7 559.91,60.7 560.03,60.7 560.15,60.7 560.27,60.7 560.39,60.8 560.51,60.6 560.63,60.7 560.75,60.7 560.87,60.7 560.99,60.7 561.11,60.8 561.23,60.8 561.35,60.7 561.47,60.5 561.59,60.6 561.71,60.7 561.83,60.7 561.95,60.7 562.07,60.6 562.19,60.7 562.31,60.7 562.43,60.7 562.55,60.7 562.67,60.6 562.79,60.7 562.91,60.7 563.03,60.8 563.15,60.7 563.27,60.7 563.39,60.6 563.51,60.5 563.63,60.6 563.75,60.6 563.87,60.6 563.99,60.5 564.11,60.5 564.23,60.4 564.35,60.5 564.47,60.5 564.59,60.4 564.71,60.5 564.83,60.6 564.95,60.5 565.07,60.5 565.19,60.6 565.31,60.5 565.43,60.5 565.55,60.5 565.67,60.5 565.79,60.5 565.91,60.4 566.03,60.5 566.15,60.6" fill="none" stroke="#dcd628" stroke-width="1.0" stroke-linejoin="round" opacity="1" />
<polyline points="566.87,98.4 566.99,98.6" fill="none" stroke="#dcd628" stroke-width="1.0" stroke-linejoin="round" opacity="1" />
<polyline points="567.95,98.7 568.08,98.8 568.2,98.9 568.32,99.0 568.44,99.0 568.56,99.0 568.68,99.2 568.8,99.1 568.92,99.1 569.04,99.1 569.16,99.2 569.28,99.2 569.4,99.2 569.52,99.2 569.64,99.3 569.76,99.3 569.88,99.4 570,99.3 570.12,99.3 570.24,99.5 570.36,99.4 570.48,99.4 570.6,99.3 570.72,99.3 570.84,99.4 570.96,99.4 571.08,99.4 571.2,99.3 571.32,99.4 571.44,99.3 571.56,99.3 571.68,99.2 571.8,99.2 571.92,99.2 572.04,99.2 572.16,99.2 572.28,99.0 572.4,99.2 572.52,99.2" fill="none" stroke="#dcd628" stroke-width="1.0" stroke-linejoin="round" opacity="1" />
<line x1="543.1" y1="31" x2="543.1" y2="131" stroke="#e0202c" stroke-width="0.9" stroke-dasharray="2 1.2"/>
<line x1="543.8" y1="31" x2="543.8" y2="131" stroke="#e0202c" stroke-width="0.9" stroke-dasharray="2 1.2"/>
</g>
</g>
<text x="120.0" y="127.8" font-size="7.3" fill="#bdbdbd" text-anchor="middle" >0 s</text>
<text x="213.9" y="127.8" font-size="7.3" fill="#bdbdbd" text-anchor="middle" >10 µs</text>
<text x="307.8" y="127.8" font-size="7.3" fill="#bdbdbd" text-anchor="middle" >20 µs</text>
<text x="401.70000000000005" y="127.8" font-size="7.3" fill="#bdbdbd" text-anchor="middle" >30 µs</text>
<text x="495.6" y="127.8" font-size="7.3" fill="#bdbdbd" text-anchor="middle" >40 µs</text>
<text x="589.5" y="127.8" font-size="7.3" fill="#bdbdbd" text-anchor="middle" >50 µs</text>
<text x="683.4000000000001" y="127.8" font-size="7.3" fill="#bdbdbd" text-anchor="middle" >60 µs</text>
<text x="777.3000000000001" y="127.8" font-size="7.3" fill="#bdbdbd" text-anchor="middle" >70 µs</text>
<text x="871.2" y="127.8" font-size="7.3" fill="#bdbdbd" text-anchor="middle" >80 µs</text>
<text x="962" y="43.199999999999996" font-size="7.4" fill="#27a5ac" text-anchor="end" >400 A</text>
<text x="962" y="53.199999999999996" font-size="7.4" fill="#27a5ac" text-anchor="end" >350 A</text>
<text x="962" y="63.199999999999996" font-size="7.4" fill="#27a5ac" text-anchor="end" >300 A</text>
<text x="962" y="73.2" font-size="7.4" fill="#27a5ac" text-anchor="end" >250 A</text>
<text x="962" y="83.2" font-size="7.4" fill="#27a5ac" text-anchor="end" >200 A</text>
<text x="962" y="93.2" font-size="7.4" fill="#27a5ac" text-anchor="end" >150 A</text>
<text x="962" y="103.2" font-size="7.4" fill="#27a5ac" text-anchor="end" >100 A</text>
<text x="962" y="113.2" font-size="7.4" fill="#27a5ac" text-anchor="end" >50 A</text>
<text x="962" y="123.2" font-size="7.4" fill="#27a5ac" text-anchor="end" >0 A</text>
<polygon points="942.6,34.3 961,34.3 961,52.3" fill="#4f5152"/>
<line x1="942.4" y1="34.6" x2="960.8" y2="52.6" stroke="#0c1416" stroke-width="1.5"/>
<polyline points="942.4,34.3 961,34.3 961,52.6" fill="none" stroke="#1fb0de" stroke-width="1.2"/>
<line x1="951.8" y1="43" x2="956.1" y2="38.8" stroke="#1fb0de" stroke-width="1.3"/>
<circle cx="957.3" cy="37.7" r="1.6" fill="none" stroke="#1fb0de" stroke-width="1"/>
<polygon points="27.5,87.3 35.4,87.3 38.8,91.1 35.4,94.9 27.5,94.9" fill="#3b3a1c" stroke="#77742a" stroke-width="0.9"/>
<text x="31.8" y="93.0" font-size="5.4" fill="#c9c23a" text-anchor="middle" font-weight="bold" textLength="6.4" lengthAdjust="spacingAndGlyphs" >C 1</text>
<polygon points="27.5,107.5 35.4,107.5 38.8,111.3 35.4,115.1 27.5,115.1" fill="#4a3a28" stroke="#8e5e2c" stroke-width="0.9"/>
<text x="31.8" y="113.2" font-size="5.4" fill="#dc943c" text-anchor="middle" font-weight="bold" textLength="6.4" lengthAdjust="spacingAndGlyphs" >M 1</text>
<polygon points="27.5,116.6 35.4,116.6 38.8,120.4 35.4,124.2 27.5,124.2" fill="#22c6d0" stroke="#22c6d0" stroke-width="0.9"/>
<text x="31.8" y="122.30000000000001" font-size="5.4" fill="#0a5258" text-anchor="middle" font-weight="bold" textLength="6.4" lengthAdjust="spacingAndGlyphs" >C 2</text>
<polygon points="115.2,30.6 125.2,30.6 120.2,35.4" fill="#f08a1c"/>
<path d="M115.6,36.7 h9.2 v10.6 h-2.8 l-1.8,4 l-1.8,-4 h-2.8 z" fill="#0a0a0a" stroke="#f08a1c" stroke-width="1.2"/>
<text x="120.2" y="45.3" font-size="8.6" fill="#f4f4f4" text-anchor="middle" font-weight="bold" >T</text>
<line x1="24.4" y1="16.45" x2="966.2" y2="16.45" stroke="#dedede" stroke-width="1.5" />
<line x1="25.25" y1="15.5" x2="25.25" y2="534.5" stroke="#dedede" stroke-width="1.7" />
<line x1="965.4" y1="15.7" x2="965.4" y2="534.5" stroke="#dedede" stroke-width="1.6" />
<line x1="24.4" y1="533.8" x2="966.2" y2="533.8" stroke="#dedede" stroke-width="1.5" />
<circle cx="970.8" cy="270" r="0.95" fill="#cfcfcf"/>
<circle cx="970.8" cy="275" r="0.95" fill="#cfcfcf"/>
<circle cx="970.8" cy="280" r="0.95" fill="#cfcfcf"/>
<rect x="974.5" y="15.6" width="81.0" height="518.7" fill="#2e2e2e" rx="1.5" stroke="#4c4c4c" stroke-width="0.9" />
<text x="1015.2" y="23.6" font-size="7.9" fill="#f0f0f0" text-anchor="middle" font-weight="bold" textLength="45.6" lengthAdjust="spacingAndGlyphs" >Add New...</text>
<rect x="979.4" y="29.2" width="33.6" height="19.3" fill="#282828" rx="3" stroke="#565656" stroke-width="0.9" />
<rect x="980.1999999999999" y="30.0" width="32.0" height="8.7" rx="2.4" fill="#333" opacity="0.55"/>
<rect x="1018" y="29.2" width="33.6" height="19.3" fill="#282828" rx="3" stroke="#565656" stroke-width="0.9" />
<rect x="1018.8" y="30.0" width="32.0" height="8.7" rx="2.4" fill="#333" opacity="0.55"/>
<text x="996.4" y="41.4" font-size="8.8" fill="#e2e2e2" text-anchor="middle" textLength="27.2" lengthAdjust="spacingAndGlyphs" >Cursors</text>
<text x="1034.6" y="41.4" font-size="8.8" fill="#e2e2e2" text-anchor="middle" textLength="26.9" lengthAdjust="spacingAndGlyphs" >Callout</text>
<rect x="979.4" y="54.1" width="33.6" height="19.6" fill="#282828" rx="3" stroke="#565656" stroke-width="0.9" />
<rect x="980.1999999999999" y="54.9" width="32.0" height="8.8" rx="2.4" fill="#333" opacity="0.55"/>
<rect x="1018" y="54.1" width="33.6" height="19.6" fill="#282828" rx="3" stroke="#565656" stroke-width="0.9" />
<rect x="1018.8" y="54.9" width="32.0" height="8.8" rx="2.4" fill="#333" opacity="0.55"/>
<text x="996.2" y="65.9" font-size="8.8" fill="#e2e2e2" text-anchor="middle" textLength="31.2" lengthAdjust="spacingAndGlyphs" >Measure</text>
<text x="1034.5" y="65.9" font-size="8.8" fill="#e2e2e2" text-anchor="middle" textLength="25" lengthAdjust="spacingAndGlyphs" >Search</text>
<rect x="979.4" y="78.4" width="33.6" height="19.6" fill="#282828" rx="3" stroke="#565656" stroke-width="0.9" />
<rect x="980.1999999999999" y="79.2" width="32.0" height="8.8" rx="2.4" fill="#333" opacity="0.55"/>
<rect x="1018" y="78.4" width="33.6" height="19.6" fill="#282828" rx="3" stroke="#565656" stroke-width="0.9" />
<rect x="1018.8" y="79.2" width="32.0" height="8.8" rx="2.4" fill="#333" opacity="0.55"/>
<text x="996.2" y="86.3" font-size="8.6" fill="#e2e2e2" text-anchor="middle" textLength="25.8" lengthAdjust="spacingAndGlyphs" >Results</text>
<text x="996.5" y="94.8" font-size="8.6" fill="#e2e2e2" text-anchor="middle" textLength="18.6" lengthAdjust="spacingAndGlyphs" >Table</text>
<text x="1034.9" y="90.6" font-size="8.8" fill="#e2e2e2" text-anchor="middle" textLength="15.2" lengthAdjust="spacingAndGlyphs" >Plot</text>
<line x1="977" y1="101.7" x2="1053.6" y2="101.7" stroke="#505050" stroke-width="1" />
<rect x="979.4" y="105.2" width="33.6" height="20" fill="#282828" rx="3" stroke="#565656" stroke-width="0.9" />
<rect x="980.1999999999999" y="106.0" width="32.0" height="9.0" rx="2.4" fill="#333" opacity="0.55"/>
<rect x="1018" y="105.2" width="33.6" height="20" fill="#282828" rx="3" stroke="#565656" stroke-width="0.9" />
<rect x="1018.8" y="106.0" width="32.0" height="9.0" rx="2.4" fill="#333" opacity="0.55"/>
<text x="1035" y="117.8" font-size="8.8" fill="#e2e2e2" text-anchor="middle" textLength="26.8" lengthAdjust="spacingAndGlyphs" >More...</text>
<rect x="989.9" y="108.8" width="12.2" height="10.8" fill="none" stroke="#d0d0d0" stroke-width="1.2" stroke-dasharray="1.2 1.55"/>
<circle cx="997.4" cy="113.2" r="2.1" fill="#2a2a2a" stroke="#dcdcdc" stroke-width="1.1"/>
<line x1="995.8" y1="114.8" x2="992.6" y2="117.4" stroke="#dcdcdc" stroke-width="1.3"/>
<path d="M1000,117.6 l3.4,2.2 l-1.5,0.3 l0.9,1.5 l-0.8,0.4 l-0.9,-1.5 l-1.0,1.0 z" fill="#dcdcdc"/>
<line x1="977" y1="129.4" x2="1053.6" y2="129.4" stroke="#505050" stroke-width="1" />
<rect x="976.8" y="137.2" width="77" height="30.4" fill="#c9c9c9" rx="2" />
<path d="M976.8,146.79999999999998 V139.2 a2,2 0 0 1 2,-2 H1051.8 a2,2 0 0 1 2,2 V146.79999999999998 z" fill="#58595b"/>
<text x="979.9" y="144.6" font-size="8.1" fill="#fff" textLength="24.9" lengthAdjust="spacingAndGlyphs" >Meas 1</text>
<text x="979.9" y="155.29999999999998" font-size="8.2" fill="#1c1c1c" textLength="14.2" lengthAdjust="spacingAndGlyphs" >Eon'</text>
<text x="979.9" y="165.29999999999998" font-size="8.2" fill="#1c1c1c" textLength="14.6" lengthAdjust="spacingAndGlyphs" >Eon:</text>
<text x="1017.7" y="165.29999999999998" font-size="8.2" fill="#1c1c1c" textLength="31.3" lengthAdjust="spacingAndGlyphs" >3.190 mJ</text>
<path d="M1025.7,138.79999999999998 H1039.6 L1034.4,145.1 H1025.7 A3.1,3.1 0 0 1 1025.7,138.79999999999998 z" fill="#e6365a"/>
<path d="M1041.3,138.79999999999998 H1047.5 A3.1,3.1 0 0 1 1047.5,145.1 H1036.1 z" fill="#8c8c8c"/>
<text x="1028.7" y="144.1" font-size="5" fill="#fff" text-anchor="middle" font-weight="bold" >3</text>
<text x="1044.8" y="144.29999999999998" font-size="6" fill="#222" text-anchor="middle" >+</text>
<rect x="976.8" y="172.3" width="77" height="30.4" fill="#c9c9c9" rx="2" />
<path d="M976.8,181.9 V174.3 a2,2 0 0 1 2,-2 H1051.8 a2,2 0 0 1 2,2 V181.9 z" fill="#000"/>
<text x="979.9" y="179.70000000000002" font-size="8.1" fill="#fff" textLength="24.9" lengthAdjust="spacingAndGlyphs" >Meas 2</text>
<text x="979.9" y="190.4" font-size="8.2" fill="#1c1c1c" textLength="15.2" lengthAdjust="spacingAndGlyphs" >Eoff'</text>
<text x="979.9" y="200.4" font-size="8.2" fill="#1c1c1c" textLength="15.6" lengthAdjust="spacingAndGlyphs" >Eoff:</text>
<text x="1017.7" y="200.4" font-size="8.2" fill="#1c1c1c" textLength="31.3" lengthAdjust="spacingAndGlyphs" >1.666 mJ</text>
<path d="M1025.7,173.9 H1039.6 L1034.4,180.20000000000002 H1025.7 A3.1,3.1 0 0 1 1025.7,173.9 z" fill="#e6365a"/>
<path d="M1041.3,173.9 H1047.5 A3.1,3.1 0 0 1 1047.5,180.20000000000002 H1036.1 z" fill="#8c8c8c"/>
<text x="1028.7" y="179.20000000000002" font-size="5" fill="#fff" text-anchor="middle" font-weight="bold" >3</text>
<text x="1044.8" y="179.4" font-size="6" fill="#222" text-anchor="middle" >+</text>
<rect x="976.8" y="207.3" width="77" height="30.4" fill="#c9c9c9" rx="2" />
<path d="M976.8,216.9 V209.3 a2,2 0 0 1 2,-2 H1051.8 a2,2 0 0 1 2,2 V216.9 z" fill="#58595b"/>
<text x="979.9" y="214.70000000000002" font-size="8.1" fill="#fff" textLength="24.9" lengthAdjust="spacingAndGlyphs" >Meas 3</text>
<text x="979.9" y="225.4" font-size="8.2" fill="#1c1c1c" textLength="22.4" lengthAdjust="spacingAndGlyphs" >Vpeak'</text>
<text x="979.9" y="235.4" font-size="8.2" fill="#1c1c1c" textLength="22.8" lengthAdjust="spacingAndGlyphs" >Vpeak:</text>
<text x="1017.7" y="235.4" font-size="8.2" fill="#1c1c1c" textLength="27.1" lengthAdjust="spacingAndGlyphs" >835.2 V</text>
<path d="M1025.7,208.9 H1039.6 L1034.4,215.20000000000002 H1025.7 A3.1,3.1 0 0 1 1025.7,208.9 z" fill="#e6365a"/>
<path d="M1041.3,208.9 H1047.5 A3.1,3.1 0 0 1 1047.5,215.20000000000002 H1036.1 z" fill="#8c8c8c"/>
<text x="1028.7" y="214.20000000000002" font-size="5" fill="#fff" text-anchor="middle" font-weight="bold" >3</text>
<text x="1044.8" y="214.4" font-size="6" fill="#222" text-anchor="middle" >+</text>
<rect x="976.8" y="242.3" width="77" height="30.4" fill="#c9c9c9" rx="2" />
<path d="M976.8,251.9 V244.3 a2,2 0 0 1 2,-2 H1051.8 a2,2 0 0 1 2,2 V251.9 z" fill="#58595b"/>
<text x="979.9" y="249.70000000000002" font-size="8.1" fill="#fff" textLength="24.9" lengthAdjust="spacingAndGlyphs" >Meas 4</text>
<text x="979.9" y="260.40000000000003" font-size="8.2" fill="#1c1c1c" textLength="19.2" lengthAdjust="spacingAndGlyphs" >Ipeak'</text>
<text x="979.9" y="270.40000000000003" font-size="8.2" fill="#1c1c1c" textLength="19.6" lengthAdjust="spacingAndGlyphs" >Ipeak:</text>
<text x="1017.7" y="270.40000000000003" font-size="8.2" fill="#1c1c1c" textLength="27.1" lengthAdjust="spacingAndGlyphs" >170.5 A</text>
<path d="M1025.7,243.9 H1039.6 L1034.4,250.20000000000002 H1025.7 A3.1,3.1 0 0 1 1025.7,243.9 z" fill="#e6365a"/>
<path d="M1041.3,243.9 H1047.5 A3.1,3.1 0 0 1 1047.5,250.20000000000002 H1036.1 z" fill="#8c8c8c"/>
<text x="1028.7" y="249.20000000000002" font-size="5" fill="#fff" text-anchor="middle" font-weight="bold" >3</text>
<text x="1044.8" y="249.4" font-size="6" fill="#222" text-anchor="middle" >+</text>
<rect x="976.8" y="277.2" width="77" height="30.4" fill="#c9c9c9" rx="2" />
<path d="M976.8,286.8 V279.2 a2,2 0 0 1 2,-2 H1051.8 a2,2 0 0 1 2,2 V286.8 z" fill="#58595b"/>
<text x="979.9" y="284.59999999999997" font-size="8.1" fill="#fff" textLength="24.9" lengthAdjust="spacingAndGlyphs" >Meas 5</text>
<text x="979.9" y="295.3" font-size="8.2" fill="#1c1c1c" textLength="35.2" lengthAdjust="spacingAndGlyphs" >Amplitude</text>
<text x="979.9" y="305.3" font-size="8.2" fill="#1c1c1c" textLength="38.2" lengthAdjust="spacingAndGlyphs" >µ': 107.7 A</text>
<rect x="1038.6" y="278.9" width="12.0" height="6.2" fill="#84c225" rx="3.1" />
<text x="1044.6" y="284.2" font-size="5.6" fill="#1a3a00" text-anchor="middle" font-weight="bold" >4</text>
<rect x="976.8" y="312.2" width="77" height="30.4" fill="#c9c9c9" rx="2" />
<path d="M976.8,321.8 V314.2 a2,2 0 0 1 2,-2 H1051.8 a2,2 0 0 1 2,2 V321.8 z" fill="#58595b"/>
<text x="979.9" y="319.59999999999997" font-size="8.1" fill="#fff" textLength="24.9" lengthAdjust="spacingAndGlyphs" >Meas 6</text>
<text x="979.9" y="330.3" font-size="8.2" fill="#1c1c1c" textLength="35.2" lengthAdjust="spacingAndGlyphs" >Amplitude</text>
<text x="979.9" y="340.3" font-size="8.2" fill="#1c1c1c" textLength="38.2" lengthAdjust="spacingAndGlyphs" >µ': 595.3 V</text>
<rect x="1038.6" y="313.9" width="12.0" height="6.2" fill="#e6365a" rx="3.1" />
<text x="1044.6" y="319.2" font-size="5.6" fill="#fff" text-anchor="middle" font-weight="bold" >3</text>
<rect x="24.5" y="535" width="1031" height="45" fill="#2e2e2e" />
<rect x="26" y="537.6" width="48.3" height="40.5" fill="#c9c9c9" rx="2.2" />
<path d="M26,547.7 V539.8000000000001 a2.2,2.2 0 0 1 2.2,-2.2 H72.1 a2.2,2.2 0 0 1 2.2,2.2 V547.7 z" fill="#4b4622"/>
<text x="28.9" y="544.9" font-size="8.5" fill="#e6dc22" textLength="15.4" lengthAdjust="spacingAndGlyphs" stroke="#e6dc22" stroke-width="0.25">Ch 1</text>
<text x="28.9" y="555.5" font-size="8.3" fill="#242424" textLength="23.1" lengthAdjust="spacingAndGlyphs" >5 V/div</text>
<text x="28.9" y="575.8" font-size="8.3" fill="#242424" textLength="21" lengthAdjust="spacingAndGlyphs" >1 GHz</text>
<path d="M64.8,569.4 v3 h2 l1.7,1.5 l1.9,-1.7" fill="none" stroke="#262626" stroke-width="1.5"/>
<path d="M30,564.8 v-2 a3.1,3.1 0 0 1 6.2,0" fill="none" stroke="#4a4a4a" stroke-width="1.5"/>
<path d="M32.4,562.6 a1.2,1.2 0 0 1 2.2,0" fill="none" stroke="#777" stroke-width="0.9"/>
<circle cx="36.2" cy="563.9" r="1.25" fill="none" stroke="#8a8a8a" stroke-width="0.9"/>
<rect x="77" y="537.6" width="48.3" height="40.5" fill="#c9c9c9" rx="2.2" />
<path d="M77,547.7 V539.8000000000001 a2.2,2.2 0 0 1 2.2,-2.2 H123.1 a2.2,2.2 0 0 1 2.2,2.2 V547.7 z" fill="#1fcad4"/>
<text x="79.9" y="544.9" font-size="8.5" fill="#07474e" textLength="15.4" lengthAdjust="spacingAndGlyphs" stroke="#07474e" stroke-width="0.25">Ch 2</text>
<text x="79.9" y="555.5" font-size="8.3" fill="#242424" textLength="27.8" lengthAdjust="spacingAndGlyphs" >50 A/div</text>
<text x="79.9" y="565.65" font-size="8.3" fill="#242424" textLength="16.2" lengthAdjust="spacingAndGlyphs" >50 Ω</text>
<text x="105.5" y="565.65" font-size="8.3" fill="#242424" textLength="8.8" lengthAdjust="spacingAndGlyphs" >DS</text>
<text x="79.9" y="575.8" font-size="8.3" fill="#242424" textLength="21" lengthAdjust="spacingAndGlyphs" >1 GHz</text>
<path d="M115.8,569.4 v3 h2 l1.7,1.5 l1.9,-1.7" fill="none" stroke="#262626" stroke-width="1.5"/>
<rect x="128" y="537.6" width="48.3" height="40.5" fill="#c9c9c9" rx="2.2" />
<path d="M128,547.7 V539.8000000000001 a2.2,2.2 0 0 1 2.2,-2.2 H174.10000000000002 a2.2,2.2 0 0 1 2.2,2.2 V547.7 z" fill="#48232a"/>
<text x="130.9" y="544.9" font-size="8.5" fill="#f2e4e4" textLength="15.4" lengthAdjust="spacingAndGlyphs" stroke="#f2e4e4" stroke-width="0.25">Ch 3</text>
<text x="130.9" y="555.5" font-size="8.3" fill="#242424" textLength="31.7" lengthAdjust="spacingAndGlyphs" >100 V/div</text>
<text x="130.9" y="565.65" font-size="8.3" fill="#242424" textLength="18.4" lengthAdjust="spacingAndGlyphs" >1 MΩ</text>
<text x="156.9" y="565.65" font-size="8.3" fill="#242424" textLength="8.8" lengthAdjust="spacingAndGlyphs" >DS</text>
<text x="130.9" y="575.8" font-size="8.3" fill="#242424" textLength="30.7" lengthAdjust="spacingAndGlyphs" >100 MHz</text>
<path d="M166.8,569.4 v3 h2 l1.7,1.5 l1.9,-1.7" fill="none" stroke="#262626" stroke-width="1.5"/>
<rect x="179" y="537.6" width="48.3" height="40.5" fill="#c9c9c9" rx="2.2" />
<path d="M179,547.7 V539.8000000000001 a2.2,2.2 0 0 1 2.2,-2.2 H225.10000000000002 a2.2,2.2 0 0 1 2.2,2.2 V547.7 z" fill="#3a4a22"/>
<text x="181.9" y="544.9" font-size="8.5" fill="#88cc28" textLength="15.4" lengthAdjust="spacingAndGlyphs" stroke="#88cc28" stroke-width="0.25">Ch 4</text>
<text x="181.9" y="555.5" font-size="8.3" fill="#242424" textLength="27.8" lengthAdjust="spacingAndGlyphs" >50 A/div</text>
<text x="181.9" y="565.65" font-size="8.3" fill="#242424" textLength="18.4" lengthAdjust="spacingAndGlyphs" >1 MΩ</text>
<text x="181.9" y="575.8" font-size="8.3" fill="#242424" textLength="30.7" lengthAdjust="spacingAndGlyphs" >500 MHz</text>
<path d="M217.8,569.4 v3 h2 l1.7,1.5 l1.9,-1.7" fill="none" stroke="#262626" stroke-width="1.5"/>
<rect x="230" y="537.6" width="48.3" height="40.5" fill="#c9c9c9" rx="2.2" />
<path d="M230,547.7 V539.8000000000001 a2.2,2.2 0 0 1 2.2,-2.2 H276.1 a2.2,2.2 0 0 1 2.2,2.2 V547.7 z" fill="#5a3c1c"/>
<text x="232.9" y="544.9" font-size="8.5" fill="#f29628" textLength="25.5" lengthAdjust="spacingAndGlyphs" stroke="#f29628" stroke-width="0.25">Math 1</text>
<text x="232.9" y="555.5" font-size="8.3" fill="#242424" textLength="38.2" lengthAdjust="spacingAndGlyphs" >9.7521 k...</text>
<text x="232.9" y="565.65" font-size="8.3" fill="#242424" textLength="32.4" lengthAdjust="spacingAndGlyphs" >Ch3*Ch2</text>
<text x="232.9" y="575.8" font-size="8.3" fill="#242424" textLength="23.7" lengthAdjust="spacingAndGlyphs" >Meas 1</text>
<rect x="281" y="537.6" width="48.3" height="40.5" fill="#c9c9c9" rx="2.2" />
<path d="M281,547.7 V539.8000000000001 a2.2,2.2 0 0 1 2.2,-2.2 H327.1 a2.2,2.2 0 0 1 2.2,2.2 V547.7 z" fill="#352040"/>
<text x="283.9" y="544.9" font-size="8.5" fill="#f4f0f8" textLength="25.5" lengthAdjust="spacingAndGlyphs" stroke="#f4f0f8" stroke-width="0.25">Math 2</text>
<text x="283.9" y="555.5" font-size="8.3" fill="#242424" textLength="38.2" lengthAdjust="spacingAndGlyphs" >9.7521 k...</text>
<text x="283.9" y="565.65" font-size="8.3" fill="#242424" textLength="32.4" lengthAdjust="spacingAndGlyphs" >Ch3*Ch2</text>
<text x="283.9" y="575.8" font-size="8.3" fill="#242424" textLength="23.7" lengthAdjust="spacingAndGlyphs" >Meas 2</text>
<line x1="487.9" y1="537" x2="487.9" y2="579" stroke="#4e4e4e" stroke-width="1" />
<line x1="568.7" y1="537" x2="568.7" y2="579" stroke="#4e4e4e" stroke-width="1" />
<line x1="601.2" y1="537" x2="601.2" y2="579" stroke="#4e4e4e" stroke-width="1" />
<line x1="997.5" y1="537" x2="997.5" y2="579" stroke="#4e4e4e" stroke-width="1" />
<rect x="493.2" y="536.6" width="21.4" height="41.8" fill="#272727" rx="3.2" stroke="#4d4a48" stroke-width="0.9" />
<line x1="495.2" y1="541.6" x2="512.4" y2="541.6" stroke="#c8201e" stroke-width="1.3" />
<text x="504.0" y="554" font-size="8.3" fill="#dedede" text-anchor="middle" textLength="14" lengthAdjust="spacingAndGlyphs" >Add</text>
<text x="504.0" y="562.9" font-size="8.3" fill="#dedede" text-anchor="middle" textLength="15.4" lengthAdjust="spacingAndGlyphs" >New</text>
<text x="504.0" y="571.3" font-size="8.3" fill="#dedede" text-anchor="middle" textLength="18.3" lengthAdjust="spacingAndGlyphs" >Math</text>
<rect x="517.7" y="536.6" width="21.4" height="41.8" fill="#272727" rx="3.2" stroke="#4d4a48" stroke-width="0.9" />
<line x1="519.7" y1="541.6" x2="536.9000000000001" y2="541.6" stroke="#b4b4c6" stroke-width="1.3" />
<text x="528.5" y="554" font-size="8.3" fill="#dedede" text-anchor="middle" textLength="14" lengthAdjust="spacingAndGlyphs" >Add</text>
<text x="528.5" y="562.9" font-size="8.3" fill="#dedede" text-anchor="middle" textLength="15.4" lengthAdjust="spacingAndGlyphs" >New</text>
<text x="528.5" y="571.3" font-size="8.3" fill="#dedede" text-anchor="middle" textLength="11.5" lengthAdjust="spacingAndGlyphs" >Ref</text>
<rect x="541.8" y="536.6" width="21.4" height="41.8" fill="#272727" rx="3.2" stroke="#4d4a48" stroke-width="0.9" />
<line x1="543.8" y1="541.6" x2="561.0" y2="541.6" stroke="#b552e4" stroke-width="1.3" />
<text x="552.5999999999999" y="554" font-size="8.3" fill="#dedede" text-anchor="middle" textLength="14" lengthAdjust="spacingAndGlyphs" >Add</text>
<text x="552.5999999999999" y="562.9" font-size="8.3" fill="#dedede" text-anchor="middle" textLength="15.4" lengthAdjust="spacingAndGlyphs" >New</text>
<text x="552.5999999999999" y="571.3" font-size="8.3" fill="#dedede" text-anchor="middle" textLength="11.8" lengthAdjust="spacingAndGlyphs" >Bus</text>
<rect x="574.3" y="536.6" width="21.4" height="41.8" fill="#272727" rx="3.2" stroke="#4d4a48" stroke-width="0.9" />
<line x1="576.3" y1="541.6" x2="593.5" y2="541.6" stroke="#505050" stroke-width="1.3" />
<text x="585.0999999999999" y="562.9" font-size="8.3" fill="#dedede" text-anchor="middle" textLength="16.6" lengthAdjust="spacingAndGlyphs" >DVM</text>
<rect x="607.6" y="538.2" width="100.7" height="39.5" fill="#c9c9c9" rx="2.2" />
<path d="M607.6,547.7 V540.4000000000001 a2.2,2.2 0 0 1 2.2,-2.2 H706.1 a2.2,2.2 0 0 1 2.2,2.2 V547.7 z" fill="#58595b"/>
<text x="610.6" y="545.7" font-size="8.5" fill="#f4f4f4" textLength="53.6" lengthAdjust="spacingAndGlyphs" stroke="#f4f4f4" stroke-width="0.2">AFG: Arbitrary</text>
<text x="610" y="555.7" font-size="8.3" fill="#242424" textLength="62.8" lengthAdjust="spacingAndGlyphs" >Freq: 20.9644 kHz</text>
<text x="610" y="565.8" font-size="8.3" fill="#242424" textLength="41" lengthAdjust="spacingAndGlyphs" >Amp: 5 Vpp</text>
<text x="610" y="576" font-size="8.3" fill="#242424" textLength="43" lengthAdjust="spacingAndGlyphs" >Offset: 2.5 V</text>
<linearGradient id="bg1" x1="0" y1="0" x2="0" y2="1"><stop offset="0" stop-color="#d2d2d2"/><stop offset="1" stop-color="#bcbcbc"/></linearGradient>
<rect x="676.8" y="548.5" width="27.6" height="27.6" fill="url(#bg1)" rx="2.6" stroke="#a2a2a2" stroke-width="0.9" />
<text x="690.8" y="564.7" font-size="8.2" fill="#141414" text-anchor="middle" font-weight="bold" textLength="18.4" lengthAdjust="spacingAndGlyphs" >Burst</text>
<rect x="712.4" y="538.2" width="106.7" height="39.5" fill="#c9c9c9" rx="2.2" />
<path d="M712.4,547.7 V540.4000000000001 a2.2,2.2 0 0 1 2.2,-2.2 H816.9 a2.2,2.2 0 0 1 2.2,2.2 V547.7 z" fill="#58595b"/>
<text x="715.4" y="545.7" font-size="8.5" fill="#f4f4f4" textLength="38.9" lengthAdjust="spacingAndGlyphs" stroke="#f4f4f4" stroke-width="0.2">Horizontal</text>
<text x="715" y="555.7" font-size="8.3" fill="#242424" textLength="30" lengthAdjust="spacingAndGlyphs" >10 µs/div</text>
<text x="772.1" y="555.7" font-size="8.3" fill="#242424" textLength="22.2" lengthAdjust="spacingAndGlyphs" >100 µs</text>
<text x="715" y="565.8" font-size="8.3" fill="#242424" textLength="45.4" lengthAdjust="spacingAndGlyphs" >SR: 12.5 GS/s</text>
<text x="772.1" y="565.8" font-size="8.3" fill="#242424" textLength="27" lengthAdjust="spacingAndGlyphs" >80 ps/pt</text>
<text x="715" y="576" font-size="8.3" fill="#242424" textLength="47" lengthAdjust="spacingAndGlyphs" >RL: 1.25 Mpts</text>
<path d="M771.7,570 h4.5 v3.6 l-2.25,2.1 l-2.25,-2.1 z" fill="#f08a1c"/>
<path d="M772.7,570.9 h2.5 M773.95,570.9 v3.2" stroke="#111" stroke-width="0.9" fill="none"/>
<text x="779.9" y="576" font-size="8.3" fill="#242424" textLength="15" lengthAdjust="spacingAndGlyphs" >10%</text>
<rect x="822.7" y="538.2" width="84.6" height="39.5" fill="#c9c9c9" rx="2.2" />
<path d="M822.7,547.7 V540.4000000000001 a2.2,2.2 0 0 1 2.2,-2.2 H905.1 a2.2,2.2 0 0 1 2.2,2.2 V547.7 z" fill="#58595b"/>
<text x="825.7" y="545.7" font-size="8.5" fill="#f4f4f4" textLength="25.5" lengthAdjust="spacingAndGlyphs" stroke="#f4f4f4" stroke-width="0.2">Trigger</text>
<text x="825" y="555.7" font-size="8.3" fill="#242424" textLength="13" lengthAdjust="spacingAndGlyphs" >Aux</text>
<path d="M857.4,555.6 h2 l4.4,-4.9 h2.2" fill="none" stroke="#45459c" stroke-width="1"/>
<text x="871.6" y="555.7" font-size="8.3" fill="#242424" textLength="27.2" lengthAdjust="spacingAndGlyphs" >200 mV</text>
<rect x="911" y="538.2" width="79.8" height="39.5" fill="#c9c9c9" rx="2.2" />
<path d="M911,547.7 V540.4000000000001 a2.2,2.2 0 0 1 2.2,-2.2 H988.5999999999999 a2.2,2.2 0 0 1 2.2,2.2 V547.7 z" fill="#58595b"/>
<text x="914" y="545.7" font-size="8.5" fill="#f4f4f4" textLength="41.3" lengthAdjust="spacingAndGlyphs" stroke="#f4f4f4" stroke-width="0.2">Acquisition</text>
<text x="913.5" y="555.7" font-size="8.3" fill="#242424" textLength="18.8" lengthAdjust="spacingAndGlyphs" >Auto,</text>
<text x="957" y="555.7" font-size="8.3" fill="#242424" textLength="26.2" lengthAdjust="spacingAndGlyphs" >Analyze</text>
<text x="913.5" y="565.8" font-size="8.3" fill="#242424" textLength="52.5" lengthAdjust="spacingAndGlyphs" >Sample: 12 bits</text>
<text x="913.5" y="576" font-size="8.3" fill="#242424" textLength="27.4" lengthAdjust="spacingAndGlyphs" >43 Acqs</text>
<rect x="1003.3" y="537.2" width="47.7" height="18.3" fill="#efef04" rx="3.4" />
<text x="1027" y="547.9" font-size="8.2" fill="#0a0a0a" text-anchor="middle" font-weight="bold" textLength="21.6" lengthAdjust="spacingAndGlyphs" >Ready</text>
<rect x="1003.3" y="558.8" width="47.7" height="19" fill="#c9c9c9" rx="2" />
<text x="1027.2" y="566.4" font-size="8.9" fill="#242424" text-anchor="middle" textLength="41.2" lengthAdjust="spacingAndGlyphs" >16 Jan 2023</text>
<text x="1027.3" y="575.7" font-size="8.9" fill="#242424" text-anchor="middle" textLength="39.5" lengthAdjust="spacingAndGlyphs" >3:28:24 PM</text>
</svg>
</body></html>
